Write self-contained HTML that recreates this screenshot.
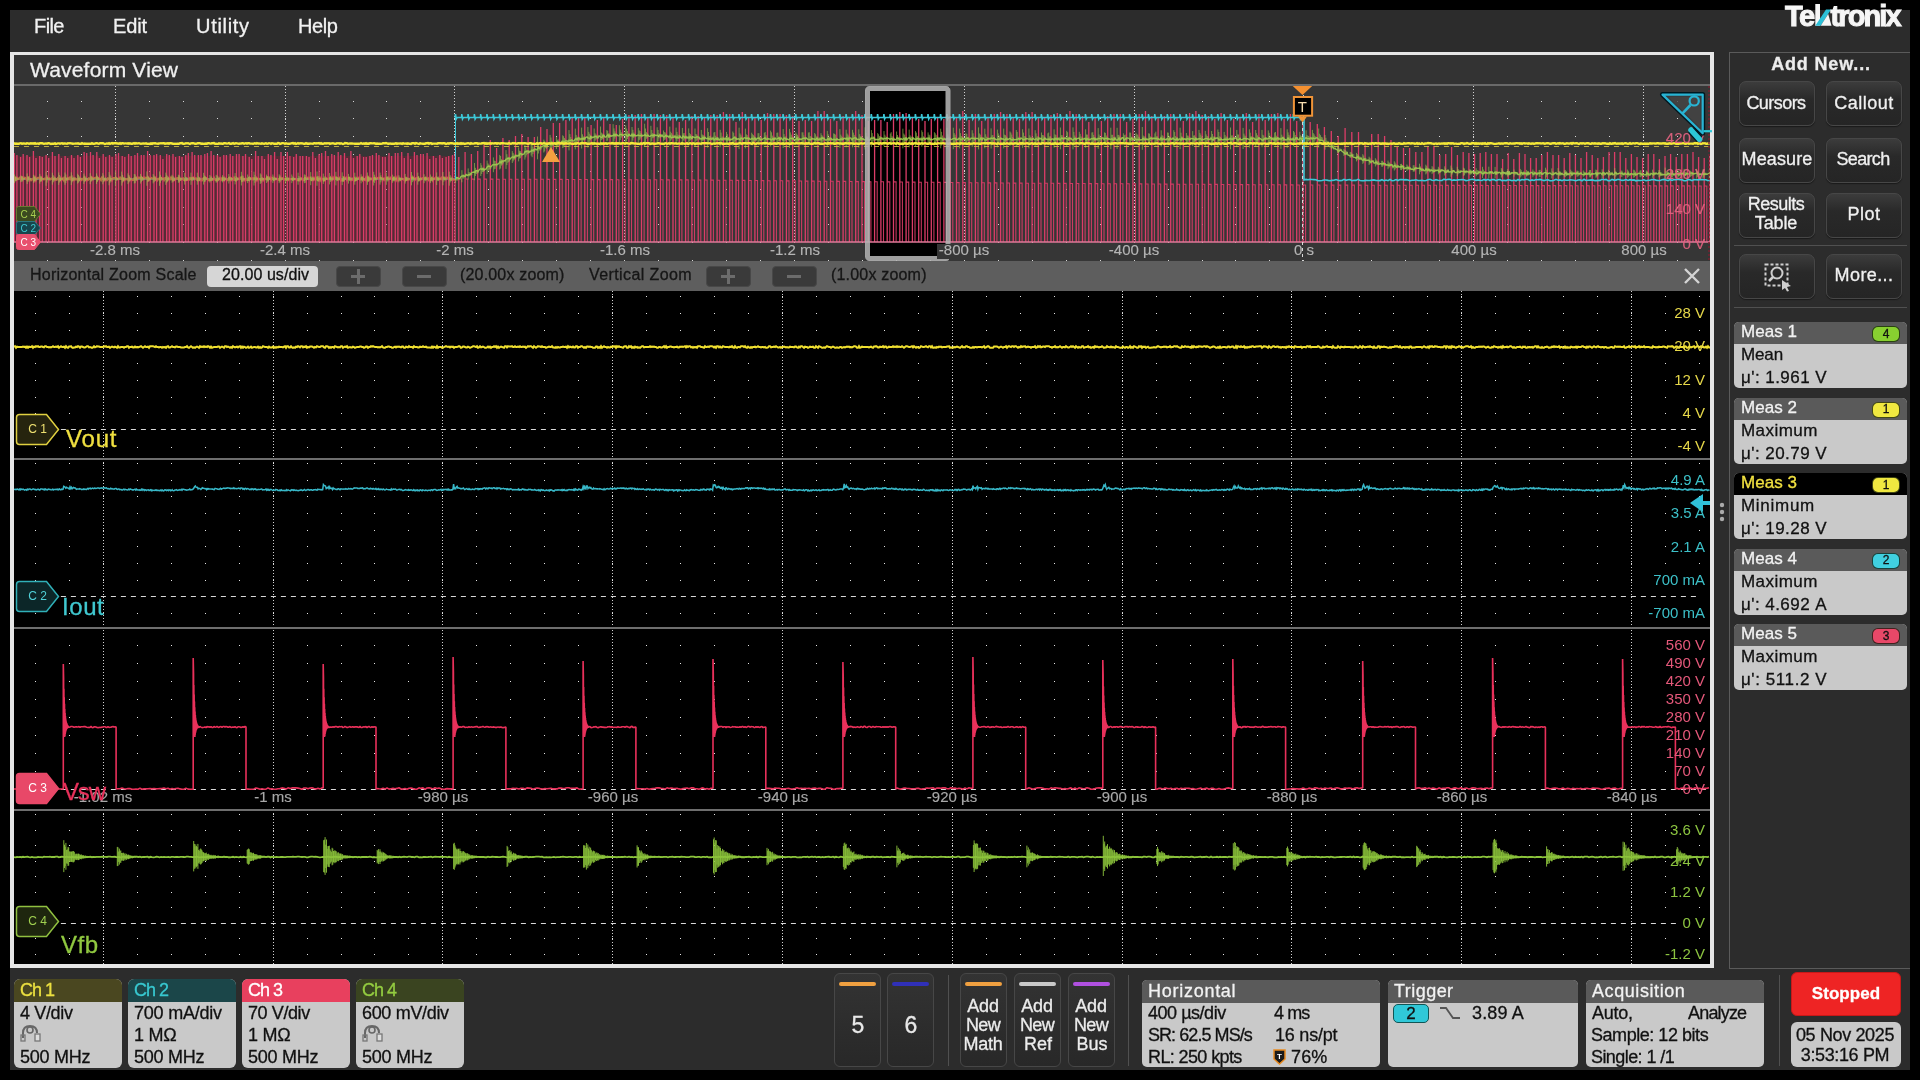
<!DOCTYPE html><html><head><meta charset="utf-8"><style>
html,body{margin:0;padding:0;} body{width:1920px;height:1080px;background:#000;position:relative;overflow:hidden;font-family:"Liberation Sans", sans-serif;}
.t{position:absolute;white-space:nowrap;line-height:1;will-change:transform;-webkit-text-stroke:0.3px currentColor;}
.r{position:absolute;box-sizing:border-box;}
svg{position:absolute;will-change:transform;}
</style></head><body>
<div class="r" style="left:10px;top:10px;width:1900px;height:1060px;background:#2c2c2c;"></div>
<div class="t" style="left:34.0px;top:15.6px;font-size:20px;color:#f2f2f2;font-weight:normal;letter-spacing:-0.58px;">File</div>
<div class="t" style="left:113.0px;top:15.6px;font-size:20px;color:#f2f2f2;font-weight:normal;letter-spacing:-0.15px;">Edit</div>
<div class="t" style="left:196.0px;top:15.6px;font-size:20px;color:#f2f2f2;font-weight:normal;letter-spacing:0.69px;">Utility</div>
<div class="t" style="left:298.0px;top:15.6px;font-size:20px;color:#f2f2f2;font-weight:normal;letter-spacing:-0.38px;">Help</div>
<svg style="left:1780px;top:0px" width="130" height="32" viewBox="1780 0 130 32"><text x="1785" y="25.8" font-family="Liberation Sans" font-weight="700" font-size="29" letter-spacing="-1.6" fill="#f6f6f6" stroke="#f6f6f6" stroke-width="1">Te</text><path d="M1815.3 4H1820V25.8H1815.3Z" fill="#f6f6f6"/><path d="M1815.3 25.8L1826 9.6H1831L1820.7 25.8Z" fill="#2cc0d8"/><path d="M1820.7 25.8L1828.2 14L1831.5 25.8Z" fill="#f6f6f6"/><text x="1830.5" y="25.8" font-family="Liberation Sans" font-weight="700" font-size="29" letter-spacing="-1.9" fill="#f6f6f6" stroke="#f6f6f6" stroke-width="1">tronix</text></svg>
<div class="r" style="left:10px;top:52px;width:1704px;height:916px;background:#e6e6e6;"></div>
<div class="r" style="left:14px;top:55px;width:1696px;height:29px;background:#333333;"></div>
<div class="t" style="left:29.5px;top:59.2px;font-size:21px;color:#f0f0f0;font-weight:normal;letter-spacing:0.18px;">Waveform View</div>
<div class="r" style="left:14px;top:84px;width:1696px;height:2px;background:#6a6a6a;"></div>
<div class="r" style="left:14px;top:86px;width:1696px;height:175px;background:#363636;"></div>
<div class="r" style="left:14px;top:261px;width:1696px;height:30px;background:#5e5e5e;"></div>
<div class="r" style="left:14px;top:291px;width:1696px;height:673px;background:#000000;"></div>
<svg style="left:14px;top:86px" width="1696" height="175" viewBox="14 86 1696 175"><path d="M47 101h1v1h-1zM47 118h1v1h-1zM47 136h1v1h-1zM47 154h1v1h-1zM47 171h1v1h-1zM47 189h1v1h-1zM47 207h1v1h-1zM47 224h1v1h-1zM47 242h1v1h-1zM47 260h1v1h-1zM81 101h1v1h-1zM81 118h1v1h-1zM81 136h1v1h-1zM81 154h1v1h-1zM81 171h1v1h-1zM81 189h1v1h-1zM81 207h1v1h-1zM81 224h1v1h-1zM81 242h1v1h-1zM81 260h1v1h-1zM115 101h1v1h-1zM115 118h1v1h-1zM115 136h1v1h-1zM115 154h1v1h-1zM115 171h1v1h-1zM115 189h1v1h-1zM115 207h1v1h-1zM115 224h1v1h-1zM115 242h1v1h-1zM115 260h1v1h-1zM149 101h1v1h-1zM149 118h1v1h-1zM149 136h1v1h-1zM149 154h1v1h-1zM149 171h1v1h-1zM149 189h1v1h-1zM149 207h1v1h-1zM149 224h1v1h-1zM149 242h1v1h-1zM149 260h1v1h-1zM183 101h1v1h-1zM183 118h1v1h-1zM183 136h1v1h-1zM183 154h1v1h-1zM183 171h1v1h-1zM183 189h1v1h-1zM183 207h1v1h-1zM183 224h1v1h-1zM183 242h1v1h-1zM183 260h1v1h-1zM217 101h1v1h-1zM217 118h1v1h-1zM217 136h1v1h-1zM217 154h1v1h-1zM217 171h1v1h-1zM217 189h1v1h-1zM217 207h1v1h-1zM217 224h1v1h-1zM217 242h1v1h-1zM217 260h1v1h-1zM251 101h1v1h-1zM251 118h1v1h-1zM251 136h1v1h-1zM251 154h1v1h-1zM251 171h1v1h-1zM251 189h1v1h-1zM251 207h1v1h-1zM251 224h1v1h-1zM251 242h1v1h-1zM251 260h1v1h-1zM285 101h1v1h-1zM285 118h1v1h-1zM285 136h1v1h-1zM285 154h1v1h-1zM285 171h1v1h-1zM285 189h1v1h-1zM285 207h1v1h-1zM285 224h1v1h-1zM285 242h1v1h-1zM285 260h1v1h-1zM319 101h1v1h-1zM319 118h1v1h-1zM319 136h1v1h-1zM319 154h1v1h-1zM319 171h1v1h-1zM319 189h1v1h-1zM319 207h1v1h-1zM319 224h1v1h-1zM319 242h1v1h-1zM319 260h1v1h-1zM353 101h1v1h-1zM353 118h1v1h-1zM353 136h1v1h-1zM353 154h1v1h-1zM353 171h1v1h-1zM353 189h1v1h-1zM353 207h1v1h-1zM353 224h1v1h-1zM353 242h1v1h-1zM353 260h1v1h-1zM386 101h1v1h-1zM386 118h1v1h-1zM386 136h1v1h-1zM386 154h1v1h-1zM386 171h1v1h-1zM386 189h1v1h-1zM386 207h1v1h-1zM386 224h1v1h-1zM386 242h1v1h-1zM386 260h1v1h-1zM420 101h1v1h-1zM420 118h1v1h-1zM420 136h1v1h-1zM420 154h1v1h-1zM420 171h1v1h-1zM420 189h1v1h-1zM420 207h1v1h-1zM420 224h1v1h-1zM420 242h1v1h-1zM420 260h1v1h-1zM454 101h1v1h-1zM454 118h1v1h-1zM454 136h1v1h-1zM454 154h1v1h-1zM454 171h1v1h-1zM454 189h1v1h-1zM454 207h1v1h-1zM454 224h1v1h-1zM454 242h1v1h-1zM454 260h1v1h-1zM488 101h1v1h-1zM488 118h1v1h-1zM488 136h1v1h-1zM488 154h1v1h-1zM488 171h1v1h-1zM488 189h1v1h-1zM488 207h1v1h-1zM488 224h1v1h-1zM488 242h1v1h-1zM488 260h1v1h-1zM522 101h1v1h-1zM522 118h1v1h-1zM522 136h1v1h-1zM522 154h1v1h-1zM522 171h1v1h-1zM522 189h1v1h-1zM522 207h1v1h-1zM522 224h1v1h-1zM522 242h1v1h-1zM522 260h1v1h-1zM556 101h1v1h-1zM556 118h1v1h-1zM556 136h1v1h-1zM556 154h1v1h-1zM556 171h1v1h-1zM556 189h1v1h-1zM556 207h1v1h-1zM556 224h1v1h-1zM556 242h1v1h-1zM556 260h1v1h-1zM590 101h1v1h-1zM590 118h1v1h-1zM590 136h1v1h-1zM590 154h1v1h-1zM590 171h1v1h-1zM590 189h1v1h-1zM590 207h1v1h-1zM590 224h1v1h-1zM590 242h1v1h-1zM590 260h1v1h-1zM624 101h1v1h-1zM624 118h1v1h-1zM624 136h1v1h-1zM624 154h1v1h-1zM624 171h1v1h-1zM624 189h1v1h-1zM624 207h1v1h-1zM624 224h1v1h-1zM624 242h1v1h-1zM624 260h1v1h-1zM658 101h1v1h-1zM658 118h1v1h-1zM658 136h1v1h-1zM658 154h1v1h-1zM658 171h1v1h-1zM658 189h1v1h-1zM658 207h1v1h-1zM658 224h1v1h-1zM658 242h1v1h-1zM658 260h1v1h-1zM692 101h1v1h-1zM692 118h1v1h-1zM692 136h1v1h-1zM692 154h1v1h-1zM692 171h1v1h-1zM692 189h1v1h-1zM692 207h1v1h-1zM692 224h1v1h-1zM692 242h1v1h-1zM692 260h1v1h-1zM726 101h1v1h-1zM726 118h1v1h-1zM726 136h1v1h-1zM726 154h1v1h-1zM726 171h1v1h-1zM726 189h1v1h-1zM726 207h1v1h-1zM726 224h1v1h-1zM726 242h1v1h-1zM726 260h1v1h-1zM760 101h1v1h-1zM760 118h1v1h-1zM760 136h1v1h-1zM760 154h1v1h-1zM760 171h1v1h-1zM760 189h1v1h-1zM760 207h1v1h-1zM760 224h1v1h-1zM760 242h1v1h-1zM760 260h1v1h-1zM794 101h1v1h-1zM794 118h1v1h-1zM794 136h1v1h-1zM794 154h1v1h-1zM794 171h1v1h-1zM794 189h1v1h-1zM794 207h1v1h-1zM794 224h1v1h-1zM794 242h1v1h-1zM794 260h1v1h-1zM828 101h1v1h-1zM828 118h1v1h-1zM828 136h1v1h-1zM828 154h1v1h-1zM828 171h1v1h-1zM828 189h1v1h-1zM828 207h1v1h-1zM828 224h1v1h-1zM828 242h1v1h-1zM828 260h1v1h-1zM862 101h1v1h-1zM862 118h1v1h-1zM862 136h1v1h-1zM862 154h1v1h-1zM862 171h1v1h-1zM862 189h1v1h-1zM862 207h1v1h-1zM862 224h1v1h-1zM862 242h1v1h-1zM862 260h1v1h-1zM896 101h1v1h-1zM896 118h1v1h-1zM896 136h1v1h-1zM896 154h1v1h-1zM896 171h1v1h-1zM896 189h1v1h-1zM896 207h1v1h-1zM896 224h1v1h-1zM896 242h1v1h-1zM896 260h1v1h-1zM930 101h1v1h-1zM930 118h1v1h-1zM930 136h1v1h-1zM930 154h1v1h-1zM930 171h1v1h-1zM930 189h1v1h-1zM930 207h1v1h-1zM930 224h1v1h-1zM930 242h1v1h-1zM930 260h1v1h-1zM964 101h1v1h-1zM964 118h1v1h-1zM964 136h1v1h-1zM964 154h1v1h-1zM964 171h1v1h-1zM964 189h1v1h-1zM964 207h1v1h-1zM964 224h1v1h-1zM964 242h1v1h-1zM964 260h1v1h-1zM998 101h1v1h-1zM998 118h1v1h-1zM998 136h1v1h-1zM998 154h1v1h-1zM998 171h1v1h-1zM998 189h1v1h-1zM998 207h1v1h-1zM998 224h1v1h-1zM998 242h1v1h-1zM998 260h1v1h-1zM1032 101h1v1h-1zM1032 118h1v1h-1zM1032 136h1v1h-1zM1032 154h1v1h-1zM1032 171h1v1h-1zM1032 189h1v1h-1zM1032 207h1v1h-1zM1032 224h1v1h-1zM1032 242h1v1h-1zM1032 260h1v1h-1zM1066 101h1v1h-1zM1066 118h1v1h-1zM1066 136h1v1h-1zM1066 154h1v1h-1zM1066 171h1v1h-1zM1066 189h1v1h-1zM1066 207h1v1h-1zM1066 224h1v1h-1zM1066 242h1v1h-1zM1066 260h1v1h-1zM1100 101h1v1h-1zM1100 118h1v1h-1zM1100 136h1v1h-1zM1100 154h1v1h-1zM1100 171h1v1h-1zM1100 189h1v1h-1zM1100 207h1v1h-1zM1100 224h1v1h-1zM1100 242h1v1h-1zM1100 260h1v1h-1zM1134 101h1v1h-1zM1134 118h1v1h-1zM1134 136h1v1h-1zM1134 154h1v1h-1zM1134 171h1v1h-1zM1134 189h1v1h-1zM1134 207h1v1h-1zM1134 224h1v1h-1zM1134 242h1v1h-1zM1134 260h1v1h-1zM1168 101h1v1h-1zM1168 118h1v1h-1zM1168 136h1v1h-1zM1168 154h1v1h-1zM1168 171h1v1h-1zM1168 189h1v1h-1zM1168 207h1v1h-1zM1168 224h1v1h-1zM1168 242h1v1h-1zM1168 260h1v1h-1zM1202 101h1v1h-1zM1202 118h1v1h-1zM1202 136h1v1h-1zM1202 154h1v1h-1zM1202 171h1v1h-1zM1202 189h1v1h-1zM1202 207h1v1h-1zM1202 224h1v1h-1zM1202 242h1v1h-1zM1202 260h1v1h-1zM1235 101h1v1h-1zM1235 118h1v1h-1zM1235 136h1v1h-1zM1235 154h1v1h-1zM1235 171h1v1h-1zM1235 189h1v1h-1zM1235 207h1v1h-1zM1235 224h1v1h-1zM1235 242h1v1h-1zM1235 260h1v1h-1zM1269 101h1v1h-1zM1269 118h1v1h-1zM1269 136h1v1h-1zM1269 154h1v1h-1zM1269 171h1v1h-1zM1269 189h1v1h-1zM1269 207h1v1h-1zM1269 224h1v1h-1zM1269 242h1v1h-1zM1269 260h1v1h-1zM1303 101h1v1h-1zM1303 118h1v1h-1zM1303 136h1v1h-1zM1303 154h1v1h-1zM1303 171h1v1h-1zM1303 189h1v1h-1zM1303 207h1v1h-1zM1303 224h1v1h-1zM1303 242h1v1h-1zM1303 260h1v1h-1zM1337 101h1v1h-1zM1337 118h1v1h-1zM1337 136h1v1h-1zM1337 154h1v1h-1zM1337 171h1v1h-1zM1337 189h1v1h-1zM1337 207h1v1h-1zM1337 224h1v1h-1zM1337 242h1v1h-1zM1337 260h1v1h-1zM1371 101h1v1h-1zM1371 118h1v1h-1zM1371 136h1v1h-1zM1371 154h1v1h-1zM1371 171h1v1h-1zM1371 189h1v1h-1zM1371 207h1v1h-1zM1371 224h1v1h-1zM1371 242h1v1h-1zM1371 260h1v1h-1zM1405 101h1v1h-1zM1405 118h1v1h-1zM1405 136h1v1h-1zM1405 154h1v1h-1zM1405 171h1v1h-1zM1405 189h1v1h-1zM1405 207h1v1h-1zM1405 224h1v1h-1zM1405 242h1v1h-1zM1405 260h1v1h-1zM1439 101h1v1h-1zM1439 118h1v1h-1zM1439 136h1v1h-1zM1439 154h1v1h-1zM1439 171h1v1h-1zM1439 189h1v1h-1zM1439 207h1v1h-1zM1439 224h1v1h-1zM1439 242h1v1h-1zM1439 260h1v1h-1zM1473 101h1v1h-1zM1473 118h1v1h-1zM1473 136h1v1h-1zM1473 154h1v1h-1zM1473 171h1v1h-1zM1473 189h1v1h-1zM1473 207h1v1h-1zM1473 224h1v1h-1zM1473 242h1v1h-1zM1473 260h1v1h-1zM1507 101h1v1h-1zM1507 118h1v1h-1zM1507 136h1v1h-1zM1507 154h1v1h-1zM1507 171h1v1h-1zM1507 189h1v1h-1zM1507 207h1v1h-1zM1507 224h1v1h-1zM1507 242h1v1h-1zM1507 260h1v1h-1zM1541 101h1v1h-1zM1541 118h1v1h-1zM1541 136h1v1h-1zM1541 154h1v1h-1zM1541 171h1v1h-1zM1541 189h1v1h-1zM1541 207h1v1h-1zM1541 224h1v1h-1zM1541 242h1v1h-1zM1541 260h1v1h-1zM1575 101h1v1h-1zM1575 118h1v1h-1zM1575 136h1v1h-1zM1575 154h1v1h-1zM1575 171h1v1h-1zM1575 189h1v1h-1zM1575 207h1v1h-1zM1575 224h1v1h-1zM1575 242h1v1h-1zM1575 260h1v1h-1zM1609 101h1v1h-1zM1609 118h1v1h-1zM1609 136h1v1h-1zM1609 154h1v1h-1zM1609 171h1v1h-1zM1609 189h1v1h-1zM1609 207h1v1h-1zM1609 224h1v1h-1zM1609 242h1v1h-1zM1609 260h1v1h-1zM1643 101h1v1h-1zM1643 118h1v1h-1zM1643 136h1v1h-1zM1643 154h1v1h-1zM1643 171h1v1h-1zM1643 189h1v1h-1zM1643 207h1v1h-1zM1643 224h1v1h-1zM1643 242h1v1h-1zM1643 260h1v1h-1zM1677 101h1v1h-1zM1677 118h1v1h-1zM1677 136h1v1h-1zM1677 154h1v1h-1zM1677 171h1v1h-1zM1677 189h1v1h-1zM1677 207h1v1h-1zM1677 224h1v1h-1zM1677 242h1v1h-1zM1677 260h1v1h-1z" fill="#d8d8d8"/><path d="M115.5 86V261M285.5 86V261M454.5 86V261M624.5 86V261M794.5 86V261M964.5 86V261M1134.5 86V261M1303.5 86V261M1473.5 86V261M1643.5 86V261" stroke="#d0d0d0" stroke-width="1" stroke-dasharray="1 2"/><rect x="866" y="87" width="84" height="173" fill="#000"/><path d="M14 179H455" stroke="#3cc4d4" stroke-width="1.5" fill="none"/><path d="M14 178.5L15 178.0L16 179.5L17 177.7L18 179.1L19 178.6L20 177.7L21 179.0L22 177.6L23 178.8L24 177.7L25 177.8L26 178.8L27 180.0L28 177.9L29 178.2L30 179.4L31 180.3L32 179.2L33 178.7L34 180.4L35 177.6L36 180.1L37 178.4L38 177.9L39 177.9L40 178.4L41 179.9L42 178.0L43 179.2L44 179.4L45 178.6L46 179.1L47 177.7L48 177.7L49 178.1L50 179.5L51 178.8L52 178.4L53 179.3L54 178.9L55 178.4L56 179.9L57 179.6L58 178.2L59 179.2L60 179.1L61 180.1L62 179.7L63 178.4L64 180.4L65 177.9L66 178.8L67 179.8L68 178.0L69 179.0L70 177.6L71 179.5L72 179.8L73 179.2L74 180.1L75 178.4L76 179.6L77 179.3L78 179.2L79 178.9L80 180.0L81 180.3L82 178.9L83 179.5L84 177.7L85 179.6L86 179.4L87 180.5L88 180.0L89 178.4L90 178.7L91 179.5L92 177.6L93 178.9L94 178.0L95 177.9L96 177.7L97 179.8L98 177.9L99 178.2L100 178.7L101 180.1L102 177.7L103 178.8L104 179.1L105 180.2L106 180.0L107 180.1L108 178.3L109 178.7L110 178.6L111 180.2L112 180.4L113 178.0L114 178.0L115 178.2L116 178.2L117 179.0L118 179.3L119 178.3L120 177.5L121 178.8L122 178.6L123 179.2L124 180.4L125 179.6L126 179.0L127 179.4L128 179.5L129 177.7L130 180.2L131 179.8L132 180.1L133 179.9L134 178.7L135 178.7L136 177.8L137 179.4L138 177.7L139 177.7L140 178.1L141 178.0L142 178.5L143 177.7L144 177.5L145 178.0L146 177.8L147 178.6L148 177.6L149 180.1L150 179.3L151 177.9L152 178.3L153 178.5L154 178.6L155 177.9L156 180.0L157 180.5L158 178.9L159 179.0L160 177.8L161 177.8L162 178.5L163 178.3L164 180.0L165 178.0L166 177.6L167 180.4L168 179.1L169 177.9L170 179.1L171 177.6L172 179.1L173 180.4L174 180.1L175 179.6L176 178.3L177 178.6L178 178.0L179 179.8L180 179.1L181 179.8L182 178.5L183 178.2L184 179.9L185 180.5L186 180.1L187 179.9L188 180.0L189 179.7L190 178.2L191 179.1L192 178.6L193 177.6L194 177.6L195 178.3L196 178.3L197 179.6L198 180.4L199 178.8L200 180.3L201 180.5L202 180.4L203 178.6L204 178.2L205 178.2L206 178.1L207 178.1L208 179.4L209 180.2L210 180.0L211 178.9L212 179.5L213 179.9L214 177.8L215 179.5L216 180.2L217 179.8L218 179.8L219 178.9L220 178.0L221 179.9L222 178.5L223 179.9L224 180.4L225 178.7L226 178.7L227 180.3L228 179.7L229 178.0L230 177.9L231 178.0L232 180.2L233 179.9L234 177.9L235 180.0L236 180.4L237 179.5L238 178.6L239 179.1L240 177.9L241 177.5L242 180.4L243 179.4L244 179.1L245 180.3L246 178.8L247 180.1L248 180.0L249 178.1L250 178.3L251 178.4L252 178.2L253 179.3L254 178.3L255 178.8L256 177.9L257 180.2L258 178.6L259 178.9L260 179.3L261 180.2L262 178.8L263 180.3L264 179.0L265 179.1L266 179.1L267 177.6L268 178.8L269 178.0L270 177.5L271 179.9L272 178.0L273 178.9L274 179.7L275 179.2L276 178.5L277 179.1L278 179.2L279 179.9L280 177.8L281 179.2L282 178.2L283 178.3L284 179.8L285 179.0L286 179.2L287 179.8L288 180.2L289 178.8L290 179.3L291 179.0L292 179.0L293 179.6L294 178.9L295 179.1L296 178.9L297 180.3L298 179.6L299 180.1L300 180.3L301 178.3L302 179.2L303 180.3L304 180.0L305 177.9L306 177.9L307 178.8L308 177.7L309 178.2L310 177.7L311 179.5L312 179.9L313 180.2L314 178.0L315 179.6L316 179.5L317 177.9L318 180.1L319 180.4L320 178.2L321 180.4L322 178.7L323 179.0L324 180.5L325 180.0L326 178.0L327 178.8L328 179.0L329 178.5L330 178.1L331 178.5L332 179.7L333 177.6L334 179.2L335 178.8L336 177.6L337 178.5L338 179.4L339 179.0L340 177.7L341 180.5L342 179.9L343 180.4L344 177.8L345 178.3L346 177.6L347 179.8L348 178.3L349 177.9L350 178.8L351 180.2L352 180.0L353 178.3L354 177.9L355 180.3L356 179.2L357 179.6L358 177.8L359 177.7L360 179.6L361 178.8L362 177.7L363 180.3L364 179.4L365 179.9L366 177.8L367 180.1L368 177.7L369 180.1L370 178.9L371 178.5L372 179.2L373 180.3L374 178.3L375 177.9L376 179.1L377 178.2L378 177.8L379 178.0L380 177.7L381 178.1L382 178.4L383 178.4L384 179.8L385 178.4L386 179.0L387 178.0L388 178.5L389 177.6L390 178.3L391 177.5L392 179.7L393 179.2L394 178.1L395 178.9L396 180.3L397 177.8L398 180.0L399 178.8L400 179.0L401 180.0L402 178.7L403 179.0L404 179.6L405 180.4L406 178.5L407 180.0L408 179.6L409 179.4L410 178.7L411 178.5L412 177.7L413 177.9L414 177.7L415 179.7L416 178.3L417 178.0L418 177.8L419 180.0L420 180.1L421 179.5L422 178.3L423 178.2L424 178.4L425 178.9L426 178.0L427 178.8L428 178.3L429 180.4L430 180.4L431 179.1L432 178.2L433 180.4L434 178.4L435 178.6L436 177.5L437 178.6L438 178.9L439 179.0L440 178.1L441 179.0L442 177.5L443 178.3L444 177.8L445 178.7L446 177.6L447 177.6L448 178.4L449 178.2L450 179.3L451 179.1L452 179.8L453 179.5L454 179.6L455 180.1" stroke="#c8a048" stroke-width="2.2" fill="none"/><rect x="14" y="156" width="441" height="86" fill="rgba(140,25,55,0.36)"/><path d="M14.3 242V153M16.9 242V155M20.6 242V157M23.2 242V154M27.0 242V155M29.6 242V157M33.4 242V151M36.0 242V158M39.7 242V156M42.3 242V157M46.1 242V155M48.7 242V158M52.4 242V152M55.0 242V156M58.8 242V154M61.4 242V158M65.1 242V156M67.7 242V158M71.5 242V155M74.0 242V158M77.8 242V155M80.4 242V157M84.1 242V152M86.7 242V153M90.5 242V152M93.1 242V155M96.8 242V152M99.4 242V158M103.2 242V154M105.8 242V157M109.5 242V155M112.1 242V157M115.9 242V154M118.5 242V153M122.2 242V156M124.8 242V157M128.6 242V154M131.2 242V156M134.9 242V155M137.5 242V153M141.3 242V155M143.9 242V155M147.6 242V151M150.2 242V155M154.0 242V155M156.6 242V154M160.3 242V155M162.9 242V159M166.7 242V154M169.3 242V155M173.0 242V154M175.6 242V157M179.4 242V156M182.0 242V157M185.7 242V155M188.3 242V153M192.1 242V152M194.7 242V155M198.4 242V155M201.0 242V155M204.8 242V154M207.4 242V153M211.1 242V151M213.7 242V155M217.5 242V155M220.1 242V157M223.8 242V155M226.4 242V155M230.2 242V154M232.8 242V156M236.5 242V154M239.1 242V154M242.9 242V156M245.5 242V154M249.2 242V157M251.8 242V159M255.6 242V151M258.2 242V156M261.9 242V156M264.5 242V159M268.3 242V154M270.9 242V155M274.6 242V152M277.2 242V159M281.0 242V152M283.6 242V156M287.3 242V152M289.9 242V156M293.7 242V157M296.3 242V154M300.1 242V156M302.7 242V156M306.4 242V156M309.0 242V157M312.8 242V152M315.4 242V158M319.1 242V154M321.7 242V153M325.5 242V151M328.1 242V156M331.8 242V154M334.4 242V155M338.2 242V152M340.8 242V155M344.5 242V153M347.1 242V158M350.9 242V151M353.5 242V158M357.2 242V156M359.8 242V154M363.6 242V157M366.2 242V157M369.9 242V156M372.5 242V155M376.3 242V153M378.9 242V155M382.6 242V157M385.2 242V157M389.0 242V153M391.6 242V156M395.3 242V153M397.9 242V153M401.7 242V152M404.3 242V158M408.0 242V153M410.6 242V159M414.4 242V152M417.0 242V155M420.7 242V154M423.3 242V154M427.1 242V153M429.7 242V159M433.4 242V156M436.0 242V158M439.8 242V155M442.4 242V158M446.1 242V157M448.7 242V156M452.5 242V155M455.1 242V153M458.8 242V157M465.1 242V152M471.4 242V154M477.7 242V151M484.0 242V145M490.3 242V140M496.6 242V148M502.9 242V138M509.2 242V140M515.5 242V136M521.8 242V134M528.1 242V137M534.4 242V137M540.7 242V127M547.0 242V129M553.3 242V123M559.6 242V123M565.9 242V120M572.2 242V118M578.5 242V117M584.8 242V117M591.1 242V125M597.4 242V120M603.7 242V117M610.0 242V124M616.3 242V125M622.6 242V119M628.9 242V115M635.2 242V115M641.5 242V114M647.8 242V117M654.1 242V114M660.4 242V115M666.7 242V115M673.0 242V118M679.3 242V122M685.6 242V120M691.9 242V116M698.2 242V116M704.5 242V117M710.8 242V115M717.1 242V115M723.4 242V112M729.7 242V114M736.0 242V122M742.3 242V112M748.6 242V117M754.9 242V118M761.2 242V120M767.5 242V113M773.8 242V114M780.1 242V114M786.4 242V115M792.7 242V116M799.0 242V121M805.3 242V120M811.6 242V121M817.9 242V111M824.2 242V111M830.5 242V119M836.8 242V121M843.1 242V116M849.4 242V117M855.7 242V111M862.0 242V115M868.3 242V121M874.6 242V120M880.9 242V120M887.2 242V122M893.5 242V114M899.8 242V112M906.1 242V113M912.4 242V117M918.7 242V119M925.0 242V121M931.3 242V119M937.6 242V118M943.9 242V119M950.2 242V116M956.5 242V117M962.8 242V111M969.1 242V120M975.4 242V114M981.7 242V121M988.0 242V118M994.3 242V114M1000.6 242V112M1006.9 242V114M1013.2 242V118M1019.5 242V119M1025.8 242V112M1032.1 242V112M1038.4 242V117M1044.7 242V117M1051.0 242V115M1057.3 242V113M1063.6 242V118M1069.9 242V111M1076.2 242V114M1082.5 242V116M1088.8 242V122M1095.1 242V118M1101.4 242V121M1107.7 242V116M1114.0 242V114M1120.3 242V114M1126.6 242V122M1132.9 242V119M1139.2 242V114M1145.5 242V111M1151.8 242V116M1158.1 242V118M1164.4 242V116M1170.7 242V114M1177.0 242V118M1183.3 242V121M1189.6 242V113M1195.9 242V111M1202.2 242V115M1208.5 242V116M1214.8 242V119M1221.1 242V113M1227.4 242V120M1233.7 242V119M1240.0 242V117M1246.3 242V113M1252.6 242V122M1258.9 242V114M1265.2 242V120M1271.5 242V114M1277.8 242V113M1284.1 242V119M1290.4 242V114M1296.7 242V121M1303.0 242V124M1310.2 242V122M1317.3 242V124M1324.4 242V127M1331.3 242V131M1338.2 242V136M1345.1 242V128M1351.8 242V132M1358.5 242V132M1365.1 242V142M1371.7 242V134M1378.2 242V134M1384.6 242V136M1391.0 242V140M1397.2 242V147M1403.5 242V148M1409.6 242V148M1415.8 242V152M1421.9 242V152M1427.9 242V146M1433.9 242V146M1439.8 242V155M1445.7 242V154M1451.6 242V147M1457.4 242V155M1463.2 242V152M1468.9 242V153M1474.6 242V154M1480.2 242V153M1485.8 242V152M1491.4 242V154M1497.0 242V154M1502.6 242V159M1508.2 242V153M1513.8 242V159M1519.4 242V153M1525.0 242V154M1530.6 242V158M1536.2 242V158M1541.8 242V155M1547.4 242V152M1553.0 242V155M1558.6 242V155M1564.2 242V158M1569.8 242V153M1575.4 242V155M1581.0 242V158M1586.6 242V152M1592.2 242V155M1597.8 242V158M1603.4 242V157M1609.0 242V152M1614.6 242V152M1620.2 242V152M1625.8 242V158M1631.4 242V154M1637.0 242V157M1642.6 242V158M1648.2 242V154M1653.8 242V154M1659.4 242V159M1665.0 242V156M1670.6 242V154M1676.2 242V157M1681.8 242V154M1687.4 242V154M1693.0 242V152M1698.6 242V157M1704.2 242V158M1709.8 242V156" stroke="#dc3c68" stroke-width="1.3" fill="none"/><path d="M458.8 179.0H461.4V242M465.1 179.0H467.7V242M471.4 179.1H474.0V242M477.7 179.1H480.3V242M484.0 179.1H486.6V242M490.3 179.1H492.9V242M496.6 179.2H499.2V242M502.9 179.2H505.5V242M509.2 179.2H511.8V242M515.5 179.2H518.1V242M521.8 179.3H524.4V242M528.1 179.3H530.7V242M534.4 179.3H537.0V242M540.7 179.3H543.3V242M547.0 179.4H549.6V242M553.3 179.4H555.9V242M559.6 179.4H562.2V242M565.9 179.5H568.5V242M572.2 179.5H574.8V242M578.5 179.5H581.1V242M584.8 179.5H587.4V242M591.1 179.6H593.7V242M597.4 179.6H600.0V242M603.7 179.6H606.3V242M610.0 179.6H612.6V242M616.3 179.7H618.9V242M622.6 179.7H625.2V242M628.9 179.7H631.5V242M635.2 179.7H637.8V242M641.5 179.8H644.1V242M647.8 179.8H650.4V242M654.1 179.8H656.7V242M660.4 179.8H663.0V242M666.7 179.9H669.3V242M673.0 179.9H675.6V242M679.3 179.9H681.9V242M685.6 179.9H688.2V242M691.9 180.0H694.5V242M698.2 180.0H700.8V242M704.5 180.0H707.1V242M710.8 180.1H713.4V242M717.1 180.2H719.7V242M723.4 180.2H726.0V242M729.7 180.3H732.3V242M736.0 180.4H738.6V242M742.3 180.4H744.9V242M748.6 180.5H751.2V242M754.9 180.5H757.5V242M761.2 180.6H763.8V242M767.5 180.7H770.1V242M773.8 180.7H776.4V242M780.1 180.8H782.7V242M786.4 180.9H789.0V242M792.7 180.9H795.3V242M799.0 181.0H801.6V242M805.3 181.1H807.9V242M811.6 181.1H814.2V242M817.9 181.2H820.5V242M824.2 181.2H826.8V242M830.5 181.3H833.1V242M836.8 181.4H839.4V242M843.1 181.4H845.7V242M849.4 181.5H852.0V242M855.7 181.6H858.3V242M862.0 181.6H864.6V242M868.3 181.7H870.9V242M874.6 181.7H877.2V242M880.9 181.8H883.5V242M887.2 181.9H889.8V242M893.5 181.9H896.1V242M899.8 182.0H902.4V242M906.1 182.1H908.7V242M912.4 182.1H915.0V242M918.7 182.2H921.3V242M925.0 182.2H927.6V242M931.3 182.3H933.9V242M937.6 182.4H940.2V242M943.9 182.4H946.5V242M950.2 182.5H952.8V242M956.5 182.6H959.1V242M962.8 182.6H965.4V242M969.1 182.7H971.7V242M975.4 182.8H978.0V242M981.7 182.8H984.3V242M988.0 182.9H990.6V242M994.3 182.9H996.9V242M1000.6 183.0H1003.2V242M1006.9 183.0H1009.5V242M1013.2 183.1H1015.8V242M1019.5 183.1H1022.1V242M1025.8 183.2H1028.4V242M1032.1 183.2H1034.7V242M1038.4 183.3H1041.0V242M1044.7 183.3H1047.3V242M1051.0 183.3H1053.6V242M1057.3 183.4H1059.9V242M1063.6 183.4H1066.2V242M1069.9 183.5H1072.5V242M1076.2 183.5H1078.8V242M1082.5 183.5H1085.1V242M1088.8 183.6H1091.4V242M1095.1 183.6H1097.7V242M1101.4 183.7H1104.0V242M1107.7 183.7H1110.3V242M1114.0 183.8H1116.6V242M1120.3 183.8H1122.9V242M1126.6 183.8H1129.2V242M1132.9 183.9H1135.5V242M1139.2 183.9H1141.8V242M1145.5 184.0H1148.1V242M1151.8 184.0H1154.4V242M1158.1 184.0H1160.7V242M1164.4 184.1H1167.0V242M1170.7 184.1H1173.3V242M1177.0 184.2H1179.6V242M1183.3 184.2H1185.9V242M1189.6 184.3H1192.2V242M1195.9 184.3H1198.5V242M1202.2 184.3H1204.8V242M1208.5 184.4H1211.1V242M1214.8 184.4H1217.4V242M1221.1 184.5H1223.7V242M1227.4 184.5H1230.0V242M1233.7 184.5H1236.3V242M1240.0 184.6H1242.6V242M1246.3 184.6H1248.9V242M1252.6 184.7H1255.2V242M1258.9 184.7H1261.5V242M1265.2 184.8H1267.8V242M1271.5 184.8H1274.1V242M1277.8 184.8H1280.4V242M1284.1 184.9H1286.7V242M1290.4 184.9H1293.0V242M1296.7 185.0H1299.3V242M1303.0 185.0H1305.6V242M1310.2 185.0H1312.8V242M1317.3 185.0H1319.9V242M1324.4 185.1H1327.0V242M1331.3 185.1H1333.9V242M1338.2 185.1H1340.8V242M1345.1 185.1H1347.7V242M1351.8 185.1H1354.4V242M1358.5 185.1H1361.1V242M1365.1 185.2H1367.7V242M1371.7 185.2H1374.3V242M1378.2 185.2H1380.8V242M1384.6 185.2H1387.2V242M1391.0 185.2H1393.6V242M1397.2 185.2H1399.8V242M1403.5 185.2H1406.1V242M1409.6 185.3H1412.2V242M1415.8 185.3H1418.4V242M1421.9 185.3H1424.5V242M1427.9 185.3H1430.5V242M1433.9 185.3H1436.5V242M1439.8 185.3H1442.4V242M1445.7 185.4H1448.3V242M1451.6 185.4H1454.2V242M1457.4 185.4H1460.0V242M1463.2 185.4H1465.8V242M1468.9 185.4H1471.5V242M1474.6 185.4H1477.2V242M1480.2 185.4H1482.8V242M1485.8 185.5H1488.4V242M1491.4 185.5H1494.0V242M1497.0 185.5H1499.6V242M1502.6 185.5H1505.2V242M1508.2 185.5H1510.8V242M1513.8 185.5H1516.4V242M1519.4 185.5H1522.0V242M1525.0 185.5H1527.6V242M1530.6 185.6H1533.2V242M1536.2 185.6H1538.8V242M1541.8 185.6H1544.4V242M1547.4 185.6H1550.0V242M1553.0 185.6H1555.6V242M1558.6 185.6H1561.2V242M1564.2 185.6H1566.8V242M1569.8 185.7H1572.4V242M1575.4 185.7H1578.0V242M1581.0 185.7H1583.6V242M1586.6 185.7H1589.2V242M1592.2 185.7H1594.8V242M1597.8 185.7H1600.4V242M1603.4 185.7H1606.0V242M1609.0 185.8H1611.6V242M1614.6 185.8H1617.2V242M1620.2 185.8H1622.8V242M1625.8 185.8H1628.4V242M1631.4 185.8H1634.0V242M1637.0 185.8H1639.6V242M1642.6 185.8H1645.2V242M1648.2 185.8H1650.8V242M1653.8 185.9H1656.4V242M1659.4 185.9H1662.0V242M1665.0 185.9H1667.6V242M1670.6 185.9H1673.2V242M1676.2 185.9H1678.8V242M1681.8 185.9H1684.4V242M1687.4 185.9H1690.0V242M1693.0 186.0H1695.6V242M1698.6 186.0H1701.2V242M1704.2 186.0H1706.8V242M1709.8 186.0H1712.4V242" stroke="#dc3c68" stroke-width="1.1" fill="none" opacity="0.9"/><path d="M14 242H1710" stroke="#e07898" stroke-width="1.5"/><path d="M455.0 180.1L456.0 177.5L457.0 177.7L458.0 177.9L459.0 178.7L460.0 178.3L461.0 176.6L462.0 175.9L463.0 176.0L464.0 175.8L465.0 176.5L466.0 174.4L467.0 175.5L468.0 175.0L469.0 174.8L470.0 174.4L471.0 173.6L472.0 172.6L473.0 172.2L474.0 172.0L475.0 172.6L476.0 170.6L477.0 170.5L478.0 171.5L479.0 169.9L480.0 169.1L481.0 168.7L482.0 169.6L483.0 168.7L484.0 169.9L485.0 169.3L486.0 169.2L487.0 167.1L488.0 166.4L489.0 166.0L490.0 166.6L491.0 166.7L492.0 165.6L493.0 164.7L494.0 164.7L495.0 164.8L496.0 164.5L497.0 164.3L498.0 164.1L499.0 163.3L500.0 161.5L501.0 162.9L502.0 161.1L503.0 161.4L504.0 160.5L505.0 161.0L506.0 159.2L507.0 158.9L508.0 158.5L509.0 157.9L510.0 159.2L511.0 158.1L512.0 157.1L513.0 156.8L514.0 157.8L515.0 156.3L516.0 155.2L517.0 156.2L518.0 155.4L519.0 155.8L520.0 153.4L521.0 153.9L522.0 154.4L523.0 154.2L524.0 154.0L525.0 151.6L526.0 151.8L527.0 151.1L528.0 150.9L529.0 152.5L530.0 151.2L531.0 151.7L532.0 150.0L533.0 150.9L534.0 149.5L535.0 148.8L536.0 149.7L537.0 149.7L538.0 147.4L539.0 148.2L540.0 148.0L541.0 146.7L542.0 146.7L543.0 145.8L544.0 145.6L545.0 145.4L546.0 145.9L547.0 145.7L548.0 144.3L549.0 143.6L550.0 144.2L551.0 144.8L552.0 143.4L553.0 143.5L554.0 143.1L555.0 144.3L556.0 143.5L557.0 142.2L558.0 142.0L559.0 142.5L560.0 142.7L561.0 142.7L562.0 141.2L563.0 141.2L564.0 142.3L565.0 141.4L566.0 140.9L567.0 140.7L568.0 142.1L569.0 140.3L570.0 140.8L571.0 140.1L572.0 140.0L573.0 140.9L574.0 141.0L575.0 139.3L576.0 138.7L577.0 139.7L578.0 138.3L579.0 137.7L580.0 139.7L581.0 138.5L582.0 139.3L583.0 138.2L584.0 139.3L585.0 138.1L586.0 137.3L587.0 136.9L588.0 138.0L589.0 138.1L590.0 138.7L591.0 136.6L592.0 137.8L593.0 137.1L594.0 137.3L595.0 136.3L596.0 136.5L597.0 137.0L598.0 137.9L599.0 135.8L600.0 136.6L601.0 137.2L602.0 137.5L603.0 135.6L604.0 135.3L605.0 137.1L606.0 137.1L607.0 135.8L608.0 134.7L609.0 136.7L610.0 135.3L611.0 136.4L612.0 135.6L613.0 136.0L614.0 134.3L615.0 135.7L616.0 134.4L617.0 134.8L618.0 135.9L619.0 135.9L620.0 134.4L621.0 134.5L622.0 134.9L623.0 135.2L624.0 134.9L625.0 134.3L626.0 134.6L627.0 135.8L628.0 136.2L629.0 134.2L630.0 135.5L631.0 136.0L632.0 134.3L633.0 136.2L634.0 134.5L635.0 135.7L636.0 135.6L637.0 135.8L638.0 135.0L639.0 135.3L640.0 135.8L641.0 135.4L642.0 136.0L643.0 135.5L644.0 135.5L645.0 134.5L646.0 136.0L647.0 135.7L648.0 135.1L649.0 136.4L650.0 136.4L651.0 135.7L652.0 135.1L653.0 135.8L654.0 134.9L655.0 135.0L656.0 135.7L657.0 135.0L658.0 135.8L659.0 136.0L660.0 134.9L661.0 136.4L662.0 135.1L663.0 136.7L664.0 136.9L665.0 136.3L666.0 135.2L667.0 136.4L668.0 136.1L669.0 137.5L670.0 135.6L671.0 137.4L672.0 137.8L673.0 137.2L674.0 137.5L675.0 136.0L676.0 138.0L677.0 136.8L678.0 138.0L679.0 137.9L680.0 136.2L681.0 137.7L682.0 138.1L683.0 136.1L684.0 136.8L685.0 137.9L686.0 136.5L687.0 138.3L688.0 136.9L689.0 138.2L690.0 136.6L691.0 137.6L692.0 138.6L693.0 136.9L694.0 137.1L695.0 137.8L696.0 137.4L697.0 136.7L698.0 137.1L699.0 137.1L700.0 139.0L701.0 138.5L702.0 139.0L703.0 137.4L704.0 138.9L705.0 137.3L706.0 138.4L707.0 138.7L708.0 138.1L709.0 139.3L710.0 138.6L711.0 138.7L712.0 139.5L713.0 137.7L714.0 139.9L715.0 139.1L716.0 138.5L717.0 139.6L718.0 138.3L719.0 140.1L720.0 139.2L721.0 138.7L722.0 139.6L723.0 138.9L724.0 138.2L725.0 139.6L726.0 137.9L727.0 139.8L728.0 138.4L729.0 139.3L730.0 140.2L731.0 139.2L732.0 139.4L733.0 138.6L734.0 137.8L735.0 137.9L736.0 138.2L737.0 139.3L738.0 138.8L739.0 139.0L740.0 139.9L741.0 138.1L742.0 138.3L743.0 139.4L744.0 137.9L745.0 137.8L746.0 138.7L747.0 138.1L748.0 138.7L749.0 138.3L750.0 139.2L751.0 139.2L752.0 138.3L753.0 139.3L754.0 138.9L755.0 138.1L756.0 140.0L757.0 138.4L758.0 138.2L759.0 138.0L760.0 139.3L761.0 139.9L762.0 139.7L763.0 138.8L764.0 138.4L765.0 137.8L766.0 139.3L767.0 139.1L768.0 138.6L769.0 139.3L770.0 138.9L771.0 140.0L772.0 139.6L773.0 138.4L774.0 140.0L775.0 137.9L776.0 139.1L777.0 138.8L778.0 138.4L779.0 137.9L780.0 139.7L781.0 137.8L782.0 139.1L783.0 140.1L784.0 138.1L785.0 138.3L786.0 139.3L787.0 139.0L788.0 139.3L789.0 139.8L790.0 138.2L791.0 138.5L792.0 138.5L793.0 137.9L794.0 139.9L795.0 139.7L796.0 139.5L797.0 137.8L798.0 139.8L799.0 139.6L800.0 138.9L801.0 139.6L802.0 138.9L803.0 138.3L804.0 138.1L805.0 138.4L806.0 137.9L807.0 138.6L808.0 139.6L809.0 139.5L810.0 139.8L811.0 139.5L812.0 138.4L813.0 139.1L814.0 138.8L815.0 139.7L816.0 139.1L817.0 138.4L818.0 139.3L819.0 140.1L820.0 138.3L821.0 139.9L822.0 137.8L823.0 138.4L824.0 138.4L825.0 139.6L826.0 140.1L827.0 139.6L828.0 138.6L829.0 139.9L830.0 138.6L831.0 138.4L832.0 140.0L833.0 139.3L834.0 139.5L835.0 139.4L836.0 140.1L837.0 138.9L838.0 139.8L839.0 139.5L840.0 139.9L841.0 138.8L842.0 139.5L843.0 139.2L844.0 138.5L845.0 138.3L846.0 139.3L847.0 138.0L848.0 140.0L849.0 138.1L850.0 137.9L851.0 138.1L852.0 140.0L853.0 138.6L854.0 138.1L855.0 137.9L856.0 137.9L857.0 139.5L858.0 139.3L859.0 139.5L860.0 139.6L861.0 138.0L862.0 139.2L863.0 138.7L864.0 139.8L865.0 139.8L866.0 139.9L867.0 138.0L868.0 139.9L869.0 140.0L870.0 140.1L871.0 138.1L872.0 138.3L873.0 138.1L874.0 137.9L875.0 139.8L876.0 139.7L877.0 139.3L878.0 139.8L879.0 139.3L880.0 138.5L881.0 138.0L882.0 138.0L883.0 139.6L884.0 138.3L885.0 138.6L886.0 138.8L887.0 137.9L888.0 138.4L889.0 138.5L890.0 139.5L891.0 138.7L892.0 138.6L893.0 140.1L894.0 139.0L895.0 139.8L896.0 139.3L897.0 137.9L898.0 138.8L899.0 138.8L900.0 139.7L901.0 138.6L902.0 139.5L903.0 139.1L904.0 138.3L905.0 139.9L906.0 138.0L907.0 139.8L908.0 138.2L909.0 137.8L910.0 138.3L911.0 139.6L912.0 140.1L913.0 137.8L914.0 139.0L915.0 139.0L916.0 139.7L917.0 138.2L918.0 139.0L919.0 138.6L920.0 139.8L921.0 138.4L922.0 140.1L923.0 138.5L924.0 138.3L925.0 139.5L926.0 139.0L927.0 138.1L928.0 139.3L929.0 138.0L930.0 139.7L931.0 139.5L932.0 139.7L933.0 139.3L934.0 138.7L935.0 138.8L936.0 138.7L937.0 139.9L938.0 138.0L939.0 139.9L940.0 137.9L941.0 138.3L942.0 138.4L943.0 140.0L944.0 139.0L945.0 138.7L946.0 139.9L947.0 138.4L948.0 138.9L949.0 139.1L950.0 139.6L951.0 139.6L952.0 139.4L953.0 138.6L954.0 138.6L955.0 138.2L956.0 139.8L957.0 139.4L958.0 139.6L959.0 138.2L960.0 138.9L961.0 139.7L962.0 139.2L963.0 138.1L964.0 138.9L965.0 139.9L966.0 138.4L967.0 138.3L968.0 138.5L969.0 139.5L970.0 139.8L971.0 138.2L972.0 138.2L973.0 138.4L974.0 138.6L975.0 139.1L976.0 138.2L977.0 138.6L978.0 138.3L979.0 140.1L980.0 139.5L981.0 138.0L982.0 140.1L983.0 138.0L984.0 138.7L985.0 140.2L986.0 139.7L987.0 139.6L988.0 138.8L989.0 138.3L990.0 139.3L991.0 138.1L992.0 138.3L993.0 138.7L994.0 137.9L995.0 138.8L996.0 139.7L997.0 139.5L998.0 139.0L999.0 139.3L1000.0 138.9L1001.0 138.1L1002.0 139.2L1003.0 138.8L1004.0 139.6L1005.0 140.0L1006.0 138.8L1007.0 139.2L1008.0 139.6L1009.0 138.8L1010.0 138.3L1011.0 139.5L1012.0 139.9L1013.0 139.7L1014.0 139.5L1015.0 139.8L1016.0 139.4L1017.0 139.3L1018.0 138.9L1019.0 138.6L1020.0 139.3L1021.0 138.0L1022.0 138.8L1023.0 139.7L1024.0 139.5L1025.0 139.3L1026.0 138.4L1027.0 138.8L1028.0 138.9L1029.0 139.3L1030.0 138.8L1031.0 139.4L1032.0 140.0L1033.0 138.2L1034.0 139.4L1035.0 139.7L1036.0 138.7L1037.0 139.0L1038.0 140.1L1039.0 137.9L1040.0 139.1L1041.0 138.2L1042.0 139.7L1043.0 140.1L1044.0 139.0L1045.0 138.0L1046.0 139.2L1047.0 139.1L1048.0 139.5L1049.0 139.0L1050.0 139.3L1051.0 139.8L1052.0 139.1L1053.0 138.8L1054.0 140.1L1055.0 138.3L1056.0 139.4L1057.0 138.7L1058.0 139.6L1059.0 138.1L1060.0 140.2L1061.0 138.7L1062.0 137.9L1063.0 138.5L1064.0 138.8L1065.0 137.8L1066.0 138.8L1067.0 138.8L1068.0 139.5L1069.0 138.6L1070.0 138.4L1071.0 138.3L1072.0 139.6L1073.0 140.1L1074.0 139.1L1075.0 138.3L1076.0 139.7L1077.0 138.7L1078.0 138.3L1079.0 138.1L1080.0 139.7L1081.0 139.7L1082.0 139.3L1083.0 138.9L1084.0 139.1L1085.0 138.3L1086.0 140.1L1087.0 138.6L1088.0 139.3L1089.0 139.8L1090.0 139.8L1091.0 138.9L1092.0 138.5L1093.0 139.1L1094.0 138.1L1095.0 139.8L1096.0 138.7L1097.0 139.8L1098.0 138.4L1099.0 138.7L1100.0 138.4L1101.0 138.8L1102.0 138.2L1103.0 137.8L1104.0 139.5L1105.0 138.5L1106.0 138.4L1107.0 138.5L1108.0 139.0L1109.0 138.8L1110.0 139.3L1111.0 139.4L1112.0 138.7L1113.0 140.0L1114.0 139.9L1115.0 137.9L1116.0 139.8L1117.0 140.0L1118.0 139.7L1119.0 138.1L1120.0 139.8L1121.0 139.3L1122.0 137.8L1123.0 137.8L1124.0 140.1L1125.0 139.4L1126.0 138.4L1127.0 138.0L1128.0 138.1L1129.0 138.4L1130.0 139.7L1131.0 138.6L1132.0 138.2L1133.0 140.0L1134.0 139.7L1135.0 138.2L1136.0 139.9L1137.0 139.3L1138.0 139.7L1139.0 139.4L1140.0 139.9L1141.0 139.7L1142.0 139.8L1143.0 138.3L1144.0 139.5L1145.0 139.1L1146.0 139.6L1147.0 138.9L1148.0 139.9L1149.0 139.1L1150.0 138.4L1151.0 138.4L1152.0 138.1L1153.0 139.0L1154.0 137.9L1155.0 138.9L1156.0 138.1L1157.0 139.0L1158.0 139.0L1159.0 139.1L1160.0 139.9L1161.0 137.8L1162.0 139.8L1163.0 138.9L1164.0 139.2L1165.0 139.4L1166.0 139.8L1167.0 138.7L1168.0 138.8L1169.0 140.1L1170.0 138.0L1171.0 139.3L1172.0 139.3L1173.0 137.9L1174.0 139.3L1175.0 139.4L1176.0 140.0L1177.0 138.6L1178.0 140.2L1179.0 139.0L1180.0 139.0L1181.0 140.0L1182.0 137.9L1183.0 139.5L1184.0 139.3L1185.0 138.6L1186.0 139.9L1187.0 138.7L1188.0 138.9L1189.0 139.1L1190.0 139.6L1191.0 138.3L1192.0 138.8L1193.0 138.8L1194.0 139.1L1195.0 139.8L1196.0 138.5L1197.0 139.8L1198.0 138.8L1199.0 139.0L1200.0 138.5L1201.0 139.0L1202.0 140.1L1203.0 139.4L1204.0 139.7L1205.0 138.6L1206.0 138.6L1207.0 138.5L1208.0 139.2L1209.0 139.3L1210.0 139.7L1211.0 137.9L1212.0 139.5L1213.0 139.9L1214.0 139.1L1215.0 137.9L1216.0 138.5L1217.0 137.8L1218.0 138.3L1219.0 140.0L1220.0 139.3L1221.0 139.4L1222.0 139.7L1223.0 140.0L1224.0 139.3L1225.0 139.3L1226.0 139.3L1227.0 139.5L1228.0 139.2L1229.0 139.4L1230.0 138.3L1231.0 139.4L1232.0 138.9L1233.0 139.6L1234.0 138.0L1235.0 138.2L1236.0 137.9L1237.0 139.7L1238.0 140.0L1239.0 139.4L1240.0 138.7L1241.0 139.8L1242.0 139.7L1243.0 139.1L1244.0 138.4L1245.0 138.5L1246.0 138.8L1247.0 138.6L1248.0 138.8L1249.0 139.3L1250.0 140.0L1251.0 137.9L1252.0 139.2L1253.0 137.9L1254.0 138.1L1255.0 139.7L1256.0 139.2L1257.0 140.0L1258.0 138.9L1259.0 137.8L1260.0 138.7L1261.0 139.2L1262.0 140.1L1263.0 140.2L1264.0 138.9L1265.0 138.8L1266.0 138.0L1267.0 139.3L1268.0 138.3L1269.0 138.2L1270.0 137.8L1271.0 137.8L1272.0 139.4L1273.0 138.1L1274.0 140.1L1275.0 138.0L1276.0 139.9L1277.0 138.1L1278.0 137.8L1279.0 139.5L1280.0 138.4L1281.0 139.6L1282.0 138.2L1283.0 137.9L1284.0 139.7L1285.0 139.5L1286.0 139.9L1287.0 139.6L1288.0 138.0L1289.0 139.3L1290.0 139.5L1291.0 138.9L1292.0 140.0L1293.0 138.4L1294.0 140.1L1295.0 139.5L1296.0 137.8L1297.0 137.8L1298.0 139.4L1299.0 139.8L1300.0 138.0L1301.0 138.5L1302.0 139.6L1303.0 138.1L1304.0 139.7L1305.0 138.8L1306.0 137.7L1307.0 138.4L1308.0 138.8L1309.0 138.4L1310.0 138.9L1311.0 137.6L1312.0 139.1L1313.0 138.0L1314.0 138.6L1315.0 138.5L1316.0 137.9L1317.0 137.8L1318.0 138.7L1319.0 139.8L1320.0 140.1L1321.0 140.3L1322.0 140.3L1323.0 140.4L1324.0 143.2L1325.0 143.2L1326.0 144.1L1327.0 143.5L1328.0 144.8L1329.0 146.3L1330.0 146.5L1331.0 146.5L1332.0 146.3L1333.0 147.2L1334.0 148.8L1335.0 148.1L1336.0 149.3L1337.0 149.6L1338.0 150.8L1339.0 151.1L1340.0 150.3L1341.0 150.1L1342.0 151.2L1343.0 152.0L1344.0 152.8L1345.0 153.8L1346.0 154.4L1347.0 152.7L1348.0 155.0L1349.0 155.4L1350.0 155.9L1351.0 155.6L1352.0 155.2L1353.0 157.0L1354.0 157.2L1355.0 157.3L1356.0 158.2L1357.0 157.1L1358.0 156.8L1359.0 158.3L1360.0 159.2L1361.0 158.0L1362.0 159.7L1363.0 160.4L1364.0 159.0L1365.0 160.2L1366.0 160.6L1367.0 160.4L1368.0 160.1L1369.0 160.4L1370.0 161.9L1371.0 162.2L1372.0 161.7L1373.0 161.0L1374.0 163.0L1375.0 163.1L1376.0 162.1L1377.0 163.1L1378.0 164.1L1379.0 164.3L1380.0 163.6L1381.0 163.7L1382.0 164.2L1383.0 163.4L1384.0 163.6L1385.0 163.8L1386.0 165.2L1387.0 164.6L1388.0 165.3L1389.0 165.1L1390.0 165.5L1391.0 164.8L1392.0 164.7L1393.0 167.2L1394.0 165.8L1395.0 165.3L1396.0 166.8L1397.0 167.3L1398.0 165.9L1399.0 167.1L1400.0 166.6L1401.0 167.2L1402.0 166.1L1403.0 166.3L1404.0 168.7L1405.0 168.6L1406.0 167.8L1407.0 168.1L1408.0 167.5L1409.0 168.8L1410.0 168.1L1411.0 169.5L1412.0 169.1L1413.0 169.4L1414.0 169.8L1415.0 168.2L1416.0 167.8L1417.0 168.3L1418.0 168.4L1419.0 168.2L1420.0 168.2L1421.0 169.5L1422.0 170.4L1423.0 169.5L1424.0 170.8L1425.0 170.7L1426.0 168.8L1427.0 170.2L1428.0 169.8L1429.0 169.2L1430.0 171.3L1431.0 169.7L1432.0 170.5L1433.0 170.7L1434.0 171.6L1435.0 170.9L1436.0 170.3L1437.0 170.5L1438.0 169.9L1439.0 171.9L1440.0 172.0L1441.0 170.3L1442.0 169.9L1443.0 170.5L1444.0 170.7L1445.0 172.1L1446.0 172.2L1447.0 172.1L1448.0 170.2L1449.0 172.1L1450.0 171.9L1451.0 171.8L1452.0 172.7L1453.0 170.5L1454.0 170.8L1455.0 172.3L1456.0 172.8L1457.0 172.2L1458.0 171.3L1459.0 172.1L1460.0 172.5L1461.0 171.0L1462.0 171.6L1463.0 171.4L1464.0 171.2L1465.0 172.1L1466.0 171.3L1467.0 171.5L1468.0 171.4L1469.0 172.7L1470.0 171.1L1471.0 172.8L1472.0 171.6L1473.0 171.3L1474.0 173.4L1475.0 171.8L1476.0 173.5L1477.0 173.4L1478.0 173.5L1479.0 171.7L1480.0 172.5L1481.0 171.7L1482.0 173.7L1483.0 173.5L1484.0 173.0L1485.0 172.6L1486.0 172.4L1487.0 173.5L1488.0 172.7L1489.0 173.1L1490.0 172.0L1491.0 172.2L1492.0 171.8L1493.0 173.4L1494.0 173.1L1495.0 172.1L1496.0 173.9L1497.0 172.4L1498.0 172.8L1499.0 172.2L1500.0 172.5L1501.0 173.9L1502.0 172.7L1503.0 172.3L1504.0 173.1L1505.0 172.7L1506.0 174.1L1507.0 172.3L1508.0 174.3L1509.0 172.1L1510.0 174.2L1511.0 173.6L1512.0 172.6L1513.0 173.2L1514.0 172.8L1515.0 172.7L1516.0 172.6L1517.0 173.0L1518.0 174.5L1519.0 174.5L1520.0 174.4L1521.0 172.4L1522.0 172.9L1523.0 174.4L1524.0 172.4L1525.0 174.0L1526.0 172.9L1527.0 174.6L1528.0 172.3L1529.0 174.2L1530.0 173.1L1531.0 172.6L1532.0 172.3L1533.0 174.3L1534.0 173.6L1535.0 172.8L1536.0 173.4L1537.0 174.5L1538.0 172.9L1539.0 173.7L1540.0 172.7L1541.0 172.8L1542.0 174.2L1543.0 174.1L1544.0 172.9L1545.0 172.6L1546.0 172.6L1547.0 173.9L1548.0 173.6L1549.0 173.1L1550.0 172.9L1551.0 173.9L1552.0 174.2L1553.0 174.4L1554.0 173.9L1555.0 173.0L1556.0 172.6L1557.0 174.3L1558.0 173.5L1559.0 174.2L1560.0 172.6L1561.0 174.5L1562.0 173.3L1563.0 174.6L1564.0 174.6L1565.0 173.7L1566.0 172.6L1567.0 174.7L1568.0 173.7L1569.0 174.7L1570.0 173.2L1571.0 173.0L1572.0 174.6L1573.0 173.5L1574.0 173.0L1575.0 173.5L1576.0 174.0L1577.0 172.6L1578.0 173.8L1579.0 173.7L1580.0 173.8L1581.0 172.9L1582.0 174.3L1583.0 174.6L1584.0 174.7L1585.0 173.4L1586.0 174.3L1587.0 173.5L1588.0 174.4L1589.0 172.8L1590.0 174.7L1591.0 174.9L1592.0 173.8L1593.0 173.9L1594.0 173.9L1595.0 173.9L1596.0 172.7L1597.0 175.0L1598.0 173.2L1599.0 173.1L1600.0 172.9L1601.0 173.3L1602.0 174.6L1603.0 172.8L1604.0 172.9L1605.0 174.4L1606.0 173.2L1607.0 172.7L1608.0 174.1L1609.0 174.1L1610.0 174.0L1611.0 174.4L1612.0 172.9L1613.0 174.8L1614.0 174.4L1615.0 172.8L1616.0 173.0L1617.0 173.9L1618.0 173.9L1619.0 173.4L1620.0 173.0L1621.0 173.7L1622.0 173.0L1623.0 174.1L1624.0 174.8L1625.0 173.1L1626.0 174.1L1627.0 174.5L1628.0 173.1L1629.0 174.7L1630.0 175.0L1631.0 173.7L1632.0 173.7L1633.0 174.7L1634.0 174.0L1635.0 173.7L1636.0 175.0L1637.0 174.6L1638.0 173.6L1639.0 173.3L1640.0 173.5L1641.0 173.8L1642.0 175.1L1643.0 174.7L1644.0 174.9L1645.0 174.7L1646.0 174.8L1647.0 172.9L1648.0 174.0L1649.0 175.1L1650.0 175.0L1651.0 173.4L1652.0 173.8L1653.0 174.3L1654.0 173.6L1655.0 174.0L1656.0 172.9L1657.0 173.8L1658.0 174.0L1659.0 172.8L1660.0 173.1L1661.0 175.1L1662.0 174.6L1663.0 175.0L1664.0 174.3L1665.0 174.7L1666.0 174.9L1667.0 174.9L1668.0 172.8L1669.0 174.3L1670.0 173.4L1671.0 174.4L1672.0 173.4L1673.0 174.1L1674.0 175.0L1675.0 174.3L1676.0 173.4L1677.0 174.0L1678.0 173.8L1679.0 175.1L1680.0 173.5L1681.0 173.5L1682.0 174.3L1683.0 173.1L1684.0 174.2L1685.0 175.1L1686.0 174.0L1687.0 173.4L1688.0 173.9L1689.0 174.1L1690.0 173.1L1691.0 173.1L1692.0 173.1L1693.0 173.5L1694.0 173.8L1695.0 173.5L1696.0 173.4L1697.0 173.0L1698.0 174.1L1699.0 174.8L1700.0 174.2L1701.0 174.2L1702.0 174.3L1703.0 173.3L1704.0 174.5L1705.0 173.9L1706.0 174.1L1707.0 174.3L1708.0 173.9L1709.0 173.5" stroke="#a0cc50" stroke-width="1.4" fill="none" opacity="0.9"/><path d="M14.6 174.5V183.1M15.5 176.3V181.4M16.4 176.9V180.9M17.3 177.9V180.0M18.2 178.2V179.7M20.9 175.5V182.2M21.8 176.0V181.7M22.7 176.4V181.4M23.6 178.0V179.9M24.5 178.2V179.7M27.2 173.4V184.0M28.1 176.2V181.6M29.0 176.2V181.5M29.9 177.9V180.0M30.8 178.1V179.8M33.5 174.8V182.7M34.4 176.7V181.1M35.3 176.4V181.4M36.2 177.8V180.1M37.1 178.5V179.5M39.8 173.9V183.6M40.7 175.8V181.9M41.6 176.6V181.2M42.5 178.1V179.8M43.4 178.4V179.5M46.1 171.5V185.8M47.0 175.0V182.6M47.9 177.5V180.4M48.8 177.9V180.0M49.7 178.3V179.6M52.4 172.7V184.7M53.3 175.3V182.3M54.2 176.4V181.3M55.1 177.4V180.4M56.0 178.2V179.7M58.7 172.4V184.9M59.6 175.0V182.6M60.5 176.5V181.2M61.4 177.8V180.1M62.3 178.1V179.8M65.0 172.5V184.8M65.9 174.5V183.0M66.8 177.5V180.3M67.7 177.4V180.4M68.6 178.5V179.4M71.3 172.3V185.0M72.2 175.4V182.3M73.1 176.9V180.9M74.0 177.3V180.5M74.9 178.2V179.7M77.6 173.7V183.7M78.5 174.9V182.7M79.4 176.4V181.4M80.3 177.6V180.2M81.2 178.3V179.6M83.9 173.6V183.9M84.8 175.7V182.0M85.7 176.6V181.2M86.6 177.9V179.9M87.5 178.3V179.6M90.2 173.2V184.2M91.1 175.9V181.8M92.0 177.2V180.6M92.9 177.5V180.4M93.8 178.0V179.9M96.5 173.4V184.0M97.4 175.7V181.9M98.3 177.4V180.4M99.2 177.9V180.0M100.1 178.4V179.5M102.8 173.1V184.3M103.7 175.4V182.2M104.6 177.6V180.3M105.5 177.4V180.5M106.4 178.3V179.6M109.1 172.0V185.3M110.0 174.7V182.8M110.9 176.2V181.5M111.8 178.0V179.9M112.7 178.3V179.6M115.4 171.7V185.6M116.3 176.8V180.9M117.2 177.6V180.2M118.1 177.7V180.2M119.0 178.2V179.7M121.7 171.6V185.6M122.6 174.9V182.7M123.5 176.9V180.9M124.4 177.3V180.5M125.3 178.2V179.7M128.0 173.3V184.1M128.9 175.1V182.5M129.8 177.1V180.7M130.7 177.9V180.0M131.6 178.2V179.7M134.3 174.0V183.5M135.2 174.5V183.1M136.1 176.7V181.1M137.0 177.7V180.1M137.9 178.5V179.5M140.6 173.9V183.6M141.5 175.9V181.8M142.4 176.8V180.9M143.3 177.7V180.2M144.2 178.0V179.9M146.9 171.4V185.8M147.8 175.6V182.0M148.7 177.0V180.8M149.6 177.6V180.2M150.5 178.0V179.9M153.2 174.1V183.4M154.1 175.5V182.1M155.0 176.5V181.3M155.9 178.1V179.8M156.8 178.3V179.6M159.5 171.4V185.8M160.4 174.8V182.8M161.3 176.9V180.9M162.2 178.1V179.8M163.1 178.0V179.9M165.8 172.6V184.8M166.7 174.8V182.8M167.6 176.2V181.5M168.5 177.4V180.5M169.4 178.3V179.6M172.1 174.8V182.7M173.0 176.1V181.6M173.9 176.9V180.9M174.8 177.7V180.1M175.7 178.4V179.5M178.4 174.7V182.8M179.3 175.3V182.4M180.2 176.8V181.0M181.1 177.9V180.0M182.0 178.0V179.9M184.7 172.8V184.6M185.6 176.8V181.0M186.5 177.1V180.7M187.4 177.5V180.4M188.3 178.4V179.6M191.0 172.6V184.8M191.9 176.9V180.9M192.8 177.2V180.6M193.7 177.4V180.4M194.6 178.2V179.7M197.3 172.7V184.7M198.2 176.4V181.4M199.1 176.9V180.9M200.0 177.7V180.2M200.9 178.4V179.6M203.6 172.8V184.6M204.5 175.5V182.1M205.4 176.2V181.5M206.3 177.7V180.2M207.2 178.3V179.6M209.9 175.0V182.6M210.8 176.5V181.3M211.7 176.5V181.2M212.6 178.1V179.8M213.5 178.5V179.5M216.2 174.8V182.8M217.1 175.5V182.1M218.0 176.4V181.3M218.9 177.6V180.2M219.8 178.1V179.8M222.5 175.2V182.4M223.4 176.8V180.9M224.3 176.5V181.2M225.2 177.9V180.0M226.1 178.1V179.8M228.8 174.0V183.5M229.7 176.4V181.3M230.6 177.3V180.5M231.5 178.1V179.8M232.4 178.0V179.9M235.1 173.1V184.4M236.0 176.0V181.7M236.9 177.0V180.8M237.8 177.9V180.0M238.7 178.5V179.5M241.4 171.8V185.5M242.3 175.4V182.2M243.2 176.2V181.5M244.1 177.8V180.1M245.0 178.2V179.7M247.7 174.5V183.1M248.6 176.8V181.0M249.5 176.3V181.5M250.4 177.4V180.4M251.3 178.3V179.6M254.0 171.7V185.5M254.9 174.8V182.8M255.8 177.2V180.6M256.7 177.7V180.2M257.6 178.0V179.9M260.3 173.4V184.0M261.2 174.5V183.1M262.1 177.3V180.5M263.0 177.9V180.0M263.9 178.1V179.8M266.6 174.6V183.0M267.5 176.1V181.6M268.4 176.4V181.4M269.3 177.8V180.1M270.2 178.1V179.8M272.9 174.5V183.1M273.8 176.4V181.3M274.7 177.2V180.7M275.6 178.0V179.9M276.5 178.0V179.9M279.2 174.3V183.2M280.1 175.4V182.2M281.0 177.5V180.3M281.9 177.7V180.2M282.8 178.3V179.6M285.5 173.8V183.7M286.4 176.7V181.1M287.3 177.5V180.3M288.2 177.4V180.4M289.1 178.3V179.6M291.8 174.5V183.1M292.7 176.4V181.3M293.6 177.3V180.6M294.5 178.0V179.9M295.4 178.5V179.4M298.1 172.7V184.7M299.0 176.0V181.7M299.9 177.5V180.4M300.8 177.6V180.3M301.7 178.5V179.5M304.4 174.4V183.2M305.3 174.8V182.8M306.2 177.5V180.3M307.1 177.8V180.1M308.0 178.1V179.9M310.7 172.1V185.2M311.6 176.5V181.3M312.5 177.2V180.6M313.4 177.5V180.3M314.3 178.3V179.6M317.0 171.5V185.8M317.9 176.3V181.4M318.8 176.2V181.5M319.7 177.7V180.1M320.6 178.4V179.5M323.3 173.6V183.9M324.2 176.5V181.2M325.1 176.6V181.1M326.0 178.0V179.9M326.9 178.0V179.9M329.6 173.0V184.4M330.5 175.9V181.8M331.4 177.3V180.5M332.3 177.6V180.2M333.2 178.4V179.5M335.9 171.8V185.4M336.8 176.6V181.2M337.7 176.9V180.9M338.6 177.7V180.2M339.5 178.4V179.6M342.2 172.3V185.1M343.1 175.9V181.8M344.0 176.7V181.1M344.9 177.7V180.2M345.8 178.3V179.6M348.5 173.9V183.6M349.4 176.7V181.1M350.3 177.4V180.4M351.2 177.4V180.4M352.1 178.3V179.6M354.8 172.7V184.7M355.7 176.6V181.2M356.6 176.8V180.9M357.5 177.9V180.0M358.4 178.2V179.7M361.1 174.3V183.3M362.0 176.7V181.1M362.9 177.2V180.6M363.8 178.0V179.9M364.7 178.5V179.5M367.4 172.5V184.9M368.3 176.2V181.6M369.2 177.1V180.7M370.1 177.4V180.5M371.0 178.1V179.8M373.7 171.8V185.5M374.6 174.7V182.9M375.5 177.5V180.3M376.4 178.0V179.9M377.3 178.5V179.4M380.0 172.6V184.7M380.9 175.2V182.4M381.8 177.2V180.6M382.7 177.8V180.1M383.6 178.2V179.8M386.3 172.6V184.8M387.2 176.2V181.5M388.1 176.4V181.3M389.0 177.9V180.0M389.9 178.2V179.7M392.6 174.7V182.8M393.5 176.6V181.2M394.4 176.3V181.4M395.3 177.5V180.3M396.2 178.1V179.8M398.9 175.3V182.3M399.8 176.8V181.0M400.7 177.5V180.4M401.6 178.0V179.9M402.5 178.4V179.6M405.2 173.9V183.6M406.1 176.8V181.0M407.0 177.2V180.6M407.9 177.6V180.2M408.8 178.4V179.5M411.5 172.0V185.3M412.4 175.4V182.2M413.3 176.6V181.2M414.2 178.0V179.9M415.1 178.3V179.6M417.8 172.6V184.7M418.7 176.0V181.7M419.6 177.7V180.2M420.5 177.4V180.4M421.4 178.1V179.8M424.1 174.3V183.2M425.0 176.8V181.0M425.9 176.4V181.3M426.8 177.6V180.2M427.7 178.5V179.5M430.4 174.5V183.1M431.3 176.6V181.2M432.2 176.5V181.3M433.1 178.0V179.9M434.0 178.0V179.9M436.7 172.4V185.0M437.6 176.7V181.1M438.5 176.6V181.1M439.4 177.9V180.0M440.3 178.1V179.8M443.0 172.0V185.3M443.9 176.2V181.6M444.8 177.6V180.3M445.7 177.3V180.5M446.6 178.3V179.6M449.3 171.6V185.7M450.2 175.1V182.5M451.1 176.6V181.2M452.0 177.4V180.4M452.9 178.2V179.7M455.6 174.2V183.0M456.5 176.9V180.5M457.4 176.8V180.6M458.3 177.8V179.7M459.2 178.1V179.4M461.9 170.2V182.3M462.8 174.5V178.5M463.7 174.5V178.5M464.6 175.9V177.2M465.5 175.8V177.2M468.2 168.4V179.7M469.1 172.0V176.5M470.0 172.5V176.0M470.9 172.9V175.6M471.8 173.6V175.0M474.5 163.0V180.3M475.4 167.8V176.0M476.3 170.0V174.1M477.2 170.4V173.7M478.1 171.0V173.1M480.8 163.1V176.0M481.7 165.3V174.0M482.6 167.5V172.0M483.5 167.6V171.9M484.4 168.6V171.1M487.1 160.6V174.0M488.0 163.4V171.5M488.9 164.4V170.6M489.8 165.8V169.4M490.7 166.1V169.1M493.4 157.4V172.2M494.3 160.6V169.3M495.2 161.0V168.9M496.1 163.7V166.5M497.0 163.9V166.3M499.7 154.9V169.5M500.6 156.0V168.5M501.5 159.2V165.6M502.4 160.2V164.7M503.3 161.7V163.4M506.0 150.1V168.9M506.9 154.2V165.1M507.8 156.8V162.8M508.7 157.6V162.1M509.6 158.5V161.3M512.3 151.1V163.0M513.2 152.9V161.4M514.1 154.5V160.0M515.0 155.8V158.7M515.9 156.6V158.1M518.6 147.4V161.4M519.5 150.7V158.5M520.4 151.1V158.2M521.3 152.9V156.5M522.2 154.0V155.6M524.9 145.1V159.6M525.8 147.5V157.4M526.7 149.8V155.3M527.6 151.2V154.0M528.5 151.9V153.4M531.2 145.0V155.6M532.1 143.3V157.2M533.0 146.8V154.1M533.9 149.2V151.8M534.8 149.2V151.8M537.5 136.5V159.3M538.4 142.9V153.5M539.3 146.2V150.6M540.2 146.6V150.3M541.1 147.4V149.5M543.8 139.6V152.5M544.7 140.9V151.4M545.6 144.4V148.2M546.5 143.8V148.7M547.4 145.1V147.6M550.1 134.9V153.3M551.0 137.5V151.0M551.9 141.0V147.8M552.8 143.0V146.0M553.7 143.6V145.4M556.4 136.9V149.1M557.3 139.9V146.4M558.2 139.4V146.8M559.1 140.9V145.5M560.0 142.3V144.2M562.7 135.3V148.1M563.6 136.2V147.4M564.5 138.0V145.7M565.4 139.5V144.4M566.3 141.2V142.9M569.0 130.1V150.4M569.9 134.1V146.8M570.8 137.0V144.2M571.7 139.1V142.3M572.6 139.9V141.6M575.3 128.6V149.4M576.2 134.9V143.7M577.1 136.6V142.2M578.0 137.5V141.4M578.9 138.5V140.5M581.6 127.6V148.5M582.5 134.3V142.5M583.4 136.5V140.5M584.3 136.5V140.5M585.2 137.3V139.8M587.9 127.0V147.7M588.8 131.8V143.5M589.7 133.7V141.7M590.6 135.3V140.3M591.5 136.7V139.0M594.2 128.5V145.2M595.1 133.3V140.8M596.0 134.5V139.7M596.9 135.2V139.1M597.8 136.4V138.0M600.5 126.5V145.6M601.4 132.6V140.2M602.3 133.5V139.4M603.2 133.9V139.0M604.1 135.7V137.3M606.8 130.1V141.1M607.7 130.8V140.5M608.6 133.4V138.1M609.5 133.6V137.9M610.4 135.1V136.6M613.1 124.2V145.1M614.0 128.4V141.3M614.9 131.3V138.7M615.8 133.4V136.9M616.7 134.2V136.1M619.4 125.2V144.0M620.3 129.7V140.0M621.2 132.1V137.8M622.1 133.4V136.7M623.0 134.0V136.1M625.7 125.3V144.1M626.6 128.6V141.2M627.5 131.0V139.0M628.4 133.8V136.6M629.3 134.2V136.1M632.0 127.0V143.0M632.9 129.8V140.4M633.8 132.5V138.0M634.7 133.9V136.7M635.6 134.6V136.1M638.3 127.9V142.4M639.2 130.3V140.2M640.1 131.1V139.5M641.0 133.0V137.8M641.9 134.0V136.9M644.6 123.7V146.4M645.5 128.5V142.1M646.4 132.1V138.8M647.3 133.2V137.8M648.2 134.9V136.4M650.9 125.8V144.8M651.8 130.0V141.0M652.7 133.1V138.3M653.6 133.7V137.7M654.5 134.2V137.2M657.2 127.3V143.7M658.1 130.0V141.3M659.0 133.2V138.4M659.9 134.2V137.5M660.8 134.4V137.3M663.5 130.5V141.3M664.4 132.1V139.9M665.3 132.5V139.5M666.2 134.3V137.9M667.1 135.4V136.9M669.8 126.6V145.4M670.7 131.7V140.8M671.6 133.1V139.6M672.5 134.6V138.1M673.4 135.3V137.6M676.1 127.6V145.1M677.0 131.9V141.2M677.9 134.5V138.9M678.8 135.3V138.1M679.7 135.3V138.2M682.4 128.0V145.3M683.3 133.3V140.5M684.2 133.0V140.8M685.1 135.5V138.6M686.0 136.3V137.9M688.7 128.4V145.5M689.6 133.1V141.3M690.5 134.2V140.3M691.4 135.4V139.3M692.3 136.5V138.3M695.0 128.5V146.1M695.9 134.0V141.2M696.8 134.5V140.7M697.7 135.7V139.6M698.6 136.9V138.5M701.3 129.9V145.4M702.2 134.4V141.3M703.1 135.0V140.8M704.0 135.6V140.3M704.9 136.8V139.2M707.6 128.2V147.6M708.5 132.0V144.1M709.4 136.1V140.5M710.3 135.7V140.8M711.2 137.0V139.6M713.9 132.5V144.3M714.8 132.0V144.7M715.7 135.7V141.4M716.6 137.2V140.0M717.5 137.1V140.1M720.2 129.8V147.3M721.1 132.6V144.8M722.0 136.6V141.1M722.9 136.6V141.1M723.8 138.2V139.7M726.5 131.9V145.4M727.4 134.2V143.3M728.3 136.9V140.9M729.2 136.9V140.9M730.1 138.1V139.8M732.8 131.5V145.7M733.7 132.8V144.6M734.6 135.9V141.8M735.5 136.5V141.3M736.4 137.7V140.2M739.1 127.7V149.1M740.0 133.4V144.0M740.9 134.7V142.8M741.8 136.5V141.3M742.7 138.1V139.8M745.4 128.6V148.4M746.3 134.3V143.2M747.2 135.1V142.5M748.1 136.8V141.0M749.0 137.5V140.3M751.7 132.7V144.7M752.6 134.2V143.3M753.5 135.2V142.4M754.4 136.4V141.4M755.3 137.6V140.3M758.0 133.2V144.2M758.9 133.2V144.2M759.8 136.7V141.0M760.7 137.0V140.8M761.6 137.5V140.3M764.3 132.8V144.6M765.2 132.0V145.3M766.1 135.3V142.3M767.0 137.4V140.4M767.9 138.1V139.8M770.6 130.6V146.6M771.5 132.3V145.0M772.4 135.6V142.1M773.3 137.6V140.3M774.2 138.2V139.7M776.9 132.8V144.6M777.8 132.5V144.9M778.7 136.5V141.2M779.6 137.0V140.8M780.5 138.0V139.9M783.2 129.0V148.0M784.1 134.1V143.4M785.0 136.6V141.1M785.9 136.5V141.3M786.8 137.8V140.1M789.5 128.9V148.0M790.4 132.4V144.9M791.3 134.7V142.9M792.2 137.8V140.1M793.1 137.9V139.9M795.8 132.5V144.8M796.7 133.7V143.8M797.6 134.9V142.7M798.5 136.6V141.2M799.4 138.2V139.7M802.1 132.3V145.0M803.0 132.4V145.0M803.9 135.3V142.3M804.8 137.2V140.6M805.7 137.8V140.1M808.4 132.5V144.9M809.3 132.3V145.0M810.2 136.0V141.7M811.1 136.5V141.3M812.0 137.7V140.2M814.7 133.0V144.4M815.6 134.3V143.2M816.5 136.5V141.3M817.4 136.5V141.3M818.3 137.7V140.1M821.0 133.2V144.2M821.9 135.0V142.6M822.8 136.1V141.6M823.7 137.1V140.7M824.6 137.7V140.1M827.3 130.9V146.3M828.2 134.2V143.3M829.1 137.0V140.8M830.0 136.9V140.9M830.9 138.0V139.9M833.6 133.4V144.1M834.5 133.8V143.7M835.4 134.6V143.0M836.3 137.7V140.2M837.2 138.1V139.8M839.9 129.1V147.9M840.8 134.6V143.0M841.7 136.3V141.4M842.6 137.0V140.8M843.5 138.0V139.9M846.2 129.7V147.3M847.1 133.5V143.9M848.0 134.7V142.9M848.9 136.3V141.4M849.8 138.2V139.7M852.5 129.8V147.3M853.4 132.6V144.8M854.3 134.9V142.7M855.2 136.6V141.1M856.1 137.7V140.2M858.8 129.3V147.7M859.7 134.2V143.3M860.6 136.3V141.4M861.5 136.6V141.2M862.4 137.5V140.4M865.1 127.3V149.5M866.0 132.9V144.5M866.9 136.2V141.5M867.8 136.6V141.1M868.7 137.6V140.3M871.4 130.1V147.0M872.3 133.1V144.3M873.2 136.1V141.6M874.1 137.0V140.8M875.0 137.9V140.0M877.7 133.1V144.3M878.6 134.3V143.2M879.5 136.2V141.5M880.4 136.3V141.4M881.3 137.8V140.1M884.0 131.1V146.1M884.9 134.7V142.9M885.8 136.4V141.3M886.7 137.3V140.6M887.6 138.1V139.8M890.3 133.5V144.0M891.2 132.2V145.1M892.1 135.9V141.8M893.0 137.1V140.7M893.9 137.7V140.1M896.6 131.5V145.7M897.5 135.0V142.6M898.4 136.8V141.0M899.3 137.3V140.5M900.2 138.0V139.9M902.9 128.7V148.3M903.8 133.5V144.0M904.7 134.7V142.9M905.6 137.3V140.6M906.5 137.4V140.4M909.2 129.6V147.4M910.1 135.3V142.3M911.0 136.5V141.2M911.9 136.9V140.9M912.8 137.4V140.5M915.5 131.1V146.1M916.4 132.6V144.8M917.3 135.9V141.8M918.2 136.5V141.3M919.1 138.2V139.7M921.8 130.3V146.8M922.7 132.1V145.2M923.6 136.3V141.4M924.5 137.4V140.4M925.4 138.2V139.7M928.1 132.4V144.9M929.0 134.6V143.0M929.9 135.3V142.4M930.8 137.5V140.4M931.7 137.9V140.0M934.4 132.2V145.1M935.3 133.3V144.2M936.2 134.9V142.7M937.1 136.8V141.0M938.0 138.1V139.8M940.7 128.7V148.3M941.6 131.8V145.5M942.5 135.5V142.1M943.4 137.7V140.2M944.3 137.5V140.3M947.0 127.7V149.2M947.9 134.3V143.2M948.8 136.6V141.1M949.7 137.5V140.4M950.6 137.8V140.1M953.3 127.7V149.2M954.2 133.1V144.3M955.1 134.7V142.8M956.0 137.5V140.4M956.9 138.0V139.9M959.6 128.6V148.4M960.5 133.1V144.3M961.4 136.0V141.7M962.3 136.8V141.0M963.2 138.0V139.9M965.9 133.1V144.3M966.8 134.0V143.5M967.7 136.9V140.9M968.6 136.9V140.9M969.5 138.0V139.9M972.2 130.2V146.9M973.1 133.3V144.2M974.0 136.4V141.4M974.9 137.1V140.7M975.8 138.2V139.7M978.5 127.4V149.4M979.4 133.4V144.0M980.3 134.6V143.0M981.2 137.7V140.2M982.1 137.7V140.2M984.8 128.7V148.3M985.7 134.3V143.2M986.6 136.7V141.0M987.5 137.5V140.3M988.4 138.1V139.8M991.1 128.4V148.5M992.0 135.3V142.3M992.9 135.0V142.6M993.8 137.1V140.7M994.7 137.8V140.1M997.4 129.6V147.4M998.3 133.4V144.0M999.2 135.4V142.3M1000.1 136.9V140.9M1001.0 138.0V139.9M1003.7 128.6V148.4M1004.6 134.6V142.9M1005.5 135.2V142.4M1006.4 136.6V141.1M1007.3 137.6V140.3M1010.0 131.5V145.8M1010.9 132.6V144.8M1011.8 134.6V143.0M1012.7 137.1V140.7M1013.6 138.0V139.9M1016.3 130.0V147.1M1017.2 131.9V145.4M1018.1 136.7V141.1M1019.0 137.8V140.1M1019.9 137.8V140.1M1022.6 129.2V147.8M1023.5 132.6V144.8M1024.4 136.1V141.6M1025.3 136.3V141.4M1026.2 138.1V139.9M1028.9 128.5V148.4M1029.8 135.3V142.3M1030.7 136.9V140.9M1031.6 137.6V140.3M1032.5 138.2V139.7M1035.2 130.2V146.9M1036.1 133.4V144.0M1037.0 136.5V141.2M1037.9 136.4V141.4M1038.8 137.9V140.0M1041.5 132.5V144.8M1042.4 135.0V142.6M1043.3 135.2V142.4M1044.2 136.4V141.3M1045.1 138.1V139.8M1047.8 133.3V144.1M1048.7 132.5V144.8M1049.6 136.4V141.4M1050.5 136.3V141.4M1051.4 137.8V140.1M1054.1 129.3V147.7M1055.0 134.3V143.2M1055.9 135.0V142.6M1056.8 137.1V140.7M1057.7 138.0V139.9M1060.4 127.5V149.3M1061.3 135.2V142.4M1062.2 135.2V142.4M1063.1 137.7V140.2M1064.0 137.7V140.2M1066.7 130.8V146.3M1067.6 132.2V145.1M1068.5 136.8V141.0M1069.4 136.9V140.9M1070.3 137.9V140.0M1073.0 127.4V149.4M1073.9 131.9V145.4M1074.8 135.5V142.2M1075.7 137.4V140.4M1076.6 138.0V139.9M1079.3 131.8V145.5M1080.2 133.9V143.6M1081.1 136.4V141.3M1082.0 137.5V140.4M1082.9 137.6V140.3M1085.6 129.3V147.8M1086.5 134.5V143.1M1087.4 134.6V143.0M1088.3 137.5V140.4M1089.2 137.7V140.1M1091.9 132.5V144.9M1092.8 132.2V145.1M1093.7 134.9V142.7M1094.6 137.4V140.5M1095.5 137.6V140.3M1098.2 128.1V148.8M1099.1 134.5V143.0M1100.0 136.2V141.5M1100.9 137.1V140.7M1101.8 137.5V140.4M1104.5 132.4V144.9M1105.4 132.9V144.5M1106.3 135.5V142.1M1107.2 137.1V140.7M1108.1 137.7V140.1M1110.8 127.7V149.2M1111.7 134.8V142.8M1112.6 134.8V142.8M1113.5 137.2V140.6M1114.4 137.6V140.3M1117.1 127.8V149.1M1118.0 134.9V142.7M1118.9 134.9V142.7M1119.8 136.3V141.4M1120.7 138.0V139.9M1123.4 133.3V144.1M1124.3 135.2V142.4M1125.2 134.6V143.0M1126.1 137.8V140.1M1127.0 137.4V140.4M1129.7 132.5V144.8M1130.6 132.7V144.7M1131.5 136.7V141.0M1132.4 137.5V140.3M1133.3 137.6V140.2M1136.0 132.9V144.5M1136.9 134.3V143.2M1137.8 134.7V142.8M1138.7 136.7V141.1M1139.6 137.5V140.4M1142.3 127.0V149.8M1143.2 135.5V142.1M1144.1 136.4V141.3M1145.0 136.6V141.2M1145.9 137.6V140.2M1148.6 133.3V144.2M1149.5 133.6V143.8M1150.4 136.4V141.3M1151.3 137.1V140.7M1152.2 138.2V139.8M1154.9 133.4V144.1M1155.8 131.7V145.6M1156.7 136.2V141.5M1157.6 136.5V141.3M1158.5 138.1V139.8M1161.2 130.3V146.8M1162.1 135.1V142.5M1163.0 135.9V141.8M1163.9 137.5V140.3M1164.8 137.6V140.2M1167.5 132.5V144.8M1168.4 132.7V144.7M1169.3 135.8V141.9M1170.2 137.6V140.3M1171.1 137.9V140.0M1173.8 130.2V146.9M1174.7 132.0V145.3M1175.6 136.1V141.6M1176.5 137.5V140.4M1177.4 137.4V140.4M1180.1 127.7V149.2M1181.0 132.7V144.6M1181.9 136.3V141.4M1182.8 137.5V140.3M1183.7 138.0V139.9M1186.4 133.0V144.4M1187.3 135.5V142.2M1188.2 135.7V141.9M1189.1 137.2V140.6M1190.0 137.8V140.1M1192.7 131.1V146.1M1193.6 135.6V142.0M1194.5 135.3V142.3M1195.4 136.8V141.0M1196.3 137.8V140.1M1199.0 129.9V147.2M1199.9 132.9V144.5M1200.8 134.6V143.0M1201.7 136.5V141.3M1202.6 137.6V140.2M1205.3 130.9V146.3M1206.2 134.4V143.1M1207.1 136.0V141.7M1208.0 136.3V141.4M1208.9 137.9V140.0M1211.6 131.0V146.2M1212.5 134.0V143.5M1213.4 136.6V141.1M1214.3 136.3V141.4M1215.2 138.3V139.7M1217.9 129.5V147.6M1218.8 132.0V145.3M1219.7 136.4V141.4M1220.6 136.9V140.9M1221.5 137.9V140.0M1224.2 131.9V145.4M1225.1 134.9V142.7M1226.0 136.7V141.1M1226.9 136.5V141.2M1227.8 137.6V140.3M1230.5 127.5V149.3M1231.4 135.5V142.2M1232.3 135.3V142.3M1233.2 137.3V140.5M1234.1 137.7V140.2M1236.8 129.9V147.2M1237.7 134.4V143.1M1238.6 134.6V142.9M1239.5 137.8V140.1M1240.4 137.6V140.3M1243.1 127.9V149.0M1244.0 133.6V143.8M1244.9 135.5V142.1M1245.8 136.3V141.4M1246.7 138.0V139.9M1249.4 129.3V147.7M1250.3 132.7V144.7M1251.2 136.1V141.6M1252.1 136.7V141.0M1253.0 137.9V140.0M1255.7 130.0V147.1M1256.6 133.2V144.2M1257.5 135.3V142.3M1258.4 137.3V140.5M1259.3 137.7V140.2M1262.0 129.9V147.2M1262.9 134.8V142.8M1263.8 135.5V142.2M1264.7 137.4V140.5M1265.6 137.4V140.4M1268.3 130.4V146.8M1269.2 132.8V144.6M1270.1 135.7V142.0M1271.0 137.1V140.7M1271.9 138.1V139.8M1274.6 132.6V144.8M1275.5 132.0V145.3M1276.4 135.7V142.0M1277.3 137.0V140.8M1278.2 137.8V140.1M1280.9 128.1V148.8M1281.8 134.7V142.9M1282.7 136.6V141.2M1283.6 136.6V141.2M1284.5 137.8V140.0M1287.2 129.3V147.8M1288.1 132.4V145.0M1289.0 134.8V142.8M1289.9 136.5V141.3M1290.8 138.2V139.7M1293.5 131.0V146.2M1294.4 132.3V145.0M1295.3 135.0V142.6M1296.2 137.6V140.3M1297.1 138.1V139.8M1299.8 131.8V145.4M1300.7 135.3V142.4M1301.6 136.1V141.6M1302.5 136.6V141.2M1303.4 137.8V140.1M1306.1 130.3V146.4M1307.0 135.1V142.1M1307.9 135.8V141.4M1308.8 136.0V141.2M1309.7 137.4V140.0M1312.4 129.9V146.0M1313.3 133.1V143.1M1314.2 134.4V141.9M1315.1 136.0V140.5M1316.0 137.5V139.1M1318.7 128.5V147.5M1319.6 133.7V142.8M1320.5 135.2V141.5M1321.4 136.9V139.9M1322.3 137.4V139.5M1325.0 135.0V149.7M1325.9 137.8V147.1M1326.8 140.6V144.6M1327.7 141.2V144.1M1328.6 141.4V143.8M1331.3 143.2V149.3M1332.2 144.2V148.4M1333.1 144.4V148.3M1334.0 145.5V147.2M1334.9 145.8V146.9M1337.6 145.8V153.2M1338.5 146.0V153.0M1339.4 148.5V150.8M1340.3 148.5V150.7M1341.2 148.9V150.4M1343.9 148.8V155.9M1344.8 149.8V155.0M1345.7 150.4V154.5M1346.6 151.4V153.6M1347.5 152.0V153.1M1350.2 151.9V157.9M1351.1 152.3V157.6M1352.0 153.5V156.5M1352.9 153.9V156.2M1353.8 154.5V155.6M1356.5 152.9V161.4M1357.4 154.1V160.2M1358.3 155.2V159.3M1359.2 156.4V158.2M1360.1 156.7V157.9M1362.8 154.2V163.9M1363.7 155.5V162.8M1364.6 157.9V160.5M1365.5 157.9V160.6M1366.4 158.6V160.0M1369.1 156.7V165.0M1370.0 157.8V164.0M1370.9 159.5V162.4M1371.8 160.3V161.7M1372.7 160.3V161.7M1375.4 158.2V166.5M1376.3 159.6V165.2M1377.2 160.8V164.2M1378.1 161.2V163.8M1379.0 161.8V163.3M1381.7 160.8V166.7M1382.6 160.8V166.7M1383.5 162.2V165.5M1384.4 162.9V164.9M1385.3 163.1V164.7M1388.0 160.6V169.2M1388.9 162.3V167.7M1389.8 162.8V167.2M1390.7 164.1V166.0M1391.6 164.5V165.7M1394.3 161.3V170.5M1395.2 162.6V169.4M1396.1 164.2V168.0M1397.0 164.9V167.3M1397.9 165.6V166.7M1400.6 164.0V169.9M1401.5 163.8V170.1M1402.4 165.3V168.8M1403.3 165.8V168.3M1404.2 166.3V167.8M1406.9 164.5V171.0M1407.8 165.6V170.0M1408.7 166.7V169.0M1409.6 166.6V169.1M1410.5 167.5V168.3M1413.2 165.3V171.6M1414.1 165.2V171.8M1415.0 166.8V170.3M1415.9 167.9V169.3M1416.8 167.9V169.3M1419.5 163.7V174.3M1420.4 166.4V171.9M1421.3 168.1V170.3M1422.2 168.0V170.4M1423.1 168.7V169.8M1425.8 164.7V174.4M1426.7 165.8V173.4M1427.6 167.6V171.8M1428.5 168.5V171.1M1429.4 169.4V170.3M1432.1 166.1V174.1M1433.0 167.4V173.0M1433.9 169.2V171.3M1434.8 168.9V171.6M1435.7 169.8V170.8M1438.4 166.8V174.3M1439.3 168.3V173.0M1440.2 169.3V172.1M1441.1 169.4V172.0M1442.0 170.1V171.4M1444.7 166.3V175.5M1445.6 168.4V173.6M1446.5 170.0V172.2M1447.4 170.2V172.0M1448.3 170.3V171.9M1451.0 165.6V176.8M1451.9 167.8V174.8M1452.8 170.0V172.8M1453.7 170.7V172.2M1454.6 171.1V171.9M1457.3 166.8V176.2M1458.2 169.1V174.2M1459.1 170.1V173.3M1460.0 170.7V172.7M1460.9 171.1V172.4M1463.6 167.7V175.9M1464.5 168.5V175.3M1465.4 170.7V173.3M1466.3 170.6V173.3M1467.2 171.4V172.7M1469.9 169.1V175.1M1470.8 169.8V174.5M1471.7 170.5V173.9M1472.6 171.3V173.2M1473.5 171.6V172.9M1476.2 168.3V176.2M1477.1 170.1V174.7M1478.0 170.3V174.4M1478.9 171.6V173.3M1479.8 171.7V173.2M1482.5 166.8V178.0M1483.4 169.5V175.5M1484.3 171.0V174.2M1485.2 171.2V173.9M1486.1 172.0V173.2M1488.8 166.7V178.4M1489.7 170.9V174.6M1490.6 171.1V174.3M1491.5 171.6V173.9M1492.4 172.4V173.2M1495.1 166.9V178.5M1496.0 171.0V174.7M1496.9 171.1V174.7M1497.8 172.1V173.7M1498.7 172.1V173.7M1501.4 168.1V177.6M1502.3 169.5V176.3M1503.2 171.3V174.7M1504.1 171.9V174.2M1505.0 172.3V173.7M1507.7 169.1V176.8M1508.6 170.9V175.2M1509.5 171.0V175.2M1510.4 172.4V173.9M1511.3 172.3V174.0M1514.0 169.5V176.7M1514.9 171.2V175.1M1515.8 172.1V174.4M1516.7 172.0V174.5M1517.6 172.4V174.1M1520.3 168.9V177.4M1521.2 170.1V176.3M1522.1 171.9V174.7M1523.0 172.0V174.6M1523.9 172.6V174.0M1526.6 169.9V176.6M1527.5 171.5V175.2M1528.4 171.4V175.3M1529.3 172.7V174.1M1530.2 172.6V174.2M1532.9 169.5V177.2M1533.8 171.2V175.6M1534.7 171.6V175.2M1535.6 172.6V174.3M1536.5 172.8V174.1M1539.2 170.0V176.8M1540.1 169.8V177.0M1541.0 172.0V174.9M1541.9 172.2V174.8M1542.8 173.1V174.0M1545.5 167.7V178.9M1546.4 169.7V177.2M1547.3 172.0V175.1M1548.2 172.9V174.2M1549.1 173.0V174.2M1551.8 168.4V178.4M1552.7 171.4V175.7M1553.6 171.8V175.3M1554.5 172.9V174.3M1555.4 173.0V174.2M1558.1 168.1V178.8M1559.0 170.9V176.2M1559.9 171.7V175.5M1560.8 172.9V174.4M1561.7 172.9V174.4M1564.4 170.3V176.8M1565.3 169.9V177.2M1566.2 171.3V175.9M1567.1 172.3V175.0M1568.0 173.1V174.3M1570.7 169.7V177.4M1571.6 171.2V176.1M1572.5 171.7V175.7M1573.4 172.7V174.7M1574.3 172.9V174.5M1577.0 170.5V176.8M1577.9 170.9V176.4M1578.8 171.5V175.8M1579.7 172.6V174.8M1580.6 173.1V174.4M1583.3 170.5V176.8M1584.2 171.7V175.7M1585.1 172.4V175.1M1586.0 172.4V175.1M1586.9 173.0V174.6M1589.6 170.0V177.3M1590.5 170.0V177.3M1591.4 172.7V174.9M1592.3 172.7V174.9M1593.2 173.0V174.6M1595.9 169.6V177.7M1596.8 170.0V177.4M1597.7 171.9V175.6M1598.6 173.2V174.5M1599.5 173.3V174.4M1602.2 169.3V178.0M1603.1 171.5V176.0M1604.0 171.8V175.8M1604.9 173.1V174.6M1605.8 173.1V174.6M1608.5 169.8V177.6M1609.4 171.9V175.7M1610.3 172.0V175.6M1611.2 173.1V174.6M1612.1 173.2V174.5M1614.8 168.1V179.2M1615.7 170.8V176.7M1616.6 172.2V175.4M1617.5 173.2V174.5M1618.4 173.2V174.5M1621.1 170.6V176.9M1622.0 170.7V176.8M1622.9 172.6V175.1M1623.8 172.8V174.9M1624.7 173.3V174.4M1627.4 169.6V177.8M1628.3 170.7V176.9M1629.2 172.6V175.1M1630.1 173.1V174.7M1631.0 173.1V174.7M1633.7 169.7V177.7M1634.6 170.3V177.2M1635.5 171.7V176.0M1636.4 172.9V174.9M1637.3 173.5V174.4M1640.0 170.6V176.9M1640.9 170.2V177.3M1641.8 172.7V175.1M1642.7 172.9V174.9M1643.6 173.3V174.5M1646.3 170.5V177.0M1647.2 171.1V176.5M1648.1 172.6V175.1M1649.0 172.8V174.9M1649.9 173.3V174.5M1652.6 169.6V177.8M1653.5 171.7V176.0M1654.4 172.3V175.4M1655.3 173.1V174.7M1656.2 173.5V174.4M1658.9 170.1V177.4M1659.8 170.2V177.3M1660.7 172.2V175.6M1661.6 172.6V175.2M1662.5 173.5V174.3M1665.2 167.6V179.7M1666.1 171.1V176.6M1667.0 171.8V175.9M1667.9 172.8V175.0M1668.8 173.2V174.6M1671.5 170.1V177.4M1672.4 170.5V177.1M1673.3 172.7V175.1M1674.2 173.1V174.8M1675.1 173.5V174.3M1677.8 169.6V177.9M1678.7 171.0V176.6M1679.6 172.5V175.3M1680.5 172.6V175.2M1681.4 173.5V174.4M1684.1 168.9V178.6M1685.0 171.6V176.1M1685.9 172.1V175.7M1686.8 172.7V175.1M1687.7 173.2V174.7M1690.4 170.8V176.9M1691.3 171.6V176.1M1692.2 172.1V175.7M1693.1 172.5V175.3M1694.0 173.6V174.4M1696.7 168.8V178.7M1697.6 170.7V177.0M1698.5 171.8V175.9M1699.4 173.0V174.8M1700.3 173.2V174.7M1703.0 169.3V178.2M1703.9 170.2V177.4M1704.8 172.9V175.0M1705.7 172.6V175.3M1706.6 173.4V174.5M1709.3 169.5V178.0M1710.2 172.0V175.8M1711.1 172.6V175.3M1712.0 172.7V175.1M1712.9 173.2V174.6" stroke="#a0cc50" stroke-width="1" fill="none" opacity="0.6"/><path d="M455.5 179V117.5" stroke="#3cc8d8" stroke-width="1" fill="none"/><path d="M455 117.5L455.5 114L456.2 119L457.0 117.5L461.6 117.5L461.8 114L462.5 119L463.3 117.5L467.9 117.5L468.1 114L468.8 119L469.6 117.5L474.2 117.5L474.4 114L475.1 119L475.9 117.5L480.5 117.5L480.7 114L481.4 119L482.2 117.5L486.8 117.5L487.0 114L487.7 119L488.5 117.5L493.1 117.5L493.3 114L494.0 119L494.8 117.5L499.4 117.5L499.6 114L500.3 119L501.1 117.5L505.7 117.5L505.9 114L506.6 119L507.4 117.5L512.0 117.5L512.2 114L512.9 119L513.7 117.5L518.3 117.5L518.5 114L519.2 119L520.0 117.5L524.6 117.5L524.8 114L525.5 119L526.3 117.5L530.9 117.5L531.1 114L531.8 119L532.6 117.5L537.1 117.5L537.4 114L538.1 119L538.9 117.5L543.4 117.5L543.7 114L544.4 119L545.2 117.5L549.7 117.5L550.0 114L550.7 119L551.5 117.5L556.0 117.5L556.3 114L557.0 119L557.8 117.5L562.3 117.5L562.6 114L563.3 119L564.1 117.5L568.6 117.5L568.9 114L569.6 119L570.4 117.5L574.9 117.5L575.2 114L575.9 119L576.7 117.5L581.2 117.5L581.5 114L582.2 119L583.0 117.5L587.5 117.5L587.8 114L588.5 119L589.3 117.5L593.8 117.5L594.1 114L594.8 119L595.6 117.5L600.1 117.5L600.4 114L601.1 119L601.9 117.5L606.4 117.5L606.7 114L607.4 119L608.2 117.5L612.7 117.5L613.0 114L613.7 119L614.5 117.5L619.0 117.5L619.3 114L620.0 119L620.8 117.5L625.3 117.5L625.6 114L626.3 119L627.1 117.5L631.6 117.5L631.9 114L632.6 119L633.4 117.5L637.9 117.5L638.2 114L638.9 119L639.7 117.5L644.2 117.5L644.5 114L645.2 119L646.0 117.5L650.5 117.5L650.8 114L651.5 119L652.3 117.5L656.8 117.5L657.1 114L657.8 119L658.6 117.5L663.1 117.5L663.4 114L664.1 119L664.9 117.5L669.4 117.5L669.7 114L670.4 119L671.2 117.5L675.7 117.5L676.0 114L676.7 119L677.5 117.5L682.0 117.5L682.3 114L683.0 119L683.8 117.5L688.3 117.5L688.6 114L689.3 119L690.1 117.5L694.6 117.5L694.9 114L695.6 119L696.4 117.5L700.9 117.5L701.2 114L701.9 119L702.7 117.5L707.2 117.5L707.5 114L708.2 119L709.0 117.5L713.5 117.5L713.8 114L714.5 119L715.3 117.5L719.8 117.5L720.1 114L720.8 119L721.6 117.5L726.1 117.5L726.4 114L727.1 119L727.9 117.5L732.4 117.5L732.7 114L733.4 119L734.2 117.5L738.7 117.5L739.0 114L739.7 119L740.5 117.5L745.0 117.5L745.3 114L746.0 119L746.8 117.5L751.3 117.5L751.6 114L752.3 119L753.1 117.5L757.6 117.5L757.9 114L758.6 119L759.4 117.5L763.9 117.5L764.2 114L764.9 119L765.7 117.5L770.2 117.5L770.5 114L771.2 119L772.0 117.5L776.5 117.5L776.8 114L777.5 119L778.3 117.5L782.8 117.5L783.1 114L783.8 119L784.6 117.5L789.1 117.5L789.4 114L790.1 119L790.9 117.5L795.4 117.5L795.7 114L796.4 119L797.2 117.5L801.7 117.5L802.0 114L802.7 119L803.5 117.5L808.0 117.5L808.3 114L809.0 119L809.8 117.5L814.3 117.5L814.6 114L815.3 119L816.1 117.5L820.6 117.5L820.9 114L821.6 119L822.4 117.5L826.9 117.5L827.2 114L827.9 119L828.7 117.5L833.2 117.5L833.5 114L834.2 119L835.0 117.5L839.5 117.5L839.8 114L840.5 119L841.3 117.5L845.8 117.5L846.1 114L846.8 119L847.6 117.5L852.1 117.5L852.4 114L853.1 119L853.9 117.5L858.4 117.5L858.7 114L859.4 119L860.2 117.5L864.7 117.5L865.0 114L865.7 119L866.5 117.5L871.0 117.5L871.3 114L872.0 119L872.8 117.5L877.3 117.5L877.6 114L878.3 119L879.1 117.5L883.6 117.5L883.9 114L884.6 119L885.4 117.5L889.9 117.5L890.2 114L890.9 119L891.7 117.5L896.2 117.5L896.5 114L897.2 119L898.0 117.5L902.5 117.5L902.8 114L903.5 119L904.3 117.5L908.8 117.5L909.1 114L909.8 119L910.6 117.5L915.1 117.5L915.4 114L916.1 119L916.9 117.5L921.4 117.5L921.7 114L922.4 119L923.2 117.5L927.7 117.5L928.0 114L928.7 119L929.5 117.5L934.0 117.5L934.3 114L935.0 119L935.8 117.5L940.3 117.5L940.6 114L941.3 119L942.1 117.5L946.6 117.5L946.9 114L947.6 119L948.4 117.5L952.9 117.5L953.2 114L953.9 119L954.7 117.5L959.2 117.5L959.5 114L960.2 119L961.0 117.5L965.5 117.5L965.8 114L966.5 119L967.3 117.5L971.8 117.5L972.1 114L972.8 119L973.6 117.5L978.1 117.5L978.4 114L979.1 119L979.9 117.5L984.4 117.5L984.7 114L985.4 119L986.2 117.5L990.7 117.5L991.0 114L991.7 119L992.5 117.5L997.0 117.5L997.3 114L998.0 119L998.8 117.5L1003.3 117.5L1003.6 114L1004.3 119L1005.1 117.5L1009.6 117.5L1009.9 114L1010.6 119L1011.4 117.5L1015.9 117.5L1016.2 114L1016.9 119L1017.7 117.5L1022.2 117.5L1022.5 114L1023.2 119L1024.0 117.5L1028.5 117.5L1028.8 114L1029.5 119L1030.3 117.5L1034.8 117.5L1035.1 114L1035.8 119L1036.6 117.5L1041.1 117.5L1041.4 114L1042.1 119L1042.9 117.5L1047.4 117.5L1047.7 114L1048.4 119L1049.2 117.5L1053.7 117.5L1054.0 114L1054.7 119L1055.5 117.5L1060.0 117.5L1060.3 114L1061.0 119L1061.8 117.5L1066.3 117.5L1066.6 114L1067.3 119L1068.1 117.5L1072.6 117.5L1072.9 114L1073.6 119L1074.4 117.5L1078.9 117.5L1079.2 114L1079.9 119L1080.7 117.5L1085.2 117.5L1085.5 114L1086.2 119L1087.0 117.5L1091.5 117.5L1091.8 114L1092.5 119L1093.3 117.5L1097.8 117.5L1098.1 114L1098.8 119L1099.6 117.5L1104.1 117.5L1104.4 114L1105.1 119L1105.9 117.5L1110.4 117.5L1110.7 114L1111.4 119L1112.2 117.5L1116.7 117.5L1117.0 114L1117.7 119L1118.5 117.5L1123.0 117.5L1123.3 114L1124.0 119L1124.8 117.5L1129.3 117.5L1129.6 114L1130.3 119L1131.1 117.5L1135.6 117.5L1135.9 114L1136.6 119L1137.4 117.5L1141.9 117.5L1142.2 114L1142.9 119L1143.7 117.5L1148.2 117.5L1148.5 114L1149.2 119L1150.0 117.5L1154.5 117.5L1154.8 114L1155.5 119L1156.3 117.5L1160.8 117.5L1161.1 114L1161.8 119L1162.6 117.5L1167.1 117.5L1167.4 114L1168.1 119L1168.9 117.5L1173.4 117.5L1173.7 114L1174.4 119L1175.2 117.5L1179.7 117.5L1180.0 114L1180.7 119L1181.5 117.5L1186.0 117.5L1186.3 114L1187.0 119L1187.8 117.5L1192.3 117.5L1192.6 114L1193.3 119L1194.1 117.5L1198.6 117.5L1198.9 114L1199.6 119L1200.4 117.5L1204.9 117.5L1205.2 114L1205.9 119L1206.7 117.5L1211.2 117.5L1211.5 114L1212.2 119L1213.0 117.5L1217.5 117.5L1217.8 114L1218.5 119L1219.3 117.5L1223.8 117.5L1224.1 114L1224.8 119L1225.6 117.5L1230.1 117.5L1230.4 114L1231.1 119L1231.9 117.5L1236.4 117.5L1236.7 114L1237.4 119L1238.2 117.5L1242.7 117.5L1243.0 114L1243.7 119L1244.5 117.5L1249.0 117.5L1249.3 114L1250.0 119L1250.8 117.5L1255.3 117.5L1255.6 114L1256.3 119L1257.1 117.5L1261.6 117.5L1261.9 114L1262.6 119L1263.4 117.5L1267.9 117.5L1268.2 114L1268.9 119L1269.7 117.5L1274.2 117.5L1274.5 114L1275.2 119L1276.0 117.5L1280.5 117.5L1280.8 114L1281.5 119L1282.3 117.5L1286.8 117.5L1287.1 114L1287.8 119L1288.6 117.5L1293.1 117.5L1293.4 114L1294.1 119L1294.9 117.5L1299.4 117.5L1299.7 114L1300.4 119L1301.2 117.5L1305.7 117.5L1304 117.5V180L1306 179.4L1308 179.8L1310 179.4L1312 179.5L1314 179.6L1316 179.7L1318 180.8L1320 180.8L1322 180.5L1324 180.0L1326 180.0L1328 180.4L1330 180.7L1332 180.4L1334 180.2L1336 179.5L1338 180.2L1340 180.6L1342 180.5L1344 179.3L1346 180.3L1348 179.8L1350 179.5L1352 180.7L1354 180.3L1356 180.4L1358 179.4L1360 180.5L1362 180.7L1364 180.6L1366 180.4L1368 180.5L1370 180.5L1372 180.1L1374 179.9L1376 180.5L1378 180.5L1380 180.6L1382 179.7L1384 180.7L1386 180.1L1388 180.7L1390 179.4L1392 180.7L1394 180.5L1396 179.6L1398 180.5L1400 179.6L1402 179.5L1404 179.9L1406 179.6L1408 180.0L1410 180.7L1412 180.3L1414 180.3L1416 179.8L1418 180.5L1420 180.5L1422 180.3L1424 180.7L1426 180.5L1428 179.8L1430 179.3L1432 180.2L1434 180.5L1436 179.7L1438 180.2L1440 180.5L1442 180.5L1444 179.2L1446 180.0L1448 179.2L1450 179.4L1452 180.5L1454 179.9L1456 180.2L1458 179.9L1460 179.7L1462 179.5L1464 179.8L1466 180.6L1468 180.2L1470 179.7L1472 179.3L1474 179.6L1476 180.3L1478 179.9L1480 180.3L1482 180.5L1484 179.4L1486 180.3L1488 179.3L1490 180.5L1492 179.5L1494 179.6L1496 180.7L1498 179.8L1500 179.6L1502 180.6L1504 180.2L1506 180.6L1508 179.8L1510 180.0L1512 180.7L1514 180.0L1516 180.8L1518 179.5L1520 180.5L1522 179.5L1524 180.0L1526 179.2L1528 179.5L1530 180.7L1532 179.9L1534 180.5L1536 179.6L1538 179.8L1540 179.4L1542 180.1L1544 180.6L1546 180.0L1548 179.8L1550 180.7L1552 180.6L1554 180.3L1556 179.3L1558 180.2L1560 179.9L1562 180.7L1564 179.8L1566 180.3L1568 180.2L1570 179.8L1572 180.0L1574 180.3L1576 180.7L1578 180.0L1580 179.8L1582 180.8L1584 179.3L1586 180.5L1588 180.3L1590 180.1L1592 179.9L1594 180.4L1596 180.6L1598 180.4L1600 180.4L1602 179.3L1604 179.7L1606 179.4L1608 180.7L1610 180.6L1612 179.4L1614 180.1L1616 180.1L1618 179.3L1620 179.8L1622 180.4L1624 180.2L1626 179.6L1628 180.4L1630 179.7L1632 180.1L1634 179.9L1636 180.8L1638 180.2L1640 180.5L1642 180.3L1644 179.8L1646 180.7L1648 180.3L1650 180.3L1652 179.6L1654 179.5L1656 180.1L1658 180.5L1660 180.5L1662 179.8L1664 179.4L1666 180.0L1668 180.6L1670 179.5L1672 180.4L1674 179.5L1676 179.7L1678 179.3L1680 179.7L1682 179.8L1684 180.7L1686 180.7L1688 179.5L1690 179.7L1692 180.7L1694 179.5L1696 179.7L1698 179.9L1700 179.4L1702 179.6L1704 179.8L1706 179.8L1708 180.7L1710 179.6" stroke="#3cc8d8" stroke-width="1.6" fill="none"/><path d="M14 143.5L14 143.3L15 143.8L16 143.5L17 143.8L18 143.6L19 143.7L20 143.4L21 143.2L22 143.7L23 143.5L24 143.5L25 143.6L26 143.7L27 143.3L28 143.4L29 143.8L30 143.5L31 143.3L32 143.6L33 143.3L34 143.7L35 143.1L36 143.8L37 143.6L38 143.4L39 143.9L40 143.3L41 143.3L42 143.2L43 143.5L44 143.7L45 143.6L46 143.4L47 143.7L48 143.2L49 143.3L50 143.6L51 143.9L52 143.6L53 143.7L54 143.7L55 143.4L56 143.9L57 143.7L58 143.4L59 143.4L60 143.7L61 143.4L62 143.2L63 143.8L64 143.5L65 143.5L66 143.6L67 143.8L68 143.2L69 143.4L70 143.2L71 143.4L72 143.5L73 143.8L74 143.6L75 143.6L76 143.4L77 143.6L78 143.3L79 143.8L80 143.7L81 143.8L82 143.2L83 143.6L84 143.7L85 143.5L86 143.8L87 143.8L88 143.7L89 143.8L90 143.6L91 143.8L92 143.2L93 143.7L94 143.7L95 143.6L96 143.3L97 143.2L98 143.6L99 143.8L100 143.3L101 143.3L102 143.3L103 143.2L104 143.6L105 143.9L106 143.7L107 143.4L108 143.7L109 143.2L110 143.8L111 143.4L112 143.1L113 143.6L114 143.2L115 143.3L116 143.1L117 143.5L118 143.5L119 143.7L120 143.1L121 143.8L122 143.2L123 143.3L124 143.6L125 143.4L126 143.4L127 143.6L128 143.3L129 143.7L130 143.3L131 143.8L132 143.7L133 143.5L134 143.1L135 143.7L136 143.1L137 143.5L138 143.4L139 143.2L140 143.6L141 143.7L142 143.6L143 143.4L144 143.5L145 143.6L146 143.3L147 143.8L148 143.9L149 143.7L150 143.9L151 143.4L152 143.9L153 143.2L154 143.5L155 143.2L156 143.5L157 143.6L158 143.7L159 143.5L160 143.4L161 143.3L162 143.4L163 143.3L164 143.3L165 143.7L166 143.5L167 143.5L168 143.3L169 143.7L170 143.3L171 143.3L172 143.5L173 143.7L174 143.9L175 143.7L176 143.9L177 143.8L178 143.7L179 143.7L180 143.2L181 143.3L182 143.1L183 143.8L184 143.7L185 143.6L186 143.3L187 143.4L188 143.2L189 143.6L190 143.9L191 143.3L192 143.1L193 143.2L194 143.4L195 143.8L196 143.7L197 143.5L198 143.2L199 143.2L200 143.2L201 143.7L202 143.5L203 143.9L204 143.8L205 143.7L206 143.5L207 143.8L208 143.2L209 143.2L210 143.6L211 143.5L212 143.3L213 143.3L214 143.1L215 143.8L216 143.7L217 143.9L218 143.9L219 143.4L220 143.7L221 143.4L222 143.7L223 143.8L224 143.2L225 143.1L226 143.3L227 143.6L228 143.4L229 143.1L230 143.8L231 143.7L232 143.5L233 143.1L234 143.8L235 143.5L236 143.2L237 143.4L238 143.6L239 143.8L240 143.5L241 143.6L242 143.3L243 143.3L244 143.8L245 143.4L246 143.2L247 143.6L248 143.2L249 143.3L250 143.5L251 143.6L252 143.6L253 143.7L254 143.5L255 143.2L256 143.7L257 143.1L258 143.5L259 143.4L260 143.6L261 143.7L262 143.3L263 143.6L264 143.7L265 143.5L266 143.2L267 143.8L268 143.6L269 143.2L270 143.3L271 143.9L272 143.3L273 143.4L274 143.7L275 143.8L276 143.6L277 143.7L278 143.1L279 143.2L280 143.9L281 143.7L282 143.1L283 143.1L284 143.3L285 143.8L286 143.3L287 143.6L288 143.8L289 143.6L290 143.8L291 143.3L292 143.2L293 143.1L294 143.7L295 143.2L296 143.9L297 143.7L298 143.2L299 143.7L300 143.2L301 143.5L302 143.2L303 143.7L304 143.8L305 143.8L306 143.1L307 143.8L308 143.5L309 143.8L310 143.5L311 143.6L312 143.6L313 143.7L314 143.2L315 143.1L316 143.5L317 143.3L318 143.4L319 143.1L320 143.7L321 143.1L322 143.8L323 143.7L324 143.5L325 143.2L326 143.6L327 143.3L328 143.4L329 143.2L330 143.9L331 143.5L332 143.4L333 143.2L334 143.7L335 143.8L336 143.8L337 143.2L338 143.4L339 143.3L340 143.7L341 143.2L342 143.6L343 143.9L344 143.7L345 143.1L346 143.2L347 143.2L348 143.7L349 143.6L350 143.5L351 143.5L352 143.4L353 143.6L354 143.6L355 143.8L356 143.7L357 143.7L358 143.8L359 143.8L360 143.7L361 143.1L362 143.6L363 143.8L364 143.4L365 143.8L366 143.2L367 143.9L368 143.5L369 143.7L370 143.3L371 143.3L372 143.4L373 143.4L374 143.2L375 143.5L376 143.9L377 143.6L378 143.8L379 143.7L380 143.8L381 143.9L382 143.7L383 143.3L384 143.3L385 143.4L386 143.1L387 143.3L388 143.8L389 143.8L390 143.4L391 143.7L392 143.7L393 143.8L394 143.7L395 143.5L396 143.2L397 143.8L398 143.4L399 143.6L400 143.4L401 143.5L402 143.9L403 143.2L404 143.5L405 143.6L406 143.5L407 143.9L408 143.4L409 143.8L410 143.7L411 143.9L412 143.2L413 143.3L414 143.3L415 143.8L416 143.1L417 143.3L418 143.7L419 143.9L420 143.2L421 143.5L422 143.6L423 143.7L424 143.7L425 143.7L426 143.3L427 143.3L428 143.1L429 143.7L430 143.3L431 143.3L432 143.9L433 143.6L434 143.6L435 143.6L436 143.6L437 143.7L438 143.3L439 143.2L440 143.2L441 143.1L442 143.4L443 143.2L444 143.2L445 143.5L446 143.9L447 143.7L448 143.3L449 143.7L450 143.2L451 143.2L452 143.3L453 143.4L454 143.7L455 143.5L456 143.7L457 143.2L458 143.8L459 143.4L460 143.8L461 143.1L462 143.8L463 143.3L464 143.8L465 143.7L466 143.6L467 143.3L468 143.1L469 143.3L470 143.8L471 143.2L472 143.6L473 143.6L474 143.6L475 143.2L476 143.2L477 143.2L478 143.9L479 143.4L480 143.6L481 143.6L482 143.3L483 143.2L484 143.1L485 143.8L486 143.2L487 143.9L488 143.4L489 143.7L490 143.2L491 143.7L492 143.3L493 143.4L494 143.5L495 143.2L496 143.3L497 143.7L498 143.3L499 143.4L500 143.7L501 143.3L502 143.3L503 143.3L504 143.4L505 143.4L506 143.6L507 143.5L508 143.8L509 143.1L510 143.6L511 143.8L512 143.3L513 143.1L514 143.5L515 143.2L516 143.5L517 143.7L518 143.2L519 143.2L520 143.5L521 143.2L522 143.3L523 143.5L524 143.2L525 143.2L526 143.4L527 143.5L528 143.8L529 143.5L530 143.2L531 143.3L532 143.7L533 143.6L534 143.8L535 143.9L536 143.8L537 143.2L538 143.9L539 143.5L540 143.3L541 143.2L542 143.8L543 143.3L544 143.2L545 143.3L546 143.8L547 143.5L548 143.7L549 143.2L550 143.5L551 143.4L552 143.3L553 143.6L554 143.4L555 143.2L556 143.9L557 143.5L558 143.2L559 143.1L560 143.6L561 143.5L562 143.1L563 143.5L564 143.7L565 143.5L566 143.3L567 143.5L568 143.6L569 143.6L570 143.2L571 143.7L572 143.9L573 143.7L574 143.8L575 143.4L576 143.8L577 143.2L578 143.3L579 143.6L580 143.8L581 143.2L582 143.3L583 143.1L584 143.5L585 143.2L586 143.3L587 143.7L588 143.6L589 143.9L590 143.4L591 143.6L592 143.1L593 143.9L594 143.3L595 143.5L596 143.5L597 143.9L598 143.5L599 143.9L600 143.6L601 143.3L602 143.8L603 143.3L604 143.9L605 143.5L606 143.3L607 143.9L608 143.4L609 143.4L610 143.4L611 143.6L612 143.1L613 143.4L614 143.2L615 143.8L616 143.1L617 143.6L618 143.3L619 143.5L620 143.5L621 143.7L622 143.2L623 143.3L624 143.2L625 143.9L626 143.2L627 143.2L628 143.5L629 143.6L630 143.8L631 143.1L632 143.3L633 143.2L634 143.6L635 143.5L636 143.4L637 143.8L638 143.6L639 143.8L640 143.9L641 143.3L642 143.9L643 143.4L644 143.1L645 143.8L646 143.2L647 143.1L648 143.3L649 143.3L650 143.9L651 143.8L652 143.4L653 143.5L654 143.8L655 143.7L656 143.6L657 143.5L658 143.2L659 143.3L660 143.6L661 143.6L662 143.7L663 143.8L664 143.9L665 143.3L666 143.2L667 143.8L668 143.6L669 143.2L670 143.7L671 143.3L672 143.3L673 143.4L674 143.5L675 143.6L676 143.2L677 143.7L678 143.6L679 143.5L680 143.6L681 143.7L682 143.1L683 143.5L684 143.6L685 143.7L686 143.6L687 143.2L688 143.9L689 143.7L690 143.3L691 143.4L692 143.9L693 143.3L694 143.4L695 143.9L696 143.8L697 143.3L698 143.7L699 143.4L700 143.6L701 143.7L702 143.2L703 143.3L704 143.3L705 143.3L706 143.1L707 143.2L708 143.4L709 143.4L710 143.2L711 143.6L712 143.9L713 143.6L714 143.4L715 143.7L716 143.4L717 143.2L718 143.5L719 143.1L720 143.6L721 143.2L722 143.4L723 143.9L724 143.7L725 143.8L726 143.6L727 143.6L728 143.7L729 143.9L730 143.3L731 143.7L732 143.3L733 143.3L734 143.8L735 143.6L736 143.8L737 143.8L738 143.6L739 143.3L740 143.1L741 143.5L742 143.7L743 143.3L744 143.2L745 143.1L746 143.2L747 143.7L748 143.1L749 143.3L750 143.3L751 143.7L752 143.9L753 143.1L754 143.2L755 143.8L756 143.9L757 143.2L758 143.4L759 143.5L760 143.4L761 143.4L762 143.5L763 143.3L764 143.1L765 143.2L766 143.2L767 143.2L768 143.6L769 143.7L770 143.3L771 143.7L772 143.7L773 143.4L774 143.5L775 143.3L776 143.8L777 143.5L778 143.1L779 143.2L780 143.7L781 143.4L782 143.7L783 143.3L784 143.7L785 143.7L786 143.2L787 143.6L788 143.3L789 143.7L790 143.7L791 143.7L792 143.3L793 143.2L794 143.6L795 143.6L796 143.2L797 143.3L798 143.6L799 143.2L800 143.6L801 143.3L802 143.3L803 143.4L804 143.5L805 143.7L806 143.1L807 143.7L808 143.3L809 143.3L810 143.6L811 143.7L812 143.6L813 143.8L814 143.3L815 143.3L816 143.6L817 143.3L818 143.2L819 143.3L820 143.7L821 143.8L822 143.7L823 143.9L824 143.7L825 143.3L826 143.4L827 143.7L828 143.1L829 143.6L830 143.2L831 143.1L832 143.5L833 143.2L834 143.8L835 143.8L836 143.5L837 143.3L838 143.2L839 143.5L840 143.5L841 143.4L842 143.7L843 143.5L844 143.7L845 143.2L846 143.2L847 143.4L848 143.5L849 143.3L850 143.6L851 143.3L852 143.4L853 143.5L854 143.7L855 143.7L856 143.4L857 143.5L858 143.8L859 143.8L860 143.6L861 143.2L862 143.5L863 143.6L864 143.3L865 143.1L866 143.9L867 143.8L868 143.2L869 143.5L870 143.6L871 143.3L872 143.2L873 143.7L874 143.7L875 143.4L876 143.2L877 143.4L878 143.2L879 143.9L880 143.1L881 143.3L882 143.7L883 143.2L884 143.2L885 143.2L886 143.2L887 143.5L888 143.8L889 143.2L890 143.2L891 143.7L892 143.4L893 143.4L894 143.2L895 143.3L896 143.9L897 143.2L898 143.3L899 143.7L900 143.8L901 143.8L902 143.5L903 143.9L904 143.6L905 143.3L906 143.5L907 143.7L908 143.7L909 143.2L910 143.3L911 143.9L912 143.2L913 143.8L914 143.4L915 143.3L916 143.3L917 143.5L918 143.9L919 143.2L920 143.8L921 143.4L922 143.2L923 143.7L924 143.4L925 143.3L926 143.4L927 143.8L928 143.8L929 143.6L930 143.1L931 143.7L932 143.6L933 143.8L934 143.9L935 143.4L936 143.8L937 143.8L938 143.3L939 143.4L940 143.4L941 143.4L942 143.4L943 143.2L944 143.3L945 143.8L946 143.4L947 143.6L948 143.8L949 143.7L950 143.3L951 143.8L952 143.7L953 143.9L954 143.7L955 143.7L956 143.8L957 143.3L958 143.6L959 143.4L960 143.8L961 143.2L962 143.5L963 143.4L964 143.8L965 143.4L966 143.8L967 143.8L968 143.8L969 143.2L970 143.9L971 143.7L972 143.6L973 143.6L974 143.1L975 143.8L976 143.5L977 143.5L978 143.4L979 143.7L980 143.7L981 143.8L982 143.3L983 143.4L984 143.3L985 143.2L986 143.4L987 143.1L988 143.7L989 143.3L990 143.2L991 143.2L992 143.7L993 143.3L994 143.5L995 143.4L996 143.7L997 143.9L998 143.3L999 143.6L1000 143.8L1001 143.5L1002 143.8L1003 143.7L1004 143.3L1005 143.8L1006 143.6L1007 143.2L1008 143.6L1009 143.8L1010 143.5L1011 143.5L1012 143.4L1013 143.8L1014 143.6L1015 143.3L1016 143.4L1017 143.4L1018 143.9L1019 143.7L1020 143.2L1021 143.8L1022 143.1L1023 143.6L1024 143.4L1025 143.7L1026 143.4L1027 143.2L1028 143.5L1029 143.8L1030 143.7L1031 143.4L1032 143.3L1033 143.7L1034 143.7L1035 143.3L1036 143.8L1037 143.9L1038 143.4L1039 143.4L1040 143.7L1041 143.8L1042 143.3L1043 143.3L1044 143.4L1045 143.7L1046 143.2L1047 143.5L1048 143.5L1049 143.6L1050 143.2L1051 143.9L1052 143.9L1053 143.5L1054 143.7L1055 143.2L1056 143.8L1057 143.5L1058 143.7L1059 143.8L1060 143.4L1061 143.8L1062 143.3L1063 143.1L1064 143.5L1065 143.8L1066 143.8L1067 143.9L1068 143.5L1069 143.8L1070 143.5L1071 143.2L1072 143.6L1073 143.7L1074 143.4L1075 143.6L1076 143.3L1077 143.3L1078 143.4L1079 143.5L1080 143.5L1081 143.2L1082 143.1L1083 143.4L1084 143.7L1085 143.7L1086 143.3L1087 143.3L1088 143.5L1089 143.2L1090 143.6L1091 143.8L1092 143.3L1093 143.6L1094 143.7L1095 143.7L1096 143.7L1097 143.7L1098 143.3L1099 143.8L1100 143.8L1101 143.1L1102 143.9L1103 143.5L1104 143.2L1105 143.2L1106 143.7L1107 143.6L1108 143.2L1109 143.5L1110 143.6L1111 143.9L1112 143.4L1113 143.7L1114 143.3L1115 143.3L1116 143.2L1117 143.4L1118 143.6L1119 143.3L1120 143.2L1121 143.3L1122 143.2L1123 143.3L1124 143.4L1125 143.5L1126 143.2L1127 143.5L1128 143.5L1129 143.9L1130 143.5L1131 143.9L1132 143.5L1133 143.3L1134 143.6L1135 143.2L1136 143.2L1137 143.2L1138 143.7L1139 143.9L1140 143.4L1141 143.4L1142 143.4L1143 143.4L1144 143.7L1145 143.4L1146 143.2L1147 143.8L1148 143.6L1149 143.1L1150 143.8L1151 143.7L1152 143.4L1153 143.6L1154 143.8L1155 143.4L1156 143.4L1157 143.3L1158 143.5L1159 143.6L1160 143.7L1161 143.9L1162 143.2L1163 143.4L1164 143.8L1165 143.7L1166 143.6L1167 143.6L1168 143.4L1169 143.9L1170 143.5L1171 143.4L1172 143.2L1173 143.2L1174 143.8L1175 143.7L1176 143.1L1177 143.4L1178 143.5L1179 143.5L1180 143.4L1181 143.8L1182 143.4L1183 143.5L1184 143.8L1185 143.6L1186 143.5L1187 143.4L1188 143.4L1189 143.6L1190 143.7L1191 143.3L1192 143.4L1193 143.4L1194 143.4L1195 143.8L1196 143.5L1197 143.3L1198 143.4L1199 143.8L1200 143.2L1201 143.7L1202 143.1L1203 143.3L1204 143.1L1205 143.7L1206 143.2L1207 143.3L1208 143.1L1209 143.3L1210 143.7L1211 143.7L1212 143.8L1213 143.9L1214 143.5L1215 143.8L1216 143.2L1217 143.8L1218 143.4L1219 143.3L1220 143.7L1221 143.8L1222 143.4L1223 143.2L1224 143.8L1225 143.7L1226 143.6L1227 143.9L1228 143.1L1229 143.1L1230 143.2L1231 143.1L1232 143.7L1233 143.6L1234 143.2L1235 143.2L1236 143.2L1237 143.6L1238 143.6L1239 143.9L1240 143.4L1241 143.9L1242 143.4L1243 143.4L1244 143.3L1245 143.3L1246 143.9L1247 143.9L1248 143.7L1249 143.2L1250 143.2L1251 143.2L1252 143.4L1253 143.7L1254 143.1L1255 143.5L1256 143.6L1257 143.1L1258 143.5L1259 143.7L1260 143.6L1261 143.5L1262 143.8L1263 143.6L1264 143.4L1265 143.4L1266 143.9L1267 143.8L1268 143.8L1269 143.5L1270 143.2L1271 143.2L1272 143.4L1273 143.7L1274 143.1L1275 143.7L1276 143.7L1277 143.5L1278 143.1L1279 143.7L1280 143.4L1281 143.6L1282 143.6L1283 143.7L1284 143.4L1285 143.9L1286 143.9L1287 143.8L1288 143.6L1289 143.4L1290 143.4L1291 143.3L1292 143.8L1293 143.7L1294 143.7L1295 143.8L1296 143.9L1297 143.7L1298 143.4L1299 143.7L1300 143.3L1301 143.6L1302 143.2L1303 143.8L1304 143.5L1305 143.3L1306 143.8L1307 143.2L1308 143.8L1309 143.7L1310 143.2L1311 143.7L1312 143.6L1313 143.8L1314 143.6L1315 143.4L1316 143.8L1317 143.2L1318 143.7L1319 143.2L1320 143.3L1321 143.2L1322 143.8L1323 143.5L1324 143.7L1325 143.3L1326 143.7L1327 143.6L1328 143.2L1329 143.5L1330 143.7L1331 143.3L1332 143.6L1333 143.3L1334 143.4L1335 143.8L1336 143.9L1337 143.9L1338 143.4L1339 143.6L1340 143.7L1341 143.7L1342 143.5L1343 143.8L1344 143.4L1345 143.9L1346 143.5L1347 143.2L1348 143.7L1349 143.2L1350 143.6L1351 143.1L1352 143.9L1353 143.5L1354 143.7L1355 143.2L1356 143.6L1357 143.4L1358 143.3L1359 143.8L1360 143.1L1361 143.5L1362 143.2L1363 143.8L1364 143.8L1365 143.1L1366 143.5L1367 143.5L1368 143.7L1369 143.7L1370 143.4L1371 143.8L1372 143.2L1373 143.2L1374 143.8L1375 143.2L1376 143.2L1377 143.5L1378 143.4L1379 143.2L1380 143.8L1381 143.5L1382 143.7L1383 143.3L1384 143.8L1385 143.3L1386 143.8L1387 143.6L1388 143.9L1389 143.7L1390 143.6L1391 143.5L1392 143.8L1393 143.5L1394 143.2L1395 143.8L1396 143.7L1397 143.6L1398 143.7L1399 143.3L1400 143.5L1401 143.8L1402 143.9L1403 143.8L1404 143.2L1405 143.6L1406 143.5L1407 143.4L1408 143.2L1409 143.2L1410 143.5L1411 143.5L1412 143.3L1413 143.4L1414 143.5L1415 143.7L1416 143.6L1417 143.2L1418 143.8L1419 143.4L1420 143.9L1421 143.9L1422 143.2L1423 143.6L1424 143.9L1425 143.4L1426 143.5L1427 143.4L1428 143.1L1429 143.3L1430 143.2L1431 143.3L1432 143.6L1433 143.6L1434 143.9L1435 143.6L1436 143.4L1437 143.9L1438 143.6L1439 143.5L1440 143.8L1441 143.6L1442 143.4L1443 143.6L1444 143.3L1445 143.9L1446 143.3L1447 143.9L1448 143.2L1449 143.1L1450 143.5L1451 143.3L1452 143.5L1453 143.2L1454 143.8L1455 143.6L1456 143.6L1457 143.8L1458 143.9L1459 143.6L1460 143.7L1461 143.1L1462 143.1L1463 143.4L1464 143.9L1465 143.4L1466 143.6L1467 143.1L1468 143.4L1469 143.8L1470 143.6L1471 143.8L1472 143.1L1473 143.3L1474 143.2L1475 143.8L1476 143.2L1477 143.8L1478 143.3L1479 143.8L1480 143.5L1481 143.4L1482 143.9L1483 143.4L1484 143.7L1485 143.2L1486 143.8L1487 143.9L1488 143.2L1489 143.7L1490 143.3L1491 143.2L1492 143.4L1493 143.6L1494 143.9L1495 143.9L1496 143.9L1497 143.6L1498 143.6L1499 143.2L1500 143.7L1501 143.5L1502 143.4L1503 143.8L1504 143.3L1505 143.2L1506 143.2L1507 143.2L1508 143.6L1509 143.7L1510 143.2L1511 143.5L1512 143.6L1513 143.5L1514 143.4L1515 143.5L1516 143.1L1517 143.1L1518 143.4L1519 143.3L1520 143.7L1521 143.3L1522 143.8L1523 143.3L1524 143.2L1525 143.5L1526 143.4L1527 143.4L1528 143.7L1529 143.3L1530 143.6L1531 143.8L1532 143.5L1533 143.5L1534 143.8L1535 143.6L1536 143.2L1537 143.2L1538 143.2L1539 143.4L1540 143.2L1541 143.6L1542 143.4L1543 143.3L1544 143.5L1545 143.8L1546 143.3L1547 143.2L1548 143.3L1549 143.4L1550 143.8L1551 143.7L1552 143.4L1553 143.2L1554 143.1L1555 143.2L1556 143.8L1557 143.6L1558 143.2L1559 143.6L1560 143.1L1561 143.5L1562 143.4L1563 143.2L1564 143.7L1565 143.7L1566 143.5L1567 143.2L1568 143.6L1569 143.4L1570 143.6L1571 143.2L1572 143.8L1573 143.1L1574 143.3L1575 143.4L1576 143.3L1577 143.2L1578 143.6L1579 143.9L1580 143.4L1581 143.3L1582 143.6L1583 143.3L1584 143.4L1585 143.7L1586 143.4L1587 143.2L1588 143.2L1589 143.5L1590 143.9L1591 143.8L1592 143.2L1593 143.5L1594 143.5L1595 143.3L1596 143.6L1597 143.5L1598 143.7L1599 143.3L1600 143.8L1601 143.8L1602 143.5L1603 143.2L1604 143.5L1605 143.2L1606 143.6L1607 143.7L1608 143.6L1609 143.9L1610 143.1L1611 143.7L1612 143.7L1613 143.2L1614 143.4L1615 143.1L1616 143.6L1617 143.7L1618 143.4L1619 143.7L1620 143.4L1621 143.7L1622 143.3L1623 143.9L1624 143.5L1625 143.1L1626 143.2L1627 143.7L1628 143.8L1629 143.6L1630 143.2L1631 143.8L1632 143.7L1633 143.2L1634 143.4L1635 143.6L1636 143.1L1637 143.1L1638 143.4L1639 143.8L1640 143.9L1641 143.4L1642 143.8L1643 143.7L1644 143.8L1645 143.6L1646 143.9L1647 143.6L1648 143.9L1649 143.6L1650 143.3L1651 143.5L1652 143.5L1653 143.4L1654 143.4L1655 143.5L1656 143.6L1657 143.3L1658 143.3L1659 143.5L1660 143.5L1661 143.4L1662 143.6L1663 143.2L1664 143.5L1665 143.3L1666 143.7L1667 143.7L1668 143.7L1669 143.5L1670 143.3L1671 143.8L1672 143.5L1673 143.4L1674 143.3L1675 143.4L1676 143.7L1677 143.8L1678 143.5L1679 143.7L1680 143.3L1681 143.5L1682 143.4L1683 143.3L1684 143.4L1685 143.7L1686 143.7L1687 143.3L1688 143.3L1689 143.7L1690 143.6L1691 143.6L1692 143.6L1693 143.7L1694 143.3L1695 143.1L1696 143.4L1697 143.1L1698 143.9L1699 143.5L1700 143.6L1701 143.9L1702 143.7L1703 143.3L1704 143.4L1705 143.2L1706 143.7L1707 143.7L1708 143.5L1709 143.4L1710 143.3" stroke="#f4e838" stroke-width="2.4" fill="none"/><path d="M14 146.5H1710" stroke="#d0c040" stroke-width="1.2" stroke-dasharray="5 5" opacity="0.85"/><rect x="867.5" y="88.5" width="80.5" height="170" rx="2" fill="none" stroke="#b4b4b4" stroke-width="5" opacity="0.88"/><path d="M542 162L560 162L551 147Z" fill="#f4a040"/><path d="M1292.7 86H1312.2L1302.5 95Z" fill="#f49030"/><rect x="1293.9" y="97" width="18.2" height="18.7" fill="#000" stroke="#f09438" stroke-width="2"/><path d="M1298 116.5L1302.5 122.5L1307 116.5Z" fill="#f09438"/><text x="1302.3" y="111.8" text-anchor="middle" font-family="Liberation Sans" font-size="15" fill="#f6dcae">T</text><path d="M1709 86V261" stroke="#7a2030" stroke-width="1.5" stroke-dasharray="2 2"/><path d="M16.5 208.5Q16.5 206.5 18.5 206.5H34.5L40.5 214.0L34.5 221.5H18.5Q16.5 221.5 16.5 219.5Z" fill="#3c4a20" stroke="#6a7a30" stroke-width="1"/><text x="20.5" y="218.0" font-family="Liberation Sans" font-size="10" fill="#a8d050">C 4</text><path d="M16.5 223.5Q16.5 221.5 18.5 221.5H34.5L40.5 228.0L34.5 234.5H18.5Q16.5 234.5 16.5 232.5Z" fill="#17454c" stroke="#2a7880" stroke-width="1"/><text x="20.5" y="232.0" font-family="Liberation Sans" font-size="10" fill="#40c8d0">C 2</text><path d="M16.5 236.5Q16.5 234.5 18.5 234.5H34.5L40.5 242.0L34.5 249.5H18.5Q16.5 249.5 16.5 247.5Z" fill="#e8506e" stroke="#e8506e" stroke-width="1"/><text x="20.5" y="246.0" font-family="Liberation Sans" font-size="10" fill="#fff">C 3</text></svg>
<svg style="left:14px;top:291px" width="1696" height="673" viewBox="14 291 1696 673"><path d="M35 296h1v1h-1zM35 313h1v1h-1zM35 330h1v1h-1zM35 346h1v1h-1zM35 363h1v1h-1zM35 380h1v1h-1zM35 397h1v1h-1zM35 413h1v1h-1zM35 447h1v1h-1zM35 463h1v1h-1zM35 480h1v1h-1zM35 496h1v1h-1zM35 513h1v1h-1zM35 530h1v1h-1zM35 546h1v1h-1zM35 563h1v1h-1zM35 580h1v1h-1zM35 613h1v1h-1zM35 645h1v1h-1zM35 663h1v1h-1zM35 681h1v1h-1zM35 699h1v1h-1zM35 717h1v1h-1zM35 735h1v1h-1zM35 753h1v1h-1zM35 771h1v1h-1zM35 627h1v1h-1zM35 814h1v1h-1zM35 830h1v1h-1zM35 845h1v1h-1zM35 861h1v1h-1zM35 876h1v1h-1zM35 892h1v1h-1zM35 907h1v1h-1zM35 938h1v1h-1zM35 954h1v1h-1zM69 296h1v1h-1zM69 313h1v1h-1zM69 330h1v1h-1zM69 346h1v1h-1zM69 363h1v1h-1zM69 380h1v1h-1zM69 397h1v1h-1zM69 413h1v1h-1zM69 447h1v1h-1zM69 463h1v1h-1zM69 480h1v1h-1zM69 496h1v1h-1zM69 513h1v1h-1zM69 530h1v1h-1zM69 546h1v1h-1zM69 563h1v1h-1zM69 580h1v1h-1zM69 613h1v1h-1zM69 645h1v1h-1zM69 663h1v1h-1zM69 681h1v1h-1zM69 699h1v1h-1zM69 717h1v1h-1zM69 735h1v1h-1zM69 753h1v1h-1zM69 771h1v1h-1zM69 627h1v1h-1zM69 814h1v1h-1zM69 830h1v1h-1zM69 845h1v1h-1zM69 861h1v1h-1zM69 876h1v1h-1zM69 892h1v1h-1zM69 907h1v1h-1zM69 938h1v1h-1zM69 954h1v1h-1zM103 296h1v1h-1zM103 313h1v1h-1zM103 330h1v1h-1zM103 346h1v1h-1zM103 363h1v1h-1zM103 380h1v1h-1zM103 397h1v1h-1zM103 413h1v1h-1zM103 447h1v1h-1zM103 463h1v1h-1zM103 480h1v1h-1zM103 496h1v1h-1zM103 513h1v1h-1zM103 530h1v1h-1zM103 546h1v1h-1zM103 563h1v1h-1zM103 580h1v1h-1zM103 613h1v1h-1zM103 645h1v1h-1zM103 663h1v1h-1zM103 681h1v1h-1zM103 699h1v1h-1zM103 717h1v1h-1zM103 735h1v1h-1zM103 753h1v1h-1zM103 771h1v1h-1zM103 627h1v1h-1zM103 814h1v1h-1zM103 830h1v1h-1zM103 845h1v1h-1zM103 861h1v1h-1zM103 876h1v1h-1zM103 892h1v1h-1zM103 907h1v1h-1zM103 938h1v1h-1zM103 954h1v1h-1zM137 296h1v1h-1zM137 313h1v1h-1zM137 330h1v1h-1zM137 346h1v1h-1zM137 363h1v1h-1zM137 380h1v1h-1zM137 397h1v1h-1zM137 413h1v1h-1zM137 447h1v1h-1zM137 463h1v1h-1zM137 480h1v1h-1zM137 496h1v1h-1zM137 513h1v1h-1zM137 530h1v1h-1zM137 546h1v1h-1zM137 563h1v1h-1zM137 580h1v1h-1zM137 613h1v1h-1zM137 645h1v1h-1zM137 663h1v1h-1zM137 681h1v1h-1zM137 699h1v1h-1zM137 717h1v1h-1zM137 735h1v1h-1zM137 753h1v1h-1zM137 771h1v1h-1zM137 627h1v1h-1zM137 814h1v1h-1zM137 830h1v1h-1zM137 845h1v1h-1zM137 861h1v1h-1zM137 876h1v1h-1zM137 892h1v1h-1zM137 907h1v1h-1zM137 938h1v1h-1zM137 954h1v1h-1zM171 296h1v1h-1zM171 313h1v1h-1zM171 330h1v1h-1zM171 346h1v1h-1zM171 363h1v1h-1zM171 380h1v1h-1zM171 397h1v1h-1zM171 413h1v1h-1zM171 447h1v1h-1zM171 463h1v1h-1zM171 480h1v1h-1zM171 496h1v1h-1zM171 513h1v1h-1zM171 530h1v1h-1zM171 546h1v1h-1zM171 563h1v1h-1zM171 580h1v1h-1zM171 613h1v1h-1zM171 645h1v1h-1zM171 663h1v1h-1zM171 681h1v1h-1zM171 699h1v1h-1zM171 717h1v1h-1zM171 735h1v1h-1zM171 753h1v1h-1zM171 771h1v1h-1zM171 627h1v1h-1zM171 814h1v1h-1zM171 830h1v1h-1zM171 845h1v1h-1zM171 861h1v1h-1zM171 876h1v1h-1zM171 892h1v1h-1zM171 907h1v1h-1zM171 938h1v1h-1zM171 954h1v1h-1zM205 296h1v1h-1zM205 313h1v1h-1zM205 330h1v1h-1zM205 346h1v1h-1zM205 363h1v1h-1zM205 380h1v1h-1zM205 397h1v1h-1zM205 413h1v1h-1zM205 447h1v1h-1zM205 463h1v1h-1zM205 480h1v1h-1zM205 496h1v1h-1zM205 513h1v1h-1zM205 530h1v1h-1zM205 546h1v1h-1zM205 563h1v1h-1zM205 580h1v1h-1zM205 613h1v1h-1zM205 645h1v1h-1zM205 663h1v1h-1zM205 681h1v1h-1zM205 699h1v1h-1zM205 717h1v1h-1zM205 735h1v1h-1zM205 753h1v1h-1zM205 771h1v1h-1zM205 627h1v1h-1zM205 814h1v1h-1zM205 830h1v1h-1zM205 845h1v1h-1zM205 861h1v1h-1zM205 876h1v1h-1zM205 892h1v1h-1zM205 907h1v1h-1zM205 938h1v1h-1zM205 954h1v1h-1zM239 296h1v1h-1zM239 313h1v1h-1zM239 330h1v1h-1zM239 346h1v1h-1zM239 363h1v1h-1zM239 380h1v1h-1zM239 397h1v1h-1zM239 413h1v1h-1zM239 447h1v1h-1zM239 463h1v1h-1zM239 480h1v1h-1zM239 496h1v1h-1zM239 513h1v1h-1zM239 530h1v1h-1zM239 546h1v1h-1zM239 563h1v1h-1zM239 580h1v1h-1zM239 613h1v1h-1zM239 645h1v1h-1zM239 663h1v1h-1zM239 681h1v1h-1zM239 699h1v1h-1zM239 717h1v1h-1zM239 735h1v1h-1zM239 753h1v1h-1zM239 771h1v1h-1zM239 627h1v1h-1zM239 814h1v1h-1zM239 830h1v1h-1zM239 845h1v1h-1zM239 861h1v1h-1zM239 876h1v1h-1zM239 892h1v1h-1zM239 907h1v1h-1zM239 938h1v1h-1zM239 954h1v1h-1zM273 296h1v1h-1zM273 313h1v1h-1zM273 330h1v1h-1zM273 346h1v1h-1zM273 363h1v1h-1zM273 380h1v1h-1zM273 397h1v1h-1zM273 413h1v1h-1zM273 447h1v1h-1zM273 463h1v1h-1zM273 480h1v1h-1zM273 496h1v1h-1zM273 513h1v1h-1zM273 530h1v1h-1zM273 546h1v1h-1zM273 563h1v1h-1zM273 580h1v1h-1zM273 613h1v1h-1zM273 645h1v1h-1zM273 663h1v1h-1zM273 681h1v1h-1zM273 699h1v1h-1zM273 717h1v1h-1zM273 735h1v1h-1zM273 753h1v1h-1zM273 771h1v1h-1zM273 627h1v1h-1zM273 814h1v1h-1zM273 830h1v1h-1zM273 845h1v1h-1zM273 861h1v1h-1zM273 876h1v1h-1zM273 892h1v1h-1zM273 907h1v1h-1zM273 938h1v1h-1zM273 954h1v1h-1zM307 296h1v1h-1zM307 313h1v1h-1zM307 330h1v1h-1zM307 346h1v1h-1zM307 363h1v1h-1zM307 380h1v1h-1zM307 397h1v1h-1zM307 413h1v1h-1zM307 447h1v1h-1zM307 463h1v1h-1zM307 480h1v1h-1zM307 496h1v1h-1zM307 513h1v1h-1zM307 530h1v1h-1zM307 546h1v1h-1zM307 563h1v1h-1zM307 580h1v1h-1zM307 613h1v1h-1zM307 645h1v1h-1zM307 663h1v1h-1zM307 681h1v1h-1zM307 699h1v1h-1zM307 717h1v1h-1zM307 735h1v1h-1zM307 753h1v1h-1zM307 771h1v1h-1zM307 627h1v1h-1zM307 814h1v1h-1zM307 830h1v1h-1zM307 845h1v1h-1zM307 861h1v1h-1zM307 876h1v1h-1zM307 892h1v1h-1zM307 907h1v1h-1zM307 938h1v1h-1zM307 954h1v1h-1zM341 296h1v1h-1zM341 313h1v1h-1zM341 330h1v1h-1zM341 346h1v1h-1zM341 363h1v1h-1zM341 380h1v1h-1zM341 397h1v1h-1zM341 413h1v1h-1zM341 447h1v1h-1zM341 463h1v1h-1zM341 480h1v1h-1zM341 496h1v1h-1zM341 513h1v1h-1zM341 530h1v1h-1zM341 546h1v1h-1zM341 563h1v1h-1zM341 580h1v1h-1zM341 613h1v1h-1zM341 645h1v1h-1zM341 663h1v1h-1zM341 681h1v1h-1zM341 699h1v1h-1zM341 717h1v1h-1zM341 735h1v1h-1zM341 753h1v1h-1zM341 771h1v1h-1zM341 627h1v1h-1zM341 814h1v1h-1zM341 830h1v1h-1zM341 845h1v1h-1zM341 861h1v1h-1zM341 876h1v1h-1zM341 892h1v1h-1zM341 907h1v1h-1zM341 938h1v1h-1zM341 954h1v1h-1zM374 296h1v1h-1zM374 313h1v1h-1zM374 330h1v1h-1zM374 346h1v1h-1zM374 363h1v1h-1zM374 380h1v1h-1zM374 397h1v1h-1zM374 413h1v1h-1zM374 447h1v1h-1zM374 463h1v1h-1zM374 480h1v1h-1zM374 496h1v1h-1zM374 513h1v1h-1zM374 530h1v1h-1zM374 546h1v1h-1zM374 563h1v1h-1zM374 580h1v1h-1zM374 613h1v1h-1zM374 645h1v1h-1zM374 663h1v1h-1zM374 681h1v1h-1zM374 699h1v1h-1zM374 717h1v1h-1zM374 735h1v1h-1zM374 753h1v1h-1zM374 771h1v1h-1zM374 627h1v1h-1zM374 814h1v1h-1zM374 830h1v1h-1zM374 845h1v1h-1zM374 861h1v1h-1zM374 876h1v1h-1zM374 892h1v1h-1zM374 907h1v1h-1zM374 938h1v1h-1zM374 954h1v1h-1zM408 296h1v1h-1zM408 313h1v1h-1zM408 330h1v1h-1zM408 346h1v1h-1zM408 363h1v1h-1zM408 380h1v1h-1zM408 397h1v1h-1zM408 413h1v1h-1zM408 447h1v1h-1zM408 463h1v1h-1zM408 480h1v1h-1zM408 496h1v1h-1zM408 513h1v1h-1zM408 530h1v1h-1zM408 546h1v1h-1zM408 563h1v1h-1zM408 580h1v1h-1zM408 613h1v1h-1zM408 645h1v1h-1zM408 663h1v1h-1zM408 681h1v1h-1zM408 699h1v1h-1zM408 717h1v1h-1zM408 735h1v1h-1zM408 753h1v1h-1zM408 771h1v1h-1zM408 627h1v1h-1zM408 814h1v1h-1zM408 830h1v1h-1zM408 845h1v1h-1zM408 861h1v1h-1zM408 876h1v1h-1zM408 892h1v1h-1zM408 907h1v1h-1zM408 938h1v1h-1zM408 954h1v1h-1zM442 296h1v1h-1zM442 313h1v1h-1zM442 330h1v1h-1zM442 346h1v1h-1zM442 363h1v1h-1zM442 380h1v1h-1zM442 397h1v1h-1zM442 413h1v1h-1zM442 447h1v1h-1zM442 463h1v1h-1zM442 480h1v1h-1zM442 496h1v1h-1zM442 513h1v1h-1zM442 530h1v1h-1zM442 546h1v1h-1zM442 563h1v1h-1zM442 580h1v1h-1zM442 613h1v1h-1zM442 645h1v1h-1zM442 663h1v1h-1zM442 681h1v1h-1zM442 699h1v1h-1zM442 717h1v1h-1zM442 735h1v1h-1zM442 753h1v1h-1zM442 771h1v1h-1zM442 627h1v1h-1zM442 814h1v1h-1zM442 830h1v1h-1zM442 845h1v1h-1zM442 861h1v1h-1zM442 876h1v1h-1zM442 892h1v1h-1zM442 907h1v1h-1zM442 938h1v1h-1zM442 954h1v1h-1zM476 296h1v1h-1zM476 313h1v1h-1zM476 330h1v1h-1zM476 346h1v1h-1zM476 363h1v1h-1zM476 380h1v1h-1zM476 397h1v1h-1zM476 413h1v1h-1zM476 447h1v1h-1zM476 463h1v1h-1zM476 480h1v1h-1zM476 496h1v1h-1zM476 513h1v1h-1zM476 530h1v1h-1zM476 546h1v1h-1zM476 563h1v1h-1zM476 580h1v1h-1zM476 613h1v1h-1zM476 645h1v1h-1zM476 663h1v1h-1zM476 681h1v1h-1zM476 699h1v1h-1zM476 717h1v1h-1zM476 735h1v1h-1zM476 753h1v1h-1zM476 771h1v1h-1zM476 627h1v1h-1zM476 814h1v1h-1zM476 830h1v1h-1zM476 845h1v1h-1zM476 861h1v1h-1zM476 876h1v1h-1zM476 892h1v1h-1zM476 907h1v1h-1zM476 938h1v1h-1zM476 954h1v1h-1zM510 296h1v1h-1zM510 313h1v1h-1zM510 330h1v1h-1zM510 346h1v1h-1zM510 363h1v1h-1zM510 380h1v1h-1zM510 397h1v1h-1zM510 413h1v1h-1zM510 447h1v1h-1zM510 463h1v1h-1zM510 480h1v1h-1zM510 496h1v1h-1zM510 513h1v1h-1zM510 530h1v1h-1zM510 546h1v1h-1zM510 563h1v1h-1zM510 580h1v1h-1zM510 613h1v1h-1zM510 645h1v1h-1zM510 663h1v1h-1zM510 681h1v1h-1zM510 699h1v1h-1zM510 717h1v1h-1zM510 735h1v1h-1zM510 753h1v1h-1zM510 771h1v1h-1zM510 627h1v1h-1zM510 814h1v1h-1zM510 830h1v1h-1zM510 845h1v1h-1zM510 861h1v1h-1zM510 876h1v1h-1zM510 892h1v1h-1zM510 907h1v1h-1zM510 938h1v1h-1zM510 954h1v1h-1zM544 296h1v1h-1zM544 313h1v1h-1zM544 330h1v1h-1zM544 346h1v1h-1zM544 363h1v1h-1zM544 380h1v1h-1zM544 397h1v1h-1zM544 413h1v1h-1zM544 447h1v1h-1zM544 463h1v1h-1zM544 480h1v1h-1zM544 496h1v1h-1zM544 513h1v1h-1zM544 530h1v1h-1zM544 546h1v1h-1zM544 563h1v1h-1zM544 580h1v1h-1zM544 613h1v1h-1zM544 645h1v1h-1zM544 663h1v1h-1zM544 681h1v1h-1zM544 699h1v1h-1zM544 717h1v1h-1zM544 735h1v1h-1zM544 753h1v1h-1zM544 771h1v1h-1zM544 627h1v1h-1zM544 814h1v1h-1zM544 830h1v1h-1zM544 845h1v1h-1zM544 861h1v1h-1zM544 876h1v1h-1zM544 892h1v1h-1zM544 907h1v1h-1zM544 938h1v1h-1zM544 954h1v1h-1zM578 296h1v1h-1zM578 313h1v1h-1zM578 330h1v1h-1zM578 346h1v1h-1zM578 363h1v1h-1zM578 380h1v1h-1zM578 397h1v1h-1zM578 413h1v1h-1zM578 447h1v1h-1zM578 463h1v1h-1zM578 480h1v1h-1zM578 496h1v1h-1zM578 513h1v1h-1zM578 530h1v1h-1zM578 546h1v1h-1zM578 563h1v1h-1zM578 580h1v1h-1zM578 613h1v1h-1zM578 645h1v1h-1zM578 663h1v1h-1zM578 681h1v1h-1zM578 699h1v1h-1zM578 717h1v1h-1zM578 735h1v1h-1zM578 753h1v1h-1zM578 771h1v1h-1zM578 627h1v1h-1zM578 814h1v1h-1zM578 830h1v1h-1zM578 845h1v1h-1zM578 861h1v1h-1zM578 876h1v1h-1zM578 892h1v1h-1zM578 907h1v1h-1zM578 938h1v1h-1zM578 954h1v1h-1zM612 296h1v1h-1zM612 313h1v1h-1zM612 330h1v1h-1zM612 346h1v1h-1zM612 363h1v1h-1zM612 380h1v1h-1zM612 397h1v1h-1zM612 413h1v1h-1zM612 447h1v1h-1zM612 463h1v1h-1zM612 480h1v1h-1zM612 496h1v1h-1zM612 513h1v1h-1zM612 530h1v1h-1zM612 546h1v1h-1zM612 563h1v1h-1zM612 580h1v1h-1zM612 613h1v1h-1zM612 645h1v1h-1zM612 663h1v1h-1zM612 681h1v1h-1zM612 699h1v1h-1zM612 717h1v1h-1zM612 735h1v1h-1zM612 753h1v1h-1zM612 771h1v1h-1zM612 627h1v1h-1zM612 814h1v1h-1zM612 830h1v1h-1zM612 845h1v1h-1zM612 861h1v1h-1zM612 876h1v1h-1zM612 892h1v1h-1zM612 907h1v1h-1zM612 938h1v1h-1zM612 954h1v1h-1zM646 296h1v1h-1zM646 313h1v1h-1zM646 330h1v1h-1zM646 346h1v1h-1zM646 363h1v1h-1zM646 380h1v1h-1zM646 397h1v1h-1zM646 413h1v1h-1zM646 447h1v1h-1zM646 463h1v1h-1zM646 480h1v1h-1zM646 496h1v1h-1zM646 513h1v1h-1zM646 530h1v1h-1zM646 546h1v1h-1zM646 563h1v1h-1zM646 580h1v1h-1zM646 613h1v1h-1zM646 645h1v1h-1zM646 663h1v1h-1zM646 681h1v1h-1zM646 699h1v1h-1zM646 717h1v1h-1zM646 735h1v1h-1zM646 753h1v1h-1zM646 771h1v1h-1zM646 627h1v1h-1zM646 814h1v1h-1zM646 830h1v1h-1zM646 845h1v1h-1zM646 861h1v1h-1zM646 876h1v1h-1zM646 892h1v1h-1zM646 907h1v1h-1zM646 938h1v1h-1zM646 954h1v1h-1zM680 296h1v1h-1zM680 313h1v1h-1zM680 330h1v1h-1zM680 346h1v1h-1zM680 363h1v1h-1zM680 380h1v1h-1zM680 397h1v1h-1zM680 413h1v1h-1zM680 447h1v1h-1zM680 463h1v1h-1zM680 480h1v1h-1zM680 496h1v1h-1zM680 513h1v1h-1zM680 530h1v1h-1zM680 546h1v1h-1zM680 563h1v1h-1zM680 580h1v1h-1zM680 613h1v1h-1zM680 645h1v1h-1zM680 663h1v1h-1zM680 681h1v1h-1zM680 699h1v1h-1zM680 717h1v1h-1zM680 735h1v1h-1zM680 753h1v1h-1zM680 771h1v1h-1zM680 627h1v1h-1zM680 814h1v1h-1zM680 830h1v1h-1zM680 845h1v1h-1zM680 861h1v1h-1zM680 876h1v1h-1zM680 892h1v1h-1zM680 907h1v1h-1zM680 938h1v1h-1zM680 954h1v1h-1zM714 296h1v1h-1zM714 313h1v1h-1zM714 330h1v1h-1zM714 346h1v1h-1zM714 363h1v1h-1zM714 380h1v1h-1zM714 397h1v1h-1zM714 413h1v1h-1zM714 447h1v1h-1zM714 463h1v1h-1zM714 480h1v1h-1zM714 496h1v1h-1zM714 513h1v1h-1zM714 530h1v1h-1zM714 546h1v1h-1zM714 563h1v1h-1zM714 580h1v1h-1zM714 613h1v1h-1zM714 645h1v1h-1zM714 663h1v1h-1zM714 681h1v1h-1zM714 699h1v1h-1zM714 717h1v1h-1zM714 735h1v1h-1zM714 753h1v1h-1zM714 771h1v1h-1zM714 627h1v1h-1zM714 814h1v1h-1zM714 830h1v1h-1zM714 845h1v1h-1zM714 861h1v1h-1zM714 876h1v1h-1zM714 892h1v1h-1zM714 907h1v1h-1zM714 938h1v1h-1zM714 954h1v1h-1zM748 296h1v1h-1zM748 313h1v1h-1zM748 330h1v1h-1zM748 346h1v1h-1zM748 363h1v1h-1zM748 380h1v1h-1zM748 397h1v1h-1zM748 413h1v1h-1zM748 447h1v1h-1zM748 463h1v1h-1zM748 480h1v1h-1zM748 496h1v1h-1zM748 513h1v1h-1zM748 530h1v1h-1zM748 546h1v1h-1zM748 563h1v1h-1zM748 580h1v1h-1zM748 613h1v1h-1zM748 645h1v1h-1zM748 663h1v1h-1zM748 681h1v1h-1zM748 699h1v1h-1zM748 717h1v1h-1zM748 735h1v1h-1zM748 753h1v1h-1zM748 771h1v1h-1zM748 627h1v1h-1zM748 814h1v1h-1zM748 830h1v1h-1zM748 845h1v1h-1zM748 861h1v1h-1zM748 876h1v1h-1zM748 892h1v1h-1zM748 907h1v1h-1zM748 938h1v1h-1zM748 954h1v1h-1zM782 296h1v1h-1zM782 313h1v1h-1zM782 330h1v1h-1zM782 346h1v1h-1zM782 363h1v1h-1zM782 380h1v1h-1zM782 397h1v1h-1zM782 413h1v1h-1zM782 447h1v1h-1zM782 463h1v1h-1zM782 480h1v1h-1zM782 496h1v1h-1zM782 513h1v1h-1zM782 530h1v1h-1zM782 546h1v1h-1zM782 563h1v1h-1zM782 580h1v1h-1zM782 613h1v1h-1zM782 645h1v1h-1zM782 663h1v1h-1zM782 681h1v1h-1zM782 699h1v1h-1zM782 717h1v1h-1zM782 735h1v1h-1zM782 753h1v1h-1zM782 771h1v1h-1zM782 627h1v1h-1zM782 814h1v1h-1zM782 830h1v1h-1zM782 845h1v1h-1zM782 861h1v1h-1zM782 876h1v1h-1zM782 892h1v1h-1zM782 907h1v1h-1zM782 938h1v1h-1zM782 954h1v1h-1zM816 296h1v1h-1zM816 313h1v1h-1zM816 330h1v1h-1zM816 346h1v1h-1zM816 363h1v1h-1zM816 380h1v1h-1zM816 397h1v1h-1zM816 413h1v1h-1zM816 447h1v1h-1zM816 463h1v1h-1zM816 480h1v1h-1zM816 496h1v1h-1zM816 513h1v1h-1zM816 530h1v1h-1zM816 546h1v1h-1zM816 563h1v1h-1zM816 580h1v1h-1zM816 613h1v1h-1zM816 645h1v1h-1zM816 663h1v1h-1zM816 681h1v1h-1zM816 699h1v1h-1zM816 717h1v1h-1zM816 735h1v1h-1zM816 753h1v1h-1zM816 771h1v1h-1zM816 627h1v1h-1zM816 814h1v1h-1zM816 830h1v1h-1zM816 845h1v1h-1zM816 861h1v1h-1zM816 876h1v1h-1zM816 892h1v1h-1zM816 907h1v1h-1zM816 938h1v1h-1zM816 954h1v1h-1zM850 296h1v1h-1zM850 313h1v1h-1zM850 330h1v1h-1zM850 346h1v1h-1zM850 363h1v1h-1zM850 380h1v1h-1zM850 397h1v1h-1zM850 413h1v1h-1zM850 447h1v1h-1zM850 463h1v1h-1zM850 480h1v1h-1zM850 496h1v1h-1zM850 513h1v1h-1zM850 530h1v1h-1zM850 546h1v1h-1zM850 563h1v1h-1zM850 580h1v1h-1zM850 613h1v1h-1zM850 645h1v1h-1zM850 663h1v1h-1zM850 681h1v1h-1zM850 699h1v1h-1zM850 717h1v1h-1zM850 735h1v1h-1zM850 753h1v1h-1zM850 771h1v1h-1zM850 627h1v1h-1zM850 814h1v1h-1zM850 830h1v1h-1zM850 845h1v1h-1zM850 861h1v1h-1zM850 876h1v1h-1zM850 892h1v1h-1zM850 907h1v1h-1zM850 938h1v1h-1zM850 954h1v1h-1zM884 296h1v1h-1zM884 313h1v1h-1zM884 330h1v1h-1zM884 346h1v1h-1zM884 363h1v1h-1zM884 380h1v1h-1zM884 397h1v1h-1zM884 413h1v1h-1zM884 447h1v1h-1zM884 463h1v1h-1zM884 480h1v1h-1zM884 496h1v1h-1zM884 513h1v1h-1zM884 530h1v1h-1zM884 546h1v1h-1zM884 563h1v1h-1zM884 580h1v1h-1zM884 613h1v1h-1zM884 645h1v1h-1zM884 663h1v1h-1zM884 681h1v1h-1zM884 699h1v1h-1zM884 717h1v1h-1zM884 735h1v1h-1zM884 753h1v1h-1zM884 771h1v1h-1zM884 627h1v1h-1zM884 814h1v1h-1zM884 830h1v1h-1zM884 845h1v1h-1zM884 861h1v1h-1zM884 876h1v1h-1zM884 892h1v1h-1zM884 907h1v1h-1zM884 938h1v1h-1zM884 954h1v1h-1zM918 296h1v1h-1zM918 313h1v1h-1zM918 330h1v1h-1zM918 346h1v1h-1zM918 363h1v1h-1zM918 380h1v1h-1zM918 397h1v1h-1zM918 413h1v1h-1zM918 447h1v1h-1zM918 463h1v1h-1zM918 480h1v1h-1zM918 496h1v1h-1zM918 513h1v1h-1zM918 530h1v1h-1zM918 546h1v1h-1zM918 563h1v1h-1zM918 580h1v1h-1zM918 613h1v1h-1zM918 645h1v1h-1zM918 663h1v1h-1zM918 681h1v1h-1zM918 699h1v1h-1zM918 717h1v1h-1zM918 735h1v1h-1zM918 753h1v1h-1zM918 771h1v1h-1zM918 627h1v1h-1zM918 814h1v1h-1zM918 830h1v1h-1zM918 845h1v1h-1zM918 861h1v1h-1zM918 876h1v1h-1zM918 892h1v1h-1zM918 907h1v1h-1zM918 938h1v1h-1zM918 954h1v1h-1zM952 296h1v1h-1zM952 313h1v1h-1zM952 330h1v1h-1zM952 346h1v1h-1zM952 363h1v1h-1zM952 380h1v1h-1zM952 397h1v1h-1zM952 413h1v1h-1zM952 447h1v1h-1zM952 463h1v1h-1zM952 480h1v1h-1zM952 496h1v1h-1zM952 513h1v1h-1zM952 530h1v1h-1zM952 546h1v1h-1zM952 563h1v1h-1zM952 580h1v1h-1zM952 613h1v1h-1zM952 645h1v1h-1zM952 663h1v1h-1zM952 681h1v1h-1zM952 699h1v1h-1zM952 717h1v1h-1zM952 735h1v1h-1zM952 753h1v1h-1zM952 771h1v1h-1zM952 627h1v1h-1zM952 814h1v1h-1zM952 830h1v1h-1zM952 845h1v1h-1zM952 861h1v1h-1zM952 876h1v1h-1zM952 892h1v1h-1zM952 907h1v1h-1zM952 938h1v1h-1zM952 954h1v1h-1zM986 296h1v1h-1zM986 313h1v1h-1zM986 330h1v1h-1zM986 346h1v1h-1zM986 363h1v1h-1zM986 380h1v1h-1zM986 397h1v1h-1zM986 413h1v1h-1zM986 447h1v1h-1zM986 463h1v1h-1zM986 480h1v1h-1zM986 496h1v1h-1zM986 513h1v1h-1zM986 530h1v1h-1zM986 546h1v1h-1zM986 563h1v1h-1zM986 580h1v1h-1zM986 613h1v1h-1zM986 645h1v1h-1zM986 663h1v1h-1zM986 681h1v1h-1zM986 699h1v1h-1zM986 717h1v1h-1zM986 735h1v1h-1zM986 753h1v1h-1zM986 771h1v1h-1zM986 627h1v1h-1zM986 814h1v1h-1zM986 830h1v1h-1zM986 845h1v1h-1zM986 861h1v1h-1zM986 876h1v1h-1zM986 892h1v1h-1zM986 907h1v1h-1zM986 938h1v1h-1zM986 954h1v1h-1zM1020 296h1v1h-1zM1020 313h1v1h-1zM1020 330h1v1h-1zM1020 346h1v1h-1zM1020 363h1v1h-1zM1020 380h1v1h-1zM1020 397h1v1h-1zM1020 413h1v1h-1zM1020 447h1v1h-1zM1020 463h1v1h-1zM1020 480h1v1h-1zM1020 496h1v1h-1zM1020 513h1v1h-1zM1020 530h1v1h-1zM1020 546h1v1h-1zM1020 563h1v1h-1zM1020 580h1v1h-1zM1020 613h1v1h-1zM1020 645h1v1h-1zM1020 663h1v1h-1zM1020 681h1v1h-1zM1020 699h1v1h-1zM1020 717h1v1h-1zM1020 735h1v1h-1zM1020 753h1v1h-1zM1020 771h1v1h-1zM1020 627h1v1h-1zM1020 814h1v1h-1zM1020 830h1v1h-1zM1020 845h1v1h-1zM1020 861h1v1h-1zM1020 876h1v1h-1zM1020 892h1v1h-1zM1020 907h1v1h-1zM1020 938h1v1h-1zM1020 954h1v1h-1zM1054 296h1v1h-1zM1054 313h1v1h-1zM1054 330h1v1h-1zM1054 346h1v1h-1zM1054 363h1v1h-1zM1054 380h1v1h-1zM1054 397h1v1h-1zM1054 413h1v1h-1zM1054 447h1v1h-1zM1054 463h1v1h-1zM1054 480h1v1h-1zM1054 496h1v1h-1zM1054 513h1v1h-1zM1054 530h1v1h-1zM1054 546h1v1h-1zM1054 563h1v1h-1zM1054 580h1v1h-1zM1054 613h1v1h-1zM1054 645h1v1h-1zM1054 663h1v1h-1zM1054 681h1v1h-1zM1054 699h1v1h-1zM1054 717h1v1h-1zM1054 735h1v1h-1zM1054 753h1v1h-1zM1054 771h1v1h-1zM1054 627h1v1h-1zM1054 814h1v1h-1zM1054 830h1v1h-1zM1054 845h1v1h-1zM1054 861h1v1h-1zM1054 876h1v1h-1zM1054 892h1v1h-1zM1054 907h1v1h-1zM1054 938h1v1h-1zM1054 954h1v1h-1zM1088 296h1v1h-1zM1088 313h1v1h-1zM1088 330h1v1h-1zM1088 346h1v1h-1zM1088 363h1v1h-1zM1088 380h1v1h-1zM1088 397h1v1h-1zM1088 413h1v1h-1zM1088 447h1v1h-1zM1088 463h1v1h-1zM1088 480h1v1h-1zM1088 496h1v1h-1zM1088 513h1v1h-1zM1088 530h1v1h-1zM1088 546h1v1h-1zM1088 563h1v1h-1zM1088 580h1v1h-1zM1088 613h1v1h-1zM1088 645h1v1h-1zM1088 663h1v1h-1zM1088 681h1v1h-1zM1088 699h1v1h-1zM1088 717h1v1h-1zM1088 735h1v1h-1zM1088 753h1v1h-1zM1088 771h1v1h-1zM1088 627h1v1h-1zM1088 814h1v1h-1zM1088 830h1v1h-1zM1088 845h1v1h-1zM1088 861h1v1h-1zM1088 876h1v1h-1zM1088 892h1v1h-1zM1088 907h1v1h-1zM1088 938h1v1h-1zM1088 954h1v1h-1zM1122 296h1v1h-1zM1122 313h1v1h-1zM1122 330h1v1h-1zM1122 346h1v1h-1zM1122 363h1v1h-1zM1122 380h1v1h-1zM1122 397h1v1h-1zM1122 413h1v1h-1zM1122 447h1v1h-1zM1122 463h1v1h-1zM1122 480h1v1h-1zM1122 496h1v1h-1zM1122 513h1v1h-1zM1122 530h1v1h-1zM1122 546h1v1h-1zM1122 563h1v1h-1zM1122 580h1v1h-1zM1122 613h1v1h-1zM1122 645h1v1h-1zM1122 663h1v1h-1zM1122 681h1v1h-1zM1122 699h1v1h-1zM1122 717h1v1h-1zM1122 735h1v1h-1zM1122 753h1v1h-1zM1122 771h1v1h-1zM1122 627h1v1h-1zM1122 814h1v1h-1zM1122 830h1v1h-1zM1122 845h1v1h-1zM1122 861h1v1h-1zM1122 876h1v1h-1zM1122 892h1v1h-1zM1122 907h1v1h-1zM1122 938h1v1h-1zM1122 954h1v1h-1zM1156 296h1v1h-1zM1156 313h1v1h-1zM1156 330h1v1h-1zM1156 346h1v1h-1zM1156 363h1v1h-1zM1156 380h1v1h-1zM1156 397h1v1h-1zM1156 413h1v1h-1zM1156 447h1v1h-1zM1156 463h1v1h-1zM1156 480h1v1h-1zM1156 496h1v1h-1zM1156 513h1v1h-1zM1156 530h1v1h-1zM1156 546h1v1h-1zM1156 563h1v1h-1zM1156 580h1v1h-1zM1156 613h1v1h-1zM1156 645h1v1h-1zM1156 663h1v1h-1zM1156 681h1v1h-1zM1156 699h1v1h-1zM1156 717h1v1h-1zM1156 735h1v1h-1zM1156 753h1v1h-1zM1156 771h1v1h-1zM1156 627h1v1h-1zM1156 814h1v1h-1zM1156 830h1v1h-1zM1156 845h1v1h-1zM1156 861h1v1h-1zM1156 876h1v1h-1zM1156 892h1v1h-1zM1156 907h1v1h-1zM1156 938h1v1h-1zM1156 954h1v1h-1zM1190 296h1v1h-1zM1190 313h1v1h-1zM1190 330h1v1h-1zM1190 346h1v1h-1zM1190 363h1v1h-1zM1190 380h1v1h-1zM1190 397h1v1h-1zM1190 413h1v1h-1zM1190 447h1v1h-1zM1190 463h1v1h-1zM1190 480h1v1h-1zM1190 496h1v1h-1zM1190 513h1v1h-1zM1190 530h1v1h-1zM1190 546h1v1h-1zM1190 563h1v1h-1zM1190 580h1v1h-1zM1190 613h1v1h-1zM1190 645h1v1h-1zM1190 663h1v1h-1zM1190 681h1v1h-1zM1190 699h1v1h-1zM1190 717h1v1h-1zM1190 735h1v1h-1zM1190 753h1v1h-1zM1190 771h1v1h-1zM1190 627h1v1h-1zM1190 814h1v1h-1zM1190 830h1v1h-1zM1190 845h1v1h-1zM1190 861h1v1h-1zM1190 876h1v1h-1zM1190 892h1v1h-1zM1190 907h1v1h-1zM1190 938h1v1h-1zM1190 954h1v1h-1zM1223 296h1v1h-1zM1223 313h1v1h-1zM1223 330h1v1h-1zM1223 346h1v1h-1zM1223 363h1v1h-1zM1223 380h1v1h-1zM1223 397h1v1h-1zM1223 413h1v1h-1zM1223 447h1v1h-1zM1223 463h1v1h-1zM1223 480h1v1h-1zM1223 496h1v1h-1zM1223 513h1v1h-1zM1223 530h1v1h-1zM1223 546h1v1h-1zM1223 563h1v1h-1zM1223 580h1v1h-1zM1223 613h1v1h-1zM1223 645h1v1h-1zM1223 663h1v1h-1zM1223 681h1v1h-1zM1223 699h1v1h-1zM1223 717h1v1h-1zM1223 735h1v1h-1zM1223 753h1v1h-1zM1223 771h1v1h-1zM1223 627h1v1h-1zM1223 814h1v1h-1zM1223 830h1v1h-1zM1223 845h1v1h-1zM1223 861h1v1h-1zM1223 876h1v1h-1zM1223 892h1v1h-1zM1223 907h1v1h-1zM1223 938h1v1h-1zM1223 954h1v1h-1zM1257 296h1v1h-1zM1257 313h1v1h-1zM1257 330h1v1h-1zM1257 346h1v1h-1zM1257 363h1v1h-1zM1257 380h1v1h-1zM1257 397h1v1h-1zM1257 413h1v1h-1zM1257 447h1v1h-1zM1257 463h1v1h-1zM1257 480h1v1h-1zM1257 496h1v1h-1zM1257 513h1v1h-1zM1257 530h1v1h-1zM1257 546h1v1h-1zM1257 563h1v1h-1zM1257 580h1v1h-1zM1257 613h1v1h-1zM1257 645h1v1h-1zM1257 663h1v1h-1zM1257 681h1v1h-1zM1257 699h1v1h-1zM1257 717h1v1h-1zM1257 735h1v1h-1zM1257 753h1v1h-1zM1257 771h1v1h-1zM1257 627h1v1h-1zM1257 814h1v1h-1zM1257 830h1v1h-1zM1257 845h1v1h-1zM1257 861h1v1h-1zM1257 876h1v1h-1zM1257 892h1v1h-1zM1257 907h1v1h-1zM1257 938h1v1h-1zM1257 954h1v1h-1zM1291 296h1v1h-1zM1291 313h1v1h-1zM1291 330h1v1h-1zM1291 346h1v1h-1zM1291 363h1v1h-1zM1291 380h1v1h-1zM1291 397h1v1h-1zM1291 413h1v1h-1zM1291 447h1v1h-1zM1291 463h1v1h-1zM1291 480h1v1h-1zM1291 496h1v1h-1zM1291 513h1v1h-1zM1291 530h1v1h-1zM1291 546h1v1h-1zM1291 563h1v1h-1zM1291 580h1v1h-1zM1291 613h1v1h-1zM1291 645h1v1h-1zM1291 663h1v1h-1zM1291 681h1v1h-1zM1291 699h1v1h-1zM1291 717h1v1h-1zM1291 735h1v1h-1zM1291 753h1v1h-1zM1291 771h1v1h-1zM1291 627h1v1h-1zM1291 814h1v1h-1zM1291 830h1v1h-1zM1291 845h1v1h-1zM1291 861h1v1h-1zM1291 876h1v1h-1zM1291 892h1v1h-1zM1291 907h1v1h-1zM1291 938h1v1h-1zM1291 954h1v1h-1zM1325 296h1v1h-1zM1325 313h1v1h-1zM1325 330h1v1h-1zM1325 346h1v1h-1zM1325 363h1v1h-1zM1325 380h1v1h-1zM1325 397h1v1h-1zM1325 413h1v1h-1zM1325 447h1v1h-1zM1325 463h1v1h-1zM1325 480h1v1h-1zM1325 496h1v1h-1zM1325 513h1v1h-1zM1325 530h1v1h-1zM1325 546h1v1h-1zM1325 563h1v1h-1zM1325 580h1v1h-1zM1325 613h1v1h-1zM1325 645h1v1h-1zM1325 663h1v1h-1zM1325 681h1v1h-1zM1325 699h1v1h-1zM1325 717h1v1h-1zM1325 735h1v1h-1zM1325 753h1v1h-1zM1325 771h1v1h-1zM1325 627h1v1h-1zM1325 814h1v1h-1zM1325 830h1v1h-1zM1325 845h1v1h-1zM1325 861h1v1h-1zM1325 876h1v1h-1zM1325 892h1v1h-1zM1325 907h1v1h-1zM1325 938h1v1h-1zM1325 954h1v1h-1zM1359 296h1v1h-1zM1359 313h1v1h-1zM1359 330h1v1h-1zM1359 346h1v1h-1zM1359 363h1v1h-1zM1359 380h1v1h-1zM1359 397h1v1h-1zM1359 413h1v1h-1zM1359 447h1v1h-1zM1359 463h1v1h-1zM1359 480h1v1h-1zM1359 496h1v1h-1zM1359 513h1v1h-1zM1359 530h1v1h-1zM1359 546h1v1h-1zM1359 563h1v1h-1zM1359 580h1v1h-1zM1359 613h1v1h-1zM1359 645h1v1h-1zM1359 663h1v1h-1zM1359 681h1v1h-1zM1359 699h1v1h-1zM1359 717h1v1h-1zM1359 735h1v1h-1zM1359 753h1v1h-1zM1359 771h1v1h-1zM1359 627h1v1h-1zM1359 814h1v1h-1zM1359 830h1v1h-1zM1359 845h1v1h-1zM1359 861h1v1h-1zM1359 876h1v1h-1zM1359 892h1v1h-1zM1359 907h1v1h-1zM1359 938h1v1h-1zM1359 954h1v1h-1zM1393 296h1v1h-1zM1393 313h1v1h-1zM1393 330h1v1h-1zM1393 346h1v1h-1zM1393 363h1v1h-1zM1393 380h1v1h-1zM1393 397h1v1h-1zM1393 413h1v1h-1zM1393 447h1v1h-1zM1393 463h1v1h-1zM1393 480h1v1h-1zM1393 496h1v1h-1zM1393 513h1v1h-1zM1393 530h1v1h-1zM1393 546h1v1h-1zM1393 563h1v1h-1zM1393 580h1v1h-1zM1393 613h1v1h-1zM1393 645h1v1h-1zM1393 663h1v1h-1zM1393 681h1v1h-1zM1393 699h1v1h-1zM1393 717h1v1h-1zM1393 735h1v1h-1zM1393 753h1v1h-1zM1393 771h1v1h-1zM1393 627h1v1h-1zM1393 814h1v1h-1zM1393 830h1v1h-1zM1393 845h1v1h-1zM1393 861h1v1h-1zM1393 876h1v1h-1zM1393 892h1v1h-1zM1393 907h1v1h-1zM1393 938h1v1h-1zM1393 954h1v1h-1zM1427 296h1v1h-1zM1427 313h1v1h-1zM1427 330h1v1h-1zM1427 346h1v1h-1zM1427 363h1v1h-1zM1427 380h1v1h-1zM1427 397h1v1h-1zM1427 413h1v1h-1zM1427 447h1v1h-1zM1427 463h1v1h-1zM1427 480h1v1h-1zM1427 496h1v1h-1zM1427 513h1v1h-1zM1427 530h1v1h-1zM1427 546h1v1h-1zM1427 563h1v1h-1zM1427 580h1v1h-1zM1427 613h1v1h-1zM1427 645h1v1h-1zM1427 663h1v1h-1zM1427 681h1v1h-1zM1427 699h1v1h-1zM1427 717h1v1h-1zM1427 735h1v1h-1zM1427 753h1v1h-1zM1427 771h1v1h-1zM1427 627h1v1h-1zM1427 814h1v1h-1zM1427 830h1v1h-1zM1427 845h1v1h-1zM1427 861h1v1h-1zM1427 876h1v1h-1zM1427 892h1v1h-1zM1427 907h1v1h-1zM1427 938h1v1h-1zM1427 954h1v1h-1zM1461 296h1v1h-1zM1461 313h1v1h-1zM1461 330h1v1h-1zM1461 346h1v1h-1zM1461 363h1v1h-1zM1461 380h1v1h-1zM1461 397h1v1h-1zM1461 413h1v1h-1zM1461 447h1v1h-1zM1461 463h1v1h-1zM1461 480h1v1h-1zM1461 496h1v1h-1zM1461 513h1v1h-1zM1461 530h1v1h-1zM1461 546h1v1h-1zM1461 563h1v1h-1zM1461 580h1v1h-1zM1461 613h1v1h-1zM1461 645h1v1h-1zM1461 663h1v1h-1zM1461 681h1v1h-1zM1461 699h1v1h-1zM1461 717h1v1h-1zM1461 735h1v1h-1zM1461 753h1v1h-1zM1461 771h1v1h-1zM1461 627h1v1h-1zM1461 814h1v1h-1zM1461 830h1v1h-1zM1461 845h1v1h-1zM1461 861h1v1h-1zM1461 876h1v1h-1zM1461 892h1v1h-1zM1461 907h1v1h-1zM1461 938h1v1h-1zM1461 954h1v1h-1zM1495 296h1v1h-1zM1495 313h1v1h-1zM1495 330h1v1h-1zM1495 346h1v1h-1zM1495 363h1v1h-1zM1495 380h1v1h-1zM1495 397h1v1h-1zM1495 413h1v1h-1zM1495 447h1v1h-1zM1495 463h1v1h-1zM1495 480h1v1h-1zM1495 496h1v1h-1zM1495 513h1v1h-1zM1495 530h1v1h-1zM1495 546h1v1h-1zM1495 563h1v1h-1zM1495 580h1v1h-1zM1495 613h1v1h-1zM1495 645h1v1h-1zM1495 663h1v1h-1zM1495 681h1v1h-1zM1495 699h1v1h-1zM1495 717h1v1h-1zM1495 735h1v1h-1zM1495 753h1v1h-1zM1495 771h1v1h-1zM1495 627h1v1h-1zM1495 814h1v1h-1zM1495 830h1v1h-1zM1495 845h1v1h-1zM1495 861h1v1h-1zM1495 876h1v1h-1zM1495 892h1v1h-1zM1495 907h1v1h-1zM1495 938h1v1h-1zM1495 954h1v1h-1zM1529 296h1v1h-1zM1529 313h1v1h-1zM1529 330h1v1h-1zM1529 346h1v1h-1zM1529 363h1v1h-1zM1529 380h1v1h-1zM1529 397h1v1h-1zM1529 413h1v1h-1zM1529 447h1v1h-1zM1529 463h1v1h-1zM1529 480h1v1h-1zM1529 496h1v1h-1zM1529 513h1v1h-1zM1529 530h1v1h-1zM1529 546h1v1h-1zM1529 563h1v1h-1zM1529 580h1v1h-1zM1529 613h1v1h-1zM1529 645h1v1h-1zM1529 663h1v1h-1zM1529 681h1v1h-1zM1529 699h1v1h-1zM1529 717h1v1h-1zM1529 735h1v1h-1zM1529 753h1v1h-1zM1529 771h1v1h-1zM1529 627h1v1h-1zM1529 814h1v1h-1zM1529 830h1v1h-1zM1529 845h1v1h-1zM1529 861h1v1h-1zM1529 876h1v1h-1zM1529 892h1v1h-1zM1529 907h1v1h-1zM1529 938h1v1h-1zM1529 954h1v1h-1zM1563 296h1v1h-1zM1563 313h1v1h-1zM1563 330h1v1h-1zM1563 346h1v1h-1zM1563 363h1v1h-1zM1563 380h1v1h-1zM1563 397h1v1h-1zM1563 413h1v1h-1zM1563 447h1v1h-1zM1563 463h1v1h-1zM1563 480h1v1h-1zM1563 496h1v1h-1zM1563 513h1v1h-1zM1563 530h1v1h-1zM1563 546h1v1h-1zM1563 563h1v1h-1zM1563 580h1v1h-1zM1563 613h1v1h-1zM1563 645h1v1h-1zM1563 663h1v1h-1zM1563 681h1v1h-1zM1563 699h1v1h-1zM1563 717h1v1h-1zM1563 735h1v1h-1zM1563 753h1v1h-1zM1563 771h1v1h-1zM1563 627h1v1h-1zM1563 814h1v1h-1zM1563 830h1v1h-1zM1563 845h1v1h-1zM1563 861h1v1h-1zM1563 876h1v1h-1zM1563 892h1v1h-1zM1563 907h1v1h-1zM1563 938h1v1h-1zM1563 954h1v1h-1zM1597 296h1v1h-1zM1597 313h1v1h-1zM1597 330h1v1h-1zM1597 346h1v1h-1zM1597 363h1v1h-1zM1597 380h1v1h-1zM1597 397h1v1h-1zM1597 413h1v1h-1zM1597 447h1v1h-1zM1597 463h1v1h-1zM1597 480h1v1h-1zM1597 496h1v1h-1zM1597 513h1v1h-1zM1597 530h1v1h-1zM1597 546h1v1h-1zM1597 563h1v1h-1zM1597 580h1v1h-1zM1597 613h1v1h-1zM1597 645h1v1h-1zM1597 663h1v1h-1zM1597 681h1v1h-1zM1597 699h1v1h-1zM1597 717h1v1h-1zM1597 735h1v1h-1zM1597 753h1v1h-1zM1597 771h1v1h-1zM1597 627h1v1h-1zM1597 814h1v1h-1zM1597 830h1v1h-1zM1597 845h1v1h-1zM1597 861h1v1h-1zM1597 876h1v1h-1zM1597 892h1v1h-1zM1597 907h1v1h-1zM1597 938h1v1h-1zM1597 954h1v1h-1zM1631 296h1v1h-1zM1631 313h1v1h-1zM1631 330h1v1h-1zM1631 346h1v1h-1zM1631 363h1v1h-1zM1631 380h1v1h-1zM1631 397h1v1h-1zM1631 413h1v1h-1zM1631 447h1v1h-1zM1631 463h1v1h-1zM1631 480h1v1h-1zM1631 496h1v1h-1zM1631 513h1v1h-1zM1631 530h1v1h-1zM1631 546h1v1h-1zM1631 563h1v1h-1zM1631 580h1v1h-1zM1631 613h1v1h-1zM1631 645h1v1h-1zM1631 663h1v1h-1zM1631 681h1v1h-1zM1631 699h1v1h-1zM1631 717h1v1h-1zM1631 735h1v1h-1zM1631 753h1v1h-1zM1631 771h1v1h-1zM1631 627h1v1h-1zM1631 814h1v1h-1zM1631 830h1v1h-1zM1631 845h1v1h-1zM1631 861h1v1h-1zM1631 876h1v1h-1zM1631 892h1v1h-1zM1631 907h1v1h-1zM1631 938h1v1h-1zM1631 954h1v1h-1zM1665 296h1v1h-1zM1665 313h1v1h-1zM1665 330h1v1h-1zM1665 346h1v1h-1zM1665 363h1v1h-1zM1665 380h1v1h-1zM1665 397h1v1h-1zM1665 413h1v1h-1zM1665 447h1v1h-1zM1665 463h1v1h-1zM1665 480h1v1h-1zM1665 496h1v1h-1zM1665 513h1v1h-1zM1665 530h1v1h-1zM1665 546h1v1h-1zM1665 563h1v1h-1zM1665 771h1v1h-1zM1665 627h1v1h-1zM1665 814h1v1h-1zM1665 830h1v1h-1zM1665 845h1v1h-1zM1665 861h1v1h-1zM1665 876h1v1h-1zM1665 892h1v1h-1zM1665 907h1v1h-1zM1665 938h1v1h-1zM1699 296h1v1h-1zM1699 330h1v1h-1zM1699 363h1v1h-1zM1699 397h1v1h-1zM1699 463h1v1h-1zM1699 496h1v1h-1zM1699 530h1v1h-1zM1699 563h1v1h-1zM1699 627h1v1h-1zM1699 814h1v1h-1zM1699 845h1v1h-1zM1699 876h1v1h-1zM1699 907h1v1h-1zM1699 938h1v1h-1z" fill="#e4e4e4"/><path d="M103.5 291V964M273.5 291V964M442.5 291V964M612.5 291V964M782.5 291V964M952.5 291V964M1122.5 291V964M1291.5 291V964M1461.5 291V964M1631.5 291V964" stroke="#d0d0d0" stroke-width="1" stroke-dasharray="1 2"/><rect x="14" y="458" width="1696" height="2" fill="#6e6e6e"/><rect x="14" y="627" width="1696" height="2" fill="#6e6e6e"/><rect x="14" y="809" width="1696" height="2" fill="#6e6e6e"/><path d="M60.9 429.5H1697" stroke="#d8d8d8" stroke-width="1.2" stroke-dasharray="5 5"/><path d="M60.9 596.5H1697" stroke="#d8d8d8" stroke-width="1.2" stroke-dasharray="5 5"/><path d="M60.9 789.5H1710" stroke="#d8d8d8" stroke-width="1.2" stroke-dasharray="5 5"/><path d="M60.9 923.5H1676" stroke="#d8d8d8" stroke-width="1.2" stroke-dasharray="5 5"/><path d="M14 347L14 347.0L15 346.2L16 347.8L17 346.6L18 347.0L19 347.0L20 347.0L21 347.0L22 347.0L23 346.6L24 347.0L25 346.6L26 347.8L27 346.6L28 347.8L29 346.6L30 347.0L31 347.0L32 346.2L33 347.8L34 346.6L35 347.0L36 346.2L37 346.6L38 346.2L39 347.0L40 347.0L41 346.6L42 346.6L43 347.0L44 347.4L45 346.2L46 346.2L47 347.0L48 347.0L49 347.4L50 347.0L51 347.4L52 347.0L53 346.2L54 347.0L55 347.0L56 346.6L57 347.0L58 346.2L59 347.8L60 347.0L61 346.2L62 347.0L63 347.0L64 346.6L65 347.8L66 346.2L67 347.4L68 347.8L69 346.6L70 346.6L71 346.2L72 347.4L73 347.8L74 347.4L75 347.4L76 346.6L77 347.0L78 346.2L79 346.6L80 347.8L81 346.6L82 346.6L83 347.0L84 347.4L85 347.4L86 347.0L87 346.2L88 346.2L89 347.4L90 347.0L91 347.4L92 347.8L93 347.4L94 346.2L95 347.4L96 347.0L97 346.2L98 346.6L99 346.6L100 347.0L101 347.0L102 347.0L103 347.0L104 346.2L105 346.6L106 346.2L107 347.0L108 347.0L109 346.6L110 347.8L111 347.0L112 346.6L113 347.0L114 347.4L115 346.6L116 347.0L117 347.8L118 346.2L119 347.4L120 347.4L121 347.0L122 347.0L123 347.0L124 347.8L125 347.0L126 347.0L127 346.2L128 346.2L129 347.8L130 347.0L131 347.0L132 346.6L133 347.4L134 347.4L135 346.6L136 347.4L137 347.0L138 347.4L139 347.0L140 346.6L141 346.2L142 347.0L143 347.8L144 347.0L145 346.2L146 347.0L147 347.0L148 346.6L149 347.8L150 346.2L151 346.2L152 346.2L153 346.2L154 346.6L155 347.0L156 346.2L157 347.0L158 347.0L159 347.4L160 347.0L161 347.0L162 347.8L163 347.0L164 347.4L165 347.0L166 347.8L167 346.6L168 346.2L169 347.4L170 347.4L171 347.0L172 346.2L173 347.0L174 347.0L175 347.4L176 346.6L177 346.6L178 347.0L179 347.0L180 347.0L181 347.4L182 347.4L183 347.4L184 347.4L185 347.0L186 347.0L187 346.2L188 347.4L189 347.8L190 347.0L191 346.2L192 347.0L193 347.8L194 347.4L195 347.8L196 347.0L197 346.6L198 347.0L199 347.8L200 346.2L201 347.0L202 346.6L203 347.0L204 346.2L205 347.0L206 346.6L207 347.0L208 346.2L209 346.6L210 347.8L211 346.6L212 347.8L213 347.4L214 347.0L215 347.0L216 347.0L217 347.0L218 346.6L219 346.6L220 347.8L221 347.0L222 346.6L223 347.0L224 347.8L225 346.2L226 346.2L227 347.0L228 346.6L229 347.0L230 347.8L231 347.0L232 347.8L233 346.2L234 347.0L235 347.4L236 347.0L237 346.6L238 347.4L239 346.6L240 346.2L241 347.8L242 346.6L243 347.8L244 346.6L245 347.0L246 347.8L247 347.4L248 346.6L249 347.8L250 347.4L251 346.6L252 347.8L253 347.4L254 347.0L255 347.0L256 347.4L257 347.4L258 346.6L259 347.8L260 347.0L261 347.8L262 347.4L263 346.2L264 346.6L265 347.0L266 347.0L267 347.0L268 347.8L269 346.6L270 347.4L271 347.4L272 347.4L273 346.6L274 347.8L275 347.0L276 347.8L277 347.0L278 347.4L279 346.6L280 347.0L281 347.0L282 347.0L283 347.4L284 346.6L285 346.2L286 347.8L287 346.2L288 346.2L289 347.4L290 347.4L291 346.2L292 347.4L293 347.8L294 347.4L295 347.8L296 346.6L297 347.0L298 346.2L299 346.6L300 347.4L301 346.2L302 346.2L303 347.4L304 346.6L305 347.0L306 346.2L307 347.8L308 347.0L309 347.4L310 346.6L311 346.6L312 346.6L313 347.0L314 347.8L315 347.0L316 347.4L317 346.2L318 346.6L319 347.0L320 347.0L321 346.2L322 346.2L323 346.2L324 347.4L325 347.8L326 346.2L327 346.2L328 346.6L329 347.8L330 347.0L331 347.8L332 347.0L333 347.0L334 347.8L335 346.2L336 346.6L337 347.0L338 347.4L339 347.0L340 347.4L341 346.2L342 346.2L343 347.8L344 347.0L345 346.6L346 347.0L347 346.2L348 347.8L349 347.4L350 347.0L351 347.4L352 347.4L353 346.6L354 347.0L355 347.8L356 347.4L357 347.0L358 347.0L359 347.0L360 346.6L361 346.6L362 347.0L363 347.0L364 347.8L365 347.4L366 346.6L367 346.6L368 347.8L369 347.0L370 347.0L371 346.2L372 346.6L373 346.2L374 346.6L375 347.0L376 347.0L377 347.0L378 347.4L379 347.0L380 347.4L381 347.0L382 346.2L383 347.4L384 347.8L385 347.8L386 347.0L387 347.0L388 346.6L389 346.6L390 347.0L391 347.0L392 347.8L393 347.8L394 347.0L395 346.6L396 347.4L397 346.6L398 347.0L399 346.6L400 347.0L401 347.4L402 346.6L403 346.6L404 347.8L405 347.8L406 346.6L407 347.0L408 347.4L409 346.2L410 347.0L411 347.0L412 347.0L413 347.8L414 346.2L415 347.0L416 347.0L417 347.0L418 347.4L419 347.4L420 346.6L421 347.0L422 347.0L423 346.2L424 347.0L425 347.0L426 346.6L427 347.4L428 347.4L429 347.4L430 347.4L431 347.8L432 346.6L433 347.8L434 346.6L435 347.0L436 347.8L437 346.2L438 347.8L439 347.0L440 347.0L441 347.0L442 347.8L443 347.8L444 347.0L445 346.6L446 346.2L447 346.6L448 347.0L449 346.6L450 347.4L451 346.6L452 347.0L453 346.6L454 347.8L455 347.0L456 347.0L457 347.0L458 346.6L459 346.2L460 346.6L461 347.8L462 347.4L463 346.6L464 346.6L465 347.0L466 347.4L467 347.4L468 346.6L469 347.0L470 347.8L471 347.4L472 347.0L473 346.2L474 346.2L475 346.6L476 347.0L477 346.2L478 347.8L479 347.4L480 346.2L481 347.4L482 347.0L483 346.6L484 347.0L485 347.8L486 347.8L487 347.4L488 346.6L489 347.4L490 346.6L491 347.8L492 347.0L493 347.0L494 346.2L495 347.0L496 346.2L497 347.8L498 346.6L499 347.8L500 347.0L501 346.6L502 347.0L503 347.4L504 347.8L505 346.2L506 346.2L507 347.4L508 346.2L509 346.6L510 346.6L511 346.6L512 346.2L513 347.0L514 347.0L515 346.2L516 347.0L517 347.0L518 346.6L519 347.0L520 346.2L521 347.0L522 347.0L523 346.6L524 347.0L525 346.6L526 347.8L527 347.0L528 346.2L529 346.6L530 346.2L531 346.2L532 347.0L533 347.8L534 346.2L535 347.0L536 347.8L537 347.0L538 346.2L539 346.6L540 346.6L541 347.0L542 346.2L543 347.0L544 347.0L545 347.0L546 347.8L547 347.4L548 347.0L549 346.6L550 347.0L551 347.0L552 346.2L553 347.4L554 347.4L555 347.8L556 347.0L557 347.8L558 347.0L559 347.4L560 347.4L561 347.0L562 347.0L563 346.6L564 347.0L565 347.0L566 346.6L567 347.8L568 346.2L569 347.4L570 346.6L571 347.0L572 347.4L573 346.6L574 347.4L575 347.4L576 346.2L577 346.2L578 347.8L579 347.0L580 347.0L581 346.2L582 346.2L583 347.0L584 347.8L585 347.0L586 347.8L587 346.6L588 346.6L589 347.0L590 346.6L591 347.0L592 347.0L593 347.8L594 347.8L595 347.8L596 346.6L597 346.6L598 347.8L599 347.0L600 347.8L601 346.2L602 347.8L603 347.0L604 346.2L605 347.0L606 347.0L607 347.8L608 347.0L609 347.4L610 347.4L611 346.6L612 347.0L613 346.2L614 346.6L615 346.2L616 347.8L617 346.2L618 347.0L619 346.2L620 347.0L621 347.0L622 347.4L623 347.8L624 346.6L625 346.2L626 346.2L627 347.8L628 347.8L629 346.2L630 347.0L631 346.2L632 347.8L633 347.0L634 347.8L635 346.6L636 347.4L637 347.0L638 347.8L639 347.4L640 347.8L641 347.0L642 346.2L643 346.2L644 347.4L645 347.0L646 347.0L647 347.0L648 347.0L649 347.0L650 346.2L651 347.0L652 346.6L653 347.0L654 346.6L655 347.0L656 347.0L657 347.8L658 347.8L659 347.0L660 347.0L661 347.4L662 347.4L663 347.0L664 346.2L665 347.4L666 346.2L667 347.8L668 347.0L669 347.0L670 346.6L671 346.6L672 347.0L673 347.0L674 347.4L675 347.0L676 347.0L677 346.6L678 347.4L679 347.4L680 346.6L681 347.0L682 346.6L683 347.0L684 346.6L685 346.2L686 347.4L687 346.2L688 347.0L689 346.2L690 346.2L691 347.4L692 347.0L693 347.8L694 347.0L695 347.4L696 347.0L697 347.8L698 346.2L699 346.2L700 346.2L701 347.0L702 347.0L703 347.4L704 347.8L705 346.2L706 347.0L707 347.0L708 346.6L709 347.0L710 346.2L711 346.2L712 346.2L713 346.6L714 347.4L715 346.6L716 347.8L717 346.2L718 346.2L719 347.4L720 346.6L721 347.4L722 347.4L723 346.2L724 346.6L725 347.0L726 347.0L727 347.0L728 347.0L729 347.4L730 346.6L731 347.0L732 346.2L733 347.4L734 347.8L735 346.2L736 347.4L737 347.8L738 347.0L739 347.0L740 347.4L741 346.2L742 346.2L743 346.2L744 347.0L745 346.2L746 347.4L747 347.8L748 346.6L749 347.4L750 347.8L751 347.0L752 347.8L753 347.0L754 347.0L755 346.6L756 347.4L757 347.0L758 346.2L759 347.0L760 347.0L761 347.4L762 347.0L763 347.0L764 347.4L765 347.0L766 347.8L767 347.8L768 347.4L769 346.2L770 346.2L771 347.4L772 347.0L773 347.0L774 346.6L775 347.0L776 346.2L777 347.0L778 347.4L779 347.4L780 347.0L781 347.8L782 347.0L783 347.0L784 346.6L785 347.0L786 347.4L787 347.0L788 347.4L789 347.4L790 346.6L791 347.0L792 347.0L793 347.0L794 347.4L795 346.6L796 346.6L797 347.4L798 347.8L799 346.6L800 347.4L801 346.2L802 346.2L803 347.0L804 347.8L805 346.6L806 347.0L807 347.0L808 347.8L809 347.4L810 346.6L811 347.0L812 347.0L813 346.6L814 347.8L815 347.8L816 346.2L817 347.0L818 347.8L819 346.2L820 346.6L821 347.0L822 347.8L823 347.8L824 347.4L825 347.8L826 347.0L827 346.2L828 346.6L829 347.0L830 347.0L831 347.8L832 347.0L833 346.6L834 347.0L835 347.8L836 347.8L837 347.4L838 347.8L839 347.8L840 347.0L841 347.0L842 347.8L843 347.4L844 347.0L845 347.4L846 347.0L847 346.6L848 347.0L849 346.6L850 347.4L851 347.0L852 347.4L853 347.0L854 346.2L855 346.2L856 346.6L857 347.8L858 347.8L859 346.2L860 347.8L861 347.4L862 346.6L863 347.0L864 347.0L865 347.0L866 347.0L867 347.0L868 347.0L869 347.4L870 347.0L871 346.6L872 347.4L873 347.8L874 346.6L875 346.6L876 346.2L877 346.6L878 347.4L879 347.4L880 346.6L881 347.0L882 347.0L883 346.2L884 347.4L885 346.6L886 346.6L887 347.8L888 347.4L889 346.6L890 347.0L891 347.0L892 347.0L893 346.2L894 347.0L895 346.6L896 347.0L897 346.2L898 347.0L899 346.6L900 347.0L901 347.0L902 346.2L903 347.0L904 347.8L905 347.0L906 346.2L907 346.2L908 346.6L909 347.0L910 347.0L911 346.6L912 346.2L913 347.4L914 346.2L915 347.0L916 347.8L917 347.0L918 347.4L919 347.8L920 347.4L921 346.2L922 346.6L923 347.0L924 347.0L925 346.6L926 346.2L927 347.0L928 347.4L929 346.2L930 346.2L931 347.4L932 346.2L933 347.8L934 347.8L935 347.4L936 347.8L937 347.0L938 347.4L939 346.6L940 347.0L941 346.6L942 347.4L943 347.0L944 347.0L945 347.0L946 347.0L947 346.6L948 346.6L949 346.2L950 347.8L951 347.4L952 347.8L953 347.8L954 347.0L955 347.4L956 347.0L957 346.6L958 347.0L959 347.4L960 347.8L961 347.0L962 346.2L963 347.4L964 347.0L965 347.4L966 346.2L967 346.2L968 347.0L969 347.0L970 347.8L971 347.8L972 347.8L973 347.0L974 347.8L975 347.0L976 347.0L977 347.4L978 347.0L979 347.0L980 347.0L981 347.0L982 347.4L983 347.0L984 346.2L985 347.8L986 347.4L987 346.6L988 346.2L989 346.6L990 347.8L991 347.8L992 347.8L993 347.8L994 346.6L995 346.6L996 346.6L997 346.6L998 347.0L999 347.8L1000 347.0L1001 346.6L1002 347.0L1003 347.8L1004 347.0L1005 347.0L1006 346.2L1007 347.8L1008 346.6L1009 346.2L1010 346.6L1011 347.0L1012 346.2L1013 346.2L1014 347.0L1015 346.2L1016 346.2L1017 347.0L1018 347.8L1019 347.0L1020 347.4L1021 346.2L1022 347.0L1023 346.6L1024 346.6L1025 346.2L1026 347.4L1027 347.0L1028 346.6L1029 347.0L1030 347.0L1031 347.8L1032 347.0L1033 347.0L1034 347.0L1035 346.2L1036 347.8L1037 347.4L1038 346.2L1039 347.0L1040 346.2L1041 347.4L1042 347.0L1043 346.6L1044 346.6L1045 347.0L1046 346.2L1047 346.2L1048 346.2L1049 346.2L1050 347.0L1051 347.0L1052 347.8L1053 347.0L1054 347.0L1055 346.2L1056 347.4L1057 347.0L1058 347.4L1059 347.0L1060 346.2L1061 347.0L1062 347.8L1063 347.0L1064 347.0L1065 347.4L1066 346.2L1067 347.0L1068 347.4L1069 347.4L1070 347.0L1071 346.2L1072 347.0L1073 346.2L1074 347.0L1075 347.8L1076 346.2L1077 347.0L1078 347.8L1079 347.0L1080 347.4L1081 347.4L1082 346.2L1083 346.2L1084 347.8L1085 347.4L1086 347.0L1087 347.0L1088 346.2L1089 347.4L1090 347.0L1091 347.8L1092 347.4L1093 347.0L1094 347.8L1095 346.2L1096 347.0L1097 346.6L1098 347.0L1099 347.4L1100 347.0L1101 347.0L1102 346.2L1103 347.0L1104 347.8L1105 347.4L1106 347.4L1107 346.2L1108 347.0L1109 347.0L1110 347.4L1111 346.6L1112 347.4L1113 347.0L1114 347.4L1115 347.8L1116 346.2L1117 347.0L1118 347.0L1119 347.4L1120 347.8L1121 347.8L1122 347.4L1123 346.6L1124 347.4L1125 347.8L1126 347.0L1127 347.0L1128 347.8L1129 347.4L1130 346.2L1131 347.8L1132 347.0L1133 347.8L1134 346.2L1135 346.6L1136 347.0L1137 347.8L1138 347.8L1139 346.2L1140 346.6L1141 346.2L1142 347.8L1143 346.6L1144 347.0L1145 346.6L1146 347.8L1147 347.0L1148 346.6L1149 347.8L1150 347.8L1151 347.8L1152 347.4L1153 347.4L1154 347.0L1155 347.4L1156 347.4L1157 346.6L1158 346.2L1159 346.6L1160 347.0L1161 347.4L1162 347.0L1163 347.0L1164 346.6L1165 347.0L1166 346.6L1167 347.4L1168 347.0L1169 347.0L1170 346.2L1171 347.4L1172 347.0L1173 347.0L1174 346.2L1175 346.2L1176 346.6L1177 346.2L1178 347.0L1179 347.4L1180 347.8L1181 347.8L1182 346.2L1183 347.0L1184 347.0L1185 346.2L1186 346.6L1187 347.0L1188 346.6L1189 347.0L1190 347.4L1191 347.8L1192 346.2L1193 347.4L1194 346.2L1195 347.0L1196 347.4L1197 346.6L1198 347.0L1199 346.2L1200 346.6L1201 346.6L1202 347.0L1203 346.6L1204 346.2L1205 346.2L1206 347.0L1207 346.2L1208 346.6L1209 347.0L1210 347.8L1211 347.4L1212 347.0L1213 346.6L1214 346.6L1215 347.0L1216 347.8L1217 347.8L1218 347.0L1219 347.8L1220 346.6L1221 347.8L1222 347.4L1223 347.0L1224 347.0L1225 347.0L1226 347.4L1227 347.4L1228 346.6L1229 346.6L1230 347.4L1231 347.0L1232 346.6L1233 346.6L1234 347.8L1235 347.8L1236 346.2L1237 347.8L1238 346.2L1239 346.6L1240 347.0L1241 346.2L1242 347.0L1243 347.0L1244 346.2L1245 347.8L1246 347.0L1247 347.8L1248 347.0L1249 347.4L1250 346.6L1251 347.0L1252 346.2L1253 346.2L1254 347.0L1255 347.0L1256 346.6L1257 346.6L1258 346.6L1259 346.2L1260 346.2L1261 346.2L1262 347.8L1263 347.0L1264 346.2L1265 346.6L1266 346.6L1267 347.0L1268 347.8L1269 346.2L1270 347.0L1271 347.8L1272 347.0L1273 346.2L1274 346.2L1275 347.0L1276 347.0L1277 346.6L1278 346.6L1279 347.4L1280 347.0L1281 347.8L1282 347.0L1283 347.0L1284 347.4L1285 347.0L1286 347.8L1287 346.6L1288 347.0L1289 346.2L1290 347.0L1291 347.0L1292 347.0L1293 347.0L1294 347.8L1295 346.2L1296 346.6L1297 347.0L1298 347.0L1299 347.0L1300 347.0L1301 346.6L1302 347.8L1303 347.0L1304 347.0L1305 347.0L1306 347.4L1307 346.2L1308 346.2L1309 347.0L1310 346.2L1311 347.4L1312 347.0L1313 347.0L1314 347.0L1315 347.0L1316 347.0L1317 347.0L1318 346.2L1319 346.6L1320 347.4L1321 347.8L1322 347.8L1323 346.6L1324 347.4L1325 347.0L1326 346.6L1327 346.2L1328 347.0L1329 347.0L1330 347.0L1331 347.0L1332 347.8L1333 346.2L1334 347.4L1335 347.8L1336 347.8L1337 347.8L1338 346.2L1339 347.0L1340 347.8L1341 346.6L1342 347.0L1343 347.0L1344 347.4L1345 346.6L1346 347.0L1347 347.0L1348 347.0L1349 347.0L1350 347.0L1351 347.4L1352 347.0L1353 347.4L1354 347.4L1355 346.6L1356 346.6L1357 347.0L1358 347.8L1359 347.4L1360 346.2L1361 347.0L1362 347.8L1363 346.2L1364 347.0L1365 347.4L1366 347.0L1367 347.0L1368 346.6L1369 347.0L1370 346.2L1371 347.0L1372 347.0L1373 347.8L1374 346.6L1375 347.8L1376 347.8L1377 347.8L1378 346.2L1379 346.2L1380 347.8L1381 346.6L1382 347.0L1383 347.0L1384 346.6L1385 347.0L1386 347.0L1387 347.4L1388 347.8L1389 347.8L1390 347.0L1391 347.8L1392 347.0L1393 347.0L1394 347.0L1395 346.2L1396 346.6L1397 346.2L1398 347.0L1399 347.4L1400 346.2L1401 347.4L1402 347.8L1403 347.0L1404 347.0L1405 347.8L1406 347.0L1407 347.4L1408 347.0L1409 347.8L1410 346.6L1411 346.6L1412 347.8L1413 347.4L1414 347.4L1415 347.4L1416 347.0L1417 347.0L1418 347.0L1419 347.0L1420 347.0L1421 347.0L1422 347.8L1423 347.0L1424 346.2L1425 347.0L1426 347.4L1427 347.4L1428 346.6L1429 347.8L1430 346.2L1431 346.6L1432 346.2L1433 347.0L1434 347.0L1435 346.2L1436 346.6L1437 346.6L1438 347.0L1439 347.0L1440 347.0L1441 347.4L1442 347.0L1443 347.4L1444 346.2L1445 346.2L1446 347.8L1447 346.2L1448 346.6L1449 347.8L1450 346.6L1451 347.8L1452 346.2L1453 347.0L1454 346.6L1455 347.4L1456 347.8L1457 347.0L1458 347.0L1459 346.2L1460 346.6L1461 347.4L1462 347.0L1463 347.8L1464 347.0L1465 346.6L1466 346.2L1467 346.2L1468 346.2L1469 347.0L1470 347.0L1471 346.2L1472 347.8L1473 347.0L1474 347.8L1475 347.8L1476 347.0L1477 347.0L1478 347.0L1479 346.6L1480 347.0L1481 346.6L1482 347.0L1483 346.6L1484 346.6L1485 347.0L1486 347.8L1487 347.0L1488 346.6L1489 347.4L1490 347.8L1491 347.8L1492 347.0L1493 347.4L1494 346.2L1495 346.6L1496 347.0L1497 347.0L1498 347.8L1499 347.0L1500 347.4L1501 346.6L1502 347.8L1503 346.2L1504 347.4L1505 347.0L1506 347.0L1507 346.6L1508 347.4L1509 347.0L1510 346.2L1511 346.2L1512 347.0L1513 347.8L1514 347.0L1515 347.8L1516 347.8L1517 347.0L1518 347.0L1519 347.0L1520 346.6L1521 347.4L1522 347.8L1523 346.6L1524 347.0L1525 346.6L1526 347.8L1527 347.8L1528 347.0L1529 347.4L1530 347.0L1531 347.4L1532 347.0L1533 347.8L1534 347.0L1535 346.2L1536 346.2L1537 347.4L1538 346.2L1539 347.4L1540 347.4L1541 347.8L1542 347.0L1543 347.8L1544 347.8L1545 347.0L1546 347.0L1547 346.6L1548 347.0L1549 347.8L1550 347.4L1551 347.4L1552 346.6L1553 347.0L1554 346.2L1555 347.0L1556 346.6L1557 347.0L1558 347.0L1559 346.2L1560 347.8L1561 347.0L1562 347.0L1563 347.8L1564 347.8L1565 346.6L1566 347.8L1567 347.0L1568 347.8L1569 347.4L1570 347.8L1571 346.6L1572 347.0L1573 347.4L1574 347.0L1575 347.4L1576 346.6L1577 347.8L1578 346.6L1579 347.0L1580 347.0L1581 347.0L1582 346.2L1583 346.2L1584 347.0L1585 347.0L1586 347.8L1587 346.6L1588 347.4L1589 346.6L1590 346.6L1591 347.0L1592 347.8L1593 347.0L1594 346.2L1595 347.0L1596 347.4L1597 346.6L1598 346.2L1599 347.0L1600 347.0L1601 347.4L1602 347.0L1603 347.0L1604 347.8L1605 347.0L1606 347.0L1607 347.8L1608 347.8L1609 347.8L1610 347.4L1611 347.0L1612 347.0L1613 347.8L1614 347.8L1615 346.2L1616 346.6L1617 347.0L1618 346.6L1619 347.0L1620 346.6L1621 347.0L1622 347.0L1623 347.0L1624 346.2L1625 347.8L1626 347.8L1627 347.0L1628 347.0L1629 346.2L1630 347.4L1631 347.0L1632 346.6L1633 346.6L1634 347.0L1635 346.2L1636 347.8L1637 347.0L1638 347.0L1639 346.2L1640 347.4L1641 346.6L1642 347.0L1643 347.0L1644 346.2L1645 347.4L1646 347.0L1647 347.0L1648 347.0L1649 347.0L1650 347.4L1651 347.4L1652 347.8L1653 346.2L1654 347.0L1655 347.0L1656 347.4L1657 347.0L1658 347.4L1659 346.6L1660 347.0L1661 347.0L1662 347.0L1663 346.6L1664 346.6L1665 347.0L1666 347.4L1667 347.8L1668 346.2L1669 346.6L1670 346.6L1671 346.6L1672 346.2L1673 346.6L1674 347.8L1675 347.4L1676 346.6L1677 346.6L1678 347.4L1679 347.8L1680 347.0L1681 347.0L1682 347.0L1683 347.0L1684 347.8L1685 346.2L1686 346.6L1687 347.8L1688 347.8L1689 346.6L1690 347.0L1691 347.4L1692 347.0L1693 346.6L1694 346.2L1695 347.8L1696 347.0L1697 346.2L1698 346.2L1699 347.0L1700 347.0L1701 346.2L1702 347.0L1703 346.6L1704 347.4L1705 347.4L1706 346.6L1707 347.8L1708 346.2L1709 347.4L1710 347.4" stroke="#f0e030" stroke-width="2" fill="none"/><path d="M14.0 489.1L14.7 489.4L15.4 489.3L16.1 489.6L16.8 489.3L17.5 489.0L18.2 489.5L18.9 489.8L19.6 489.1L20.3 489.8L21.0 488.9L21.7 489.5L22.4 489.5L23.1 489.1L23.8 489.5L24.5 490.1L25.2 489.7L25.9 489.5L26.6 490.1L27.3 489.2L28.0 489.8L28.7 489.3L29.4 489.1L30.1 489.1L30.8 489.6L31.5 489.7L32.2 489.3L32.9 489.0L33.6 489.0L34.3 489.5L35.0 489.3L35.7 489.7L36.4 489.9L37.1 489.5L37.8 489.2L38.5 489.3L39.2 489.9L39.9 489.9L40.6 489.1L41.3 489.1L42.0 489.1L42.7 489.3L43.4 489.6L44.1 489.1L44.8 489.8L45.5 489.0L46.2 489.7L46.9 489.5L47.6 489.9L48.3 489.0L49.0 489.1L49.7 489.5L50.4 489.5L51.1 490.0L51.8 489.7L52.5 489.2L53.2 490.0L53.9 489.4L54.6 489.6L55.3 489.5L56.0 489.2L56.7 489.5L57.4 489.1L58.1 489.9L58.8 489.2L59.5 488.9L60.2 489.7L60.9 489.7L61.6 489.2L62.3 489.5L63.0 489.3L63.7 486.3L64.4 486.7L65.1 487.3L65.8 488.3L66.5 487.3L67.2 487.7L67.9 487.9L68.6 488.6L69.3 488.9L70.0 486.8L70.7 488.5L71.4 487.3L72.1 488.8L72.8 488.1L73.5 487.5L74.2 487.9L74.9 487.8L75.6 488.2L76.3 489.4L77.0 489.1L77.7 489.0L78.4 488.9L79.1 489.2L79.8 488.7L80.5 489.0L81.2 489.1L81.9 489.7L82.6 489.3L83.3 488.9L84.0 489.6L84.7 489.0L85.4 489.2L86.1 489.6L86.8 489.1L87.5 488.5L88.2 489.1L88.9 488.3L89.6 488.5L90.3 488.2L91.0 488.8L91.7 488.6L92.4 488.1L93.1 488.4L93.8 488.7L94.5 488.0L95.2 488.2L95.9 488.5L96.6 488.4L97.3 488.0L98.0 488.1L98.7 488.1L99.4 488.5L100.1 488.2L100.8 488.1L101.5 487.8L102.2 488.3L102.9 487.9L103.6 487.8L104.3 487.8L105.0 488.4L105.7 487.9L106.4 487.8L107.1 488.6L107.8 488.8L108.5 488.6L109.2 488.9L109.9 489.0L110.6 488.2L111.3 488.8L112.0 488.5L112.7 489.0L113.4 489.1L114.1 489.2L114.8 488.7L115.5 488.4L116.2 488.5L116.9 489.3L117.6 489.4L118.3 488.9L119.0 488.9L119.7 489.6L120.4 489.5L121.1 489.6L121.8 489.9L122.5 490.0L123.2 489.4L123.9 489.2L124.6 489.8L125.3 489.4L126.0 489.6L126.7 489.8L127.4 490.0L128.1 489.8L128.8 489.1L129.5 489.7L130.2 488.9L130.9 489.4L131.6 489.5L132.3 489.8L133.0 490.1L133.7 489.6L134.4 489.5L135.1 489.2L135.8 490.1L136.5 489.2L137.2 489.8L137.9 490.1L138.6 490.0L139.3 489.8L140.0 490.4L140.7 490.1L141.4 489.3L142.1 490.3L142.8 489.3L143.5 489.6L144.2 490.5L144.9 489.6L145.6 490.0L146.3 490.5L147.0 490.0L147.7 489.9L148.4 489.8L149.1 490.6L149.8 490.2L150.5 489.7L151.2 490.8L151.9 489.9L152.6 490.7L153.3 490.4L154.0 490.2L154.7 490.5L155.4 490.0L156.1 490.5L156.8 489.9L157.5 490.4L158.2 490.4L158.9 490.2L159.6 490.7L160.3 490.6L161.0 489.9L161.7 490.7L162.4 490.1L163.1 490.7L163.8 490.9L164.5 489.9L165.2 490.1L165.9 489.7L166.6 490.6L167.3 490.4L168.0 489.8L168.7 490.7L169.4 490.0L170.1 489.8L170.8 490.8L171.5 490.5L172.2 489.7L172.9 490.6L173.6 490.7L174.3 490.5L175.0 490.1L175.7 490.1L176.4 489.6L177.1 490.2L177.8 490.5L178.5 490.2L179.2 489.6L179.9 490.1L180.6 490.1L181.3 489.4L182.0 490.3L182.7 489.3L183.4 489.3L184.1 489.4L184.8 489.7L185.5 489.7L186.2 490.2L186.9 490.0L187.6 489.9L188.3 489.7L189.0 489.7L189.7 489.0L190.4 489.8L191.1 489.6L191.8 489.7L192.5 489.6L193.2 488.9L193.9 488.0L194.6 486.6L195.3 486.0L196.0 487.2L196.7 487.4L197.4 487.3L198.1 488.9L198.8 488.3L199.5 488.4L200.2 488.8L200.9 489.4L201.6 488.8L202.3 487.8L203.0 488.2L203.7 488.3L204.4 488.6L205.1 488.7L205.8 488.6L206.5 489.7L207.2 488.7L207.9 489.3L208.6 488.7L209.3 488.9L210.0 488.9L210.7 489.1L211.4 489.1L212.1 489.3L212.8 488.9L213.5 489.5L214.2 489.6L214.9 488.6L215.6 488.6L216.3 488.7L217.0 488.8L217.7 489.3L218.4 489.3L219.1 489.4L219.8 488.8L220.5 488.3L221.2 489.2L221.9 488.8L222.6 488.6L223.3 488.3L224.0 488.1L224.7 488.4L225.4 488.4L226.1 488.0L226.8 488.2L227.5 487.9L228.2 488.1L228.9 488.0L229.6 488.2L230.3 488.7L231.0 488.3L231.7 488.4L232.4 488.2L233.1 488.6L233.8 487.8L234.5 488.6L235.2 488.4L235.9 488.5L236.6 488.8L237.3 488.5L238.0 488.5L238.7 488.0L239.4 488.3L240.1 488.9L240.8 488.0L241.5 488.1L242.2 488.2L242.9 489.2L243.6 488.6L244.3 489.3L245.0 488.5L245.7 488.3L246.4 489.2L247.1 488.7L247.8 488.6L248.5 488.9L249.2 489.3L249.9 489.7L250.6 489.2L251.3 489.5L252.0 488.8L252.7 489.2L253.4 489.8L254.1 489.0L254.8 489.3L255.5 489.0L256.2 489.8L256.9 489.5L257.6 489.7L258.3 489.3L259.0 489.6L259.7 489.6L260.4 489.4L261.1 489.1L261.8 489.0L262.5 489.9L263.2 489.7L263.9 489.8L264.6 489.8L265.3 489.5L266.0 489.1L266.7 490.2L267.4 489.4L268.1 490.2L268.8 489.4L269.5 490.3L270.2 489.9L270.9 489.4L271.6 489.6L272.3 490.1L273.0 490.5L273.7 489.9L274.4 490.1L275.1 490.4L275.8 489.4L276.5 489.7L277.2 489.7L277.9 490.4L278.6 490.4L279.3 490.6L280.0 490.0L280.7 490.6L281.4 489.8L282.1 490.6L282.8 490.6L283.5 490.5L284.2 490.3L284.9 490.8L285.6 490.6L286.3 489.7L287.0 490.7L287.7 490.0L288.4 490.1L289.1 490.4L289.8 490.6L290.5 490.8L291.2 489.7L291.9 490.2L292.6 489.8L293.3 490.4L294.0 489.8L294.7 490.4L295.4 490.5L296.1 490.1L296.8 490.4L297.5 490.5L298.2 490.8L298.9 490.5L299.6 490.3L300.3 490.2L301.0 489.6L301.7 490.1L302.4 490.5L303.1 490.0L303.8 490.2L304.5 489.5L305.2 490.0L305.9 490.5L306.6 490.0L307.3 489.5L308.0 489.8L308.7 489.6L309.4 490.1L310.1 490.0L310.8 489.8L311.5 489.8L312.2 490.2L312.9 490.3L313.6 489.8L314.3 489.7L315.0 489.7L315.7 489.6L316.4 490.0L317.1 490.1L317.8 489.2L318.5 489.4L319.2 489.4L319.9 489.5L320.6 489.8L321.3 489.6L322.0 490.0L322.7 489.7L323.4 484.5L324.1 485.4L324.8 485.7L325.5 486.0L326.2 488.6L326.9 487.9L327.6 488.0L328.3 486.9L329.0 488.6L329.7 486.9L330.4 488.3L331.1 488.4L331.8 488.1L332.5 489.5L333.2 488.0L333.9 488.9L334.6 488.6L335.3 489.1L336.0 489.5L336.7 489.2L337.4 489.4L338.1 488.8L338.8 488.7L339.5 489.5L340.2 489.6L340.9 488.8L341.6 488.9L342.3 489.1L343.0 489.2L343.7 489.0L344.4 489.0L345.1 489.2L345.8 488.6L346.5 489.1L347.2 489.2L347.9 489.1L348.6 488.4L349.3 488.9L350.0 489.0L350.7 488.6L351.4 488.8L352.1 489.1L352.8 488.9L353.5 488.4L354.2 487.9L354.9 488.2L355.6 487.9L356.3 487.9L357.0 487.9L357.7 488.4L358.4 488.4L359.1 488.3L359.8 488.4L360.5 488.1L361.2 488.3L361.9 488.0L362.6 487.8L363.3 488.9L364.0 488.6L364.7 488.7L365.4 488.8L366.1 488.3L366.8 488.1L367.5 488.0L368.2 488.7L368.9 488.8L369.6 489.0L370.3 488.3L371.0 488.9L371.7 488.6L372.4 489.0L373.1 488.4L373.8 488.9L374.5 488.9L375.2 489.2L375.9 488.4L376.6 489.5L377.3 489.0L378.0 489.5L378.7 488.6L379.4 489.5L380.1 489.6L380.8 489.1L381.5 489.2L382.2 489.8L382.9 489.2L383.6 489.1L384.3 489.7L385.0 489.9L385.7 489.6L386.4 489.1L387.1 489.4L387.8 489.6L388.5 489.7L389.2 489.8L389.9 489.8L390.6 490.1L391.3 488.9L392.0 489.9L392.7 489.3L393.4 489.0L394.1 489.3L394.8 489.3L395.5 489.1L396.2 489.6L396.9 490.2L397.6 489.9L398.3 489.4L399.0 489.4L399.7 489.3L400.4 489.9L401.1 489.4L401.8 489.8L402.5 490.5L403.2 490.5L403.9 490.3L404.6 490.0L405.3 489.6L406.0 489.9L406.7 490.0L407.4 490.1L408.1 490.3L408.8 489.6L409.5 490.2L410.2 490.2L410.9 489.7L411.6 489.9L412.3 490.6L413.0 490.6L413.7 489.7L414.4 490.5L415.1 490.2L415.8 490.8L416.5 490.1L417.2 489.8L417.9 490.7L418.6 490.3L419.3 490.8L420.0 490.0L420.7 489.8L421.4 490.4L422.1 490.8L422.8 489.9L423.5 490.1L424.2 490.4L424.9 490.7L425.6 490.0L426.3 490.2L427.0 490.6L427.7 490.7L428.4 490.2L429.1 490.2L429.8 490.2L430.5 490.5L431.2 489.7L431.9 489.8L432.6 490.5L433.3 489.9L434.0 489.6L434.7 489.6L435.4 489.6L436.1 490.0L436.8 490.5L437.5 490.4L438.2 489.9L438.9 489.8L439.6 490.0L440.3 489.9L441.0 489.4L441.7 490.4L442.4 490.3L443.1 489.3L443.8 490.0L444.5 489.5L445.2 489.4L445.9 489.3L446.6 489.8L447.3 489.2L448.0 490.0L448.7 489.1L449.4 490.0L450.1 490.0L450.8 490.0L451.5 489.8L452.2 489.9L452.9 489.0L453.6 484.1L454.3 488.7L455.0 488.0L455.7 488.7L456.4 487.0L457.1 486.3L457.8 488.1L458.5 487.9L459.2 488.2L459.9 488.2L460.6 488.7L461.3 488.6L462.0 488.7L462.7 488.3L463.4 487.9L464.1 489.0L464.8 489.5L465.5 489.1L466.2 488.7L466.9 488.5L467.6 489.4L468.3 489.5L469.0 488.7L469.7 489.4L470.4 489.3L471.1 489.6L471.8 489.5L472.5 489.0L473.2 489.3L473.9 489.4L474.6 489.4L475.3 488.5L476.0 488.7L476.7 488.7L477.4 488.6L478.1 489.5L478.8 488.7L479.5 489.2L480.2 488.6L480.9 488.9L481.6 488.7L482.3 489.0L483.0 488.2L483.7 488.3L484.4 487.9L485.1 488.1L485.8 489.0L486.5 488.1L487.2 488.3L487.9 488.9L488.6 488.0L489.3 487.8L490.0 488.1L490.7 488.2L491.4 488.0L492.1 488.8L492.8 488.2L493.5 487.8L494.2 487.8L494.9 488.4L495.6 488.3L496.3 488.8L497.0 487.9L497.7 488.6L498.4 487.9L499.1 487.9L499.8 488.0L500.5 489.0L501.2 488.6L501.9 488.8L502.6 488.6L503.3 488.4L504.0 488.6L504.7 489.0L505.4 488.7L506.1 488.8L506.8 489.6L507.5 488.9L508.2 489.6L508.9 489.1L509.6 489.6L510.3 488.9L511.0 489.0L511.7 489.1L512.4 489.9L513.1 489.7L513.8 489.6L514.5 489.8L515.2 489.6L515.9 489.7L516.6 489.8L517.3 489.6L518.0 489.8L518.7 489.0L519.4 490.1L520.1 489.8L520.8 489.7L521.5 489.9L522.2 489.1L522.9 489.1L523.6 489.6L524.3 489.4L525.0 490.0L525.7 489.6L526.4 490.0L527.1 489.9L527.8 490.1L528.5 489.3L529.2 489.5L529.9 489.6L530.6 489.4L531.3 489.9L532.0 489.7L532.7 490.0L533.4 490.1L534.1 490.1L534.8 489.5L535.5 490.0L536.2 490.2L536.9 490.5L537.6 490.1L538.3 489.7L539.0 490.7L539.7 490.1L540.4 490.8L541.1 489.6L541.8 489.8L542.5 490.3L543.2 489.9L543.9 490.4L544.6 490.6L545.3 490.3L546.0 490.5L546.7 489.9L547.4 490.4L548.1 490.7L548.8 490.1L549.5 490.8L550.2 489.8L550.9 490.2L551.6 489.8L552.3 490.4L553.0 490.9L553.7 490.8L554.4 490.9L555.1 490.0L555.8 489.9L556.5 490.1L557.2 489.8L557.9 490.1L558.6 489.9L559.3 490.1L560.0 490.1L560.7 490.2L561.4 489.7L562.1 490.6L562.8 489.7L563.5 490.3L564.2 489.6L564.9 490.4L565.6 490.3L566.3 490.6L567.0 490.0L567.7 490.5L568.4 489.6L569.1 489.5L569.8 489.7L570.5 489.8L571.2 490.0L571.9 489.6L572.6 489.9L573.3 490.3L574.0 489.2L574.7 490.2L575.4 489.0L576.1 489.8L576.8 489.6L577.5 490.1L578.2 489.8L578.9 489.0L579.6 489.3L580.3 490.0L581.0 489.4L581.7 490.1L582.4 489.3L583.1 486.6L583.8 488.6L584.5 485.4L585.2 488.6L585.9 488.9L586.6 486.1L587.3 486.1L588.0 488.6L588.7 487.6L589.4 487.2L590.1 488.2L590.8 487.5L591.5 488.7L592.2 489.0L592.9 489.2L593.6 488.0L594.3 488.8L595.0 488.7L595.7 488.5L596.4 488.7L597.1 489.2L597.8 488.7L598.5 488.9L599.2 489.1L599.9 488.5L600.6 488.8L601.3 489.3L602.0 489.3L602.7 489.5L603.4 489.7L604.1 488.8L604.8 489.7L605.5 489.6L606.2 488.7L606.9 488.8L607.6 488.5L608.3 489.0L609.0 488.9L609.7 488.8L610.4 488.2L611.1 488.8L611.8 489.0L612.5 488.3L613.2 488.8L613.9 488.8L614.6 488.1L615.3 489.0L616.0 488.5L616.7 488.9L617.4 488.1L618.1 488.3L618.8 488.3L619.5 488.2L620.2 488.3L620.9 487.9L621.6 488.3L622.3 488.0L623.0 488.3L623.7 487.9L624.4 488.6L625.1 488.4L625.8 488.9L626.5 488.3L627.2 488.8L627.9 489.0L628.6 488.4L629.3 488.7L630.0 488.2L630.7 488.0L631.4 488.9L632.1 488.1L632.8 488.7L633.5 488.4L634.2 488.3L634.9 489.3L635.6 488.7L636.3 489.3L637.0 489.5L637.7 488.6L638.4 489.5L639.1 489.4L639.8 488.9L640.5 489.3L641.2 489.5L641.9 489.1L642.6 489.2L643.3 488.9L644.0 489.4L644.7 489.8L645.4 489.8L646.1 489.2L646.8 489.9L647.5 489.2L648.2 489.0L648.9 489.2L649.6 489.9L650.3 489.2L651.0 489.7L651.7 490.0L652.4 489.7L653.1 489.6L653.8 490.0L654.5 490.1L655.2 489.2L655.9 489.0L656.6 489.3L657.3 490.0L658.0 489.5L658.7 489.5L659.4 490.3L660.1 489.3L660.8 489.6L661.5 489.8L662.2 489.6L662.9 489.6L663.6 489.5L664.3 490.3L665.0 490.5L665.7 489.6L666.4 489.7L667.1 490.6L667.8 489.8L668.5 490.6L669.2 489.7L669.9 489.9L670.6 490.0L671.3 490.0L672.0 489.8L672.7 489.8L673.4 490.8L674.1 490.1L674.8 490.6L675.5 490.2L676.2 489.8L676.9 489.8L677.6 490.9L678.3 489.9L679.0 490.6L679.7 489.8L680.4 490.0L681.1 490.1L681.8 490.5L682.5 490.6L683.2 490.8L683.9 490.3L684.6 489.8L685.3 490.5L686.0 490.6L686.7 489.8L687.4 490.2L688.1 490.2L688.8 490.5L689.5 490.6L690.2 489.7L690.9 490.0L691.6 489.6L692.3 490.0L693.0 489.9L693.7 489.8L694.4 490.2L695.1 490.1L695.8 489.5L696.5 489.8L697.2 489.8L697.9 490.1L698.6 490.3L699.3 490.3L700.0 490.4L700.7 489.5L701.4 489.8L702.1 489.4L702.8 490.0L703.5 489.1L704.2 489.2L704.9 490.0L705.6 489.8L706.3 490.1L707.0 489.0L707.7 489.1L708.4 489.6L709.1 489.2L709.8 490.0L710.5 489.0L711.2 489.3L711.9 489.2L712.6 490.1L713.3 485.0L714.0 485.7L714.7 484.8L715.4 485.2L716.1 487.4L716.8 487.8L717.5 487.1L718.2 486.4L718.9 487.3L719.6 486.9L720.3 488.2L721.0 488.3L721.7 487.5L722.4 489.0L723.1 487.4L723.8 488.7L724.5 488.7L725.2 489.6L725.9 487.9L726.6 488.0L727.3 489.3L728.0 489.1L728.7 488.5L729.4 488.9L730.1 488.8L730.8 489.3L731.5 488.9L732.2 489.9L732.9 489.1L733.6 489.4L734.3 488.9L735.0 488.9L735.7 488.9L736.4 488.7L737.1 488.5L737.8 488.9L738.5 489.2L739.2 488.3L739.9 488.8L740.6 489.1L741.3 488.4L742.0 488.8L742.7 488.6L743.4 488.5L744.1 488.7L744.8 488.4L745.5 487.9L746.2 488.2L746.9 487.8L747.6 487.8L748.3 488.9L749.0 488.2L749.7 488.1L750.4 488.9L751.1 487.8L751.8 487.7L752.5 488.4L753.2 488.1L753.9 488.0L754.6 487.9L755.3 488.2L756.0 488.2L756.7 488.2L757.4 487.9L758.1 488.6L758.8 487.9L759.5 488.3L760.2 488.5L760.9 488.0L761.6 488.2L762.3 488.5L763.0 488.9L763.7 488.2L764.4 489.1L765.1 488.5L765.8 489.3L766.5 489.5L767.2 489.5L767.9 489.6L768.6 489.7L769.3 488.9L770.0 489.8L770.7 489.2L771.4 489.6L772.1 489.0L772.8 489.6L773.5 489.3L774.2 489.0L774.9 490.0L775.6 489.9L776.3 489.8L777.0 489.4L777.7 490.0L778.4 489.6L779.1 489.3L779.8 489.8L780.5 490.0L781.2 490.0L781.9 489.8L782.6 490.0L783.3 489.9L784.0 489.2L784.7 489.1L785.4 489.1L786.1 490.0L786.8 489.8L787.5 489.6L788.2 489.6L788.9 490.4L789.6 489.6L790.3 490.3L791.0 490.2L791.7 490.3L792.4 490.2L793.1 489.5L793.8 490.0L794.5 489.7L795.2 489.8L795.9 489.7L796.6 490.1L797.3 490.6L798.0 489.9L798.7 490.2L799.4 489.7L800.1 489.9L800.8 490.0L801.5 490.1L802.2 490.5L802.9 490.2L803.6 489.7L804.3 490.7L805.0 490.4L805.7 489.8L806.4 489.8L807.1 489.9L807.8 490.9L808.5 490.1L809.2 490.9L809.9 490.8L810.6 490.2L811.3 490.7L812.0 489.9L812.7 490.4L813.4 489.8L814.1 490.2L814.8 490.5L815.5 490.0L816.2 489.8L816.9 490.6L817.6 490.6L818.3 490.2L819.0 489.8L819.7 490.7L820.4 490.4L821.1 490.4L821.8 490.0L822.5 489.8L823.2 490.1L823.9 489.6L824.6 489.9L825.3 490.0L826.0 489.7L826.7 489.9L827.4 489.5L828.1 489.5L828.8 490.5L829.5 490.1L830.2 489.6L830.9 490.2L831.6 490.2L832.3 490.2L833.0 489.4L833.7 489.1L834.4 489.5L835.1 489.7L835.8 489.9L836.5 489.7L837.2 489.3L837.9 489.4L838.6 489.5L839.3 489.4L840.0 489.0L840.7 489.0L841.4 489.1L842.1 489.0L842.8 489.7L843.5 488.1L844.2 483.9L844.9 487.7L845.6 487.2L846.3 485.5L847.0 487.3L847.7 487.0L848.4 488.6L849.1 489.2L849.8 488.5L850.5 488.2L851.2 488.0L851.9 488.6L852.6 488.7L853.3 488.4L854.0 488.6L854.7 489.0L855.4 488.9L856.1 488.7L856.8 489.3L857.5 488.4L858.2 488.5L858.9 489.1L859.6 488.8L860.3 489.2L861.0 489.1L861.7 489.3L862.4 489.0L863.1 489.3L863.8 489.7L864.5 489.7L865.2 489.5L865.9 489.1L866.6 489.4L867.3 488.4L868.0 488.9L868.7 489.1L869.4 488.4L870.1 488.7L870.8 488.7L871.5 488.1L872.2 488.6L872.9 488.8L873.6 488.6L874.3 488.1L875.0 489.0L875.7 488.3L876.4 487.9L877.1 488.0L877.8 488.8L878.5 488.4L879.2 488.7L879.9 488.4L880.6 488.5L881.3 488.5L882.0 488.9L882.7 487.9L883.4 488.3L884.1 487.8L884.8 488.2L885.5 487.8L886.2 488.2L886.9 488.9L887.6 488.8L888.3 488.7L889.0 489.0L889.7 488.6L890.4 489.0L891.1 488.6L891.8 488.1L892.5 488.6L893.2 489.0L893.9 488.5L894.6 489.2L895.3 489.3L896.0 488.4L896.7 489.0L897.4 489.3L898.1 489.4L898.8 489.6L899.5 488.8L900.2 489.1L900.9 489.1L901.6 489.8L902.3 489.1L903.0 490.0L903.7 490.0L904.4 489.2L905.1 489.5L905.8 489.0L906.5 490.0L907.2 489.5L907.9 489.7L908.6 489.3L909.3 489.2L910.0 489.6L910.7 489.3L911.4 489.6L912.1 490.1L912.8 489.4L913.5 489.3L914.2 489.5L914.9 489.4L915.6 489.8L916.3 490.1L917.0 490.0L917.7 489.4L918.4 490.2L919.1 490.1L919.8 490.2L920.5 489.8L921.2 490.1L921.9 490.2L922.6 490.2L923.3 489.4L924.0 489.5L924.7 490.0L925.4 490.5L926.1 490.4L926.8 490.1L927.5 490.4L928.2 490.5L928.9 490.1L929.6 490.7L930.3 489.7L931.0 489.7L931.7 490.1L932.4 489.7L933.1 490.7L933.8 490.0L934.5 490.8L935.2 490.9L935.9 489.7L936.6 490.7L937.3 489.8L938.0 490.8L938.7 490.0L939.4 490.1L940.1 490.9L940.8 490.2L941.5 489.9L942.2 490.2L942.9 490.7L943.6 489.9L944.3 490.1L945.0 490.0L945.7 490.0L946.4 490.0L947.1 489.8L947.8 490.3L948.5 490.4L949.2 490.2L949.9 489.8L950.6 489.9L951.3 490.1L952.0 490.2L952.7 490.4L953.4 490.5L954.1 490.3L954.8 489.5L955.5 489.5L956.2 490.4L956.9 489.6L957.6 490.3L958.3 489.4L959.0 489.5L959.7 490.4L960.4 490.1L961.1 490.0L961.8 489.6L962.5 489.8L963.2 489.3L963.9 489.1L964.6 489.3L965.3 489.2L966.0 489.6L966.7 490.1L967.4 489.6L968.1 489.3L968.8 489.5L969.5 489.3L970.2 490.1L970.9 489.7L971.6 488.9L972.3 489.7L973.0 485.6L973.7 488.3L974.4 487.9L975.1 487.8L975.8 488.9L976.5 487.3L977.2 486.4L977.9 489.4L978.6 487.5L979.3 487.7L980.0 487.8L980.7 488.1L981.4 487.7L982.1 489.3L982.8 488.7L983.5 488.6L984.2 488.6L984.9 488.8L985.6 488.2L986.3 488.7L987.0 488.3L987.7 489.0L988.4 488.4L989.1 489.1L989.8 489.0L990.5 488.9L991.2 489.0L991.9 489.0L992.6 489.4L993.3 488.7L994.0 489.2L994.7 489.3L995.4 489.2L996.1 489.6L996.8 488.7L997.5 488.8L998.2 489.3L998.9 489.0L999.6 488.4L1000.3 489.3L1001.0 488.4L1001.7 488.8L1002.4 488.6L1003.1 488.1L1003.8 488.0L1004.5 488.6L1005.2 488.0L1005.9 488.3L1006.6 488.7L1007.3 488.9L1008.0 488.7L1008.7 487.8L1009.4 488.2L1010.1 488.6L1010.8 487.8L1011.5 488.2L1012.2 487.9L1012.9 487.9L1013.6 488.6L1014.3 488.7L1015.0 488.3L1015.7 488.5L1016.4 487.9L1017.1 488.4L1017.8 488.3L1018.5 488.6L1019.2 488.5L1019.9 488.8L1020.6 488.8L1021.3 488.7L1022.0 488.5L1022.7 488.6L1023.4 488.4L1024.1 488.3L1024.8 488.8L1025.5 488.5L1026.2 489.1L1026.9 489.6L1027.6 488.7L1028.3 489.0L1029.0 489.6L1029.7 489.2L1030.4 488.7L1031.1 489.2L1031.8 489.9L1032.5 489.4L1033.2 489.5L1033.9 489.9L1034.6 489.8L1035.3 489.8L1036.0 489.2L1036.7 489.3L1037.4 489.8L1038.1 489.2L1038.8 489.1L1039.5 490.0L1040.2 489.0L1040.9 489.3L1041.6 490.0L1042.3 489.0L1043.0 489.1L1043.7 489.7L1044.4 490.1L1045.1 489.4L1045.8 489.8L1046.5 489.3L1047.2 490.3L1047.9 489.8L1048.6 490.2L1049.3 489.3L1050.0 490.0L1050.7 489.3L1051.4 490.0L1052.1 490.3L1052.8 489.9L1053.5 490.0L1054.2 490.5L1054.9 489.6L1055.6 490.4L1056.3 490.1L1057.0 490.0L1057.7 489.6L1058.4 490.4L1059.1 489.7L1059.8 490.2L1060.5 489.6L1061.2 490.8L1061.9 490.5L1062.6 490.2L1063.3 490.7L1064.0 489.7L1064.7 490.3L1065.4 489.7L1066.1 490.6L1066.8 490.0L1067.5 489.8L1068.2 490.5L1068.9 489.9L1069.6 490.3L1070.3 490.7L1071.0 489.7L1071.7 490.6L1072.4 490.6L1073.1 490.5L1073.8 490.8L1074.5 490.4L1075.2 490.6L1075.9 489.8L1076.6 489.7L1077.3 490.5L1078.0 489.7L1078.7 489.8L1079.4 489.9L1080.1 490.4L1080.8 489.8L1081.5 489.9L1082.2 490.1L1082.9 489.7L1083.6 490.0L1084.3 489.6L1085.0 490.4L1085.7 490.0L1086.4 489.5L1087.1 490.0L1087.8 489.4L1088.5 489.6L1089.2 490.1L1089.9 489.4L1090.6 489.5L1091.3 489.3L1092.0 490.0L1092.7 489.5L1093.4 489.1L1094.1 489.2L1094.8 489.5L1095.5 490.1L1096.2 489.4L1096.9 489.4L1097.6 489.3L1098.3 489.3L1099.0 490.1L1099.7 490.0L1100.4 490.0L1101.1 489.6L1101.8 490.0L1102.5 489.2L1103.2 487.3L1103.9 485.3L1104.6 486.1L1105.3 484.6L1106.0 487.4L1106.7 489.2L1107.4 488.3L1108.1 487.9L1108.8 487.4L1109.5 488.7L1110.2 488.4L1110.9 488.4L1111.6 489.3L1112.3 489.1L1113.0 489.0L1113.7 488.9L1114.4 488.7L1115.1 488.3L1115.8 488.1L1116.5 488.3L1117.2 488.6L1117.9 488.3L1118.6 488.8L1119.3 489.2L1120.0 489.9L1120.7 488.7L1121.4 489.5L1122.1 489.9L1122.8 489.5L1123.5 489.3L1124.2 489.2L1124.9 489.7L1125.6 489.1L1126.3 488.6L1127.0 488.8L1127.7 488.6L1128.4 488.3L1129.1 489.0L1129.8 488.4L1130.5 488.7L1131.2 489.2L1131.9 488.4L1132.6 488.5L1133.3 488.4L1134.0 488.0L1134.7 488.2L1135.4 488.4L1136.1 488.0L1136.8 488.1L1137.5 488.5L1138.2 488.2L1138.9 487.9L1139.6 488.3L1140.3 488.2L1141.0 488.3L1141.7 488.5L1142.4 488.9L1143.1 488.1L1143.8 487.7L1144.5 487.8L1145.2 488.6L1145.9 488.3L1146.6 487.9L1147.3 488.8L1148.0 488.5L1148.7 488.6L1149.4 488.8L1150.1 488.8L1150.8 488.8L1151.5 489.0L1152.2 489.1L1152.9 489.0L1153.6 488.2L1154.3 488.3L1155.0 488.5L1155.7 489.3L1156.4 488.6L1157.1 489.4L1157.8 489.4L1158.5 489.0L1159.2 488.8L1159.9 488.8L1160.6 489.8L1161.3 488.9L1162.0 489.5L1162.7 489.0L1163.4 489.7L1164.1 489.2L1164.8 489.8L1165.5 489.3L1166.2 489.8L1166.9 489.9L1167.6 489.8L1168.3 489.6L1169.0 489.0L1169.7 489.5L1170.4 489.5L1171.1 489.6L1171.8 489.3L1172.5 490.1L1173.2 489.7L1173.9 490.0L1174.6 490.1L1175.3 490.1L1176.0 490.0L1176.7 489.2L1177.4 489.9L1178.1 490.2L1178.8 489.9L1179.5 490.4L1180.2 490.3L1180.9 489.6L1181.6 489.7L1182.3 490.2L1183.0 489.8L1183.7 490.3L1184.4 489.5L1185.1 490.5L1185.8 490.1L1186.5 490.6L1187.2 489.9L1187.9 489.7L1188.6 490.5L1189.3 490.4L1190.0 490.1L1190.7 489.9L1191.4 490.7L1192.1 490.4L1192.8 490.3L1193.5 489.7L1194.2 489.9L1194.9 490.5L1195.6 489.7L1196.3 490.7L1197.0 490.3L1197.7 490.1L1198.4 490.0L1199.1 490.3L1199.8 490.7L1200.5 490.0L1201.2 490.9L1201.9 490.4L1202.6 490.7L1203.3 490.4L1204.0 490.6L1204.7 490.7L1205.4 490.3L1206.1 490.8L1206.8 489.8L1207.5 490.5L1208.2 490.7L1208.9 490.7L1209.6 490.3L1210.3 490.3L1211.0 490.1L1211.7 489.8L1212.4 490.3L1213.1 489.6L1213.8 490.0L1214.5 490.0L1215.2 489.6L1215.9 489.8L1216.6 489.5L1217.3 490.3L1218.0 490.2L1218.7 490.0L1219.4 489.8L1220.1 490.2L1220.8 490.1L1221.5 489.5L1222.2 489.7L1222.9 489.6L1223.6 490.2L1224.3 489.5L1225.0 490.2L1225.7 489.8L1226.4 489.9L1227.1 489.1L1227.8 489.3L1228.5 489.6L1229.2 490.1L1229.9 489.1L1230.6 489.6L1231.3 489.8L1232.0 489.6L1232.7 489.2L1233.4 487.3L1234.1 486.0L1234.8 488.2L1235.5 486.7L1236.2 488.1L1236.9 488.1L1237.6 488.0L1238.3 485.9L1239.0 487.2L1239.7 488.1L1240.4 487.3L1241.1 488.8L1241.8 487.8L1242.5 488.5L1243.2 488.7L1243.9 488.8L1244.6 488.3L1245.3 489.4L1246.0 488.9L1246.7 488.7L1247.4 489.2L1248.1 488.9L1248.8 489.1L1249.5 488.4L1250.2 489.1L1250.9 489.7L1251.6 489.4L1252.3 489.6L1253.0 489.5L1253.7 488.9L1254.4 489.0L1255.1 488.5L1255.8 488.8L1256.5 489.4L1257.2 488.6L1257.9 489.1L1258.6 489.1L1259.3 489.3L1260.0 488.4L1260.7 488.6L1261.4 488.0L1262.1 489.1L1262.8 488.0L1263.5 488.2L1264.2 488.0L1264.9 488.9L1265.6 488.6L1266.3 488.7L1267.0 488.5L1267.7 488.5L1268.4 488.7L1269.1 488.0L1269.8 488.7L1270.5 488.9L1271.2 487.9L1271.9 488.0L1272.6 487.8L1273.3 488.7L1274.0 488.6L1274.7 488.0L1275.4 488.8L1276.1 487.8L1276.8 489.0L1277.5 487.9L1278.2 488.0L1278.9 487.9L1279.6 488.7L1280.3 488.0L1281.0 488.7L1281.7 488.4L1282.4 489.1L1283.1 488.1L1283.8 488.5L1284.5 489.3L1285.2 489.2L1285.9 488.4L1286.6 489.0L1287.3 488.6L1288.0 489.4L1288.7 489.7L1289.4 489.1L1290.1 489.5L1290.8 489.7L1291.5 489.6L1292.2 489.0L1292.9 489.1L1293.6 489.8L1294.3 489.6L1295.0 489.8L1295.7 489.1L1296.4 489.5L1297.1 490.0L1297.8 488.9L1298.5 489.2L1299.2 489.5L1299.9 489.3L1300.6 489.4L1301.3 489.1L1302.0 489.9L1302.7 489.6L1303.4 490.0L1304.1 489.1L1304.8 489.5L1305.5 490.2L1306.2 489.9L1306.9 489.6L1307.6 490.3L1308.3 490.3L1309.0 489.4L1309.7 489.8L1310.4 489.5L1311.1 490.2L1311.8 489.3L1312.5 490.4L1313.2 490.3L1313.9 489.6L1314.6 490.2L1315.3 489.7L1316.0 490.1L1316.7 489.6L1317.4 489.8L1318.1 489.6L1318.8 490.6L1319.5 490.1L1320.2 490.7L1320.9 490.4L1321.6 490.2L1322.3 489.7L1323.0 490.6L1323.7 489.7L1324.4 489.9L1325.1 490.7L1325.8 490.0L1326.5 489.9L1327.2 490.4L1327.9 490.4L1328.6 490.4L1329.3 490.7L1330.0 489.9L1330.7 490.4L1331.4 489.9L1332.1 490.8L1332.8 490.0L1333.5 490.6L1334.2 490.6L1334.9 490.4L1335.6 490.8L1336.3 490.9L1337.0 490.0L1337.7 490.1L1338.4 490.8L1339.1 490.0L1339.8 489.7L1340.5 490.7L1341.2 489.9L1341.9 490.6L1342.6 489.8L1343.3 490.4L1344.0 489.6L1344.7 490.4L1345.4 490.5L1346.1 490.1L1346.8 490.5L1347.5 490.1L1348.2 490.2L1348.9 489.9L1349.6 489.9L1350.3 490.2L1351.0 489.4L1351.7 490.2L1352.4 489.3L1353.1 489.5L1353.8 490.3L1354.5 489.3L1355.2 489.5L1355.9 489.9L1356.6 489.9L1357.3 489.0L1358.0 489.0L1358.7 489.0L1359.4 490.0L1360.1 489.1L1360.8 490.1L1361.5 489.6L1362.2 489.3L1362.9 485.9L1363.6 484.6L1364.3 486.4L1365.0 488.2L1365.7 487.8L1366.4 487.1L1367.1 486.2L1367.8 486.8L1368.5 488.9L1369.2 486.6L1369.9 488.5L1370.6 488.1L1371.3 487.6L1372.0 488.2L1372.7 488.5L1373.4 488.4L1374.1 487.9L1374.8 488.5L1375.5 488.2L1376.2 489.4L1376.9 489.0L1377.6 488.8L1378.3 489.3L1379.0 489.2L1379.7 489.4L1380.4 489.4L1381.1 488.9L1381.8 489.0L1382.5 489.5L1383.2 489.1L1383.9 489.0L1384.6 488.6L1385.3 488.5L1386.0 488.9L1386.7 489.0L1387.4 488.8L1388.1 489.4L1388.8 488.6L1389.5 488.4L1390.2 488.3L1390.9 488.5L1391.6 488.9L1392.3 489.1L1393.0 489.1L1393.7 489.0L1394.4 488.6L1395.1 488.1L1395.8 488.5L1396.5 488.7L1397.2 488.9L1397.9 488.3L1398.6 488.4L1399.3 488.3L1400.0 488.6L1400.7 488.7L1401.4 488.8L1402.1 488.7L1402.8 488.3L1403.5 487.7L1404.2 488.8L1404.9 488.0L1405.6 488.8L1406.3 488.3L1407.0 488.9L1407.7 488.1L1408.4 488.7L1409.1 488.1L1409.8 489.0L1410.5 488.6L1411.2 488.5L1411.9 488.7L1412.6 488.3L1413.3 489.1L1414.0 488.6L1414.7 489.4L1415.4 489.2L1416.1 488.7L1416.8 489.3L1417.5 488.9L1418.2 488.9L1418.9 488.6L1419.6 488.9L1420.3 489.4L1421.0 489.5L1421.7 488.9L1422.4 490.0L1423.1 490.0L1423.8 489.8L1424.5 489.9L1425.2 489.3L1425.9 489.9L1426.6 489.2L1427.3 489.6L1428.0 489.2L1428.7 489.3L1429.4 489.9L1430.1 489.6L1430.8 489.9L1431.5 489.0L1432.2 489.8L1432.9 489.3L1433.6 489.8L1434.3 489.5L1435.0 489.6L1435.7 489.3L1436.4 490.1L1437.1 489.9L1437.8 489.3L1438.5 489.4L1439.2 489.6L1439.9 489.7L1440.6 490.4L1441.3 490.4L1442.0 489.8L1442.7 490.3L1443.4 490.2L1444.1 489.5L1444.8 490.2L1445.5 490.2L1446.2 490.4L1446.9 490.1L1447.6 489.6L1448.3 490.4L1449.0 490.0L1449.7 490.3L1450.4 490.3L1451.1 490.7L1451.8 490.1L1452.5 490.0L1453.2 490.1L1453.9 489.9L1454.6 490.6L1455.3 490.6L1456.0 490.1L1456.7 490.4L1457.4 490.1L1458.1 490.9L1458.8 489.8L1459.5 490.5L1460.2 490.1L1460.9 489.9L1461.6 490.4L1462.3 490.6L1463.0 490.0L1463.7 490.6L1464.4 490.6L1465.1 490.2L1465.8 489.9L1466.5 490.2L1467.2 490.1L1467.9 490.6L1468.6 490.3L1469.3 489.7L1470.0 489.7L1470.7 490.4L1471.4 490.7L1472.1 490.5L1472.8 489.5L1473.5 489.7L1474.2 490.0L1474.9 490.3L1475.6 490.6L1476.3 489.7L1477.0 489.9L1477.7 490.5L1478.4 490.3L1479.1 489.5L1479.8 489.3L1480.5 490.3L1481.2 490.3L1481.9 489.2L1482.6 490.2L1483.3 489.2L1484.0 489.8L1484.7 489.2L1485.4 489.0L1486.1 489.0L1486.8 489.2L1487.5 489.1L1488.2 490.0L1488.9 489.5L1489.6 490.1L1490.3 490.0L1491.0 489.3L1491.7 489.2L1492.4 489.3L1493.1 487.2L1493.8 486.8L1494.5 485.7L1495.2 485.9L1495.9 487.0L1496.6 487.0L1497.3 485.9L1498.0 487.2L1498.7 488.1L1499.4 488.4L1500.1 488.2L1500.8 487.6L1501.5 487.6L1502.2 489.0L1502.9 487.7L1503.6 487.9L1504.3 488.1L1505.0 489.2L1505.7 489.5L1506.4 488.5L1507.1 489.6L1507.8 488.9L1508.5 488.8L1509.2 489.4L1509.9 489.4L1510.6 489.6L1511.3 489.0L1512.0 489.9L1512.7 489.0L1513.4 489.0L1514.1 488.8L1514.8 489.7L1515.5 489.0L1516.2 489.0L1516.9 488.9L1517.6 489.0L1518.3 489.2L1519.0 488.7L1519.7 488.8L1520.4 488.5L1521.1 488.3L1521.8 489.0L1522.5 488.9L1523.2 488.1L1523.9 488.8L1524.6 488.4L1525.3 488.0L1526.0 487.9L1526.7 488.1L1527.4 488.3L1528.1 488.9L1528.8 488.6L1529.5 488.6L1530.2 487.8L1530.9 488.0L1531.6 488.5L1532.3 488.1L1533.0 488.6L1533.7 487.8L1534.4 488.8L1535.1 488.4L1535.8 488.6L1536.5 488.2L1537.2 488.2L1537.9 488.7L1538.6 487.9L1539.3 488.1L1540.0 488.7L1540.7 488.4L1541.4 488.9L1542.1 489.0L1542.8 488.6L1543.5 488.9L1544.2 488.8L1544.9 488.7L1545.6 488.6L1546.3 488.5L1547.0 488.6L1547.7 489.6L1548.4 488.8L1549.1 489.3L1549.8 489.6L1550.5 489.1L1551.2 489.0L1551.9 489.9L1552.6 489.3L1553.3 489.0L1554.0 489.7L1554.7 490.0L1555.4 489.1L1556.1 489.2L1556.8 489.1L1557.5 490.0L1558.2 489.3L1558.9 489.3L1559.6 489.1L1560.3 489.2L1561.0 489.7L1561.7 489.4L1562.4 489.7L1563.1 489.6L1563.8 489.3L1564.5 489.4L1565.2 489.8L1565.9 489.1L1566.6 489.7L1567.3 489.8L1568.0 489.7L1568.7 489.4L1569.4 489.9L1570.1 490.1L1570.8 490.5L1571.5 489.4L1572.2 489.9L1572.9 489.6L1573.6 489.8L1574.3 489.7L1575.0 489.9L1575.7 490.2L1576.4 490.0L1577.1 489.6L1577.8 489.6L1578.5 490.2L1579.2 489.7L1579.9 490.0L1580.6 490.0L1581.3 490.1L1582.0 490.2L1582.7 490.6L1583.4 490.3L1584.1 490.3L1584.8 490.9L1585.5 490.5L1586.2 489.7L1586.9 490.2L1587.6 490.3L1588.3 489.9L1589.0 490.0L1589.7 490.3L1590.4 490.5L1591.1 490.5L1591.8 489.8L1592.5 490.5L1593.2 490.8L1593.9 490.2L1594.6 489.9L1595.3 489.7L1596.0 490.0L1596.7 490.7L1597.4 489.8L1598.1 490.8L1598.8 489.7L1599.5 490.6L1600.2 490.5L1600.9 489.9L1601.6 489.7L1602.3 489.9L1603.0 490.7L1603.7 489.9L1604.4 489.8L1605.1 489.5L1605.8 490.2L1606.5 489.7L1607.2 490.1L1607.9 489.6L1608.6 490.3L1609.3 489.7L1610.0 490.2L1610.7 489.4L1611.4 490.0L1612.1 489.9L1612.8 489.7L1613.5 490.1L1614.2 489.2L1614.9 490.0L1615.6 489.3L1616.3 489.1L1617.0 489.2L1617.7 489.8L1618.4 489.9L1619.1 489.3L1619.8 489.3L1620.5 489.9L1621.2 489.1L1621.9 490.1L1622.6 488.6L1623.3 485.2L1624.0 487.5L1624.7 484.6L1625.4 486.2L1626.1 488.4L1626.8 487.7L1627.5 488.2L1628.2 487.5L1628.9 488.7L1629.6 487.5L1630.3 488.1L1631.0 489.2L1631.7 488.5L1632.4 488.4L1633.1 488.3L1633.8 489.2L1634.5 488.7L1635.2 489.6L1635.9 489.2L1636.6 488.6L1637.3 489.7L1638.0 488.5L1638.7 488.6L1639.4 489.1L1640.1 488.8L1640.8 489.1L1641.5 489.9L1642.2 489.5L1642.9 489.2L1643.6 489.8L1644.3 489.5L1645.0 489.5L1645.7 489.0L1646.4 489.0L1647.1 488.6L1647.8 489.1L1648.5 489.3L1649.2 488.5L1649.9 488.2L1650.6 488.8L1651.3 489.0L1652.0 488.8L1652.7 488.3L1653.4 488.6L1654.1 488.1L1654.8 488.9L1655.5 488.8L1656.2 488.5L1656.9 488.7L1657.6 487.9L1658.3 488.0L1659.0 488.1L1659.7 487.7L1660.4 487.8L1661.1 488.0L1661.8 488.6L1662.5 488.5L1663.2 488.3L1663.9 488.2L1664.6 488.3L1665.3 488.9L1666.0 488.1L1666.7 488.8L1667.4 488.2L1668.1 488.9L1668.8 488.1L1669.5 488.2L1670.2 488.7L1670.9 488.2L1671.6 488.1L1672.3 489.0L1673.0 488.7L1673.7 488.8L1674.4 489.3L1675.1 488.4L1675.8 489.3L1676.5 489.5L1677.2 489.4L1677.9 489.4L1678.6 488.7L1679.3 489.2L1680.0 489.3L1680.7 489.6L1681.4 489.6L1682.1 490.0L1682.8 489.8L1683.5 489.7L1684.2 489.2L1684.9 489.0L1685.6 489.0L1686.3 489.8L1687.0 489.6L1687.7 490.1L1688.4 490.0L1689.1 489.1L1689.8 489.7L1690.5 489.1L1691.2 489.6L1691.9 489.0L1692.6 489.7L1693.3 489.4L1694.0 489.9L1694.7 489.8L1695.4 489.5L1696.1 489.7L1696.8 489.6L1697.5 489.8L1698.2 489.6L1698.9 489.5L1699.6 489.7L1700.3 489.5L1701.0 490.3L1701.7 489.5L1702.4 490.5L1703.1 490.3L1703.8 490.4L1704.5 490.0L1705.2 489.7L1705.9 489.7L1706.6 489.6L1707.3 490.4L1708.0 489.9L1708.7 489.9L1709.4 490.6" stroke="#38b8c8" stroke-width="1.5" fill="none"/><path d="M14 789H63.3V664L63.60 677.9L63.75 737.0L63.90 688.8L64.05 737.0L64.20 697.2L64.35 737.0L64.50 703.8L64.65 737.0L64.80 709.0L64.95 736.0L65.10 712.9L65.25 734.0L65.40 716.1L65.55 732.5L65.70 718.5L65.85 731.3L66.00 720.4L66.15 730.3L66.30 721.8L66.45 729.6L66.60 723.0L66.75 729.0L66.90 723.9L67.05 728.6L67.20 724.6L67.35 728.2L67.50 725.1L67.65 728.0L67.80 725.5L67.95 727.7L68.10 725.8L68.25 727.6L68.40 726.1L68.55 727.4L69 727.2L70 726.9L71 726.5L72 726.5L73 726.8L74 727.3L75 727.0L76 726.7L77 726.9L78 727.0L79 726.5L80 727.4L81 726.8L82 726.8L83 726.7L84 726.6L85 726.5L86 726.9L87 727.3L88 727.5L89 727.4L90 727.5L91 726.4L92 727.5L93 727.6L94 726.9L95 726.8L96 727.0L97 727.5L98 727.6L99 727.5L100 727.4L101 727.5L102 727.1L103 727.0L104 726.8L105 726.8L106 727.4L107 727.5L108 726.5L109 727.5L110 727.3L111 727.2L112 726.7L113 726.5L114 727.1L115 726.7L116.1 727V789L118 788.7L120 788.7L122 788.1L124 788.7L126 789.0L128 788.5L130 788.6L132 789.2L134 789.2L136 789.1L138 789.2L140 788.1L142 789.2L144 788.9L146 788.9L148 788.7L150 788.5L152 788.9L154 788.5L156 788.9L158 788.8L160 788.5L162 788.6L164 788.0L166 788.7L168 788.3L170 789.3L172 788.5L174 789.1L176 788.5L178 788.2L180 788.9L182 789.3L184 789.2L186 788.1L188 789.1L190 789.2L192 789.2H193.2V658L193.54 673.3L193.69 737.0L193.84 685.1L193.99 737.0L194.14 694.4L194.29 737.0L194.44 701.6L194.59 737.0L194.74 707.2L194.89 736.9L195.04 711.6L195.19 734.7L195.34 715.0L195.49 733.0L195.64 717.7L195.79 731.7L195.94 719.7L196.09 730.6L196.24 721.3L196.39 729.8L196.54 722.6L196.69 729.2L196.84 723.6L196.99 728.7L197.14 724.3L197.29 728.3L197.44 724.9L197.59 728.0L197.74 725.4L197.89 727.8L198.04 725.7L198.19 727.6L198.34 726.0L198.49 727.5L199 727.5L200 726.5L201 727.1L202 727.6L203 727.5L204 727.3L205 726.9L206 727.6L207 726.5L208 727.1L209 726.6L210 727.4L211 726.5L212 727.4L213 727.5L214 726.5L215 727.2L216 726.9L217 726.5L218 727.2L219 727.4L220 726.7L221 726.6L222 727.4L223 726.5L224 726.5L225 727.1L226 726.5L227 726.7L228 727.3L229 727.1L230 726.5L231 727.5L232 727.2L233 726.9L234 727.3L235 726.5L236 727.4L237 727.6L238 726.8L239 726.8L240 727.0L241 727.4L242 727.3L243 726.8L244 727.4L245 726.4L246.0 727V789L248 789.1L250 789.2L252 789.3L254 789.0L256 787.9L258 788.5L260 789.3L262 788.7L264 789.2L266 789.2L268 787.9L270 789.0L272 788.8L274 789.2L276 789.3L278 788.7L280 788.6L282 787.9L284 788.2L286 789.1L288 787.8L290 788.5L292 787.9L294 787.8L296 787.9L298 788.1L300 788.5L302 789.2L304 788.0L306 788.0L308 788.8L310 788.1L312 787.8L314 788.5L316 788.9L318 788.2L320 788.9L322 787.9H323.2V664L323.48 677.9L323.63 737.0L323.78 688.8L323.93 737.0L324.08 697.2L324.23 737.0L324.38 703.8L324.53 737.0L324.68 709.0L324.83 736.0L324.98 712.9L325.13 734.0L325.28 716.1L325.43 732.5L325.58 718.5L325.73 731.3L325.88 720.4L326.03 730.3L326.18 721.8L326.33 729.6L326.48 723.0L326.63 729.0L326.78 723.9L326.93 728.6L327.08 724.6L327.23 728.2L327.38 725.1L327.53 728.0L327.68 725.5L327.83 727.7L327.98 725.8L328.13 727.6L328.28 726.1L328.43 727.4L329 727.5L330 727.0L331 727.1L332 727.2L333 726.8L334 727.2L335 726.6L336 726.5L337 726.8L338 727.3L339 726.5L340 726.8L341 726.7L342 726.5L343 727.6L344 727.1L345 726.5L346 726.9L347 727.5L348 727.4L349 726.9L350 726.6L351 727.4L352 726.9L353 726.8L354 727.4L355 726.8L356 726.9L357 726.7L358 727.3L359 727.4L360 726.4L361 727.5L362 727.5L363 727.1L364 726.8L365 727.1L366 726.5L367 727.6L368 726.8L369 726.4L370 727.2L371 727.5L372 726.6L373 727.5L374 726.7L376.0 727V789L377 788.5L379 788.8L381 789.0L383 788.2L385 789.1L387 787.8L389 789.1L391 788.7L393 788.4L395 788.7L397 788.4L399 787.8L401 789.0L403 789.1L405 788.5L407 789.2L409 788.2L411 788.0L413 788.6L415 789.1L417 789.2L419 787.8L421 788.4L423 787.9L425 789.3L427 788.0L429 787.7L431 788.3L433 789.0L435 787.8L437 788.5L439 787.9L441 788.8L443 789.3L445 789.1L447 788.6L449 788.9L451 788.9H453.1V657L453.42 672.5L453.57 737.0L453.72 684.5L453.87 737.0L454.02 693.9L454.17 737.0L454.32 701.2L454.47 737.0L454.62 706.9L454.77 737.0L454.92 711.4L455.07 734.8L455.22 714.8L455.37 733.1L455.52 717.5L455.67 731.7L455.82 719.6L455.97 730.7L456.12 721.3L456.27 729.9L456.42 722.5L456.57 729.2L456.72 723.5L456.87 728.7L457.02 724.3L457.17 728.4L457.32 724.9L457.47 728.1L457.62 725.4L457.77 727.8L457.92 725.7L458.07 727.6L458.22 726.0L458.37 727.5L459 727.3L460 726.8L461 727.3L462 726.9L463 726.5L464 726.6L465 727.5L466 727.2L467 727.3L468 727.4L469 726.7L470 727.2L471 727.0L472 726.9L473 727.2L474 727.0L475 726.9L476 726.6L477 726.5L478 727.2L479 727.5L480 727.1L481 727.1L482 726.8L483 726.4L484 726.9L485 727.3L486 726.6L487 727.0L488 726.6L489 727.3L490 727.0L491 726.9L492 727.3L493 727.1L494 726.9L495 727.4L496 727.2L497 727.4L498 726.9L499 727.4L500 727.1L501 727.0L502 727.5L503 727.6L504 727.5L505.9 727V789L507 788.7L509 788.9L511 788.8L513 788.3L515 788.5L517 788.4L519 789.1L521 788.3L523 788.2L525 789.0L527 787.9L529 788.1L531 788.3L533 789.3L535 788.5L537 788.0L539 788.2L541 788.9L543 789.0L545 788.6L547 788.8L549 788.5L551 788.3L553 788.9L555 788.7L557 788.9L559 788.1L561 788.0L563 788.5L565 788.2L567 787.7L569 787.8L571 788.4L573 788.2L575 788.2L577 787.9L579 789.2L581 789.0H583.1V661L583.36 675.6L583.51 737.0L583.66 687.0L583.81 737.0L583.96 695.8L584.11 737.0L584.26 702.7L584.41 737.0L584.56 708.1L584.71 736.5L584.86 712.3L585.01 734.4L585.16 715.5L585.31 732.7L585.46 718.1L585.61 731.5L585.76 720.0L585.91 730.5L586.06 721.6L586.21 729.7L586.36 722.8L586.51 729.1L586.66 723.7L586.81 728.6L586.96 724.4L587.11 728.3L587.26 725.0L587.41 728.0L587.56 725.4L587.71 727.8L587.86 725.8L588.01 727.6L588.16 726.1L588.31 727.5L589 726.7L590 726.6L591 727.6L592 727.5L593 727.2L594 726.8L595 727.1L596 726.5L597 727.5L598 727.6L599 727.4L600 726.9L601 726.9L602 727.1L603 727.0L604 727.4L605 727.3L606 727.5L607 727.2L608 726.6L609 727.1L610 726.5L611 727.3L612 726.6L613 727.5L614 727.3L615 727.3L616 727.2L617 727.4L618 726.5L619 727.3L620 727.2L621 727.2L622 726.7L623 726.8L624 726.7L625 727.5L626 726.6L627 726.6L628 726.9L629 727.4L630 727.6L631 726.6L632 726.4L633 727.4L634 727.4L635.9 727V789L637 788.5L639 788.7L641 788.8L643 788.8L645 789.1L647 788.5L649 789.2L651 788.9L653 788.6L655 788.3L657 787.9L659 787.9L661 788.3L663 788.5L665 789.1L667 787.8L669 788.6L671 788.0L673 788.3L675 788.5L677 788.3L679 788.9L681 789.2L683 788.6L685 788.2L687 788.1L689 788.7L691 787.9L693 787.7L695 788.8L697 788.7L699 789.2L701 788.4L703 787.9L705 789.0L707 788.6L709 789.2L711 788.2H713.0V659L713.30 674.0L713.45 737.0L713.60 685.8L713.75 737.0L713.90 694.9L714.05 737.0L714.20 702.0L714.35 737.0L714.50 707.5L714.65 736.7L714.80 711.8L714.95 734.6L715.10 715.2L715.25 732.9L715.40 717.8L715.55 731.6L715.70 719.8L715.85 730.6L716.00 721.4L716.15 729.8L716.30 722.7L716.45 729.2L716.60 723.6L716.75 728.7L716.90 724.4L717.05 728.3L717.20 724.9L717.35 728.0L717.50 725.4L717.65 727.8L717.80 725.8L717.95 727.6L718.10 726.0L718.25 727.5L719 726.8L720 726.6L721 726.5L722 726.5L723 727.4L724 726.7L725 726.7L726 727.6L727 726.6L728 727.1L729 726.7L730 727.5L731 727.3L732 727.0L733 726.6L734 727.1L735 726.6L736 727.2L737 726.9L738 727.3L739 727.3L740 726.7L741 727.2L742 726.6L743 726.6L744 727.5L745 726.5L746 727.4L747 727.0L748 726.4L749 726.5L750 727.2L751 726.6L752 726.7L753 726.7L754 727.4L755 727.5L756 726.6L757 727.4L758 726.6L759 727.3L760 727.4L761 726.8L762 726.5L763 727.6L764 727.2L765.8 727V789L767 788.3L769 788.4L771 788.6L773 788.9L775 788.1L777 788.2L779 788.3L781 788.8L783 788.9L785 788.7L787 788.5L789 788.4L791 789.0L793 788.9L795 788.5L797 787.8L799 788.5L801 788.4L803 788.5L805 788.3L807 788.5L809 788.4L811 788.8L813 788.2L815 788.0L817 788.8L819 788.4L821 788.4L823 789.1L825 789.2L827 787.7L829 788.3L831 788.2L833 789.3L835 789.1L837 788.5L839 788.6L841 788.2H842.9V662L843.24 676.4L843.39 737.0L843.54 687.6L843.69 737.0L843.84 696.3L843.99 737.0L844.14 703.1L844.29 737.0L844.44 708.4L844.59 736.3L844.74 712.5L844.89 734.3L845.04 715.7L845.19 732.6L845.34 718.2L845.49 731.4L845.64 720.1L845.79 730.4L845.94 721.7L846.09 729.7L846.24 722.8L846.39 729.1L846.54 723.8L846.69 728.6L846.84 724.5L846.99 728.3L847.14 725.0L847.29 728.0L847.44 725.5L847.59 727.8L847.74 725.8L847.89 727.6L848.04 726.1L848.19 727.5L848 727.1L849 726.9L850 726.4L851 726.6L852 726.5L853 727.5L854 727.0L855 727.3L856 727.4L857 726.9L858 726.9L859 727.4L860 727.3L861 726.4L862 726.9L863 727.5L864 726.4L865 726.4L866 727.3L867 727.5L868 726.8L869 726.5L870 726.5L871 727.4L872 727.0L873 726.5L874 726.9L875 727.3L876 726.5L877 726.7L878 726.7L879 726.7L880 726.7L881 727.3L882 727.3L883 726.5L884 727.4L885 726.6L886 727.3L887 726.7L888 727.2L889 726.8L890 726.5L891 726.8L892 727.2L893 726.9L894 726.8L895.7 727V789L897 788.1L899 788.7L901 789.1L903 788.4L905 788.0L907 788.5L909 788.5L911 788.9L913 788.8L915 788.8L917 788.4L919 788.4L921 789.3L923 788.9L925 788.5L927 788.0L929 788.3L931 788.0L933 787.8L935 789.0L937 788.1L939 788.1L941 788.3L943 787.9L945 787.8L947 788.7L949 788.7L951 787.8L953 788.4L955 788.1L957 788.8L959 788.3L961 788.5L963 789.2L965 787.9L967 788.9L969 787.8L971 788.2H972.9V657L973.18 672.5L973.33 737.0L973.48 684.5L973.63 737.0L973.78 693.9L973.93 737.0L974.08 701.2L974.23 737.0L974.38 706.9L974.53 737.0L974.68 711.4L974.83 734.8L974.98 714.8L975.13 733.1L975.28 717.5L975.43 731.7L975.58 719.6L975.73 730.7L975.88 721.3L976.03 729.9L976.18 722.5L976.33 729.2L976.48 723.5L976.63 728.7L976.78 724.3L976.93 728.4L977.08 724.9L977.23 728.1L977.38 725.4L977.53 727.8L977.68 725.7L977.83 727.6L977.98 726.0L978.13 727.5L978 726.4L979 726.9L980 727.2L981 727.1L982 726.8L983 726.8L984 726.6L985 726.8L986 727.2L987 726.9L988 726.6L989 727.0L990 727.6L991 726.9L992 727.1L993 726.8L994 727.2L995 726.9L996 726.4L997 726.6L998 726.9L999 727.0L1000 727.2L1001 726.8L1002 727.5L1003 727.3L1004 727.0L1005 727.3L1006 727.0L1007 727.2L1008 726.5L1009 727.0L1010 727.3L1011 726.8L1012 726.7L1013 726.9L1014 727.6L1015 727.3L1016 726.9L1017 726.7L1018 727.4L1019 727.2L1020 726.7L1021 727.6L1022 727.0L1023 726.6L1024 727.3L1025.7 727V789L1027 788.8L1029 787.8L1031 788.4L1033 789.2L1035 788.5L1037 787.9L1039 787.8L1041 787.8L1043 788.2L1045 788.9L1047 788.7L1049 789.1L1051 787.8L1053 788.4L1055 787.7L1057 788.0L1059 788.4L1061 788.4L1063 789.0L1065 788.4L1067 789.0L1069 788.4L1071 787.9L1073 789.1L1075 788.0L1077 789.1L1079 787.8L1081 788.2L1083 788.7L1085 788.5L1087 787.8L1089 788.2L1091 789.3L1093 789.1L1095 788.6L1097 788.0L1099 787.9L1101 788.1H1102.8V660L1103.12 674.8L1103.27 737.0L1103.42 686.4L1103.57 737.0L1103.72 695.4L1103.87 737.0L1104.02 702.4L1104.17 737.0L1104.32 707.8L1104.47 736.6L1104.62 712.1L1104.77 734.5L1104.92 715.4L1105.07 732.8L1105.22 717.9L1105.37 731.5L1105.52 719.9L1105.67 730.5L1105.82 721.5L1105.97 729.7L1106.12 722.7L1106.27 729.1L1106.42 723.7L1106.57 728.7L1106.72 724.4L1106.87 728.3L1107.02 725.0L1107.17 728.0L1107.32 725.4L1107.47 727.8L1107.62 725.8L1107.77 727.6L1107.92 726.0L1108.07 727.5L1108 727.4L1109 727.4L1110 726.5L1111 726.5L1112 727.4L1113 727.3L1114 726.8L1115 727.3L1116 726.7L1117 726.7L1118 727.3L1119 726.9L1120 726.6L1121 726.5L1122 727.2L1123 727.2L1124 727.3L1125 726.5L1126 726.7L1127 726.5L1128 727.2L1129 726.6L1130 726.7L1131 726.9L1132 726.5L1133 726.9L1134 727.5L1135 727.5L1136 726.7L1137 727.1L1138 726.9L1139 727.3L1140 727.3L1141 727.2L1142 726.5L1143 726.8L1144 727.6L1145 726.5L1146 727.3L1147 727.6L1148 727.3L1149 726.8L1150 727.1L1151 727.0L1152 727.2L1153 726.6L1154 727.4L1155.6 727V789L1157 789.2L1159 788.2L1161 788.4L1163 789.1L1165 788.0L1167 788.4L1169 788.7L1171 788.2L1173 789.2L1175 788.5L1177 788.3L1179 789.3L1181 788.2L1183 788.8L1185 788.3L1187 788.2L1189 788.4L1191 788.8L1193 788.5L1195 789.2L1197 789.0L1199 788.5L1201 788.1L1203 789.1L1205 788.6L1207 788.1L1209 789.2L1211 788.4L1213 788.3L1215 789.2L1217 789.3L1219 788.4L1221 789.2L1223 789.3L1225 788.7L1227 788.1L1229 787.9L1231 788.5H1232.8V659L1233.06 674.0L1233.21 737.0L1233.36 685.8L1233.51 737.0L1233.66 694.9L1233.81 737.0L1233.96 702.0L1234.11 737.0L1234.26 707.5L1234.41 736.7L1234.56 711.8L1234.71 734.6L1234.86 715.2L1235.01 732.9L1235.16 717.8L1235.31 731.6L1235.46 719.8L1235.61 730.6L1235.76 721.4L1235.91 729.8L1236.06 722.7L1236.21 729.2L1236.36 723.6L1236.51 728.7L1236.66 724.4L1236.81 728.3L1236.96 724.9L1237.11 728.0L1237.26 725.4L1237.41 727.8L1237.56 725.8L1237.71 727.6L1237.86 726.0L1238.01 727.5L1238 727.0L1239 727.3L1240 726.6L1241 727.6L1242 727.6L1243 726.5L1244 727.0L1245 726.4L1246 727.3L1247 726.6L1248 726.8L1249 726.8L1250 727.3L1251 726.9L1252 727.3L1253 727.1L1254 727.4L1255 726.6L1256 726.8L1257 726.9L1258 727.2L1259 727.0L1260 727.0L1261 727.5L1262 726.6L1263 726.4L1264 727.1L1265 727.1L1266 727.0L1267 727.3L1268 726.9L1269 726.9L1270 726.8L1271 726.6L1272 726.9L1273 727.0L1274 726.8L1275 726.7L1276 727.2L1277 727.0L1278 726.4L1279 726.8L1280 726.8L1281 727.0L1282 727.5L1283 726.7L1284 726.9L1285.6 727V789L1287 789.2L1289 789.0L1291 788.8L1293 788.5L1295 788.9L1297 788.8L1299 789.1L1301 788.9L1303 788.1L1305 788.8L1307 789.1L1309 788.1L1311 788.5L1313 788.9L1315 787.7L1317 788.1L1319 788.7L1321 788.2L1323 789.0L1325 788.0L1327 788.5L1329 788.4L1331 788.0L1333 789.0L1335 788.3L1337 787.8L1339 788.2L1341 788.9L1343 788.8L1345 788.0L1347 788.4L1349 788.1L1351 788.2L1353 788.9L1355 788.1L1357 787.7L1359 788.6L1361 788.0H1362.7V661L1363.00 675.6L1363.15 737.0L1363.30 687.0L1363.45 737.0L1363.60 695.8L1363.75 737.0L1363.90 702.7L1364.05 737.0L1364.20 708.1L1364.35 736.5L1364.50 712.3L1364.65 734.4L1364.80 715.5L1364.95 732.7L1365.10 718.1L1365.25 731.5L1365.40 720.0L1365.55 730.5L1365.70 721.6L1365.85 729.7L1366.00 722.8L1366.15 729.1L1366.30 723.7L1366.45 728.6L1366.60 724.4L1366.75 728.3L1366.90 725.0L1367.05 728.0L1367.20 725.4L1367.35 727.8L1367.50 725.8L1367.65 727.6L1367.80 726.1L1367.95 727.5L1368 727.0L1369 727.0L1370 726.7L1371 726.7L1372 727.4L1373 726.5L1374 727.4L1375 727.1L1376 727.2L1377 727.3L1378 727.3L1379 726.8L1380 726.5L1381 726.7L1382 727.0L1383 727.0L1384 727.0L1385 726.6L1386 726.9L1387 726.7L1388 726.4L1389 727.2L1390 726.9L1391 726.7L1392 727.6L1393 726.9L1394 726.9L1395 727.0L1396 726.6L1397 726.5L1398 726.8L1399 727.3L1400 727.6L1401 726.9L1402 726.9L1403 726.7L1404 726.5L1405 727.4L1406 727.2L1407 726.7L1408 726.9L1409 727.5L1410 726.6L1411 726.7L1412 726.9L1413 727.3L1414 727.0L1415.5 727V789L1417 788.1L1419 787.7L1421 788.6L1423 788.4L1425 787.8L1427 788.7L1429 788.0L1431 788.8L1433 788.0L1435 788.6L1437 789.2L1439 787.8L1441 788.7L1443 788.2L1445 788.4L1447 787.7L1449 787.8L1451 789.1L1453 788.4L1455 787.9L1457 788.4L1459 788.7L1461 787.7L1463 789.0L1465 788.3L1467 788.1L1469 789.1L1471 788.4L1473 787.9L1475 788.0L1477 788.8L1479 788.6L1481 788.4L1483 788.9L1485 788.2L1487 788.0L1489 788.7L1491 788.0H1492.6V658L1492.94 673.3L1493.09 737.0L1493.24 685.1L1493.39 737.0L1493.54 694.4L1493.69 737.0L1493.84 701.6L1493.99 737.0L1494.14 707.2L1494.29 736.9L1494.44 711.6L1494.59 734.7L1494.74 715.0L1494.89 733.0L1495.04 717.7L1495.19 731.7L1495.34 719.7L1495.49 730.6L1495.64 721.3L1495.79 729.8L1495.94 722.6L1496.09 729.2L1496.24 723.6L1496.39 728.7L1496.54 724.3L1496.69 728.3L1496.84 724.9L1496.99 728.0L1497.14 725.4L1497.29 727.8L1497.44 725.7L1497.59 727.6L1497.74 726.0L1497.89 727.5L1498 726.7L1499 726.5L1500 727.2L1501 727.2L1502 727.4L1503 726.6L1504 727.3L1505 726.7L1506 727.0L1507 727.0L1508 727.3L1509 726.5L1510 726.9L1511 727.4L1512 726.7L1513 726.5L1514 727.0L1515 726.8L1516 727.3L1517 727.0L1518 727.2L1519 727.2L1520 726.5L1521 727.2L1522 726.9L1523 727.0L1524 727.2L1525 726.9L1526 726.5L1527 727.1L1528 727.2L1529 727.6L1530 727.5L1531 726.4L1532 727.2L1533 726.5L1534 727.3L1535 727.6L1536 726.9L1537 727.4L1538 727.3L1539 727.0L1540 727.5L1541 726.7L1542 726.8L1543 727.4L1544 726.9L1545.4 727V789L1547 787.9L1549 788.6L1551 788.7L1553 788.3L1555 788.1L1557 788.2L1559 788.9L1561 788.7L1563 787.9L1565 789.2L1567 788.4L1569 788.6L1571 789.3L1573 788.3L1575 788.8L1577 788.6L1579 788.7L1581 788.4L1583 789.0L1585 788.5L1587 788.4L1589 788.7L1591 788.8L1593 788.0L1595 788.2L1597 788.2L1599 788.6L1601 789.3L1603 789.1L1605 788.4L1607 788.4L1609 788.1L1611 788.9L1613 788.3L1615 788.0L1617 789.0L1619 788.8L1621 788.3H1622.6V659L1622.88 674.0L1623.03 737.0L1623.18 685.8L1623.33 737.0L1623.48 694.9L1623.63 737.0L1623.78 702.0L1623.93 737.0L1624.08 707.5L1624.23 736.7L1624.38 711.8L1624.53 734.6L1624.68 715.2L1624.83 732.9L1624.98 717.8L1625.13 731.6L1625.28 719.8L1625.43 730.6L1625.58 721.4L1625.73 729.8L1625.88 722.7L1626.03 729.2L1626.18 723.6L1626.33 728.7L1626.48 724.4L1626.63 728.3L1626.78 724.9L1626.93 728.0L1627.08 725.4L1627.23 727.8L1627.38 725.8L1627.53 727.6L1627.68 726.0L1627.83 727.5L1628 727.3L1629 727.2L1630 727.1L1631 727.5L1632 726.8L1633 727.1L1634 727.1L1635 726.8L1636 727.5L1637 727.0L1638 727.0L1639 726.4L1640 726.9L1641 727.5L1642 726.4L1643 727.2L1644 726.5L1645 727.0L1646 727.3L1647 726.5L1648 727.3L1649 726.5L1650 726.8L1651 726.7L1652 727.0L1653 727.3L1654 727.2L1655 727.0L1656 726.5L1657 727.4L1658 727.0L1659 727.5L1660 726.4L1661 727.5L1662 727.2L1663 726.9L1664 727.0L1665 726.8L1666 726.7L1667 727.1L1668 726.5L1669 726.6L1670 727.1L1671 727.5L1672 727.6L1673 727.0L1674 727.3L1675.4 727V789L1677 788.2L1679 789.3L1681 788.2L1683 788.1L1685 788.3L1687 788.6L1689 788.1L1691 788.0L1693 789.0L1695 787.8L1697 788.4L1699 788.2L1701 788.6L1703 788.7L1705 788.4L1707 788.2L1709 787.7" stroke="#e8305a" stroke-width="1.6" fill="none" stroke-linejoin="bevel"/><path d="M14.0 857.1L15.5 857.3L17.0 857.0L18.5 857.1L20.0 856.8L21.5 857.2L23.0 856.8L24.5 857.2L26.0 856.9L27.5 856.7L29.0 857.2L30.5 857.4L32.0 856.9L33.5 857.3L35.0 857.3L36.5 857.3L38.0 857.0L39.5 857.2L41.0 857.1L42.5 857.3L44.0 856.7L45.5 856.9L47.0 856.8L48.5 856.9L50.0 856.6L51.5 857.0L53.0 857.0L54.5 857.0L56.0 856.7L57.5 856.6L59.0 857.4L60.5 857.0L62.0 856.7L63.5 856.8L65.0 857.2L66.5 856.7L68.0 857.1L69.5 856.9L71.0 857.3L72.5 856.8L74.0 857.3L75.5 856.9L77.0 857.4L78.5 857.2L80.0 857.2L81.5 857.2L83.0 856.8L84.5 857.3L86.0 856.8L87.5 857.0L89.0 856.9L90.5 856.7L92.0 857.4L93.5 856.9L95.0 857.2L96.5 856.9L98.0 856.9L99.5 856.9L101.0 856.8L102.5 856.7L104.0 856.9L105.5 856.9L107.0 857.0L108.5 856.7L110.0 856.6L111.5 856.9L113.0 856.8L114.5 856.7L116.0 857.0L117.5 857.2L119.0 857.0L120.5 857.4L122.0 857.1L123.5 856.6L125.0 857.0L126.5 857.1L128.0 857.1L129.5 857.1L131.0 856.7L132.5 857.2L134.0 856.7L135.5 856.7L137.0 856.6L138.5 857.0L140.0 856.7L141.5 857.3L143.0 856.8L144.5 857.0L146.0 856.8L147.5 856.6L149.0 857.4L150.5 856.8L152.0 857.1L153.5 857.3L155.0 857.2L156.5 856.7L158.0 856.9L159.5 857.3L161.0 856.9L162.5 857.1L164.0 857.0L165.5 857.2L167.0 857.1L168.5 856.9L170.0 857.3L171.5 856.8L173.0 856.9L174.5 857.2L176.0 856.8L177.5 857.0L179.0 857.2L180.5 856.8L182.0 856.9L183.5 857.0L185.0 857.1L186.5 856.7L188.0 856.7L189.5 856.8L191.0 856.9L192.5 857.2L194.0 856.9L195.5 857.0L197.0 856.7L198.5 857.2L200.0 857.3L201.5 857.1L203.0 857.2L204.5 857.1L206.0 857.1L207.5 856.8L209.0 856.6L210.5 857.1L212.0 856.9L213.5 857.2L215.0 857.0L216.5 856.8L218.0 856.7L219.5 856.8L221.0 857.1L222.5 857.0L224.0 856.7L225.5 857.0L227.0 856.9L228.5 857.4L230.0 857.3L231.5 857.2L233.0 856.8L234.5 857.3L236.0 856.9L237.5 857.1L239.0 857.3L240.5 856.8L242.0 857.4L243.5 856.8L245.0 857.1L246.5 857.3L248.0 856.7L249.5 856.7L251.0 857.2L252.5 857.0L254.0 856.7L255.5 857.4L257.0 857.2L258.5 857.2L260.0 857.2L261.5 856.6L263.0 856.7L264.5 856.6L266.0 857.0L267.5 856.6L269.0 856.7L270.5 857.4L272.0 856.7L273.5 857.2L275.0 857.1L276.5 856.9L278.0 857.1L279.5 857.2L281.0 856.9L282.5 857.0L284.0 857.2L285.5 857.1L287.0 856.9L288.5 856.9L290.0 856.8L291.5 856.9L293.0 856.6L294.5 856.8L296.0 856.8L297.5 856.7L299.0 856.7L300.5 856.9L302.0 857.0L303.5 856.8L305.0 856.9L306.5 857.3L308.0 857.3L309.5 856.9L311.0 856.6L312.5 856.7L314.0 856.9L315.5 856.7L317.0 856.8L318.5 857.1L320.0 857.3L321.5 857.2L323.0 857.0L324.5 857.0L326.0 857.1L327.5 856.7L329.0 856.8L330.5 857.2L332.0 857.1L333.5 856.9L335.0 856.7L336.5 856.9L338.0 857.1L339.5 856.8L341.0 857.2L342.5 857.4L344.0 856.6L345.5 856.7L347.0 857.2L348.5 857.2L350.0 856.7L351.5 856.8L353.0 857.3L354.5 856.8L356.0 856.9L357.5 857.4L359.0 856.9L360.5 857.3L362.0 857.0L363.5 857.0L365.0 857.0L366.5 857.0L368.0 857.2L369.5 856.7L371.0 856.8L372.5 857.3L374.0 857.0L375.5 857.3L377.0 857.4L378.5 856.8L380.0 857.2L381.5 856.7L383.0 857.1L384.5 856.8L386.0 857.0L387.5 856.9L389.0 856.7L390.5 857.1L392.0 857.3L393.5 857.0L395.0 857.0L396.5 856.9L398.0 857.4L399.5 856.7L401.0 857.3L402.5 856.8L404.0 856.7L405.5 856.9L407.0 857.1L408.5 856.7L410.0 856.7L411.5 857.0L413.0 856.8L414.5 857.3L416.0 856.7L417.5 856.7L419.0 857.4L420.5 857.2L422.0 857.3L423.5 857.0L425.0 856.9L426.5 857.1L428.0 857.0L429.5 856.8L431.0 856.7L432.5 857.3L434.0 856.8L435.5 856.6L437.0 856.9L438.5 856.8L440.0 857.0L441.5 856.7L443.0 857.0L444.5 856.9L446.0 856.8L447.5 857.3L449.0 856.8L450.5 857.2L452.0 857.3L453.5 857.1L455.0 857.2L456.5 857.3L458.0 857.3L459.5 857.2L461.0 856.9L462.5 856.8L464.0 856.9L465.5 857.2L467.0 857.1L468.5 856.9L470.0 856.9L471.5 857.2L473.0 857.2L474.5 857.0L476.0 856.7L477.5 856.8L479.0 856.8L480.5 857.0L482.0 857.0L483.5 857.0L485.0 857.4L486.5 857.3L488.0 856.7L489.5 857.2L491.0 857.0L492.5 856.7L494.0 856.8L495.5 857.0L497.0 856.9L498.5 857.2L500.0 857.2L501.5 856.8L503.0 856.6L504.5 856.8L506.0 857.1L507.5 857.3L509.0 857.3L510.5 856.9L512.0 856.6L513.5 856.7L515.0 857.0L516.5 857.3L518.0 856.6L519.5 856.7L521.0 856.9L522.5 857.3L524.0 856.9L525.5 856.7L527.0 856.7L528.5 857.3L530.0 857.0L531.5 857.2L533.0 857.0L534.5 856.8L536.0 856.7L537.5 856.7L539.0 856.7L540.5 856.9L542.0 856.7L543.5 857.3L545.0 857.3L546.5 857.1L548.0 857.4L549.5 857.1L551.0 857.3L552.5 857.2L554.0 856.9L555.5 857.3L557.0 857.1L558.5 857.1L560.0 857.0L561.5 856.8L563.0 856.7L564.5 856.8L566.0 857.1L567.5 857.1L569.0 856.8L570.5 856.9L572.0 857.1L573.5 857.1L575.0 856.9L576.5 856.9L578.0 857.3L579.5 856.8L581.0 857.1L582.5 857.0L584.0 856.8L585.5 857.0L587.0 857.4L588.5 856.7L590.0 857.0L591.5 857.0L593.0 856.8L594.5 856.7L596.0 857.1L597.5 856.9L599.0 857.1L600.5 857.0L602.0 857.3L603.5 856.9L605.0 857.1L606.5 857.1L608.0 856.9L609.5 857.0L611.0 856.9L612.5 857.1L614.0 857.0L615.5 857.1L617.0 857.4L618.5 857.0L620.0 857.1L621.5 856.9L623.0 857.0L624.5 856.6L626.0 856.9L627.5 857.1L629.0 856.7L630.5 857.1L632.0 857.0L633.5 857.4L635.0 857.0L636.5 857.1L638.0 857.2L639.5 857.4L641.0 856.8L642.5 857.2L644.0 857.4L645.5 857.0L647.0 856.9L648.5 857.0L650.0 856.8L651.5 856.7L653.0 856.9L654.5 856.6L656.0 856.9L657.5 856.9L659.0 856.6L660.5 857.0L662.0 857.1L663.5 856.8L665.0 856.9L666.5 856.9L668.0 857.3L669.5 856.9L671.0 856.9L672.5 856.7L674.0 857.2L675.5 857.0L677.0 856.9L678.5 856.8L680.0 857.0L681.5 856.7L683.0 856.8L684.5 856.8L686.0 857.2L687.5 857.2L689.0 857.1L690.5 856.7L692.0 856.7L693.5 856.7L695.0 857.0L696.5 857.2L698.0 856.9L699.5 856.9L701.0 857.3L702.5 856.8L704.0 856.8L705.5 857.1L707.0 856.6L708.5 857.3L710.0 857.1L711.5 857.4L713.0 857.0L714.5 857.1L716.0 857.0L717.5 857.1L719.0 856.7L720.5 857.2L722.0 856.6L723.5 857.1L725.0 856.7L726.5 857.1L728.0 857.2L729.5 856.6L731.0 856.7L732.5 856.9L734.0 856.9L735.5 857.1L737.0 857.3L738.5 856.7L740.0 856.7L741.5 857.4L743.0 857.1L744.5 857.4L746.0 857.0L747.5 856.9L749.0 856.6L750.5 857.1L752.0 857.4L753.5 856.9L755.0 857.2L756.5 856.8L758.0 857.4L759.5 856.7L761.0 856.8L762.5 857.1L764.0 857.1L765.5 857.0L767.0 856.8L768.5 857.0L770.0 857.1L771.5 857.3L773.0 857.2L774.5 856.9L776.0 857.4L777.5 857.0L779.0 857.1L780.5 856.8L782.0 856.7L783.5 856.8L785.0 857.3L786.5 857.1L788.0 856.8L789.5 856.8L791.0 857.3L792.5 856.9L794.0 856.8L795.5 856.9L797.0 857.3L798.5 857.3L800.0 857.2L801.5 857.3L803.0 856.9L804.5 856.8L806.0 857.0L807.5 856.6L809.0 857.3L810.5 856.8L812.0 856.7L813.5 857.1L815.0 856.7L816.5 857.3L818.0 856.9L819.5 857.0L821.0 857.3L822.5 856.9L824.0 857.4L825.5 857.0L827.0 856.9L828.5 856.7L830.0 857.0L831.5 857.2L833.0 856.7L834.5 857.4L836.0 856.8L837.5 857.1L839.0 857.3L840.5 856.7L842.0 856.8L843.5 857.3L845.0 857.3L846.5 856.6L848.0 857.1L849.5 857.2L851.0 856.9L852.5 857.2L854.0 857.1L855.5 856.9L857.0 856.7L858.5 857.3L860.0 857.4L861.5 856.9L863.0 857.2L864.5 857.1L866.0 857.2L867.5 856.7L869.0 856.8L870.5 857.2L872.0 856.6L873.5 856.7L875.0 857.3L876.5 856.7L878.0 856.9L879.5 857.1L881.0 856.7L882.5 857.3L884.0 857.2L885.5 857.2L887.0 856.8L888.5 857.0L890.0 857.4L891.5 856.7L893.0 856.9L894.5 857.0L896.0 857.1L897.5 857.1L899.0 857.1L900.5 856.7L902.0 857.1L903.5 857.2L905.0 857.2L906.5 856.6L908.0 857.2L909.5 857.0L911.0 856.8L912.5 856.8L914.0 856.9L915.5 856.7L917.0 856.7L918.5 856.9L920.0 856.7L921.5 856.9L923.0 857.1L924.5 856.8L926.0 856.7L927.5 856.9L929.0 856.8L930.5 856.8L932.0 857.3L933.5 856.8L935.0 856.9L936.5 857.1L938.0 857.1L939.5 856.8L941.0 856.7L942.5 856.9L944.0 856.8L945.5 857.0L947.0 857.2L948.5 856.8L950.0 857.1L951.5 856.8L953.0 856.7L954.5 857.2L956.0 857.2L957.5 856.7L959.0 856.6L960.5 857.3L962.0 857.1L963.5 857.1L965.0 857.1L966.5 856.7L968.0 856.6L969.5 856.9L971.0 857.3L972.5 857.1L974.0 857.4L975.5 856.7L977.0 857.2L978.5 857.3L980.0 857.4L981.5 857.3L983.0 857.2L984.5 857.4L986.0 856.8L987.5 857.0L989.0 857.4L990.5 857.3L992.0 857.0L993.5 856.8L995.0 857.0L996.5 856.8L998.0 857.0L999.5 857.3L1001.0 856.7L1002.5 857.2L1004.0 857.0L1005.5 857.1L1007.0 857.3L1008.5 857.0L1010.0 857.2L1011.5 856.8L1013.0 857.1L1014.5 856.7L1016.0 857.2L1017.5 857.0L1019.0 856.9L1020.5 856.8L1022.0 856.6L1023.5 856.8L1025.0 856.9L1026.5 857.4L1028.0 857.3L1029.5 857.2L1031.0 856.8L1032.5 857.2L1034.0 857.4L1035.5 857.1L1037.0 856.9L1038.5 857.0L1040.0 857.2L1041.5 857.0L1043.0 856.9L1044.5 856.8L1046.0 857.0L1047.5 857.0L1049.0 857.1L1050.5 856.7L1052.0 857.0L1053.5 856.8L1055.0 856.9L1056.5 857.1L1058.0 856.8L1059.5 856.6L1061.0 856.9L1062.5 856.9L1064.0 857.2L1065.5 857.1L1067.0 857.0L1068.5 856.7L1070.0 857.3L1071.5 856.8L1073.0 856.9L1074.5 856.9L1076.0 857.1L1077.5 857.4L1079.0 856.8L1080.5 856.8L1082.0 856.7L1083.5 857.3L1085.0 856.8L1086.5 856.7L1088.0 856.7L1089.5 856.9L1091.0 857.2L1092.5 856.7L1094.0 857.1L1095.5 857.3L1097.0 856.9L1098.5 857.2L1100.0 857.0L1101.5 857.1L1103.0 857.2L1104.5 856.7L1106.0 856.6L1107.5 857.4L1109.0 856.8L1110.5 857.4L1112.0 856.9L1113.5 856.7L1115.0 857.3L1116.5 856.8L1118.0 856.7L1119.5 857.0L1121.0 857.2L1122.5 856.8L1124.0 857.1L1125.5 857.4L1127.0 857.0L1128.5 857.4L1130.0 857.2L1131.5 857.3L1133.0 856.6L1134.5 857.0L1136.0 857.0L1137.5 857.0L1139.0 857.2L1140.5 857.2L1142.0 857.4L1143.5 856.7L1145.0 856.7L1146.5 857.1L1148.0 856.6L1149.5 856.6L1151.0 856.8L1152.5 857.4L1154.0 857.4L1155.5 856.6L1157.0 857.2L1158.5 856.7L1160.0 857.3L1161.5 856.7L1163.0 857.0L1164.5 857.3L1166.0 856.6L1167.5 857.4L1169.0 856.8L1170.5 856.9L1172.0 856.8L1173.5 856.7L1175.0 857.1L1176.5 857.0L1178.0 857.0L1179.5 857.3L1181.0 856.7L1182.5 856.9L1184.0 857.1L1185.5 856.9L1187.0 856.9L1188.5 857.1L1190.0 857.0L1191.5 856.7L1193.0 857.0L1194.5 857.3L1196.0 857.1L1197.5 857.2L1199.0 856.8L1200.5 856.6L1202.0 857.2L1203.5 856.8L1205.0 857.0L1206.5 856.7L1208.0 857.2L1209.5 857.3L1211.0 856.6L1212.5 857.3L1214.0 857.1L1215.5 857.2L1217.0 856.8L1218.5 857.3L1220.0 856.8L1221.5 857.2L1223.0 857.0L1224.5 857.0L1226.0 856.9L1227.5 857.3L1229.0 856.7L1230.5 856.9L1232.0 857.0L1233.5 856.7L1235.0 856.7L1236.5 857.1L1238.0 856.9L1239.5 856.7L1241.0 856.6L1242.5 857.3L1244.0 857.3L1245.5 857.2L1247.0 857.2L1248.5 856.9L1250.0 856.8L1251.5 856.9L1253.0 856.9L1254.5 856.6L1256.0 857.2L1257.5 857.3L1259.0 857.0L1260.5 856.9L1262.0 857.2L1263.5 857.2L1265.0 856.9L1266.5 857.2L1268.0 857.3L1269.5 856.8L1271.0 856.9L1272.5 856.8L1274.0 857.3L1275.5 857.3L1277.0 857.3L1278.5 857.0L1280.0 857.2L1281.5 856.8L1283.0 857.1L1284.5 856.8L1286.0 857.3L1287.5 857.1L1289.0 857.0L1290.5 857.0L1292.0 857.2L1293.5 856.6L1295.0 857.3L1296.5 856.6L1298.0 856.7L1299.5 857.3L1301.0 856.9L1302.5 857.3L1304.0 856.8L1305.5 857.4L1307.0 856.7L1308.5 857.0L1310.0 856.7L1311.5 856.8L1313.0 856.9L1314.5 857.1L1316.0 856.7L1317.5 857.0L1319.0 856.9L1320.5 857.3L1322.0 857.0L1323.5 857.1L1325.0 857.1L1326.5 856.8L1328.0 856.8L1329.5 857.2L1331.0 856.6L1332.5 857.0L1334.0 857.3L1335.5 857.4L1337.0 857.2L1338.5 857.2L1340.0 856.9L1341.5 857.0L1343.0 856.9L1344.5 856.9L1346.0 857.2L1347.5 856.9L1349.0 857.0L1350.5 856.7L1352.0 857.3L1353.5 856.6L1355.0 857.4L1356.5 857.0L1358.0 856.9L1359.5 857.4L1361.0 857.3L1362.5 856.6L1364.0 857.2L1365.5 856.9L1367.0 857.0L1368.5 857.3L1370.0 857.1L1371.5 856.7L1373.0 857.3L1374.5 857.0L1376.0 857.2L1377.5 856.6L1379.0 857.4L1380.5 857.0L1382.0 856.7L1383.5 857.4L1385.0 857.0L1386.5 856.7L1388.0 857.3L1389.5 856.7L1391.0 857.2L1392.5 856.7L1394.0 856.6L1395.5 856.7L1397.0 857.2L1398.5 857.1L1400.0 856.7L1401.5 857.3L1403.0 857.2L1404.5 857.3L1406.0 857.1L1407.5 857.1L1409.0 857.1L1410.5 857.3L1412.0 856.7L1413.5 857.3L1415.0 857.2L1416.5 857.2L1418.0 857.1L1419.5 857.3L1421.0 857.1L1422.5 856.9L1424.0 857.0L1425.5 856.8L1427.0 856.6L1428.5 857.1L1430.0 857.1L1431.5 857.2L1433.0 857.2L1434.5 856.7L1436.0 856.7L1437.5 856.7L1439.0 857.2L1440.5 856.7L1442.0 857.4L1443.5 856.8L1445.0 857.1L1446.5 857.3L1448.0 857.4L1449.5 856.9L1451.0 857.1L1452.5 857.0L1454.0 857.0L1455.5 857.1L1457.0 857.4L1458.5 856.9L1460.0 856.8L1461.5 857.3L1463.0 857.1L1464.5 856.8L1466.0 857.3L1467.5 856.6L1469.0 857.0L1470.5 856.8L1472.0 857.3L1473.5 857.1L1475.0 857.0L1476.5 857.1L1478.0 856.9L1479.5 857.2L1481.0 857.1L1482.5 856.6L1484.0 856.6L1485.5 856.8L1487.0 857.2L1488.5 856.7L1490.0 856.8L1491.5 856.7L1493.0 856.6L1494.5 856.8L1496.0 857.4L1497.5 856.8L1499.0 857.4L1500.5 856.7L1502.0 857.1L1503.5 856.9L1505.0 856.6L1506.5 856.9L1508.0 857.0L1509.5 857.1L1511.0 857.2L1512.5 856.7L1514.0 857.4L1515.5 857.0L1517.0 857.0L1518.5 857.3L1520.0 857.2L1521.5 856.6L1523.0 856.8L1524.5 857.0L1526.0 856.8L1527.5 857.3L1529.0 857.0L1530.5 857.0L1532.0 856.9L1533.5 857.1L1535.0 857.3L1536.5 856.8L1538.0 857.0L1539.5 857.0L1541.0 857.0L1542.5 857.4L1544.0 857.2L1545.5 857.2L1547.0 856.9L1548.5 856.8L1550.0 856.9L1551.5 857.4L1553.0 856.7L1554.5 857.1L1556.0 856.7L1557.5 857.0L1559.0 856.7L1560.5 857.4L1562.0 857.2L1563.5 856.6L1565.0 857.3L1566.5 857.1L1568.0 857.0L1569.5 857.3L1571.0 856.8L1572.5 856.6L1574.0 857.3L1575.5 856.8L1577.0 857.1L1578.5 856.8L1580.0 857.2L1581.5 856.7L1583.0 857.4L1584.5 856.7L1586.0 856.7L1587.5 856.6L1589.0 857.3L1590.5 856.8L1592.0 856.6L1593.5 856.9L1595.0 857.3L1596.5 857.2L1598.0 857.4L1599.5 857.0L1601.0 856.7L1602.5 857.3L1604.0 856.8L1605.5 856.7L1607.0 857.3L1608.5 857.2L1610.0 856.8L1611.5 856.8L1613.0 856.6L1614.5 856.9L1616.0 857.1L1617.5 856.9L1619.0 856.7L1620.5 856.6L1622.0 857.3L1623.5 856.7L1625.0 856.7L1626.5 856.9L1628.0 856.8L1629.5 856.8L1631.0 857.3L1632.5 857.2L1634.0 856.8L1635.5 856.9L1637.0 856.8L1638.5 857.1L1640.0 856.8L1641.5 857.3L1643.0 857.0L1644.5 856.7L1646.0 857.3L1647.5 857.3L1649.0 857.3L1650.5 857.3L1652.0 857.0L1653.5 857.4L1655.0 856.6L1656.5 857.3L1658.0 857.1L1659.5 857.0L1661.0 856.7L1662.5 856.7L1664.0 857.4L1665.5 857.3L1667.0 856.9L1668.5 856.7L1670.0 857.3L1671.5 857.0L1673.0 857.0L1674.5 856.6L1676.0 857.2L1677.5 856.6L1679.0 856.6L1680.5 857.0L1682.0 856.6L1683.5 857.2L1685.0 856.9L1686.5 856.7L1688.0 857.3L1689.5 856.6L1691.0 857.1L1692.5 857.3L1694.0 857.0L1695.5 857.2L1697.0 856.7L1698.5 857.2L1700.0 857.1L1701.5 857.3L1703.0 856.7L1704.5 856.9L1706.0 856.8L1707.5 857.1L1709.0 856.6" stroke="#8cc43c" stroke-width="1.8" fill="none"/><path d="M63.8 840.2V872.1M64.5 844.7V868.0M65.2 846.8V866.2M65.9 842.9V869.7M66.6 849.9V863.4M67.3 849.4V863.8M68.0 847.1V865.9M68.7 847.4V865.6M69.4 851.5V862.0M70.1 851.4V862.0M70.8 851.8V861.7M71.5 851.6V861.9M72.2 851.5V861.9M72.9 851.1V862.3M73.6 851.1V862.3M74.3 851.9V861.6M75.0 853.6V860.1M75.7 854.3V859.4M76.4 853.8V859.9M77.1 853.6V860.1M77.8 854.3V859.5M78.5 853.6V860.1M79.2 853.9V859.8M79.9 854.8V859.0M80.6 854.8V859.0M81.3 854.4V859.3M82.0 855.0V858.8M82.7 855.5V858.4M83.4 855.2V858.6M84.1 855.8V858.1M84.8 855.7V858.1M85.5 855.6V858.2M86.2 856.1V857.8M86.9 855.8V858.1M87.6 856.0V857.9M88.3 856.3V857.6M89.0 856.1V857.8M89.7 856.5V857.5M90.4 856.3V857.6M91.1 856.4V857.6M91.8 856.3V857.6M92.5 856.3V857.6M93.2 856.4V857.6M93.9 856.4V857.5M94.6 856.6V857.3M95.3 856.6V857.4M96.0 856.6V857.4M96.7 856.7V857.2M97.4 856.8V857.2M98.1 856.7V857.3M98.8 856.7V857.3M99.5 856.8V857.2M100.2 856.7V857.3M100.9 856.7V857.2M101.6 856.7V857.2M102.3 856.8V857.2M103.0 856.8V857.1M103.7 856.8V857.2M104.4 856.9V857.1M105.1 856.9V857.1M117.3 846.9V866.1M118.0 847.3V865.8M118.7 851.5V861.9M119.4 848.6V864.6M120.1 850.8V862.5M120.8 850.5V862.9M121.5 853.0V860.6M122.2 852.8V860.7M122.9 853.3V860.3M123.6 852.7V860.9M124.3 854.2V859.5M125.0 853.2V860.4M125.7 854.8V859.0M126.4 853.8V859.9M127.1 854.5V859.3M127.8 855.0V858.8M128.5 854.6V859.2M129.2 854.9V858.9M129.9 855.5V858.4M130.6 855.5V858.3M131.3 856.0V857.9M132.0 855.6V858.3M132.7 856.3V857.6M133.4 856.1V857.8M134.1 856.4V857.6M134.8 856.3V857.7M135.5 856.4V857.6M136.2 856.5V857.4M136.9 856.5V857.4M137.6 856.6V857.4M138.3 856.6V857.4M139.0 856.7V857.3M139.7 856.7V857.3M140.4 856.7V857.3M141.1 856.8V857.2M141.8 856.7V857.3M142.5 856.7V857.3M143.2 856.7V857.2M143.9 856.8V857.2M144.6 856.8V857.2M193.7 841.0V871.4M194.4 843.9V868.8M195.1 846.4V866.6M195.8 844.3V868.4M196.5 846.1V866.8M197.2 847.1V865.9M197.9 843.9V868.8M198.6 849.9V863.4M199.3 850.8V862.5M200.0 849.3V864.0M200.7 848.5V864.6M201.4 849.5V863.7M202.1 850.5V862.9M202.8 852.1V861.4M203.5 852.3V861.2M204.2 852.8V860.7M204.9 853.5V860.2M205.6 853.2V860.4M206.3 852.6V861.0M207.0 854.0V859.7M207.7 854.3V859.4M208.4 853.7V859.9M209.1 854.6V859.1M209.8 854.8V858.9M210.5 855.3V858.5M211.2 854.8V858.9M211.9 855.4V858.5M212.6 855.5V858.4M213.3 854.9V858.9M214.0 855.9V858.0M214.7 855.2V858.6M215.4 855.2V858.6M216.1 855.9V858.0M216.8 856.1V857.8M217.5 855.9V858.0M218.2 855.7V858.2M218.9 855.9V858.0M219.6 856.2V857.7M220.3 856.1V857.8M221.0 856.3V857.6M221.7 856.4V857.5M222.4 856.3V857.6M223.1 856.4V857.6M223.8 856.6V857.4M224.5 856.4V857.6M225.2 856.5V857.5M225.9 856.6V857.4M226.6 856.5V857.4M227.3 856.6V857.4M228.0 856.7V857.3M228.7 856.6V857.3M229.4 856.6V857.4M230.1 856.7V857.3M230.8 856.8V857.2M231.5 856.8V857.2M232.2 856.8V857.2M232.9 856.8V857.2M233.6 856.8V857.2M234.3 856.8V857.2M235.0 856.8V857.1M247.2 849.9V863.4M247.9 849.1V864.1M248.6 848.5V864.7M249.3 849.3V863.9M250.0 852.1V861.4M250.7 852.5V861.0M251.4 852.5V861.0M252.1 852.9V860.7M252.8 853.5V860.2M253.5 852.8V860.8M254.2 853.9V859.7M254.9 854.0V859.7M255.6 854.3V859.4M256.3 854.3V859.4M257.0 854.5V859.3M257.7 855.2V858.7M258.4 855.5V858.4M259.1 855.1V858.7M259.8 855.2V858.6M260.5 855.3V858.5M261.2 855.6V858.2M261.9 856.0V857.9M262.6 856.1V857.8M263.3 856.3V857.7M264.0 856.3V857.6M264.7 856.2V857.7M265.4 856.4V857.5M266.1 856.3V857.6M266.8 856.3V857.6M267.5 856.6V857.4M268.2 856.4V857.5M268.9 856.7V857.3M269.6 856.7V857.3M270.3 856.7V857.3M271.0 856.8V857.2M271.7 856.7V857.2M272.4 856.7V857.3M273.1 856.8V857.2M273.8 856.8V857.2M274.5 856.8V857.2M323.7 840.2V872.1M324.4 839.7V872.6M325.1 837.1V874.9M325.8 844.7V868.1M326.5 839.5V872.7M327.2 848.8V864.4M327.9 846.1V866.8M328.6 846.1V866.8M329.3 845.7V867.2M330.0 849.3V863.9M330.7 850.7V862.7M331.4 851.8V861.7M332.1 847.8V865.3M332.8 848.6V864.6M333.5 851.0V862.4M334.2 851.1V862.3M334.9 850.1V863.2M335.6 851.1V862.3M336.3 851.3V862.2M337.0 854.2V859.6M337.7 852.5V861.1M338.4 852.3V861.2M339.1 853.4V860.3M339.8 853.6V860.0M340.5 853.6V860.1M341.2 853.6V860.1M341.9 854.8V859.0M342.6 854.1V859.6M343.3 855.5V858.3M344.0 855.3V858.5M344.7 855.5V858.3M345.4 855.6V858.3M346.1 855.1V858.7M346.8 855.9V858.0M347.5 855.5V858.3M348.2 855.6V858.2M348.9 856.3V857.7M349.6 855.7V858.2M350.3 856.0V857.9M351.0 856.0V857.9M351.7 856.3V857.6M352.4 856.1V857.8M353.1 856.4V857.6M353.8 856.3V857.6M354.5 856.3V857.6M355.2 856.4V857.5M355.9 856.5V857.5M356.6 856.5V857.4M357.3 856.5V857.5M358.0 856.7V857.3M358.7 856.6V857.4M359.4 856.6V857.4M360.1 856.7V857.2M360.8 856.8V857.2M361.5 856.6V857.3M362.2 856.7V857.2M362.9 856.8V857.2M363.6 856.8V857.2M364.3 856.9V857.1M365.0 856.8V857.2M377.2 849.9V863.4M377.9 851.0V862.4M378.6 849.1V864.1M379.3 851.7V861.8M380.0 849.3V864.0M380.7 851.5V862.0M381.4 852.7V860.9M382.1 851.7V861.7M382.8 853.4V860.2M383.5 852.3V861.3M384.2 852.8V860.8M384.9 853.2V860.4M385.6 854.1V859.6M386.3 854.4V859.3M387.0 855.3V858.6M387.7 855.3V858.5M388.4 855.7V858.2M389.1 855.9V858.0M389.8 855.1V858.7M390.5 855.6V858.3M391.2 855.7V858.1M391.9 855.6V858.3M392.6 856.2V857.7M393.3 855.8V858.1M394.0 856.4V857.6M394.7 856.1V857.8M395.4 856.1V857.8M396.1 856.4V857.6M396.8 856.5V857.4M397.5 856.5V857.5M398.2 856.4V857.5M398.9 856.6V857.3M399.6 856.5V857.4M400.3 856.7V857.2M401.0 856.8V857.2M401.7 856.7V857.3M402.4 856.8V857.2M403.1 856.8V857.2M403.8 856.8V857.2M404.5 856.8V857.2M453.6 843.7V869.0M454.3 842.8V869.8M455.0 845.3V867.5M455.7 847.5V865.6M456.4 849.3V863.9M457.1 848.6V864.6M457.8 849.7V863.6M458.5 848.7V864.4M459.2 850.7V862.6M459.9 848.6V864.5M460.6 851.0V862.4M461.3 852.7V860.9M462.0 851.0V862.4M462.7 852.3V861.3M463.4 851.1V862.3M464.1 851.8V861.7M464.8 852.4V861.2M465.5 853.3V860.4M466.2 853.1V860.5M466.9 854.3V859.5M467.6 853.2V860.4M468.3 853.9V859.7M469.0 855.2V858.6M469.7 854.4V859.3M470.4 855.6V858.3M471.1 855.3V858.6M471.8 855.1V858.7M472.5 855.3V858.5M473.2 855.9V858.0M473.9 855.3V858.6M474.6 855.8V858.0M475.3 856.2V857.7M476.0 855.8V858.1M476.7 855.9V858.0M477.4 856.2V857.7M478.1 856.2V857.7M478.8 856.4V857.5M479.5 856.1V857.8M480.2 856.1V857.8M480.9 856.4V857.5M481.6 856.5V857.4M482.3 856.3V857.6M483.0 856.3V857.6M483.7 856.4V857.5M484.4 856.6V857.3M485.1 856.6V857.4M485.8 856.5V857.4M486.5 856.6V857.4M487.2 856.6V857.4M487.9 856.7V857.3M488.6 856.8V857.2M489.3 856.7V857.3M490.0 856.8V857.2M490.7 856.8V857.2M491.4 856.8V857.2M492.1 856.8V857.2M492.8 856.9V857.1M493.5 856.8V857.2M494.2 856.9V857.1M494.9 856.9V857.1M507.1 845.9V867.0M507.8 847.2V865.9M508.5 850.9V862.5M509.2 850.8V862.5M509.9 850.0V863.3M510.6 852.3V861.2M511.3 851.4V862.0M512.0 853.8V859.9M512.7 854.3V859.4M513.4 852.7V860.8M514.1 853.2V860.4M514.8 853.9V859.8M515.5 853.6V860.1M516.2 854.3V859.5M516.9 855.0V858.8M517.6 855.4V858.4M518.3 855.3V858.5M519.0 854.9V858.9M519.7 856.0V857.9M520.4 855.6V858.3M521.1 855.4V858.5M521.8 856.0V857.9M522.5 855.8V858.1M523.2 856.2V857.7M523.9 856.1V857.8M524.6 856.1V857.9M525.3 856.3V857.6M526.0 856.4V857.6M526.7 856.4V857.5M527.4 856.5V857.5M528.1 856.4V857.5M528.8 856.7V857.3M529.5 856.7V857.3M530.2 856.6V857.3M530.9 856.7V857.3M531.6 856.8V857.2M532.3 856.7V857.3M533.0 856.8V857.1M533.7 856.7V857.2M534.4 856.9V857.1M583.6 845.2V867.7M584.3 845.4V867.4M585.0 845.6V867.3M585.7 848.0V865.1M586.4 843.0V869.6M587.1 847.3V865.8M587.8 844.5V868.2M588.5 848.5V864.7M589.2 846.7V866.2M589.9 850.5V862.8M590.6 847.6V865.5M591.3 849.8V863.5M592.0 850.9V862.4M592.7 852.2V861.3M593.4 850.6V862.8M594.1 851.1V862.3M594.8 851.5V861.9M595.5 853.6V860.1M596.2 852.7V860.9M596.9 852.5V861.0M597.6 853.5V860.1M598.3 853.1V860.5M599.0 855.0V858.8M599.7 854.1V859.6M600.4 855.2V858.6M601.1 854.6V859.1M601.8 855.0V858.8M602.5 854.9V858.9M603.2 854.8V859.0M603.9 854.9V858.9M604.6 855.2V858.6M605.3 855.8V858.1M606.0 855.7V858.2M606.7 856.1V857.8M607.4 855.6V858.2M608.1 855.8V858.1M608.8 856.1V857.8M609.5 855.9V858.0M610.2 856.1V857.8M610.9 856.2V857.7M611.6 856.2V857.7M612.3 856.3V857.6M613.0 856.5V857.4M613.7 856.5V857.5M614.4 856.6V857.3M615.1 856.4V857.6M615.8 856.6V857.3M616.5 856.6V857.4M617.2 856.5V857.4M617.9 856.7V857.3M618.6 856.7V857.3M619.3 856.7V857.3M620.0 856.7V857.2M620.7 856.7V857.3M621.4 856.7V857.3M622.1 856.8V857.2M622.8 856.8V857.2M623.5 856.8V857.2M624.2 856.8V857.2M624.9 856.8V857.2M637.1 845.3V867.5M637.8 847.2V865.8M638.5 847.2V865.8M639.2 850.3V863.0M639.9 850.6V862.8M640.6 852.5V861.1M641.3 850.6V862.8M642.0 851.9V861.6M642.7 853.3V860.3M643.4 853.7V860.0M644.1 854.7V859.0M644.8 853.3V860.3M645.5 854.4V859.3M646.2 855.2V858.7M646.9 854.2V859.5M647.6 854.6V859.1M648.3 855.5V858.4M649.0 855.5V858.4M649.7 856.0V857.9M650.4 855.7V858.2M651.1 855.9V858.0M651.8 856.0V857.9M652.5 856.3V857.7M653.2 856.3V857.7M653.9 856.1V857.8M654.6 856.0V857.9M655.3 856.4V857.5M656.0 856.6V857.4M656.7 856.3V857.6M657.4 856.4V857.5M658.1 856.5V857.5M658.8 856.7V857.3M659.5 856.7V857.3M660.2 856.7V857.3M660.9 856.6V857.4M661.6 856.7V857.2M662.3 856.8V857.2M663.0 856.7V857.3M663.7 856.8V857.2M664.4 856.8V857.1M713.5 839.3V872.9M714.2 837.5V874.5M714.9 842.7V869.9M715.6 840.1V872.2M716.3 840.4V872.0M717.0 848.6V864.6M717.7 845.0V867.8M718.4 846.0V866.9M719.1 847.6V865.5M719.8 846.4V866.5M720.5 848.0V865.1M721.2 850.7V862.6M721.9 851.2V862.2M722.6 848.9V864.3M723.3 850.5V862.8M724.0 850.2V863.1M724.7 852.4V861.1M725.4 852.0V861.5M726.1 851.4V862.0M726.8 852.2V861.3M727.5 852.7V860.9M728.2 852.8V860.7M728.9 854.3V859.5M729.6 853.2V860.4M730.3 855.1V858.7M731.0 853.7V860.0M731.7 855.1V858.7M732.4 854.3V859.4M733.1 855.4V858.4M733.8 855.1V858.7M734.5 855.3V858.5M735.2 855.6V858.2M735.9 855.2V858.6M736.6 855.9V858.0M737.3 856.1V857.8M738.0 855.6V858.2M738.7 855.8V858.0M739.4 856.3V857.6M740.1 856.3V857.6M740.8 855.9V858.0M741.5 856.4V857.5M742.2 856.1V857.8M742.9 856.5V857.5M743.6 856.5V857.5M744.3 856.4V857.6M745.0 856.3V857.6M745.7 856.3V857.6M746.4 856.5V857.5M747.1 856.7V857.3M747.8 856.7V857.3M748.5 856.5V857.4M749.2 856.6V857.4M749.9 856.7V857.3M750.6 856.7V857.3M751.3 856.7V857.3M752.0 856.7V857.2M752.7 856.7V857.3M753.4 856.8V857.2M754.1 856.8V857.2M754.8 856.8V857.2M767.0 847.9V865.2M767.7 850.6V862.7M768.4 848.9V864.3M769.1 850.8V862.6M769.8 851.3V862.1M770.5 851.5V862.0M771.2 852.1V861.4M771.9 853.3V860.4M772.6 851.8V861.7M773.3 854.4V859.3M774.0 853.3V860.3M774.7 854.6V859.2M775.4 854.2V859.6M776.1 854.9V858.8M776.8 854.7V859.0M777.5 855.5V858.3M778.2 855.7V858.2M778.9 855.4V858.4M779.6 855.6V858.2M780.3 855.6V858.3M781.0 856.1V857.8M781.7 856.0V857.9M782.4 856.1V857.8M783.1 856.3V857.6M783.8 856.2V857.7M784.5 856.4V857.6M785.2 856.2V857.8M785.9 856.4V857.5M786.6 856.6V857.3M787.3 856.4V857.6M788.0 856.6V857.3M788.7 856.6V857.3M789.4 856.8V857.2M790.1 856.7V857.3M790.8 856.8V857.2M791.5 856.8V857.2M792.2 856.7V857.3M792.9 856.8V857.2M793.6 856.8V857.2M794.3 856.8V857.2M843.4 846.0V866.9M844.1 843.3V869.4M844.8 842.6V869.9M845.5 844.7V868.1M846.2 843.9V868.8M846.9 848.3V864.8M847.6 848.3V864.8M848.3 847.5V865.6M849.0 850.1V863.3M849.7 848.3V864.9M850.4 851.6V861.8M851.1 850.6V862.8M851.8 852.1V861.4M852.5 852.8V860.8M853.2 852.2V861.4M853.9 851.5V861.9M854.6 854.3V859.5M855.3 854.3V859.4M856.0 853.6V860.0M856.7 854.7V859.1M857.4 854.6V859.2M858.1 855.0V858.8M858.8 854.0V859.7M859.5 855.4V858.4M860.2 854.4V859.4M860.9 854.8V859.0M861.6 855.5V858.4M862.3 854.9V858.9M863.0 855.4V858.4M863.7 856.0V857.9M864.4 855.7V858.2M865.1 856.1V857.8M865.8 856.1V857.8M866.5 855.7V858.2M867.2 856.0V857.9M867.9 856.3V857.7M868.6 856.2V857.7M869.3 856.3V857.6M870.0 856.2V857.7M870.7 856.3V857.6M871.4 856.2V857.7M872.1 856.3V857.6M872.8 856.5V857.4M873.5 856.5V857.5M874.2 856.6V857.4M874.9 856.6V857.4M875.6 856.6V857.3M876.3 856.5V857.4M877.0 856.7V857.2M877.7 856.7V857.3M878.4 856.8V857.2M879.1 856.7V857.3M879.8 856.8V857.2M880.5 856.9V857.1M881.2 856.8V857.2M881.9 856.8V857.2M882.6 856.9V857.1M883.3 856.9V857.1M884.0 856.9V857.1M884.7 856.8V857.2M896.9 845.6V867.3M897.6 850.5V862.9M898.3 847.8V865.2M899.0 851.0V862.4M899.7 849.3V863.9M900.4 851.0V862.4M901.1 853.6V860.0M901.8 854.0V859.7M902.5 853.2V860.4M903.2 853.0V860.6M903.9 852.6V860.9M904.6 854.1V859.6M905.3 854.4V859.4M906.0 855.4V858.5M906.7 855.3V858.5M907.4 854.7V859.0M908.1 854.8V859.0M908.8 855.3V858.5M909.5 856.0V857.9M910.2 855.4V858.5M910.9 855.5V858.3M911.6 855.8V858.1M912.3 855.7V858.2M913.0 856.1V857.8M913.7 856.3V857.6M914.4 856.1V857.8M915.1 856.5V857.5M915.8 856.3V857.7M916.5 856.4V857.5M917.2 856.4V857.5M917.9 856.5V857.4M918.6 856.5V857.4M919.3 856.7V857.3M920.0 856.7V857.3M920.7 856.7V857.3M921.4 856.8V857.2M922.1 856.7V857.3M922.8 856.8V857.1M923.5 856.9V857.1M924.2 856.8V857.2M973.4 845.0V867.8M974.1 840.4V872.0M974.8 843.0V869.6M975.5 844.2V868.5M976.2 843.4V869.2M976.9 843.4V869.3M977.6 843.9V868.8M978.3 847.7V865.4M979.0 851.3V862.1M979.7 847.8V865.3M980.4 847.5V865.6M981.1 850.7V862.7M981.8 850.4V862.9M982.5 852.8V860.8M983.2 850.7V862.7M983.9 850.8V862.6M984.6 852.7V860.9M985.3 852.7V860.9M986.0 852.4V861.1M986.7 854.6V859.2M987.4 852.8V860.8M988.1 853.3V860.3M988.8 854.7V859.0M989.5 854.8V859.0M990.2 854.4V859.3M990.9 854.5V859.2M991.6 855.2V858.6M992.3 855.3V858.5M993.0 855.1V858.7M993.7 855.6V858.2M994.4 855.5V858.4M995.1 855.8V858.0M995.8 855.4V858.5M996.5 855.6V858.3M997.2 856.0V857.9M997.9 855.8V858.1M998.6 856.3V857.7M999.3 855.9V858.0M1000.0 856.3V857.6M1000.7 856.1V857.8M1001.4 856.3V857.6M1002.1 856.2V857.7M1002.8 856.4V857.5M1003.5 856.3V857.6M1004.2 856.5V857.4M1004.9 856.7V857.3M1005.6 856.5V857.5M1006.3 856.6V857.3M1007.0 856.6V857.4M1007.7 856.7V857.2M1008.4 856.6V857.3M1009.1 856.8V857.2M1009.8 856.7V857.3M1010.5 856.7V857.3M1011.2 856.7V857.3M1011.9 856.7V857.3M1012.6 856.7V857.2M1013.3 856.9V857.1M1014.0 856.9V857.1M1014.7 856.8V857.2M1026.9 845.6V867.3M1027.6 850.1V863.3M1028.3 847.4V865.6M1029.0 851.6V861.9M1029.7 849.4V863.8M1030.4 852.9V860.7M1031.1 852.5V861.1M1031.8 852.9V860.7M1032.5 852.4V861.2M1033.2 853.3V860.3M1033.9 853.3V860.3M1034.6 853.7V860.0M1035.3 854.1V859.6M1036.0 855.2V858.6M1036.7 855.2V858.6M1037.4 854.3V859.4M1038.1 855.5V858.3M1038.8 855.0V858.8M1039.5 856.0V857.9M1040.2 855.6V858.2M1040.9 855.8V858.1M1041.6 856.1V857.8M1042.3 856.3V857.6M1043.0 856.1V857.8M1043.7 856.3V857.6M1044.4 856.3V857.7M1045.1 856.1V857.8M1045.8 856.3V857.6M1046.5 856.5V857.5M1047.2 856.6V857.4M1047.9 856.6V857.3M1048.6 856.5V857.5M1049.3 856.6V857.3M1050.0 856.7V857.2M1050.7 856.7V857.3M1051.4 856.7V857.3M1052.1 856.8V857.2M1052.8 856.7V857.2M1053.5 856.8V857.2M1054.2 856.9V857.1M1103.3 835.8V876.0M1104.0 843.7V868.9M1104.7 841.5V871.0M1105.4 847.4V865.7M1106.1 845.7V867.2M1106.8 845.9V867.0M1107.5 844.1V868.6M1108.2 848.8V864.4M1108.9 848.8V864.4M1109.6 846.6V866.4M1110.3 848.9V864.3M1111.0 847.9V865.2M1111.7 848.8V864.4M1112.4 850.3V863.1M1113.1 849.5V863.8M1113.8 852.4V861.2M1114.5 850.1V863.2M1115.2 853.4V860.3M1115.9 852.2V861.3M1116.6 852.2V861.3M1117.3 852.7V860.9M1118.0 854.3V859.4M1118.7 854.1V859.6M1119.4 853.7V860.0M1120.1 853.9V859.8M1120.8 855.2V858.6M1121.5 855.3V858.5M1122.2 854.3V859.4M1122.9 854.7V859.1M1123.6 855.4V858.4M1124.3 854.9V858.9M1125.0 855.1V858.7M1125.7 855.7V858.2M1126.4 855.5V858.4M1127.1 855.7V858.1M1127.8 856.2V857.7M1128.5 855.7V858.2M1129.2 856.2V857.7M1129.9 856.0V857.9M1130.6 856.3V857.6M1131.3 856.0V857.9M1132.0 856.2V857.7M1132.7 856.2V857.7M1133.4 856.3V857.6M1134.1 856.2V857.7M1134.8 856.4V857.6M1135.5 856.5V857.5M1136.2 856.7V857.3M1136.9 856.6V857.4M1137.6 856.7V857.3M1138.3 856.6V857.4M1139.0 856.7V857.3M1139.7 856.7V857.3M1140.4 856.6V857.3M1141.1 856.7V857.2M1141.8 856.7V857.2M1142.5 856.8V857.2M1143.2 856.8V857.2M1143.9 856.8V857.2M1144.6 856.8V857.2M1156.8 849.1V864.1M1157.5 846.9V866.1M1158.2 848.8V864.4M1158.9 852.5V861.1M1159.6 852.2V861.3M1160.3 852.4V861.1M1161.0 853.4V860.3M1161.7 851.1V862.3M1162.4 852.7V860.8M1163.1 852.3V861.3M1163.8 853.3V860.3M1164.5 853.1V860.5M1165.2 854.6V859.1M1165.9 855.1V858.7M1166.6 855.3V858.5M1167.3 855.1V858.8M1168.0 855.7V858.1M1168.7 854.8V859.0M1169.4 855.9V858.0M1170.1 855.5V858.3M1170.8 856.0V857.9M1171.5 855.8V858.1M1172.2 855.8V858.1M1172.9 856.0V857.9M1173.6 856.3V857.7M1174.3 856.1V857.8M1175.0 856.1V857.8M1175.7 856.4V857.6M1176.4 856.5V857.4M1177.1 856.4V857.6M1177.8 856.7V857.3M1178.5 856.6V857.4M1179.2 856.7V857.3M1179.9 856.6V857.4M1180.6 856.8V857.2M1181.3 856.8V857.2M1182.0 856.7V857.3M1182.7 856.8V857.2M1183.4 856.8V857.2M1184.1 856.8V857.2M1233.3 843.2V869.4M1234.0 848.1V865.0M1234.7 842.0V870.5M1235.4 843.0V869.6M1236.1 848.7V864.4M1236.8 846.0V866.9M1237.5 847.2V865.8M1238.2 847.1V865.9M1238.9 847.8V865.3M1239.6 850.7V862.7M1240.3 851.4V862.1M1241.0 850.2V863.1M1241.7 851.2V862.2M1242.4 853.4V860.2M1243.1 852.3V861.3M1243.8 852.0V861.5M1244.5 853.4V860.2M1245.2 853.4V860.3M1245.9 853.7V860.0M1246.6 854.7V859.1M1247.3 853.6V860.0M1248.0 854.5V859.3M1248.7 854.0V859.7M1249.4 854.6V859.1M1250.1 854.5V859.2M1250.8 854.9V858.9M1251.5 855.4V858.4M1252.2 855.6V858.3M1252.9 855.4V858.4M1253.6 855.2V858.6M1254.3 856.1V857.8M1255.0 856.2V857.8M1255.7 855.6V858.2M1256.4 855.6V858.2M1257.1 855.9V858.0M1257.8 856.3V857.6M1258.5 856.0V857.9M1259.2 856.1V857.8M1259.9 856.1V857.8M1260.6 856.6V857.4M1261.3 856.5V857.4M1262.0 856.5V857.4M1262.7 856.4V857.5M1263.4 856.6V857.4M1264.1 856.7V857.3M1264.8 856.7V857.3M1265.5 856.5V857.5M1266.2 856.8V857.2M1266.9 856.6V857.4M1267.6 856.6V857.3M1268.3 856.8V857.2M1269.0 856.7V857.3M1269.7 856.7V857.3M1270.4 856.7V857.2M1271.1 856.8V857.2M1271.8 856.8V857.2M1272.5 856.8V857.1M1273.2 856.9V857.1M1273.9 856.8V857.2M1274.6 856.8V857.1M1286.8 848.0V865.1M1287.5 846.5V866.4M1288.2 848.5V864.6M1288.9 851.9V861.6M1289.6 852.0V861.5M1290.3 853.2V860.4M1291.0 851.6V861.8M1291.7 852.3V861.2M1292.4 853.4V860.3M1293.1 853.2V860.4M1293.8 854.1V859.6M1294.5 854.4V859.4M1295.2 853.7V860.0M1295.9 853.7V859.9M1296.6 855.3V858.6M1297.3 854.6V859.2M1298.0 854.6V859.1M1298.7 855.2V858.6M1299.4 855.1V858.7M1300.1 855.9V858.0M1300.8 855.5V858.4M1301.5 856.0V857.9M1302.2 856.1V857.8M1302.9 856.2V857.8M1303.6 856.0V857.9M1304.3 856.3V857.6M1305.0 856.3V857.7M1305.7 856.4V857.5M1306.4 856.3V857.6M1307.1 856.4V857.5M1307.8 856.6V857.4M1308.5 856.5V857.4M1309.2 856.7V857.2M1309.9 856.6V857.4M1310.6 856.7V857.3M1311.3 856.7V857.2M1312.0 856.7V857.3M1312.7 856.8V857.2M1313.4 856.9V857.1M1314.1 856.9V857.1M1363.2 845.1V867.7M1363.9 843.2V869.4M1364.6 842.3V870.2M1365.3 843.1V869.5M1366.0 843.6V869.0M1366.7 846.0V866.9M1367.4 849.4V863.8M1368.1 848.0V865.1M1368.8 850.6V862.7M1369.5 847.7V865.3M1370.2 850.1V863.2M1370.9 850.5V862.9M1371.6 852.8V860.8M1372.3 851.3V862.1M1373.0 852.2V861.3M1373.7 851.1V862.3M1374.4 851.5V861.9M1375.1 852.1V861.4M1375.8 852.2V861.3M1376.5 853.4V860.2M1377.2 853.0V860.6M1377.9 854.4V859.3M1378.6 854.2V859.5M1379.3 855.1V858.7M1380.0 854.7V859.0M1380.7 854.4V859.3M1381.4 854.6V859.1M1382.1 855.3V858.6M1382.8 855.2V858.6M1383.5 855.5V858.3M1384.2 855.7V858.2M1384.9 855.9V858.0M1385.6 856.0V857.9M1386.3 855.5V858.4M1387.0 856.2V857.7M1387.7 856.2V857.8M1388.4 855.8V858.1M1389.1 856.1V857.8M1389.8 856.4V857.5M1390.5 856.3V857.6M1391.2 856.4V857.6M1391.9 856.3V857.7M1392.6 856.5V857.5M1393.3 856.5V857.5M1394.0 856.6V857.4M1394.7 856.4V857.5M1395.4 856.6V857.4M1396.1 856.7V857.3M1396.8 856.6V857.4M1397.5 856.6V857.3M1398.2 856.8V857.2M1398.9 856.7V857.3M1399.6 856.7V857.3M1400.3 856.7V857.3M1401.0 856.8V857.2M1401.7 856.8V857.2M1402.4 856.8V857.2M1403.1 856.9V857.1M1403.8 856.8V857.2M1404.5 856.9V857.1M1416.7 845.8V867.1M1417.4 846.8V866.2M1418.1 848.1V865.0M1418.8 848.7V864.5M1419.5 851.4V862.0M1420.2 849.8V863.5M1420.9 852.0V861.5M1421.6 854.0V859.7M1422.3 852.4V861.2M1423.0 853.7V860.0M1423.7 854.5V859.3M1424.4 854.0V859.7M1425.1 853.7V860.0M1425.8 855.0V858.8M1426.5 855.3V858.5M1427.2 855.2V858.7M1427.9 855.3V858.5M1428.6 854.9V858.9M1429.3 855.8V858.1M1430.0 855.8V858.1M1430.7 855.8V858.1M1431.4 855.9V858.0M1432.1 856.3V857.7M1432.8 855.8V858.1M1433.5 856.2V857.8M1434.2 856.2V857.7M1434.9 856.3V857.6M1435.6 856.3V857.7M1436.3 856.5V857.5M1437.0 856.6V857.4M1437.7 856.6V857.4M1438.4 856.5V857.5M1439.1 856.7V857.3M1439.8 856.7V857.3M1440.5 856.7V857.3M1441.2 856.8V857.2M1441.9 856.7V857.3M1442.6 856.7V857.3M1443.3 856.9V857.1M1444.0 856.8V857.1M1493.1 842.5V870.1M1493.8 839.8V872.5M1494.5 838.9V873.3M1495.2 841.4V871.1M1495.9 839.8V872.4M1496.6 843.1V869.5M1497.3 848.1V865.0M1498.0 849.0V864.2M1498.7 848.5V864.6M1499.4 848.2V864.9M1500.1 849.5V863.7M1500.8 850.5V862.8M1501.5 851.9V861.6M1502.2 850.1V863.2M1502.9 850.3V863.0M1503.6 852.3V861.2M1504.3 853.4V860.3M1505.0 851.1V862.3M1505.7 853.5V860.2M1506.4 853.5V860.2M1507.1 851.9V861.6M1507.8 854.1V859.7M1508.5 853.3V860.3M1509.2 854.5V859.3M1509.9 854.8V859.0M1510.6 854.6V859.2M1511.3 854.5V859.3M1512.0 854.7V859.1M1512.7 855.3V858.6M1513.4 855.3V858.5M1514.1 855.3V858.6M1514.8 855.9V858.0M1515.5 855.4V858.4M1516.2 855.5V858.3M1516.9 855.5V858.3M1517.6 856.2V857.7M1518.3 856.0V857.9M1519.0 856.1V857.8M1519.7 856.4V857.6M1520.4 856.1V857.9M1521.1 856.3V857.6M1521.8 856.0V857.9M1522.5 856.5V857.5M1523.2 856.3V857.6M1523.9 856.2V857.7M1524.6 856.5V857.5M1525.3 856.6V857.4M1526.0 856.5V857.4M1526.7 856.6V857.4M1527.4 856.5V857.5M1528.1 856.6V857.4M1528.8 856.6V857.3M1529.5 856.7V857.2M1530.2 856.7V857.3M1530.9 856.7V857.3M1531.6 856.8V857.2M1532.3 856.8V857.2M1533.0 856.8V857.2M1533.7 856.9V857.1M1534.4 856.8V857.2M1546.6 846.3V866.6M1547.3 849.2V864.0M1548.0 849.2V864.0M1548.7 852.4V861.1M1549.4 850.0V863.3M1550.1 853.1V860.5M1550.8 852.9V860.7M1551.5 852.2V861.3M1552.2 852.3V861.3M1552.9 853.7V860.0M1553.6 853.8V859.9M1554.3 853.7V860.0M1555.0 854.7V859.0M1555.7 854.3V859.4M1556.4 854.8V859.0M1557.1 855.5V858.3M1557.8 854.9V858.9M1558.5 855.1V858.8M1559.2 855.5V858.4M1559.9 855.4V858.5M1560.6 855.6V858.3M1561.3 855.8V858.1M1562.0 855.7V858.2M1562.7 855.9V858.0M1563.4 856.3V857.6M1564.1 856.4V857.6M1564.8 856.5V857.4M1565.5 856.5V857.4M1566.2 856.3V857.6M1566.9 856.5V857.5M1567.6 856.5V857.5M1568.3 856.6V857.3M1569.0 856.6V857.4M1569.7 856.7V857.3M1570.4 856.7V857.3M1571.1 856.8V857.2M1571.8 856.7V857.3M1572.5 856.8V857.1M1573.2 856.8V857.2M1573.9 856.9V857.1M1623.1 841.7V870.8M1623.8 847.1V865.9M1624.5 842.3V870.3M1625.2 848.1V865.0M1625.9 844.7V868.0M1626.6 850.6V862.8M1627.3 848.4V864.7M1628.0 848.2V864.9M1628.7 847.4V865.6M1629.4 849.3V864.0M1630.1 852.4V861.1M1630.8 850.7V862.7M1631.5 851.2V862.2M1632.2 851.8V861.7M1632.9 852.2V861.3M1633.6 852.3V861.2M1634.3 854.4V859.3M1635.0 853.4V860.2M1635.7 854.6V859.2M1636.4 853.2V860.4M1637.1 855.0V858.8M1637.8 853.6V860.1M1638.5 855.1V858.7M1639.2 854.6V859.2M1639.9 855.6V858.3M1640.6 855.2V858.6M1641.3 855.0V858.8M1642.0 855.8V858.0M1642.7 855.2V858.6M1643.4 855.4V858.5M1644.1 855.7V858.2M1644.8 855.4V858.5M1645.5 856.1V857.8M1646.2 856.3V857.6M1646.9 855.9V858.0M1647.6 856.0V857.9M1648.3 856.0V857.9M1649.0 856.1V857.8M1649.7 856.3V857.6M1650.4 856.1V857.8M1651.1 856.4V857.5M1651.8 856.3V857.6M1652.5 856.6V857.4M1653.2 856.4V857.5M1653.9 856.6V857.4M1654.6 856.5V857.4M1655.3 856.6V857.4M1656.0 856.8V857.2M1656.7 856.7V857.3M1657.4 856.7V857.3M1658.1 856.8V857.2M1658.8 856.7V857.3M1659.5 856.8V857.2M1660.2 856.8V857.2M1660.9 856.7V857.2M1661.6 856.8V857.2M1662.3 856.8V857.2M1663.0 856.9V857.1M1663.7 856.9V857.1M1664.4 856.9V857.1M1676.6 849.3V863.9M1677.3 847.0V866.0M1678.0 848.5V864.6M1678.7 852.1V861.4M1679.4 852.7V860.8M1680.1 850.6V862.8M1680.8 852.0V861.5M1681.5 853.5V860.2M1682.2 852.9V860.6M1682.9 854.1V859.6M1683.6 853.5V860.1M1684.3 853.2V860.4M1685.0 853.5V860.1M1685.7 855.0V858.8M1686.4 854.7V859.1M1687.1 855.1V858.7M1687.8 855.7V858.2M1688.5 855.5V858.4M1689.2 855.2V858.6M1689.9 855.2V858.6M1690.6 855.4V858.4M1691.3 855.6V858.3M1692.0 856.3V857.6M1692.7 856.0V857.9M1693.4 856.0V857.9M1694.1 856.2V857.7M1694.8 856.3V857.6M1695.5 856.4V857.5M1696.2 856.3V857.6M1696.9 856.6V857.4M1697.6 856.4V857.5M1698.3 856.7V857.3M1699.0 856.6V857.3M1699.7 856.6V857.3M1700.4 856.7V857.3M1701.1 856.7V857.3M1701.8 856.8V857.2M1702.5 856.8V857.2M1703.2 856.7V857.2M1703.9 856.8V857.2" stroke="#8cc43c" stroke-width="0.9" fill="none"/><path d="M1690 503L1703 494V512Z" fill="#30c0d8"/><path d="M1700 503H1712" stroke="#30c0d8" stroke-width="4"/><path d="M16.5 417.5Q16.5 414.5 19.5 414.5H46.5L58.5 429.5L46.5 444.5H19.5Q16.5 444.5 16.5 441.5Z" fill="#26240e" stroke="#e0d040" stroke-width="1.5"/><text x="37.5" y="433.0" text-anchor="middle" font-family="Liberation Sans" font-size="12" fill="#eee070">C 1</text><path d="M16.5 584.5Q16.5 581.5 19.5 581.5H46.5L58.5 596.5L46.5 611.5H19.5Q16.5 611.5 16.5 608.5Z" fill="#0c2628" stroke="#30b0b8" stroke-width="1.5"/><text x="37.5" y="600.0" text-anchor="middle" font-family="Liberation Sans" font-size="12" fill="#50d0d8">C 2</text><path d="M16.5 776.5Q16.5 773.5 19.5 773.5H46.5L58.5 788.5L46.5 803.5H19.5Q16.5 803.5 16.5 800.5Z" fill="#e84868" stroke="#e84868" stroke-width="1.5"/><text x="37.5" y="792.0" text-anchor="middle" font-family="Liberation Sans" font-size="12" fill="#ffffff">C 3</text><path d="M16.5 909.5Q16.5 906.5 19.5 906.5H46.5L58.5 921.5L46.5 936.5H19.5Q16.5 936.5 16.5 933.5Z" fill="#1e260e" stroke="#90c040" stroke-width="1.5"/><text x="37.5" y="925.0" text-anchor="middle" font-family="Liberation Sans" font-size="12" fill="#a0d050">C 4</text></svg>
<div class="r" style="left:88.3px;top:243.5px;width:54.0px;height:15px;background:#363636"></div>
<div class="t" style="left:55.3px;top:242.3px;width:120px;text-align:center;font-size:15px;color:#b4b4b4;font-weight:normal;-webkit-text-stroke:0.15px currentColor;">-2.8 ms</div>
<div class="r" style="left:258.1px;top:243.5px;width:54.0px;height:15px;background:#363636"></div>
<div class="t" style="left:225.1px;top:242.3px;width:120px;text-align:center;font-size:15px;color:#b4b4b4;font-weight:normal;-webkit-text-stroke:0.15px currentColor;">-2.4 ms</div>
<div class="r" style="left:434.2px;top:243.5px;width:41.5px;height:15px;background:#363636"></div>
<div class="t" style="left:394.9px;top:242.3px;width:120px;text-align:center;font-size:15px;color:#b4b4b4;font-weight:normal;-webkit-text-stroke:0.15px currentColor;">-2 ms</div>
<div class="r" style="left:597.7px;top:243.5px;width:54.0px;height:15px;background:#363636"></div>
<div class="t" style="left:564.7px;top:242.3px;width:120px;text-align:center;font-size:15px;color:#b4b4b4;font-weight:normal;-webkit-text-stroke:0.15px currentColor;">-1.6 ms</div>
<div class="r" style="left:767.5px;top:243.5px;width:54.0px;height:15px;background:#363636"></div>
<div class="t" style="left:734.5px;top:242.3px;width:120px;text-align:center;font-size:15px;color:#b4b4b4;font-weight:normal;-webkit-text-stroke:0.15px currentColor;">-1.2 ms</div>
<div class="r" style="left:937.1px;top:243.5px;width:54.3px;height:15px;background:#363636"></div>
<div class="t" style="left:904.3px;top:242.3px;width:120px;text-align:center;font-size:15px;color:#b4b4b4;font-weight:normal;-webkit-text-stroke:0.15px currentColor;">-800 µs</div>
<div class="r" style="left:1106.9px;top:243.5px;width:54.3px;height:15px;background:#363636"></div>
<div class="t" style="left:1074.1px;top:242.3px;width:120px;text-align:center;font-size:15px;color:#b4b4b4;font-weight:normal;-webkit-text-stroke:0.15px currentColor;">-400 µs</div>
<div class="r" style="left:1291.9px;top:243.5px;width:24.0px;height:15px;background:#363636"></div>
<div class="t" style="left:1243.9px;top:242.3px;width:120px;text-align:center;font-size:15px;color:#b4b4b4;font-weight:normal;-webkit-text-stroke:0.15px currentColor;">0 s</div>
<div class="r" style="left:1449.0px;top:243.5px;width:49.3px;height:15px;background:#363636"></div>
<div class="t" style="left:1413.7px;top:242.3px;width:120px;text-align:center;font-size:15px;color:#b4b4b4;font-weight:normal;-webkit-text-stroke:0.15px currentColor;">400 µs</div>
<div class="r" style="left:1618.8px;top:243.5px;width:49.3px;height:15px;background:#363636"></div>
<div class="t" style="left:1583.5px;top:242.3px;width:120px;text-align:center;font-size:15px;color:#b4b4b4;font-weight:normal;-webkit-text-stroke:0.15px currentColor;">800 µs</div>
<svg style="left:1300px;top:118px" width="6" height="143" viewBox="1300 118 6 143"><path d="M1302.5 122V261" stroke="#d8d8d8" stroke-width="1" stroke-dasharray="3 3"/></svg>
<div class="r" style="left:72.1px;top:790.5px;width:62.4px;height:15px;background:#000"></div>
<div class="t" style="left:43.3px;top:789.3px;width:120px;text-align:center;font-size:15px;color:#a8a8a8;font-weight:normal;-webkit-text-stroke:0.15px currentColor;">-1.02 ms</div>
<div class="r" style="left:252.4px;top:790.5px;width:41.5px;height:15px;background:#000"></div>
<div class="t" style="left:213.1px;top:789.3px;width:120px;text-align:center;font-size:15px;color:#a8a8a8;font-weight:normal;-webkit-text-stroke:0.15px currentColor;">-1 ms</div>
<div class="r" style="left:415.7px;top:790.5px;width:54.3px;height:15px;background:#000"></div>
<div class="t" style="left:382.9px;top:789.3px;width:120px;text-align:center;font-size:15px;color:#a8a8a8;font-weight:normal;-webkit-text-stroke:0.15px currentColor;">-980 µs</div>
<div class="r" style="left:585.5px;top:790.5px;width:54.3px;height:15px;background:#000"></div>
<div class="t" style="left:552.7px;top:789.3px;width:120px;text-align:center;font-size:15px;color:#a8a8a8;font-weight:normal;-webkit-text-stroke:0.15px currentColor;">-960 µs</div>
<div class="r" style="left:755.3px;top:790.5px;width:54.3px;height:15px;background:#000"></div>
<div class="t" style="left:722.5px;top:789.3px;width:120px;text-align:center;font-size:15px;color:#a8a8a8;font-weight:normal;-webkit-text-stroke:0.15px currentColor;">-940 µs</div>
<div class="r" style="left:925.1px;top:790.5px;width:54.3px;height:15px;background:#000"></div>
<div class="t" style="left:892.3px;top:789.3px;width:120px;text-align:center;font-size:15px;color:#a8a8a8;font-weight:normal;-webkit-text-stroke:0.15px currentColor;">-920 µs</div>
<div class="r" style="left:1094.9px;top:790.5px;width:54.3px;height:15px;background:#000"></div>
<div class="t" style="left:1062.1px;top:789.3px;width:120px;text-align:center;font-size:15px;color:#a8a8a8;font-weight:normal;-webkit-text-stroke:0.15px currentColor;">-900 µs</div>
<div class="r" style="left:1264.7px;top:790.5px;width:54.3px;height:15px;background:#000"></div>
<div class="t" style="left:1231.9px;top:789.3px;width:120px;text-align:center;font-size:15px;color:#a8a8a8;font-weight:normal;-webkit-text-stroke:0.15px currentColor;">-880 µs</div>
<div class="r" style="left:1434.5px;top:790.5px;width:54.3px;height:15px;background:#000"></div>
<div class="t" style="left:1401.7px;top:789.3px;width:120px;text-align:center;font-size:15px;color:#a8a8a8;font-weight:normal;-webkit-text-stroke:0.15px currentColor;">-860 µs</div>
<div class="r" style="left:1604.3px;top:790.5px;width:54.3px;height:15px;background:#000"></div>
<div class="t" style="left:1571.5px;top:789.3px;width:120px;text-align:center;font-size:15px;color:#a8a8a8;font-weight:normal;-webkit-text-stroke:0.15px currentColor;">-840 µs</div>
<div class="t" style="left:1584.5px;top:304.6px;width:120px;text-align:right;font-size:15px;color:#e6d84a;font-weight:normal;-webkit-text-stroke:0;">28 V</div>
<div class="t" style="left:1584.5px;top:337.6px;width:120px;text-align:right;font-size:15px;color:#e6d84a;font-weight:normal;-webkit-text-stroke:0;">20 V</div>
<div class="t" style="left:1584.5px;top:371.6px;width:120px;text-align:right;font-size:15px;color:#e6d84a;font-weight:normal;-webkit-text-stroke:0;">12 V</div>
<div class="t" style="left:1584.5px;top:404.6px;width:120px;text-align:right;font-size:15px;color:#e6d84a;font-weight:normal;-webkit-text-stroke:0;">4 V</div>
<div class="t" style="left:1584.5px;top:437.6px;width:120px;text-align:right;font-size:15px;color:#e6d84a;font-weight:normal;-webkit-text-stroke:0;">-4 V</div>
<div class="t" style="left:1584.5px;top:471.6px;width:120px;text-align:right;font-size:15px;color:#3cc0c8;font-weight:normal;-webkit-text-stroke:0;">4.9 A</div>
<div class="t" style="left:1584.5px;top:504.6px;width:120px;text-align:right;font-size:15px;color:#3cc0c8;font-weight:normal;-webkit-text-stroke:0;">3.5 A</div>
<div class="t" style="left:1584.5px;top:538.6px;width:120px;text-align:right;font-size:15px;color:#3cc0c8;font-weight:normal;-webkit-text-stroke:0;">2.1 A</div>
<div class="t" style="left:1584.5px;top:571.6px;width:120px;text-align:right;font-size:15px;color:#3cc0c8;font-weight:normal;-webkit-text-stroke:0;">700 mA</div>
<div class="t" style="left:1584.5px;top:604.6px;width:120px;text-align:right;font-size:15px;color:#3cc0c8;font-weight:normal;-webkit-text-stroke:0;">-700 mA</div>
<div class="t" style="left:1584.5px;top:636.6px;width:120px;text-align:right;font-size:15px;color:#e4587a;font-weight:normal;-webkit-text-stroke:0;">560 V</div>
<div class="t" style="left:1584.5px;top:654.6px;width:120px;text-align:right;font-size:15px;color:#e4587a;font-weight:normal;-webkit-text-stroke:0;">490 V</div>
<div class="t" style="left:1584.5px;top:672.6px;width:120px;text-align:right;font-size:15px;color:#e4587a;font-weight:normal;-webkit-text-stroke:0;">420 V</div>
<div class="t" style="left:1584.5px;top:690.6px;width:120px;text-align:right;font-size:15px;color:#e4587a;font-weight:normal;-webkit-text-stroke:0;">350 V</div>
<div class="t" style="left:1584.5px;top:708.6px;width:120px;text-align:right;font-size:15px;color:#e4587a;font-weight:normal;-webkit-text-stroke:0;">280 V</div>
<div class="t" style="left:1584.5px;top:726.6px;width:120px;text-align:right;font-size:15px;color:#e4587a;font-weight:normal;-webkit-text-stroke:0;">210 V</div>
<div class="t" style="left:1584.5px;top:744.6px;width:120px;text-align:right;font-size:15px;color:#e4587a;font-weight:normal;-webkit-text-stroke:0;">140 V</div>
<div class="t" style="left:1584.5px;top:762.6px;width:120px;text-align:right;font-size:15px;color:#e4587a;font-weight:normal;-webkit-text-stroke:0;">70 V</div>
<div class="t" style="left:1584.5px;top:780.6px;width:120px;text-align:right;font-size:15px;color:#e4587a;font-weight:normal;-webkit-text-stroke:0;">0 V</div>
<div class="t" style="left:1584.5px;top:821.6px;width:120px;text-align:right;font-size:15px;color:#8cc440;font-weight:normal;-webkit-text-stroke:0;">3.6 V</div>
<div class="t" style="left:1584.5px;top:852.6px;width:120px;text-align:right;font-size:15px;color:#8cc440;font-weight:normal;-webkit-text-stroke:0;">2.4 V</div>
<div class="t" style="left:1584.5px;top:883.6px;width:120px;text-align:right;font-size:15px;color:#8cc440;font-weight:normal;-webkit-text-stroke:0;">1.2 V</div>
<div class="t" style="left:1584.5px;top:914.6px;width:120px;text-align:right;font-size:15px;color:#8cc440;font-weight:normal;-webkit-text-stroke:0;">0 V</div>
<div class="t" style="left:1584.5px;top:945.6px;width:120px;text-align:right;font-size:15px;color:#8cc440;font-weight:normal;-webkit-text-stroke:0;">-1.2 V</div>
<div class="t" style="left:65.5px;top:426.7px;font-size:24px;color:#f0e040;font-weight:normal;letter-spacing:0.82px;">Vout</div>
<div class="t" style="left:62.3px;top:594.7px;font-size:24px;color:#40c8d0;font-weight:normal;letter-spacing:0.56px;">Iout</div>
<div class="t" style="left:63.0px;top:779.7px;font-size:24px;color:#e8305a;font-weight:normal;letter-spacing:-1.17px;">Vsw</div>
<div class="t" style="left:61.4px;top:932.7px;font-size:24px;color:#90c840;font-weight:normal;letter-spacing:0.54px;">Vfb</div>
<div class="t" style="left:1585.0px;top:129.6px;width:120px;text-align:right;font-size:15px;color:rgba(230,100,130,0.9);font-weight:normal;-webkit-text-stroke:0.15px currentColor;">420 V</div>
<div class="t" style="left:1585.0px;top:165.6px;width:120px;text-align:right;font-size:15px;color:rgba(230,100,130,0.9);font-weight:normal;-webkit-text-stroke:0.15px currentColor;">280 V</div>
<div class="t" style="left:1585.0px;top:200.6px;width:120px;text-align:right;font-size:15px;color:rgba(230,100,130,0.9);font-weight:normal;-webkit-text-stroke:0.15px currentColor;">140 V</div>
<div class="t" style="left:1585.0px;top:235.6px;width:120px;text-align:right;font-size:15px;color:rgba(230,100,130,0.9);font-weight:normal;-webkit-text-stroke:0.15px currentColor;">0 V</div>
<svg style="left:1655px;top:88px" width="58" height="58" viewBox="1655 88 58 58"><path d="M1662.5 94.6H1702.7V133.3Z" fill="none" stroke="#001820" stroke-width="5" stroke-linejoin="round"/><path d="M1662.5 94.6H1702.7V133.3Z" fill="rgba(70,70,70,0.8)" stroke="#28b4d4" stroke-width="2.2" stroke-linejoin="round"/><path d="M1682.3 113.6L1690.5 105" stroke="#28b4d4" stroke-width="2.6"/><circle cx="1694.2" cy="100.9" r="4.6" fill="none" stroke="#28b4d4" stroke-width="2.2"/><path d="M1691 130L1699.5 139.3" stroke="#001820" stroke-width="8"/><path d="M1691 130L1699.5 139.3" stroke="#2cc8d8" stroke-width="5.5" stroke-linecap="round"/><path d="M1703.5 131.2H1712" stroke="#2cc8d8" stroke-width="2.2"/></svg>
<div class="t" style="left:29.5px;top:267.0px;font-size:16px;color:#161616;font-weight:normal;letter-spacing:0.23px;">Horizontal Zoom Scale</div>
<div class="r" style="left:207px;top:266px;width:111px;height:21px;background:#d6d6d6;border-radius:4px;"></div>
<div class="t" style="left:222.0px;top:267.0px;font-size:16px;color:#111;font-weight:normal;letter-spacing:0.07px;">20.00 us/div</div>
<div class="r" style="left:336px;top:266px;width:45px;height:21px;background:#3a3a3a;border-radius:4px;border:1px solid #484848;"></div>
<div class="r" style="left:351px;top:275px;width:14px;height:3px;background:#6c6c6c;"></div>
<div class="r" style="left:357px;top:269px;width:3px;height:15px;background:#6c6c6c;"></div>
<div class="r" style="left:402px;top:266px;width:45px;height:21px;background:#3a3a3a;border-radius:4px;border:1px solid #484848;"></div>
<div class="r" style="left:417px;top:275px;width:14px;height:3px;background:#6c6c6c;"></div>
<div class="t" style="left:460.3px;top:267.0px;font-size:16px;color:#161616;font-weight:normal;letter-spacing:0.18px;">(20.00x zoom)</div>
<div class="t" style="left:589.0px;top:267.0px;font-size:16px;color:#161616;font-weight:normal;letter-spacing:0.40px;">Vertical Zoom</div>
<div class="r" style="left:706px;top:266px;width:45px;height:21px;background:#3a3a3a;border-radius:4px;border:1px solid #484848;"></div>
<div class="r" style="left:721px;top:275px;width:14px;height:3px;background:#6c6c6c;"></div>
<div class="r" style="left:727px;top:269px;width:3px;height:15px;background:#6c6c6c;"></div>
<div class="r" style="left:772px;top:266px;width:45px;height:21px;background:#3a3a3a;border-radius:4px;border:1px solid #484848;"></div>
<div class="r" style="left:787px;top:275px;width:14px;height:3px;background:#6c6c6c;"></div>
<div class="t" style="left:831.0px;top:267.0px;font-size:16px;color:#161616;font-weight:normal;letter-spacing:0.19px;">(1.00x zoom)</div>
<svg style="left:1680px;top:265px" width="24" height="24"><path d="M5 4L19 18M19 4L5 18" stroke="#d4d4d4" stroke-width="2.4"/></svg>
<div class="t" style="left:1740.9px;top:54.8px;width:160px;text-align:center;font-size:18px;color:#ececec;font-weight:bold;letter-spacing:0.83px;">Add New...</div>
<div class="r" style="left:1739px;top:81px;width:76px;height:45px;background:linear-gradient(#3c3c3c,#292929 40%,#252525);border-radius:7px;border:1.5px solid #474747;box-shadow:0 1px 1px #1a1a1a;"></div>
<div class="r" style="left:1739px;top:138px;width:76px;height:45px;background:linear-gradient(#3c3c3c,#292929 40%,#252525);border-radius:7px;border:1.5px solid #474747;box-shadow:0 1px 1px #1a1a1a;"></div>
<div class="r" style="left:1739px;top:193px;width:76px;height:45px;background:linear-gradient(#3c3c3c,#292929 40%,#252525);border-radius:7px;border:1.5px solid #474747;box-shadow:0 1px 1px #1a1a1a;"></div>
<div class="r" style="left:1739px;top:254px;width:76px;height:45px;background:linear-gradient(#3c3c3c,#292929 40%,#252525);border-radius:7px;border:1.5px solid #474747;box-shadow:0 1px 1px #1a1a1a;"></div>
<div class="r" style="left:1826px;top:81px;width:76px;height:45px;background:linear-gradient(#3c3c3c,#292929 40%,#252525);border-radius:7px;border:1.5px solid #474747;box-shadow:0 1px 1px #1a1a1a;"></div>
<div class="r" style="left:1826px;top:138px;width:76px;height:45px;background:linear-gradient(#3c3c3c,#292929 40%,#252525);border-radius:7px;border:1.5px solid #474747;box-shadow:0 1px 1px #1a1a1a;"></div>
<div class="r" style="left:1826px;top:193px;width:76px;height:45px;background:linear-gradient(#3c3c3c,#292929 40%,#252525);border-radius:7px;border:1.5px solid #474747;box-shadow:0 1px 1px #1a1a1a;"></div>
<div class="r" style="left:1826px;top:254px;width:76px;height:45px;background:linear-gradient(#3c3c3c,#292929 40%,#252525);border-radius:7px;border:1.5px solid #474747;box-shadow:0 1px 1px #1a1a1a;"></div>
<div class="t" style="left:1736.2px;top:94.1px;width:80px;text-align:center;font-size:18px;color:#f0f0f0;font-weight:normal;letter-spacing:-0.55px;">Cursors</div>
<div class="t" style="left:1823.8px;top:94.1px;width:80px;text-align:center;font-size:18px;color:#f0f0f0;font-weight:normal;letter-spacing:0.51px;">Callout</div>
<div class="t" style="left:1736.6px;top:149.9px;width:80px;text-align:center;font-size:18px;color:#f0f0f0;font-weight:normal;letter-spacing:0.13px;">Measure</div>
<div class="t" style="left:1823.2px;top:149.9px;width:80px;text-align:center;font-size:18px;color:#f0f0f0;font-weight:normal;letter-spacing:-0.67px;">Search</div>
<div class="t" style="left:1736.3px;top:195.4px;width:80px;text-align:center;font-size:18px;color:#f0f0f0;font-weight:normal;letter-spacing:-0.49px;">Results</div>
<div class="t" style="left:1736.4px;top:214.4px;width:80px;text-align:center;font-size:18px;color:#f0f0f0;font-weight:normal;letter-spacing:-0.13px;">Table</div>
<div class="t" style="left:1823.7px;top:204.9px;width:80px;text-align:center;font-size:18px;color:#f0f0f0;font-weight:normal;letter-spacing:0.46px;">Plot</div>
<div class="t" style="left:1823.7px;top:266.4px;width:80px;text-align:center;font-size:18px;color:#f0f0f0;font-weight:normal;letter-spacing:0.40px;">More...</div>
<svg style="left:1760px;top:262px" width="36" height="30"><rect x="5.5" y="2.5" width="22" height="21" fill="none" stroke="#cfcfcf" stroke-width="2" stroke-dasharray="3 2"/><circle cx="17" cy="11" r="5.5" fill="none" stroke="#cfcfcf" stroke-width="2"/><path d="M13 15L9 19" stroke="#cfcfcf" stroke-width="2.5"/><path d="M22 18L31 24L27 25L29 29L27 29.5L25 26L22 28Z" fill="#cfcfcf"/></svg>
<div class="r" style="left:1734px;top:245px;width:173px;height:1px;background:#505050;"></div>
<div class="r" style="left:1734px;top:307px;width:173px;height:1px;background:#505050;"></div>
<div class="r" style="left:1734px;top:322px;width:173px;height:66px;background:#c9c9c9;border-radius:5px;overflow:hidden;"></div>
<div class="r" style="left:1734px;top:322px;width:173px;height:22px;background:#5a5a5a;border-radius:5px 5px 0 0;"></div>
<div class="t" style="left:1740.7px;top:323.4px;font-size:17px;color:#f2f2f2;font-weight:normal;letter-spacing:0.05px;">Meas 1</div>
<div class="t" style="left:1740.7px;top:346.4px;font-size:17px;color:#111;font-weight:normal;letter-spacing:-0.14px;">Mean</div>
<div class="t" style="left:1740.7px;top:369.1px;font-size:17px;color:#111;font-weight:normal;letter-spacing:0.45px;">μ': 1.961 V</div>
<div class="r" style="left:1872px;top:326px;width:28px;height:16px;background:#88d030;border-radius:6px;border:1.5px solid rgba(10,20,5,0.75);"></div>
<div class="t" style="left:1872.0px;top:327.8px;width:28px;text-align:center;font-size:12px;color:#111;font-weight:normal;">4</div>
<div class="r" style="left:1734px;top:397.5px;width:173px;height:66.0px;background:#c9c9c9;border-radius:5px;overflow:hidden;"></div>
<div class="r" style="left:1734px;top:397.5px;width:173px;height:22.0px;background:#5a5a5a;border-radius:5px 5px 0 0;"></div>
<div class="t" style="left:1740.7px;top:398.9px;font-size:17px;color:#f2f2f2;font-weight:normal;letter-spacing:0.05px;">Meas 2</div>
<div class="t" style="left:1740.7px;top:421.9px;font-size:17px;color:#111;font-weight:normal;letter-spacing:0.46px;">Maximum</div>
<div class="t" style="left:1740.7px;top:444.6px;font-size:17px;color:#111;font-weight:normal;letter-spacing:0.45px;">μ': 20.79 V</div>
<div class="r" style="left:1872px;top:401.5px;width:28px;height:16.0px;background:#f0e840;border-radius:6px;border:1.5px solid rgba(10,20,5,0.75);"></div>
<div class="t" style="left:1872.0px;top:403.3px;width:28px;text-align:center;font-size:12px;color:#111;font-weight:normal;">1</div>
<div class="r" style="left:1734px;top:473px;width:173px;height:66px;background:#c9c9c9;border-radius:5px;overflow:hidden;"></div>
<div class="r" style="left:1734px;top:473px;width:173px;height:22px;background:#000;border-radius:5px 5px 0 0;"></div>
<div class="t" style="left:1740.7px;top:474.4px;font-size:17px;color:#f0e040;font-weight:normal;letter-spacing:0.05px;">Meas 3</div>
<div class="t" style="left:1740.7px;top:497.4px;font-size:17px;color:#111;font-weight:normal;letter-spacing:0.71px;">Minimum</div>
<div class="t" style="left:1740.7px;top:520.1px;font-size:17px;color:#111;font-weight:normal;letter-spacing:0.45px;">μ': 19.28 V</div>
<div class="r" style="left:1872px;top:477px;width:28px;height:16px;background:#f0e840;border-radius:6px;border:1.5px solid rgba(10,20,5,0.75);"></div>
<div class="t" style="left:1872.0px;top:478.8px;width:28px;text-align:center;font-size:12px;color:#111;font-weight:normal;">1</div>
<div class="r" style="left:1734px;top:548.5px;width:173px;height:66.0px;background:#c9c9c9;border-radius:5px;overflow:hidden;"></div>
<div class="r" style="left:1734px;top:548.5px;width:173px;height:22.0px;background:#5a5a5a;border-radius:5px 5px 0 0;"></div>
<div class="t" style="left:1740.7px;top:549.9px;font-size:17px;color:#f2f2f2;font-weight:normal;letter-spacing:0.05px;">Meas 4</div>
<div class="t" style="left:1740.7px;top:572.9px;font-size:17px;color:#111;font-weight:normal;letter-spacing:0.46px;">Maximum</div>
<div class="t" style="left:1740.7px;top:595.6px;font-size:17px;color:#111;font-weight:normal;letter-spacing:0.45px;">μ': 4.692 A</div>
<div class="r" style="left:1872px;top:552.5px;width:28px;height:16.0px;background:#40d0e0;border-radius:6px;border:1.5px solid rgba(10,20,5,0.75);"></div>
<div class="t" style="left:1872.0px;top:554.3px;width:28px;text-align:center;font-size:12px;color:#111;font-weight:normal;">2</div>
<div class="r" style="left:1734px;top:624px;width:173px;height:66px;background:#c9c9c9;border-radius:5px;overflow:hidden;"></div>
<div class="r" style="left:1734px;top:624px;width:173px;height:22px;background:#5a5a5a;border-radius:5px 5px 0 0;"></div>
<div class="t" style="left:1740.7px;top:625.4px;font-size:17px;color:#f2f2f2;font-weight:normal;letter-spacing:0.05px;">Meas 5</div>
<div class="t" style="left:1740.7px;top:648.4px;font-size:17px;color:#111;font-weight:normal;letter-spacing:0.46px;">Maximum</div>
<div class="t" style="left:1740.7px;top:671.1px;font-size:17px;color:#111;font-weight:normal;letter-spacing:0.58px;">μ': 511.2 V</div>
<div class="r" style="left:1872px;top:628px;width:28px;height:16px;background:#e84868;border-radius:6px;border:1.5px solid rgba(10,20,5,0.75);"></div>
<div class="t" style="left:1872.0px;top:629.8px;width:28px;text-align:center;font-size:12px;color:#111;font-weight:normal;">3</div>
<svg style="left:1717px;top:500px" width="10" height="24"><circle cx="5" cy="5" r="2.2" fill="#aaa"/><circle cx="5" cy="12" r="2.2" fill="#aaa"/><circle cx="5" cy="19" r="2.2" fill="#aaa"/></svg>
<div class="r" style="left:14px;top:979px;width:108px;height:89px;background:#c9c9c9;border-radius:6px;"></div>
<div class="r" style="left:14px;top:979px;width:108px;height:23px;background:#4a4720;border-radius:6px 6px 0 0;"></div>
<div class="t" style="left:20.2px;top:980.8px;font-size:18px;color:#ece040;font-weight:normal;letter-spacing:-1.01px;">Ch 1</div>
<div class="t" style="left:20.2px;top:1003.8px;font-size:18px;color:#111;font-weight:normal;letter-spacing:-0.35px;">4 V/div</div>
<svg style="left:20px;top:1024px" width="22" height="18" viewBox="0 0 22 18"><path d="M3 14V9Q3 2 10 2Q17 2 17 9" fill="none" stroke="#666" stroke-width="2"/><circle cx="10" cy="6" r="3" fill="none" stroke="#666" stroke-width="1.6"/><rect x="1" y="11" width="4" height="6" fill="none" stroke="#777" stroke-width="1.3"/><rect x="15" y="10" width="5" height="7" fill="#ddd" stroke="#777" stroke-width="1.3"/></svg>
<div class="t" style="left:20.2px;top:1048.3px;font-size:18px;color:#111;font-weight:normal;letter-spacing:-0.25px;">500 MHz</div>
<div class="r" style="left:128px;top:979px;width:108px;height:89px;background:#c9c9c9;border-radius:6px;"></div>
<div class="r" style="left:128px;top:979px;width:108px;height:23px;background:#1b4649;border-radius:6px 6px 0 0;"></div>
<div class="t" style="left:134.2px;top:980.8px;font-size:18px;color:#38c8d0;font-weight:normal;letter-spacing:-1.01px;">Ch 2</div>
<div class="t" style="left:134.2px;top:1003.8px;font-size:18px;color:#111;font-weight:normal;letter-spacing:-0.22px;">700 mA/div</div>
<div class="t" style="left:134.2px;top:1025.8px;font-size:18px;color:#111;font-weight:normal;letter-spacing:-0.22px;">1 MΩ</div>
<div class="t" style="left:134.2px;top:1048.3px;font-size:18px;color:#111;font-weight:normal;letter-spacing:-0.25px;">500 MHz</div>
<div class="r" style="left:242px;top:979px;width:108px;height:89px;background:#c9c9c9;border-radius:6px;"></div>
<div class="r" style="left:242px;top:979px;width:108px;height:23px;background:#e8405e;border-radius:6px 6px 0 0;"></div>
<div class="t" style="left:248.2px;top:980.8px;font-size:18px;color:#ffffff;font-weight:normal;letter-spacing:-1.01px;">Ch 3</div>
<div class="t" style="left:248.2px;top:1003.8px;font-size:18px;color:#111;font-weight:normal;letter-spacing:-0.41px;">70 V/div</div>
<div class="t" style="left:248.2px;top:1025.8px;font-size:18px;color:#111;font-weight:normal;letter-spacing:-0.22px;">1 MΩ</div>
<div class="t" style="left:248.2px;top:1048.3px;font-size:18px;color:#111;font-weight:normal;letter-spacing:-0.25px;">500 MHz</div>
<div class="r" style="left:356px;top:979px;width:108px;height:89px;background:#c9c9c9;border-radius:6px;"></div>
<div class="r" style="left:356px;top:979px;width:108px;height:23px;background:#3a4420;border-radius:6px 6px 0 0;"></div>
<div class="t" style="left:362.2px;top:980.8px;font-size:18px;color:#94cc40;font-weight:normal;letter-spacing:-1.01px;">Ch 4</div>
<div class="t" style="left:362.2px;top:1003.8px;font-size:18px;color:#111;font-weight:normal;letter-spacing:-0.33px;">600 mV/div</div>
<svg style="left:362px;top:1024px" width="22" height="18" viewBox="0 0 22 18"><path d="M3 14V9Q3 2 10 2Q17 2 17 9" fill="none" stroke="#666" stroke-width="2"/><circle cx="10" cy="6" r="3" fill="none" stroke="#666" stroke-width="1.6"/><rect x="1" y="11" width="4" height="6" fill="none" stroke="#777" stroke-width="1.3"/><rect x="15" y="10" width="5" height="7" fill="#ddd" stroke="#777" stroke-width="1.3"/></svg>
<div class="t" style="left:362.2px;top:1048.3px;font-size:18px;color:#111;font-weight:normal;letter-spacing:-0.25px;">500 MHz</div>
<div class="r" style="left:834px;top:973px;width:47px;height:94px;background:linear-gradient(#333,#282828);border-radius:6px;border:1.5px solid #474747;"></div>
<div class="r" style="left:839px;top:982px;width:37px;height:4px;background:#f0a040;border-radius:2px;"></div>
<div class="r" style="left:887px;top:973px;width:47px;height:94px;background:linear-gradient(#333,#282828);border-radius:6px;border:1.5px solid #474747;"></div>
<div class="r" style="left:892px;top:982px;width:37px;height:4px;background:#3030b8;border-radius:2px;"></div>
<div class="t" style="left:837.5px;top:1013.5px;width:40px;text-align:center;font-size:23px;color:#e8e8e8;font-weight:normal;">5</div>
<div class="t" style="left:890.5px;top:1013.5px;width:40px;text-align:center;font-size:23px;color:#e8e8e8;font-weight:normal;">6</div>
<div class="r" style="left:948px;top:975px;width:1px;height:91px;background:#505050;"></div>
<div class="r" style="left:960px;top:973px;width:47px;height:94px;background:linear-gradient(#333,#282828);border-radius:6px;border:1.5px solid #474747;"></div>
<div class="r" style="left:965px;top:982px;width:37px;height:4px;background:#f0a040;border-radius:2px;"></div>
<div class="r" style="left:1014px;top:973px;width:47px;height:94px;background:linear-gradient(#333,#282828);border-radius:6px;border:1.5px solid #474747;"></div>
<div class="r" style="left:1019px;top:982px;width:37px;height:4px;background:#c8c8c8;border-radius:2px;"></div>
<div class="r" style="left:1068px;top:973px;width:47px;height:94px;background:linear-gradient(#333,#282828);border-radius:6px;border:1.5px solid #474747;"></div>
<div class="r" style="left:1073px;top:982px;width:37px;height:4px;background:#b050e0;border-radius:2px;"></div>
<div class="t" style="left:953.4px;top:996.8px;width:60px;text-align:center;font-size:18px;color:#ececec;font-weight:normal;letter-spacing:-0.16px;">Add</div>
<div class="t" style="left:953.2px;top:1015.8px;width:60px;text-align:center;font-size:18px;color:#ececec;font-weight:normal;letter-spacing:-0.65px;">New</div>
<div class="t" style="left:953.4px;top:1035.3px;width:60px;text-align:center;font-size:18px;color:#ececec;font-weight:normal;letter-spacing:-0.24px;">Math</div>
<div class="t" style="left:1007.4px;top:996.8px;width:60px;text-align:center;font-size:18px;color:#ececec;font-weight:normal;letter-spacing:-0.16px;">Add</div>
<div class="t" style="left:1007.2px;top:1015.8px;width:60px;text-align:center;font-size:18px;color:#ececec;font-weight:normal;letter-spacing:-0.65px;">New</div>
<div class="t" style="left:1007.5px;top:1035.3px;width:60px;text-align:center;font-size:18px;color:#ececec;font-weight:normal;letter-spacing:-0.01px;">Ref</div>
<div class="t" style="left:1061.4px;top:996.8px;width:60px;text-align:center;font-size:18px;color:#ececec;font-weight:normal;letter-spacing:-0.16px;">Add</div>
<div class="t" style="left:1061.2px;top:1015.8px;width:60px;text-align:center;font-size:18px;color:#ececec;font-weight:normal;letter-spacing:-0.65px;">New</div>
<div class="t" style="left:1061.5px;top:1035.3px;width:60px;text-align:center;font-size:18px;color:#ececec;font-weight:normal;letter-spacing:-0.01px;">Bus</div>
<div class="r" style="left:1128px;top:975px;width:1px;height:91px;background:#505050;"></div>
<div class="r" style="left:1142px;top:980px;width:238px;height:87px;background:#c9c9c9;border-radius:5px;"></div>
<div class="r" style="left:1142px;top:980px;width:238px;height:23px;background:#5a5a5a;border-radius:5px 5px 0 0;"></div>
<div class="t" style="left:1148.0px;top:981.8px;font-size:18px;color:#f2f2f2;font-weight:normal;letter-spacing:0.73px;">Horizontal</div>
<div class="t" style="left:1148.0px;top:1003.8px;font-size:18px;color:#111;font-weight:normal;letter-spacing:-0.47px;">400 µs/div</div>
<div class="t" style="left:1148.0px;top:1026.3px;font-size:18px;color:#111;font-weight:normal;letter-spacing:-0.94px;">SR: 62.5 MS/s</div>
<div class="t" style="left:1148.0px;top:1048.3px;font-size:18px;color:#111;font-weight:normal;letter-spacing:-0.61px;">RL: 250 kpts</div>
<div class="t" style="left:1274.0px;top:1003.8px;font-size:18px;color:#111;font-weight:normal;letter-spacing:-0.90px;">4 ms</div>
<div class="t" style="left:1274.5px;top:1026.3px;font-size:18px;color:#111;font-weight:normal;letter-spacing:-0.22px;">16 ns/pt</div>
<svg style="left:1273px;top:1049px" width="14" height="16"><path d="M1 1H12V10L6.5 15L1 10Z" fill="#1a1a1a" stroke="#e88a20" stroke-width="1.5"/><text x="6.5" y="10" text-anchor="middle" font-family="Liberation Sans" font-size="8" font-weight="bold" fill="#fff">T</text></svg>
<div class="t" style="left:1291.3px;top:1048.3px;font-size:18px;color:#111;font-weight:normal;letter-spacing:0.14px;">76%</div>
<div class="r" style="left:1388px;top:980px;width:190px;height:87px;background:#c9c9c9;border-radius:5px;"></div>
<div class="r" style="left:1388px;top:980px;width:190px;height:23px;background:#5a5a5a;border-radius:5px 5px 0 0;"></div>
<div class="t" style="left:1394.0px;top:981.8px;font-size:18px;color:#f2f2f2;font-weight:normal;letter-spacing:0.46px;">Trigger</div>
<div class="r" style="left:1393px;top:1004px;width:36px;height:19px;background:#30c8d8;border-radius:5px;border:1.5px solid #155;"></div>
<div class="t" style="left:1396.0px;top:1004.6px;width:30px;text-align:center;font-size:17px;color:#111;font-weight:normal;">2</div>
<svg style="left:1438px;top:1004px" width="26" height="18"><path d="M2 4H8L15 14H22" fill="none" stroke="#555" stroke-width="1.8"/></svg>
<div class="t" style="left:1472.3px;top:1003.8px;font-size:18px;color:#111;font-weight:normal;letter-spacing:0.15px;">3.89 A</div>
<div class="r" style="left:1586px;top:980px;width:178px;height:87px;background:#c9c9c9;border-radius:5px;"></div>
<div class="r" style="left:1586px;top:980px;width:178px;height:23px;background:#5a5a5a;border-radius:5px 5px 0 0;"></div>
<div class="t" style="left:1592.0px;top:981.8px;font-size:18px;color:#f2f2f2;font-weight:normal;letter-spacing:0.58px;">Acquisition</div>
<div class="t" style="left:1591.5px;top:1003.8px;font-size:18px;color:#111;font-weight:normal;letter-spacing:-0.23px;">Auto,</div>
<div class="t" style="left:1688.0px;top:1003.8px;font-size:18px;color:#111;font-weight:normal;letter-spacing:-0.82px;">Analyze</div>
<div class="t" style="left:1591.0px;top:1026.3px;font-size:18px;color:#111;font-weight:normal;letter-spacing:-0.46px;">Sample: 12 bits</div>
<div class="t" style="left:1591.0px;top:1048.3px;font-size:18px;color:#111;font-weight:normal;letter-spacing:-0.57px;">Single: 1 /1</div>
<div class="r" style="left:1779px;top:975px;width:1px;height:91px;background:#505050;"></div>
<div class="r" style="left:1791px;top:972px;width:110px;height:44px;background:#ee2424;border-radius:6px;border:1.5px solid #c81818;"></div>
<div class="t" style="left:1790.5px;top:984.6px;width:110px;text-align:center;font-size:17px;color:#ffffff;font-weight:bold;letter-spacing:0.07px;">Stopped</div>
<div class="r" style="left:1791px;top:1022px;width:110px;height:45px;background:#c9c9c9;border-radius:6px;"></div>
<div class="t" style="left:1790.3px;top:1025.8px;width:110px;text-align:center;font-size:18px;color:#111;font-weight:normal;letter-spacing:-0.36px;">05 Nov 2025</div>
<div class="t" style="left:1790.3px;top:1045.8px;width:110px;text-align:center;font-size:18px;color:#111;font-weight:normal;letter-spacing:-0.38px;">3:53:16 PM</div>
<div class="r" style="left:1729px;top:52px;width:181px;height:1px;background:#5a5a5a;"></div>
<div class="r" style="left:1729px;top:52px;width:1px;height:917px;background:#5a5a5a;"></div>
<div class="r" style="left:1729px;top:968px;width:181px;height:1px;background:#5a5a5a;"></div>
</body></html>
